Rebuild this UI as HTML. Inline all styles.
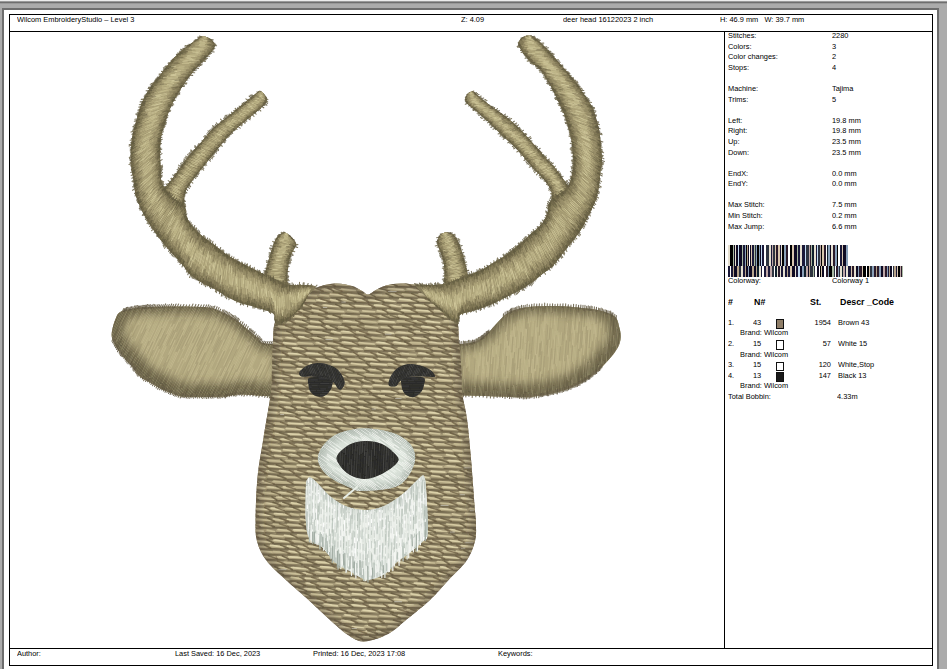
<!DOCTYPE html>
<html><head><meta charset="utf-8">
<style>
html,body{margin:0;padding:0;}
body{width:947px;height:669px;overflow:hidden;position:relative;background:#ababab;font-family:"Liberation Sans",sans-serif;color:#111;}
.a{position:absolute;}
.t{position:absolute;font-size:7.8px;line-height:9px;white-space:nowrap;transform:scaleX(0.95);transform-origin:0 0;color:#000;}
.ln{position:absolute;background:#000;}
</style></head><body>
<div class="a" style="left:0;top:0;width:947px;height:1px;background:#ededed"></div>
<div class="a" style="left:0;top:1px;width:947px;height:1px;background:#9a9a9a"></div>
<div class="a" style="left:0;top:2px;width:947px;height:1px;background:#6e6e6e"></div>
<div class="a" style="left:0;top:3px;width:947px;height:1px;background:#999"></div>
<!-- page -->
<div class="a" style="left:2px;top:8px;width:937px;height:661px;background:#6d6d6d"></div>
<div class="a" style="left:4px;top:10px;width:933px;height:659px;background:#fff"></div>
<!-- frame -->
<div class="ln" style="left:9px;top:14px;width:924px;height:1px"></div>
<div class="ln" style="left:9px;top:31px;width:924px;height:1px"></div>
<div class="ln" style="left:9px;top:648px;width:924px;height:1px"></div>
<div class="ln" style="left:9px;top:665px;width:924px;height:1px"></div>
<div class="ln" style="left:9px;top:14px;width:1px;height:652px"></div>
<div class="ln" style="left:932px;top:14px;width:1px;height:652px"></div>
<div class="ln" style="left:724px;top:31px;width:1px;height:617px"></div>

<!-- header texts -->
<div class="t" style="left:17px;top:15px">Wilcom EmbroideryStudio – Level 3</div>
<div class="t" style="left:461px;top:15px">Z: 4.09</div>
<div class="t" style="left:563px;top:15px">deer head 16122023 2 inch</div>
<div class="t" style="left:720px;top:15px">H: 46.9 mm&nbsp;&nbsp; W: 39.7 mm</div>

<!-- footer texts -->
<div class="t" style="left:17px;top:649px">Author:</div>
<div class="t" style="left:175px;top:649px">Last Saved: 16 Dec, 2023</div>
<div class="t" style="left:313px;top:649px">Printed: 16 Dec, 2023 17:08</div>
<div class="t" style="left:498px;top:649px">Keywords:</div>

<!-- right panel -->
<div id="panel">
<div class="t" style="left:728px;top:31.3px">Stitches:</div>
<div class="t" style="left:832px;top:31.3px">2280</div>
<div class="t" style="left:728px;top:41.9px">Colors:</div>
<div class="t" style="left:832px;top:41.9px">3</div>
<div class="t" style="left:728px;top:52.4px">Color changes:</div>
<div class="t" style="left:832px;top:52.4px">2</div>
<div class="t" style="left:728px;top:63.0px">Stops:</div>
<div class="t" style="left:832px;top:63.0px">4</div>
<div class="t" style="left:728px;top:84.2px">Machine:</div>
<div class="t" style="left:832px;top:84.2px">Tajima</div>
<div class="t" style="left:728px;top:94.7px">Trims:</div>
<div class="t" style="left:832px;top:94.7px">5</div>
<div class="t" style="left:728px;top:115.9px">Left:</div>
<div class="t" style="left:832px;top:115.9px">19.8 mm</div>
<div class="t" style="left:728px;top:126.4px">Right:</div>
<div class="t" style="left:832px;top:126.4px">19.8 mm</div>
<div class="t" style="left:728px;top:137.0px">Up:</div>
<div class="t" style="left:832px;top:137.0px">23.5 mm</div>
<div class="t" style="left:728px;top:147.6px">Down:</div>
<div class="t" style="left:832px;top:147.6px">23.5 mm</div>
<div class="t" style="left:728px;top:168.7px">EndX:</div>
<div class="t" style="left:832px;top:168.7px">0.0 mm</div>
<div class="t" style="left:728px;top:179.3px">EndY:</div>
<div class="t" style="left:832px;top:179.3px">0.0 mm</div>
<div class="t" style="left:728px;top:200.4px">Max Stitch:</div>
<div class="t" style="left:832px;top:200.4px">7.5 mm</div>
<div class="t" style="left:728px;top:211.0px">Min Stitch:</div>
<div class="t" style="left:832px;top:211.0px">0.2 mm</div>
<div class="t" style="left:728px;top:221.6px">Max Jump:</div>
<div class="t" style="left:832px;top:221.6px">6.6 mm</div>
<svg class="a" style="left:0;top:0" width="947" height="669" viewBox="0 0 947 669" shape-rendering="crispEdges"><rect x="728" y="245" width="2" height="21" fill="#e6e0d0"/><rect x="730" y="245" width="3" height="21" fill="#000000"/><rect x="733" y="245" width="1" height="21" fill="#a9b9a2"/><rect x="734" y="245" width="1" height="21" fill="#0e0a22"/><rect x="735" y="245" width="1" height="21" fill="#e6e0d0"/><rect x="736" y="245" width="2" height="21" fill="#0e0a22"/><rect x="738" y="245" width="1" height="21" fill="#c4dcf2"/><rect x="739" y="245" width="3" height="21" fill="#0e0a22"/><rect x="742" y="245" width="1" height="21" fill="#a9b9a2"/><rect x="743" y="245" width="2" height="21" fill="#1a1838"/><rect x="745" y="245" width="1" height="21" fill="#8aa0b8"/><rect x="746" y="245" width="1" height="21" fill="#000000"/><rect x="747" y="245" width="1" height="21" fill="#b8a48c"/><rect x="748" y="245" width="1" height="21" fill="#0e0a22"/><rect x="749" y="245" width="1" height="21" fill="#ffffff"/><rect x="750" y="245" width="1" height="21" fill="#0e0a22"/><rect x="751" y="245" width="1" height="21" fill="#d8c6ae"/><rect x="752" y="245" width="2" height="21" fill="#1a1838"/><rect x="754" y="245" width="1" height="21" fill="#a9b9a2"/><rect x="755" y="245" width="1" height="21" fill="#2e3440"/><rect x="756" y="245" width="1" height="21" fill="#8aa0b8"/><rect x="757" y="245" width="2" height="21" fill="#000000"/><rect x="759" y="245" width="1" height="21" fill="#8aa0b8"/><rect x="760" y="245" width="1" height="21" fill="#0e0a22"/><rect x="761" y="245" width="1" height="21" fill="#c4dcf2"/><rect x="762" y="245" width="2" height="21" fill="#1a1838"/><rect x="764" y="245" width="2" height="21" fill="#ffffff"/><rect x="766" y="245" width="3" height="21" fill="#2e3440"/><rect x="769" y="245" width="2" height="21" fill="#e6e0d0"/><rect x="771" y="245" width="1" height="21" fill="#1a1838"/><rect x="772" y="245" width="1" height="21" fill="#bda6a6"/><rect x="773" y="245" width="2" height="21" fill="#2e3440"/><rect x="775" y="245" width="1" height="21" fill="#d8c6ae"/><rect x="776" y="245" width="2" height="21" fill="#2a1a2a"/><rect x="778" y="245" width="2" height="21" fill="#d8c6ae"/><rect x="780" y="245" width="1" height="21" fill="#1a1838"/><rect x="781" y="245" width="1" height="21" fill="#e6e0d0"/><rect x="782" y="245" width="2" height="21" fill="#000000"/><rect x="784" y="245" width="2" height="21" fill="#8aa0b8"/><rect x="786" y="245" width="2" height="21" fill="#2a1a2a"/><rect x="788" y="245" width="2" height="21" fill="#ffffff"/><rect x="790" y="245" width="2" height="21" fill="#000000"/><rect x="792" y="245" width="2" height="21" fill="#d8c6ae"/><rect x="794" y="245" width="3" height="21" fill="#0e0a22"/><rect x="797" y="245" width="1" height="21" fill="#a9b9a2"/><rect x="798" y="245" width="2" height="21" fill="#1a1838"/><rect x="800" y="245" width="2" height="21" fill="#e6e0d0"/><rect x="802" y="245" width="3" height="21" fill="#1a1838"/><rect x="805" y="245" width="1" height="21" fill="#c4dcf2"/><rect x="806" y="245" width="3" height="21" fill="#2e3440"/><rect x="809" y="245" width="1" height="21" fill="#bda6a6"/><rect x="810" y="245" width="1" height="21" fill="#2a1a2a"/><rect x="811" y="245" width="1" height="21" fill="#a9b9a2"/><rect x="812" y="245" width="2" height="21" fill="#10202c"/><rect x="814" y="245" width="2" height="21" fill="#e6e0d0"/><rect x="816" y="245" width="1" height="21" fill="#1a1838"/><rect x="817" y="245" width="1" height="21" fill="#c4dcf2"/><rect x="818" y="245" width="2" height="21" fill="#2e3440"/><rect x="820" y="245" width="1" height="21" fill="#bda6a6"/><rect x="821" y="245" width="1" height="21" fill="#000000"/><rect x="822" y="245" width="2" height="21" fill="#d8c6ae"/><rect x="824" y="245" width="2" height="21" fill="#2a1a2a"/><rect x="826" y="245" width="1" height="21" fill="#ffffff"/><rect x="827" y="245" width="1" height="21" fill="#10202c"/><rect x="828" y="245" width="2" height="21" fill="#8aa0b8"/><rect x="830" y="245" width="1" height="21" fill="#0e0a22"/><rect x="831" y="245" width="2" height="21" fill="#e6e0d0"/><rect x="833" y="245" width="2" height="21" fill="#2a1a2a"/><rect x="835" y="245" width="2" height="21" fill="#8aa0b8"/><rect x="837" y="245" width="1" height="21" fill="#000000"/><rect x="838" y="245" width="2" height="21" fill="#ffffff"/><rect x="840" y="245" width="2" height="21" fill="#1a1838"/><rect x="842" y="245" width="1" height="21" fill="#d8c6ae"/><rect x="843" y="245" width="3" height="21" fill="#0e0a22"/><rect x="846" y="245" width="2" height="21" fill="#8aa0b8"/><rect x="728" y="266" width="2" height="11" fill="#1a1838"/><rect x="730" y="266" width="1" height="11" fill="#ffffff"/><rect x="731" y="266" width="2" height="11" fill="#1a1838"/><rect x="733" y="266" width="1" height="11" fill="#b8a48c"/><rect x="734" y="266" width="3" height="11" fill="#0e0a22"/><rect x="737" y="266" width="2" height="11" fill="#b8a48c"/><rect x="739" y="266" width="2" height="11" fill="#2e3440"/><rect x="741" y="266" width="2" height="11" fill="#e6e0d0"/><rect x="743" y="266" width="2" height="11" fill="#1a1838"/><rect x="745" y="266" width="1" height="11" fill="#b8a48c"/><rect x="746" y="266" width="2" height="11" fill="#0e0a22"/><rect x="748" y="266" width="1" height="11" fill="#8aa0b8"/><rect x="749" y="266" width="3" height="11" fill="#0e0a22"/><rect x="752" y="266" width="2" height="11" fill="#b8a48c"/><rect x="754" y="266" width="2" height="11" fill="#0e0a22"/><rect x="756" y="266" width="1" height="11" fill="#b8a48c"/><rect x="757" y="266" width="2" height="11" fill="#10202c"/><rect x="759" y="266" width="2" height="11" fill="#e6e0d0"/><rect x="761" y="266" width="1" height="11" fill="#1a1838"/><rect x="762" y="266" width="2" height="11" fill="#ffffff"/><rect x="764" y="266" width="2" height="11" fill="#1a1838"/><rect x="766" y="266" width="2" height="11" fill="#bda6a6"/><rect x="768" y="266" width="2" height="11" fill="#1a1838"/><rect x="770" y="266" width="2" height="11" fill="#bda6a6"/><rect x="772" y="266" width="2" height="11" fill="#2e3440"/><rect x="774" y="266" width="1" height="11" fill="#ffffff"/><rect x="775" y="266" width="2" height="11" fill="#10202c"/><rect x="777" y="266" width="1" height="11" fill="#e6e0d0"/><rect x="778" y="266" width="2" height="11" fill="#2a1a2a"/><rect x="780" y="266" width="1" height="11" fill="#e6e0d0"/><rect x="781" y="266" width="2" height="11" fill="#1a1838"/><rect x="783" y="266" width="2" height="11" fill="#e6e0d0"/><rect x="785" y="266" width="2" height="11" fill="#1a1838"/><rect x="787" y="266" width="1" height="11" fill="#b8a48c"/><rect x="788" y="266" width="2" height="11" fill="#1a1838"/><rect x="790" y="266" width="2" height="11" fill="#d8c6ae"/><rect x="792" y="266" width="3" height="11" fill="#0e0a22"/><rect x="795" y="266" width="1" height="11" fill="#e6e0d0"/><rect x="796" y="266" width="2" height="11" fill="#1a1838"/><rect x="798" y="266" width="2" height="11" fill="#c4dcf2"/><rect x="800" y="266" width="2" height="11" fill="#0e0a22"/><rect x="802" y="266" width="2" height="11" fill="#8aa0b8"/><rect x="804" y="266" width="2" height="11" fill="#10202c"/><rect x="806" y="266" width="2" height="11" fill="#bda6a6"/><rect x="808" y="266" width="1" height="11" fill="#0e0a22"/><rect x="809" y="266" width="1" height="11" fill="#b8a48c"/><rect x="810" y="266" width="3" height="11" fill="#2e3440"/><rect x="813" y="266" width="1" height="11" fill="#a9b9a2"/><rect x="814" y="266" width="1" height="11" fill="#2e3440"/><rect x="815" y="266" width="2" height="11" fill="#ffffff"/><rect x="817" y="266" width="2" height="11" fill="#0e0a22"/><rect x="819" y="266" width="1" height="11" fill="#ffffff"/><rect x="820" y="266" width="1" height="11" fill="#000000"/><rect x="821" y="266" width="1" height="11" fill="#d8c6ae"/><rect x="822" y="266" width="2" height="11" fill="#0e0a22"/><rect x="824" y="266" width="2" height="11" fill="#ffffff"/><rect x="826" y="266" width="2" height="11" fill="#2a1a2a"/><rect x="828" y="266" width="1" height="11" fill="#8aa0b8"/><rect x="829" y="266" width="3" height="11" fill="#000000"/><rect x="832" y="266" width="2" height="11" fill="#a9b9a2"/><rect x="834" y="266" width="1" height="11" fill="#2e3440"/><rect x="835" y="266" width="1" height="11" fill="#ffffff"/><rect x="836" y="266" width="2" height="11" fill="#2a1a2a"/><rect x="838" y="266" width="1" height="11" fill="#8aa0b8"/><rect x="839" y="266" width="1" height="11" fill="#2e3440"/><rect x="840" y="266" width="2" height="11" fill="#e6e0d0"/><rect x="842" y="266" width="1" height="11" fill="#10202c"/><rect x="843" y="266" width="2" height="11" fill="#bda6a6"/><rect x="845" y="266" width="1" height="11" fill="#1a1838"/><rect x="846" y="266" width="2" height="11" fill="#e6e0d0"/><rect x="848" y="266" width="3" height="11" fill="#1a1838"/><rect x="851" y="266" width="1" height="11" fill="#d8c6ae"/><rect x="852" y="266" width="2" height="11" fill="#2a1a2a"/><rect x="854" y="266" width="2" height="11" fill="#e6e0d0"/><rect x="856" y="266" width="2" height="11" fill="#0e0a22"/><rect x="858" y="266" width="1" height="11" fill="#8aa0b8"/><rect x="859" y="266" width="3" height="11" fill="#2a1a2a"/><rect x="862" y="266" width="1" height="11" fill="#d8c6ae"/><rect x="863" y="266" width="3" height="11" fill="#000000"/><rect x="866" y="266" width="1" height="11" fill="#ffffff"/><rect x="867" y="266" width="2" height="11" fill="#000000"/><rect x="869" y="266" width="1" height="11" fill="#d8c6ae"/><rect x="870" y="266" width="2" height="11" fill="#2e3440"/><rect x="872" y="266" width="2" height="11" fill="#8aa0b8"/><rect x="874" y="266" width="2" height="11" fill="#2a1a2a"/><rect x="876" y="266" width="1" height="11" fill="#b8a48c"/><rect x="877" y="266" width="2" height="11" fill="#2a1a2a"/><rect x="879" y="266" width="2" height="11" fill="#8aa0b8"/><rect x="881" y="266" width="2" height="11" fill="#0e0a22"/><rect x="883" y="266" width="2" height="11" fill="#bda6a6"/><rect x="885" y="266" width="2" height="11" fill="#2a1a2a"/><rect x="887" y="266" width="1" height="11" fill="#8aa0b8"/><rect x="888" y="266" width="1" height="11" fill="#1a1838"/><rect x="889" y="266" width="1" height="11" fill="#b8a48c"/><rect x="890" y="266" width="2" height="11" fill="#0e0a22"/><rect x="892" y="266" width="1" height="11" fill="#ffffff"/><rect x="893" y="266" width="1" height="11" fill="#2e3440"/><rect x="894" y="266" width="2" height="11" fill="#b8a48c"/><rect x="896" y="266" width="1" height="11" fill="#1a1838"/><rect x="897" y="266" width="1" height="11" fill="#d8c6ae"/><rect x="898" y="266" width="2" height="11" fill="#000000"/><rect x="900" y="266" width="1" height="11" fill="#bda6a6"/><rect x="901" y="266" width="1" height="11" fill="#2a1a2a"/><rect x="902" y="266" width="1" height="11" fill="#a9b9a2"/></svg>
<div class="t" style="left:728px;top:275.5px">Colorway:</div>
<div class="t" style="left:832px;top:275.5px">Colorway 1</div>
<div class="t" style="left:728px;top:297px;font-size:9.3px;font-weight:bold;line-height:11px">#</div>
<div class="t" style="left:753.5px;top:297px;font-size:9.3px;font-weight:bold;line-height:11px">N#</div>
<div class="t" style="left:810px;top:297px;font-size:9.3px;font-weight:bold;line-height:11px">St.</div>
<div class="t" style="left:840px;top:297px;font-size:9.3px;font-weight:bold;line-height:11px">Descr _Code</div>
<div class="t" style="left:728px;top:317.7px">1.</div>
<div class="t" style="left:752.5px;top:317.7px">43</div>
<div class="a" style="left:776px;top:319.2px;width:6px;height:7.5px;border:1px solid #111;background:#8f7e68"></div>
<div class="t" style="left:780px;width:51px;text-align:right;transform-origin:100% 0;top:317.7px">1954</div>
<div class="t" style="left:837.5px;top:317.7px">Brown 43</div>
<div class="t" style="left:740px;top:328.3px">Brand: Wilcom</div>
<div class="t" style="left:728px;top:338.9px">2.</div>
<div class="t" style="left:752.5px;top:338.9px">15</div>
<div class="a" style="left:776px;top:340.4px;width:6px;height:7.5px;border:1px solid #111;background:#ffffff"></div>
<div class="t" style="left:780px;width:51px;text-align:right;transform-origin:100% 0;top:338.9px">57</div>
<div class="t" style="left:837.5px;top:338.9px">White 15</div>
<div class="t" style="left:740px;top:349.5px">Brand: Wilcom</div>
<div class="t" style="left:728px;top:360.1px">3.</div>
<div class="t" style="left:752.5px;top:360.1px">15</div>
<div class="a" style="left:776px;top:361.6px;width:6px;height:7.5px;border:1px solid #111;background:#ffffff"></div>
<div class="t" style="left:780px;width:51px;text-align:right;transform-origin:100% 0;top:360.1px">120</div>
<div class="t" style="left:837.5px;top:360.1px">White,Stop</div>
<div class="t" style="left:728px;top:370.7px">4.</div>
<div class="t" style="left:752.5px;top:370.7px">13</div>
<div class="a" style="left:776px;top:372.2px;width:6px;height:7.5px;border:1px solid #111;background:#1a1a1a"></div>
<div class="t" style="left:780px;width:51px;text-align:right;transform-origin:100% 0;top:370.7px">147</div>
<div class="t" style="left:837.5px;top:370.7px">Black 13</div>
<div class="t" style="left:740px;top:381.3px">Brand: Wilcom</div>
<div class="t" style="left:728px;top:391.9px">Total Bobbin:</div>
<div class="t" style="left:836.5px;top:391.9px">4.33m</div>
</div>

<!-- deer -->
<svg id="deer" class="a" style="left:0;top:0" width="947" height="669" viewBox="0 0 947 669">
<defs><filter id="soft" x="-5%" y="-5%" width="110%" height="110%"><feGaussianBlur stdDeviation="0.35"/></filter><filter id="soft2" x="-5%" y="-5%" width="110%" height="110%"><feGaussianBlur stdDeviation="0.55"/></filter><filter id="blur5" x="-20%" y="-20%" width="140%" height="140%"><feGaussianBlur stdDeviation="5"/></filter><filter id="blur3" x="-20%" y="-20%" width="140%" height="140%"><feGaussianBlur stdDeviation="3"/></filter></defs>
<g filter="url(#soft)">
<clipPath id="le"><path d="M112.0,331.0C112.5,327.7 114.0,322.2 115.5,319.0C117.0,315.8 117.2,313.5 120.7,311.7C124.2,309.9 131.2,308.8 136.4,308.0C141.6,307.2 145.6,307.2 152.0,307.0C158.4,306.8 165.7,306.4 175.0,306.5C184.3,306.6 199.8,306.5 207.6,307.4C215.4,308.3 217.2,309.9 222.0,312.0C226.8,314.1 232.1,317.2 236.3,320.0C240.5,322.8 243.4,326.0 247.0,329.0C250.6,332.0 255.3,335.5 257.8,337.8C260.3,340.1 259.5,341.7 262.0,342.7C264.5,343.7 269.4,343.8 272.7,344.0C276.0,344.2 280.4,335.2 282.0,344.0C283.6,352.8 283.7,387.8 282.0,396.5C280.3,405.2 279.0,396.8 272.0,396.5C265.0,396.2 247.9,394.5 240.0,394.5C232.1,394.5 230.6,396.1 224.5,396.5C218.4,396.9 210.5,397.0 203.4,397.0C196.3,397.0 187.5,397.1 182.2,396.5C176.9,395.9 175.2,394.6 171.7,393.3C168.2,392.1 164.6,390.8 161.1,389.0C157.6,387.2 154.1,384.8 150.6,382.7C147.1,380.6 143.3,379.3 140.0,376.4C136.7,373.4 133.3,367.7 131.0,365.0C128.7,362.3 128.2,362.6 126.0,360.0C123.8,357.4 119.9,352.9 117.6,349.4C115.3,345.9 113.2,342.1 112.3,339.0C111.4,335.9 111.5,334.3 112.0,331.0Z"/></clipPath>
<path d="M112.0,331.0C112.5,327.7 114.0,322.2 115.5,319.0C117.0,315.8 117.2,313.5 120.7,311.7C124.2,309.9 131.2,308.8 136.4,308.0C141.6,307.2 145.6,307.2 152.0,307.0C158.4,306.8 165.7,306.4 175.0,306.5C184.3,306.6 199.8,306.5 207.6,307.4C215.4,308.3 217.2,309.9 222.0,312.0C226.8,314.1 232.1,317.2 236.3,320.0C240.5,322.8 243.4,326.0 247.0,329.0C250.6,332.0 255.3,335.5 257.8,337.8C260.3,340.1 259.5,341.7 262.0,342.7C264.5,343.7 269.4,343.8 272.7,344.0C276.0,344.2 280.4,335.2 282.0,344.0C283.6,352.8 283.7,387.8 282.0,396.5C280.3,405.2 279.0,396.8 272.0,396.5C265.0,396.2 247.9,394.5 240.0,394.5C232.1,394.5 230.6,396.1 224.5,396.5C218.4,396.9 210.5,397.0 203.4,397.0C196.3,397.0 187.5,397.1 182.2,396.5C176.9,395.9 175.2,394.6 171.7,393.3C168.2,392.1 164.6,390.8 161.1,389.0C157.6,387.2 154.1,384.8 150.6,382.7C147.1,380.6 143.3,379.3 140.0,376.4C136.7,373.4 133.3,367.7 131.0,365.0C128.7,362.3 128.2,362.6 126.0,360.0C123.8,357.4 119.9,352.9 117.6,349.4C115.3,345.9 113.2,342.1 112.3,339.0C111.4,335.9 111.5,334.3 112.0,331.0Z" fill="#b5ab82"/>
<g clip-path="url(#le)"><path d="M112.0,331.0C112.5,327.7 114.0,322.2 115.5,319.0C117.0,315.8 117.2,313.5 120.7,311.7C124.2,309.9 131.2,308.8 136.4,308.0C141.6,307.2 145.6,307.2 152.0,307.0C158.4,306.8 165.7,306.4 175.0,306.5C184.3,306.6 199.8,306.5 207.6,307.4C215.4,308.3 217.2,309.9 222.0,312.0C226.8,314.1 232.1,317.2 236.3,320.0C240.5,322.8 243.4,326.0 247.0,329.0C250.6,332.0 255.3,335.5 257.8,337.8C260.3,340.1 259.5,341.7 262.0,342.7C264.5,343.7 269.4,343.8 272.7,344.0C276.0,344.2 280.4,335.2 282.0,344.0C283.6,352.8 283.7,387.8 282.0,396.5C280.3,405.2 279.0,396.8 272.0,396.5C265.0,396.2 247.9,394.5 240.0,394.5C232.1,394.5 230.6,396.1 224.5,396.5C218.4,396.9 210.5,397.0 203.4,397.0C196.3,397.0 187.5,397.1 182.2,396.5C176.9,395.9 175.2,394.6 171.7,393.3C168.2,392.1 164.6,390.8 161.1,389.0C157.6,387.2 154.1,384.8 150.6,382.7C147.1,380.6 143.3,379.3 140.0,376.4C136.7,373.4 133.3,367.7 131.0,365.0C128.7,362.3 128.2,362.6 126.0,360.0C123.8,357.4 119.9,352.9 117.6,349.4C115.3,345.9 113.2,342.1 112.3,339.0C111.4,335.9 111.5,334.3 112.0,331.0Z" fill="none" stroke="#554d38" stroke-width="20" filter="url(#blur5)" opacity="0.95" transform="translate(2,-3)"/></g><g clip-path="url(#le)"><path d="M282.5 396.5l-8.4 18M284.5 386.2l-8.4 17.9M288.7 367.6l-9.1 19.4M289.6 362.6l-9.3 19.9M289.3 353.5l-7.5 16.9M275 385.1l-9.1 19.4M276.6 377.8l-5.6 12M275.2 375.1l-5.2 10.9M269.7 386.9l-9 19.1M269.3 384.2l-7.3 16.1M284.8 348.5l-8.9 19.2M272.8 367.9l-9.3 19.6M259.3 393.8l-4.9 10.6M277.7 351l-5.9 12.9M256.3 397.4l-9.3 19.8M263.2 379.5l-9.1 19M253.1 397.6l-7.9 17M270.4 357.3l-6.7 14.9M281 332.1l-7.4 15.4M289.2 311.5l-6.6 13.6M282.4 325.4l-5.4 11.6M268.3 356.3l-5.8 11.8M262.4 368.8l-5.5 11.4M265.5 359.2l-8 16.7M250.9 390.4l-7.5 16.4M263.3 357.5l-7 15.3M255.5 374l-7.7 16.6M284.7 308.5l-7.4 15.9M256.1 369.8l-5 10.3M251 380.7l-6.9 14.4M286.4 301.4l-7.7 17.3M270.9 335l-5.3 11.2M280.1 312l-5.5 11.9M268.8 336.3l-5.5 12M253.7 369.1l-6.5 14.1M285.3 297.8l-5.1 10.9M252.5 367.9l-8.1 17.4M244.1 386.5l-9.4 19.8M282.6 297.9l-5.3 11M261.8 342.6l-5.5 11.2M256.2 354.6l-6.4 13.4M240.5 388.2l-8.3 17.2M281.9 296.5l-8.5 17.6M272.9 315.4l-8.8 18.9M254 355.9l-8.6 18.5M239.1 387.9l-5.3 11.3M275 301.4l-7.3 15.9M268.3 313.1l-7.1 14.9M261 328.4l-5.7 12.4M255.1 341.3l-7.8 16.8M237.6 379.2l-8.2 17.4M277 291.3l-6.7 14.6M240.3 369.9l-5.4 11.3M257.8 329.2l-7.3 15.6M250.1 345.9l-7.6 16.5M241.9 363.6l-9.4 19.7M255.5 331l-6.7 14.2M236.5 372.1l-5.7 11.8M248.9 342.5l-4.9 10.2M247.8 341.7l-7.3 15.1M232.1 375.4l-6.2 13.1M242.1 350.3l-8.2 17.6M263.8 297.9l-5.1 10.7M231.9 365.9l-6.6 14.6M256.3 308.3l-7.4 15.8M243.5 335.6l-6.1 13M216.1 394.5l-7.3 15.1M230.5 360.4l-4.9 10.5M224.7 372.3l-6.4 14M225.6 367.4l-8.2 18.1M243.2 323.9l-7.2 15M235.7 340l-6.4 13.4M229.1 353.9l-5.3 11.6M256.6 291.7l-9.2 19.8M221 368.4l-4.8 10.4M215.8 379.5l-5.1 10.4M242.4 319.2l-8.6 18.6M234.2 330.5l-9.2 19.8M223.7 350.1l-6.1 12.7M237 318.6l-9.2 19.6M244.9 295.1l-5.8 12.8M224.3 339.7l-5.9 12.5M201.3 388.7l-7.7 16.5M233.7 316.4l-7.4 15.4M213.9 352.9l-5 10.2M243.2 287.1l-8.9 19M227.5 320.2l-7.5 15.9M206.8 365l-9.2 19.6M217.6 335.1l-4.8 11M197.3 379.1l-8.2 17.6M219.5 328.2l-4.6 10.2M197.1 372.9l-5.3 11.4M211.1 340.2l-5.6 11.7M199.5 365.3l-5.6 11.8M230.8 294.7l-8.4 18M222.1 313.7l-8 16.7M207.7 344.6l-8.9 18.6M225.8 302.7l-9.3 19.3M203.4 350.7l-4.9 10.6M222.6 306.3l-6.3 13.9M195.7 364.4l-6 12.4M180 397.8l-9.2 19.3M208.7 333.1l-6.6 14.3M201.4 348.5l-8.1 17.1M181.6 388.2l-5.3 11M196.2 353.9l-7.8 16.7M180 388.1l-8.3 18.4M218.8 301.8l-9 19.4M180.7 383.6l-8.3 18.3M174.3 394.4l-8.5 18.4M207.6 320.4l-8.8 18.3M198.4 339.5l-7.1 15.7M173.7 390.1l-7.3 15.6M193.5 343.8l-8.5 18.2M170.7 393.3l-8.4 17.8M197.4 329.1l-6.7 14.4M190.4 344.5l-7.2 15.5M202.2 316.7l-5 10.5M182.7 358.1l-7.8 16.6M170.7 380.6l-7 14.9M163.3 396.2l-6.2 13.7M190.8 331.9l-7.9 16.8M201.1 306.6l-6.3 13.2M179.7 349.4l-9.1 19.4M176.5 352.6l-8.7 19.2M197.6 304.7l-6.6 14.5M160.4 384.4l-5.3 11M154.9 396.2l-7.9 16.8M196.1 305.2l-7.8 16.1M187.9 322l-7.9 16.9M199 295l-6.8 15.2M191.8 311.1l-8.7 18.2M155.2 389.5l-6.4 13.3M190.9 307.1l-5.6 11.7M175.1 340.2l-6.6 14.4M147.9 395.9l-6.2 13.2M176 332.6l-5.5 11.9M194.5 289.6l-9.2 19.8M163.2 357.2l-5.8 11.9M186.4 304.2l-5.5 11.2M180.8 316.2l-6.5 13.6M166.1 347l-5.9 12.8M145.4 391.6l-5.6 12.3M174.3 324l-5.4 11.7M168.4 336.7l-7.8 16.2M149.6 377.1l-5.7 11.8M189.3 288.5l-8.3 17.7M171.4 327.3l-8.4 18M147.5 377.8l-8.6 18.7M184.5 295.9l-6.7 14.6M171.3 323.8l-4.9 10.4M159.4 349.5l-8.2 18M178 306.2l-6.2 14.2M177.4 305.1l-6.1 12.5M158 346.5l-5.2 11.4M175.2 306.8l-6 12.8M168.7 320.1l-8.5 18.3M160 336.4l-6.3 13.3M132.8 394.3l-5.7 11.9M170.5 310.1l-8.1 17.6M135.7 384.8l-5.7 12.5M129.5 397.9l-6.6 14.9M161.5 326.8l-5.8 12.2M155.6 339.2l-8.3 18.3M139.7 373.7l-8.3 17.6M131.2 391.9l-9.1 19M166.4 312.7l-5.7 12.4M159.2 325.1l-6.3 13.6M152.6 339.3l-6.6 14.4M131.8 383.9l-5 11.4M171.5 296.2l-6.8 14.4M148.2 346.1l-8.5 17.7M154.6 329.6l-5.5 11.2M132.1 377.5l-5.4 11.5M164.8 304l-5.6 11.9M146.2 344.3l-4.7 10.1M166.1 298l-5.4 11.7M147.9 337.5l-9.5 19.9M162.1 301l-5.1 10.4M151 324.5l-8.9 18.8M135.9 356.8l-6.6 14M128.9 371.5l-7.8 17M121.2 388.7l-9 19M154.9 312.8l-6.9 14.8M137.6 347.5l-8.9 18.2M133.6 352.4l-6.1 13.3M150.3 313.8l-9.2 19.2M122.8 373l-7.7 16.4M154.3 301.8l-7.1 15.5M124.3 366.2l-6.3 13.4M112.1 392.7l-4.8 10.6M154.9 297.3l-4.8 10.6M149.8 308.5l-7.9 17M141.7 326.3l-6.8 14.6M155.9 292.5l-7 15.3M148.5 308.7l-4.9 10.1M132.5 339.6l-5.4 11.8M126.6 352.1l-8.7 18.9M117.5 372l-7.6 16.1M151.3 296l-8 17.3M143.2 313.8l-5.5 11.2M132.2 337.2l-8.6 18.7M115 373.7l-5.1 11M145.3 305.8l-5.3 11.8M131.5 332.9l-9 18.6M125.5 341.9l-8.8 18.9M120.1 350.9l-7.3 15.5M136.2 313.2l-5.3 11M130.4 319.5l-8 17.4M113 356.9l-8.8 19.1M123.4 331.2l-4.6 10M121 330.8l-7 15M113.3 347l-8.3 17.9M121.4 326.4l-5.7 12.1M128 309.1l-9.1 19.3M134.4 289.3l-9.1 19.6M111.4 338.9l-5.5 11.3M118.6 311.1l-8.5 17.7M117.7 309.4l-7.6 16.7M122.5 296.6l-6.7 13.8M115.6 310.8l-8.9 19.8" stroke="#d2c99d" stroke-width="0.8" stroke-opacity="0.5" fill="none" stroke-linecap="round"/>
<path d="M280 383.4l-9.3 19.2M282.7 370.9l-8.4 18.7M281.4 370.8l-5.9 13M278.1 372.2l-7.4 15.2M270.9 387.7l-8.9 19.2M289.3 345.1l-7.3 15M268.3 383.3l-6.6 14.1M279.5 356.2l-7.6 16.6M267.4 376l-7.6 17M285.6 334.7l-7.4 15.7M264.8 378.7l-8.1 17.4M282.5 337.5l-5.2 11.8M276.4 350.4l-4.6 10.5M290.2 318.3l-8.3 17.6M281.6 336.7l-4.7 10.4M276.7 347.6l-7 14.6M269 363.3l-7.7 17.2M279.4 338.4l-8.4 18.4M273.5 347.8l-7.8 16.4M276.4 338.3l-7.9 17.4M256.4 381.5l-6 13.3M277.8 329.6l-6.9 14.7M272.7 337.6l-9 19.5M263.6 353.2l-7.2 16.2M265.5 346.7l-6.5 13.8M258.8 361.4l-9.1 19.4M243.1 394.7l-6.2 12.9M263.2 348.8l-9.3 19.8M246.4 384.2l-7.9 17M280.1 309.1l-7.2 15.1M259.5 353.2l-6.1 13.5M237.6 396.9l-6 12.9M270.4 324.1l-8.1 17.1M249.3 369.3l-8.8 18.4M263.9 334.9l-9.4 19.9M273.6 310.9l-5.5 11.9M260.7 338.6l-4.8 10.4M250.3 361l-6.4 13.6M275.5 303.5l-5.9 13M255.1 347.3l-8.8 18.9M238.3 383.2l-5 11.1M254.1 346.6l-7.5 16.3M276.4 295.5l-8 17.1M246.9 358.7l-9.3 19.9M248.2 352.6l-7.5 16.2M227.5 397.6l-5.8 12.3M232.3 384.3l-5.6 11.5M261.9 317.6l-6.2 12.9M272.1 292.7l-6.8 14.2M255.1 326.1l-7 14.4M258.2 316.2l-5.9 12.1M247.9 335.6l-6.9 14.8M226.6 380.9l-6.1 12.6M261.3 299.9l-6.4 14.2M241.8 342.2l-6.4 13.5M265.4 288l-8.8 19.2M221 383.5l-4.9 10.6M237.4 345.4l-6.8 14.1M257.4 298.9l-5.9 13.5M239.7 337.7l-6.3 13.5M232.7 352l-6.5 14M258.8 293.1l-7 15.4M223.5 366.2l-9.2 19.7M229.8 349.5l-8.3 17.8M210.6 390.2l-4.5 10.1M233 339l-8.5 18.3M224.5 357.8l-8.8 18.4M215.4 377.6l-6.6 13.7M222.4 359.2l-6.4 13.6M215.4 374l-5.6 12.1M215.4 370.9l-5 10.7M238.2 319.1l-5.5 11.7M221.9 350.5l-8.6 18.7M236 317.9l-6.2 13M223.3 345.1l-5.9 12.5M217 358.5l-4.9 10.1M230 327.3l-5.3 11.2M226 332.5l-7.1 16M218.4 349.1l-5.4 11.7M212.6 358.4l-5.1 11.2M201.2 383l-7.3 15.7M208.8 363.6l-5.7 12M194.9 393.1l-8 17.7M212.1 353.6l-5.1 10.5M197.2 385.2l-4.8 10.8M191.9 396.3l-8.3 18.2M218.9 335.9l-5.8 12.1M233.7 301.2l-6 13M231.1 303.8l-5 10.5M210.4 344.6l-6.8 14.4M203.5 359.3l-5.6 12.5M219.2 322.7l-8 17.1M191.2 379.9l-8.6 18M189.4 380.6l-7.3 15.3M180 394.7l-6.6 14.1M224.2 296.9l-7.5 15.6M195.5 358l-4.7 10.3M208.8 327.1l-6.2 12.5M201.6 338.7l-4.8 10.9M189 365.6l-7.9 17.1M220.3 293.2l-6.2 12.7M213.8 306.4l-6.1 13.6M173.2 394.1l-5.4 11.1M190.3 354l-7.8 16.8M182.2 371.1l-8.4 18.7M184.5 363.2l-5.9 13.3M210.7 304.3l-4.8 10.1M177.2 376l-6.8 14.3M206.3 310.2l-8.2 17.7M183.2 360.3l-6.3 13.4M176.6 374.4l-7.6 16.5M207.3 305.8l-5.2 10.6M196.5 328.1l-6.1 13.2M189.9 342.4l-6.9 15.4M174.6 375.1l-5.7 12.8M168.3 388.6l-4.5 10.1M187.9 343.9l-5.4 11.3M182 356.4l-5.5 11.9M207.5 298.4l-6.3 14.3M177.6 363l-7.9 17M169.3 380.4l-9.2 19.7M197.5 317.3l-6.7 14.2M182.1 349.8l-8.8 19.2M180.4 350.8l-8.5 17.8M161.9 390l-7.4 16.6M185 338.2l-4.9 10M161.7 384.3l-8.3 18M175.3 345.9l-5.5 12M162.5 373.6l-7.2 15.6M200 290.1l-8.4 18.1M191.3 308.6l-6.2 13.8M184.5 323.3l-5 10.5M179.2 334.9l-5.8 12M153.7 386.1l-6.1 13.6M189.1 307.7l-7 15.1M181.3 324.1l-6.7 14.1M169.3 349.8l-8.3 18M169.8 345.8l-7.5 15.7M162.3 361.9l-8 17.5M171.4 339.3l-8.1 16.9M180.2 314.6l-6.4 13.7M173.1 328.9l-6.7 14.4M143 394.2l-8.5 18.3M160 354.2l-5.2 11.7M154.4 366.2l-4.6 10.4M162.8 345.7l-8.7 18.5M177.1 311.4l-5.3 11.5M171.5 320.6l-9.2 19.8M161.9 341.4l-6.1 13.3M155.2 355.6l-6.6 14.5M148.1 370.9l-7.6 16.1M171.3 318.1l-6.3 12.9M159.6 339.8l-7.1 15.6M173.1 307.8l-5.2 11.3M148 361.8l-8 16.8M139.8 379.1l-6.9 14.7M155.9 342l-5.8 12.5M141.4 372.6l-5.2 11.1M169 310.7l-7 15.1M147.6 353.5l-7.1 15M145.8 354.2l-6.1 12.7M139.6 367.4l-7.2 15.7M126.4 395.7l-8.4 18.1M163.9 311.8l-8.6 18.8M154.7 331.7l-5.9 13.3M139.4 364.4l-6 13M132.9 378.5l-6.8 14.5M157.3 313.7l-8 17.5M133.9 364.6l-4.9 10.5M122.8 381.6l-7.9 17.6M161.7 295.2l-8 17.4M160.9 293.9l-8.4 18.5M118 386.3l-6.2 12.6M156.4 301l-5.6 11.4M140.7 334.2l-8.5 18.4M131.9 353.3l-9.2 19.3M146.6 318.3l-8.5 18.3M137.9 337.5l-6.4 13.4M131.1 351.8l-6.7 14.1M117.9 380.3l-5.6 12M134.4 341.5l-4.7 10.4M143.3 319.2l-8.6 18.9M139.1 325l-6.1 13.4M122.9 356.7l-7 15.8M131.1 336.1l-4.6 10.2M126 347.2l-7.2 15.4M140.3 310.6l-6.8 14.2M116.5 361.4l-8.1 18M132.6 324.3l-5.4 11.3M112.5 367.1l-5.7 12M142.8 296l-5.3 11.1M112.2 361.6l-4.6 10.3M118.2 342.1l-5.3 11.4M128.1 318.4l-8 17.4M111.1 354.2l-5.8 13.1M133.6 303.7l-5.3 10.7M128.3 314.9l-7.1 14.8M135.8 292.5l-7.2 15.5M118.8 329.2l-6.4 13.5M112.1 343.6l-8 16.8M127.7 307.1l-7.7 16.5M128 297.2l-6.6 13.8M113.5 328.3l-6.1 12.8M121.4 308.2l-6.3 12.8M114.7 322.1l-8.2 18.2M124.2 295.6l-5.7 12.9M118.5 301.6l-5.3 11.3M111.4 314.4l-6.5 14" stroke="#aca27b" stroke-width="0.8" stroke-opacity="0.5" fill="none" stroke-linecap="round"/>
<path d="M282.7 392.3l-8.6 19.1M280 392.2l-6.4 14.1M276.1 397.6l-5.4 11.2M279.4 387.7l-6.2 13M285.4 368.5l-7.2 15.8M273.8 390.5l-7.3 15.4M290.3 348.9l-7.8 16.8M281.9 366.6l-4.8 10.2M281.5 361.4l-6.1 13.1M285.8 348.8l-9.1 19.7M276.1 369.8l-5.9 13M275.6 368.1l-6.6 14.3M289.2 332.5l-7.9 17.5M281.1 350.5l-7.7 16.2M263.5 388.3l-7.3 15.2M292 323.3l-9.2 19.8M271.3 362.1l-7.6 16.3M287.8 320.3l-7.8 16.8M255.8 389.2l-6.7 14.4M287.9 317.4l-6.7 13.6M265.3 365.4l-5.5 11.6M252.7 392.8l-7.4 15.8M249.5 396l-8.7 19M279.5 328.7l-7.6 16.4M271.7 345.6l-5.8 12.4M257.2 376.4l-5.9 13.1M261.4 364.2l-5.3 11.4M256 376l-5.2 11.4M285.9 309.2l-5.8 12.4M276.9 325l-5.6 12.7M249.2 381.8l-5.7 11.9M266 339.3l-5.9 12.8M272.5 322.6l-5.2 11.1M266.6 334.7l-8.4 18.4M281.8 292.9l-8 17.4M267.6 324.1l-6.4 13.4M243.4 375.6l-9 19.3M269.4 317l-5.4 11M232.8 395.4l-6.8 14.4M261 331.5l-6.6 14.3M246.2 363.4l-9.3 19.8M236.6 383.9l-9 19.8M262.2 323.2l-6.5 13.6M255.2 337.9l-6.8 14.2M264.9 314.1l-6.8 14.4M226.3 397l-9.1 19M270.3 299.3l-7.9 17.4M248.7 345.7l-6.5 13.8M242.1 360l-5.5 11.6M255.8 327.5l-6.6 14.3M236 370.2l-9.2 19.3M272 290.1l-7.6 16.2M224.2 389.1l-9.2 19.7M234.1 365l-7.1 15.3M253.1 321l-7.5 15.9M249.3 326.1l-7.1 15M227.9 371.9l-8.3 18M236.7 349.8l-6 13M230.3 363.4l-8.9 19.5M247.3 324.6l-9.7 19.8M251 313.1l-5 10.6M245.6 324.4l-5.4 12.2M217.3 385.8l-5.7 12.1M242.2 328.7l-7.3 15.7M234.3 345.5l-8.9 19.4M225.3 365.4l-4.8 10.2M247 312.3l-7.6 16.1M239.4 322.3l-7.8 16.7M209.3 387.2l-4.6 10.2M241.4 315.2l-6.6 14.3M224.5 351.5l-8.5 18.1M210.8 377.4l-6.9 15M203.9 392.8l-6.9 14.7M245 298l-8.7 18.8M229.5 331.7l-6 12.8M204.3 385.4l-7.9 17.4M238.7 308.4l-8.4 18.1M203.9 380.5l-8.3 17.5M237.1 306.4l-7.1 14.9M221.2 340.3l-8.2 17.3M206.9 370.9l-5.2 10.9M239.5 297.6l-8.3 18.2M230.7 316.7l-8.6 18M222 335.2l-7.9 16.6M202.5 376.9l-6.9 15.1M219.4 337.5l-7.1 15.5M237.1 296.7l-4.9 10.9M232 308l-6.2 12.7M191.6 394.1l-5.4 11.5M227.3 314.5l-9 19.6M205.4 361.8l-7.4 16.1M200.2 370.1l-6.3 13.2M187.7 396.3l-6.3 13.4M226.3 311.2l-7.7 16.4M217.8 328.6l-6.6 14.6M227.6 305.2l-7.9 16.5M205.3 353l-5.5 11.6M188.4 389.3l-9.4 19.4M213.8 331.2l-5.8 12.6M197.7 362.6l-7.9 16.8M215.4 321.4l-7.5 16.6M207.2 339l-4.6 10.2M202.3 349.6l-6.5 13.9M224.3 299.9l-8 17.2M203.4 341.7l-7.4 15.2M190.3 369.6l-8.6 18M202.3 340.8l-6.1 12.7M188 371.2l-7.2 15.8M209.7 322l-7.4 15.8M211.8 314.2l-6.8 14.2M204.8 328.7l-8 17.6M190.8 355.8l-8.4 18.3M211.3 309l-5 10.5M199.5 334.7l-8.9 18.6M210.9 306.6l-7.5 16.3M198.9 329.6l-6.2 12.9M170.1 391.3l-7.4 16.2M211 294l-8.1 17.7M175.8 369.6l-4.7 10.4M192.1 332.2l-6.6 13.4M203.3 304.6l-5.6 11.7M166 385l-8.7 18.4M209.6 288.3l-8.2 17.7M194.6 320.2l-7.7 16.9M186.5 337.6l-5.7 11.9M171.3 369.8l-8.6 19.2M190.6 326l-5.5 11.2M170 369.6l-7 15.2M162.6 385.9l-7.3 15.9M206.6 288.3l-9.1 19.7M196.8 309l-4.6 10.6M191.5 320.5l-6.4 13.8M184.9 335.3l-7.8 16.2M182.9 335.9l-7 15.3M167.8 368.3l-6.7 14.8M162.7 376.2l-5.6 12.3M156.5 389.7l-5 10.7M182.9 330.1l-7 14.6M169.2 359.2l-6.3 13.9M166.1 362.6l-8.9 19.3M156.8 382.7l-8.3 17.6M184.8 320l-9.1 19.1M168.4 355.1l-5 11M174.4 338.6l-4.7 10.5M160.5 369l-6 12.4M154.1 382.1l-5.5 12.5M182.2 319l-5.5 12.3M179 322.8l-7.1 15.6M174.1 330.1l-7.3 15.6M151.8 378.2l-5.8 12.2M149.9 379.3l-6.4 14M188.2 294.4l-8.6 18.2M179.3 313l-5.1 10.7M143.8 389.7l-4.9 10.2M180.6 307.2l-8.9 18.8M153.6 365.1l-5.6 12.4M138.7 396.8l-8.5 18.8M166.5 334.6l-6.8 13.8M150.9 368.1l-5.6 12.1M164.8 331.6l-6.4 14M153.2 350.6l-4.9 10.7M162.1 328l-6 12.9M146.5 358.8l-6.7 14.3M175.6 293.4l-8.9 18.9M152.8 342.1l-5 10.6M140.1 369.3l-8 17.6M169.7 296.6l-8.9 18.8M148.9 341.4l-5 11.1M143.3 353.4l-4.9 10.1M138 364.4l-5.6 12.5M126.5 389.6l-5.7 12.2M135.1 368.2l-9.5 19.7M138.3 357.8l-6.8 14.4M131.1 373.2l-8.4 17.7M122.2 392l-7.4 16.3M141.7 344.1l-5.3 11.6M140.5 343.9l-8 17.4M132 362.4l-8.7 18.7M146.1 329.2l-8.3 17.8M128.3 367.1l-6.5 14.1M121.7 381.6l-9 18.8M146.5 324.8l-5.7 12.2M140.5 338.1l-6.4 13.4M129.3 353l-7.9 16.4M121 370.4l-9 19.2M112.6 385.2l-8.9 19.4M152.3 297.5l-7 15M137.6 325.9l-5.1 10.4M118.5 363.8l-8.8 18.9M145.3 303.2l-7.6 16M137.4 319.5l-5.6 12.1M116.5 364.5l-7.3 15.6M133.1 325.9l-7.1 15.6M137.2 308.2l-7.9 16.4M137.7 303.8l-7.1 15.4M121.6 337.9l-8.3 18M136.6 294l-9.3 19.8M126.9 314.8l-5.1 11.2M115.4 339.2l-7.9 17.1M119.5 324.1l-7.7 17.2M111.6 341.8l-9 18.6M120.5 294.3l-9.2 19.7M116.7 299.7l-7.9 16.7" stroke="#988e6b" stroke-width="0.8" stroke-opacity="0.5" fill="none" stroke-linecap="round"/>
<path d="M287.4 385.7l-4.6 10.1M288.1 375l-7.6 16.7M284.3 380.3l-7.8 16.2M277.9 384.7l-7 14.8M270.9 390.2l-8.2 17.6M284.4 358.4l-5.8 12.7M285.8 343.2l-5.8 12.5M271.4 373.7l-6.4 14.1M264.4 388.9l-7.5 16.2M282.6 343.5l-9 19.6M273.4 363.6l-5.4 11.8M271.2 364.9l-5.7 12.8M261.1 381l-7.8 16.1M263.1 373l-7 15.7M259.4 378.3l-6.5 13.7M287.5 311.9l-7.6 16.1M284.1 315.7l-6.1 13M270.6 345.2l-8.7 18.6M250.6 387.8l-6.2 13.3M279.7 322.3l-6.8 14.5M247.5 391.2l-6.5 13.7M270.6 338.3l-6.6 14.6M244 395.8l-8.7 18.3M278.3 319l-7 14.7M287.9 295.7l-7.3 15.1M274.3 324.9l-5 10.6M272.6 325.1l-6 12.9M280.6 304.6l-7.7 16.9M257.5 354.3l-7.9 16.8M249.2 371.8l-5.1 11.9M243.6 384l-5.2 11.6M277.2 309.4l-6.8 13.9M244.8 375.7l-5.1 11.1M255.6 349.5l-5.3 11M234.1 395.2l-7.2 16M263.6 328.9l-8.1 17.6M245.9 367.5l-7.1 14.9M267 318.6l-5.7 12.4M229 396.9l-7.2 15.4M269.9 306.4l-7.4 15.9M234.3 382.4l-6.8 14.9M272.7 297.6l-7.7 15.7M230.6 384.9l-8.6 18.3M264.9 307.9l-8.9 19.1M243.7 353.7l-7.2 15.2M226.3 390.5l-6.7 14.7M263.9 307.3l-8.5 17.7M240.1 358l-7.5 16.2M225.3 389.7l-7.8 17.1M266.1 298.9l-7.6 16.3M252.1 329.5l-9.3 19.8M233.5 369.2l-9.1 19.1M261.9 305.2l-7.7 16M253.9 322.1l-6.1 13M240.4 351.3l-6 12.6M220.2 394.8l-7.8 16.7M258.3 309.3l-5 11.2M245.3 338l-7.6 15.5M237.3 354.7l-5 10.7M225.1 381.1l-6.5 13.9M218.2 395.9l-6.4 13.1M254.5 314.9l-4.8 10M234.8 356.8l-6.7 14.3M219.1 390.9l-8 17.4M248.4 324.4l-4.9 10.6M256.4 305l-9.2 19.1M218.1 386.8l-6.7 14.5M251.7 308.9l-9 18.8M220.1 376.5l-9.3 19.5M210.6 397l-6.9 14.6M251.8 305l-8.3 17.9M213.7 387.3l-5.2 10.9M238.9 329.7l-8.6 18.5M251 301l-7.8 16.8M208.2 392.1l-7.5 16.4M247.4 305.6l-7.3 15.5M231.5 339.5l-8.7 18.6M248.8 299.3l-6.7 14.6M209.8 383l-8.3 17.9M246.1 302l-7.5 16.4M232.3 331.8l-8.2 17.7M217.5 363.8l-6 12.3M244.4 302.6l-7.3 15.5M227.1 339.5l-4.6 10.2M213 370.4l-7 14.9M205.8 385.7l-8.1 16.9M211.8 369.5l-7 15M218.2 353l-8.9 18.6M209 372.6l-7.2 15.3M240.8 300.9l-7 15M212.8 361.2l-8.5 18.4M244 291l-7 15M229.4 322.1l-7.9 17.5M233.9 306.5l-6.2 13.2M225.5 321.6l-6.2 13.3M212.8 349l-6.7 14.7M205.4 364.6l-5.2 11.7M199.7 377.1l-7.6 16.1M212.1 347l-6.5 14.4M188.5 397.7l-7.8 17.2M225.6 314.9l-5.8 12.5M214.7 338.9l-5.2 10.9M209.2 350.4l-8.7 19.1M193.6 383.8l-5.3 11.4M235.8 290.4l-9.3 19.8M191.6 384.9l-8.1 17.8M193.2 378.3l-4.6 10.2M198.7 364l-7.1 15.3M216.5 322.6l-8.1 17M208.4 340.2l-4.7 10.1M182 396.6l-6.4 13.6M228.4 293.8l-5.5 11.9M189.3 377.5l-9 19.9M215.8 317.8l-6.8 14.4M192.9 366.8l-5.2 11.6M187.2 379.5l-6.9 14.4M216.6 313.1l-4.8 10.5M211.4 324.5l-7.9 16.6M222.3 298.1l-8.5 17.6M213.8 316.3l-5.1 10.3M196.4 350.6l-6.7 13.8M220.4 295.6l-8.2 17.7M196.7 346.7l-7.5 15.7M188.8 363.1l-5 11.5M183.3 375.5l-8.4 18M181.7 375.3l-8.5 18.6M217.3 295.7l-5.7 12.8M205.8 320.5l-5.9 12.9M216.8 293.9l-5.5 12.2M203.2 323.6l-9.3 19.8M178.3 376.8l-7.3 15.4M205.6 314.9l-6.5 13.9M192.1 343.7l-6.3 14.1M185.1 358.9l-7.4 16.3M215.6 290.2l-8.5 18.9M168.2 391.9l-8.9 19.5M202.3 312.9l-6.1 13.1M195.5 327.3l-7.5 16.1M200.7 313l-8.4 18.1M185.2 346.9l-7.3 15.3M172.9 369.8l-6.5 14.1M206 293.1l-9.1 19M196.6 312.9l-5.7 12M167.2 372.9l-4.9 10.2M190.2 320.2l-6.8 14.8M175.5 352.2l-7.6 15.7M179.6 339.9l-7.5 16M172 356.3l-8.6 18.6M173.4 347.5l-6.7 14.1M199.3 288.7l-8.6 18.1M162.7 366.9l-8.4 18.5M198.8 286.6l-9.1 19.9M191.2 300.2l-8.7 18.4M153.7 379.9l-8.1 17.7M184.7 310.7l-5 10.9M157.3 369.7l-9.1 19.6M147.6 390l-5.6 12.7M160 360.3l-7.9 17.2M189.6 294.3l-9.5 19.8M166.5 343.9l-6.8 13.9M159.7 358.7l-9.1 19.3M144.8 380.8l-6.8 14.4M137.9 396.1l-8.2 16.8M140.3 387.7l-9.3 19.5M152.7 358.2l-6.8 14.5M145.4 373.2l-6.3 13.7M138.8 387.2l-6.9 15.2M151.8 356.5l-7.8 17M143.5 374.3l-5.2 11.2M138.1 386.4l-7.4 15.3M179.1 294.9l-5.4 11.7M167.3 320.5l-7.1 15.2M179.3 291.8l-8.4 17.4M149.7 355.4l-7.7 16.5M176.2 294.8l-6.9 15M160.5 325.8l-7.2 15.4M131.6 387.2l-9.2 19.9M173.6 294.5l-5.8 12.1M167.6 307.5l-7.9 16.7M125.9 393.4l-8.8 19.2M160.8 316l-6.4 13.3M158.9 316.6l-6.7 14.7M152 331.8l-5.8 11.8M141 355.3l-6 12.4M125.3 388.8l-8.3 17.8M160.3 310.9l-5.8 11.9M154.2 323.7l-5.7 12.6M163.4 301.4l-5.5 11.4M148.7 332.2l-5.5 12.3M143.2 344.8l-9 18.6M128.6 375.6l-6 12.8M122.3 389l-6.4 13.5M156.4 312.5l-4.9 11.1M161.8 298.7l-6.4 13.2M147.7 328.8l-6.6 14.1M153.2 313.5l-7 15.1M152.1 312.7l-5.1 11.6M126.9 367.1l-9 18.7M114.8 389.8l-6.4 13.8M111.8 390.1l-6.9 15M134.3 338.4l-5.7 12.5M128.4 351.4l-6.4 13.3M121.9 365.1l-8.5 18.9M145 313.1l-5.7 11.6M139.5 318.7l-7.9 16.9M122.4 352.2l-5.6 11.9M148.3 293.1l-7.7 16.6M145.9 295.7l-6.9 14.3M138.7 310.7l-5.9 12.6M127.2 335.9l-6.4 13.7M145.2 294.2l-8.7 17.9M130.5 325.5l-9.2 19.4M120.9 346.2l-7.1 15.2M113.3 362.1l-7.5 16.4M129.1 325.1l-7.4 16.1M121.1 342.5l-8.8 18.4M137.6 300.9l-5 10.3M132.4 311.9l-8.3 18.2M112.8 354.5l-6 12.5M133.6 306.5l-5.2 11.2M119.5 336.3l-8.1 17.4M133.9 293.7l-5.8 12.1M125.2 309.5l-5.8 11.6M119.2 322.1l-7.4 15.9M126.5 303.2l-9.3 19.8M116.9 323.8l-5.9 13M120.9 311.8l-6.9 15.5M128.6 292.9l-6.6 14.1M127.4 292.5l-8.6 17.6M113.3 313.3l-7.2 15.3" stroke="#c6bd92" stroke-width="0.8" stroke-opacity="0.5" fill="none" stroke-linecap="round"/></g><path d="M133.1 306.9l-1.4 3M141 305.7l-1.6 3.4M144.6 305.4l-1.5 3.3M154.8 304.5l-1.5 3.2M158.1 304.5l-1.5 3.2M161.4 304.8l-1.5 3.3M169.3 304.5l-1.5 3.3M171.7 303.9l-1.8 4M173.6 304.5l-1.5 3.4M180.9 304.7l-1.3 2.9M183.9 304.5l-1.6 3.3M195.9 304.4l-1.5 3.3M198.8 304.6l-1.8 3.6M201.4 305.1l-1.6 3.3M204.1 304.8l-1.4 3.1M206.6 304.9l-1.7 3.6M210.3 305.7l-1.3 2.9M211.9 306.2l-1.4 2.9M214.9 306l-1.5 3.3M220.6 309.3l-1.3 2.8M227.9 312.2l-1.7 3.6M230.3 313.7l-1.2 2.7M234 315.6l-1.7 3.7M240.9 321.2l-1.3 2.9M243 322l-1.9 4M246.5 324.8l-1.9 4.2M249.8 328.5l-1.6 3.5M251 328.9l-1.6 3.3M253 330.4l-1.9 4M255 331.7l-2 4.3M259.3 336.4l-1.4 2.9M261.8 339.3l-1.4 3.1M262.8 341l-1.2 2.6M273.5 342.3l-1.2 2.5M276.2 394.7l-1.4 3.1M271.2 393.9l-1.9 4.1M268.9 393.8l-1.7 3.7M266.2 393.9l-1.6 3.3M260.6 392.9l-1.9 4.3M251.4 392.5l-1.5 3.3M248.2 393l-1.3 2.7M243 392.8l-1.4 2.9M239 392.6l-1.1 2.5M235.1 392.2l-1.8 3.8M220.8 394.2l-1.9 4M211.8 394.5l-1.6 3.5M208.1 394.6l-1.7 3.8M206 395.3l-1.2 2.6M202.7 394.8l-1.4 2.9M193.2 394.7l-1.4 3.1M187.7 394.9l-1.5 3.1M182.2 393.6l-2 4.3M177.8 393.8l-1.1 2.4M175.2 391.9l-1.7 3.5M161.5 385.9l-1.9 3.9M154.1 382.4l-1.6 3.4M152.5 381l-1.6 3.5M147 378.4l-1.4 3.1M139.5 372.3l-1.8 3.8M137.8 370.5l-1.5 3.3M136.3 368.2l-1.5 3.1M134.5 366.7l-1.6 3.3M133.9 365.4l-1.2 2.7M129.5 360.2l-1.6 3.5M127.7 358l-1.7 3.6M126.4 357.2l-1.3 2.8M123.4 354.2l-1.1 2.5M114.2 339.2l-1.6 3.5" stroke="#6a624b" stroke-width="1.1" stroke-opacity="0.9" fill="none" stroke-linecap="round"/>
<path d="M124.7 308.8l-1.3 2.7M126.4 307.5l-1.9 4M127.7 307.3l-1.4 3M130.3 307.1l-1.3 2.9M131.9 306.5l-1.6 3.4M136.2 305.8l-1.6 3.5M138.5 306.1l-1.2 2.5M139.7 306l-1.1 2.3M143.4 305.4l-1.6 3.5M146 305l-1.6 3.4M147.5 304.6l-1.9 4.1M150.2 304.5l-1.8 3.7M151.3 305.2l-1.3 2.8M153.2 304.4l-1.9 4.1M159.6 304.9l-1.4 3M163.3 304.8l-1.4 3.1M165.6 303.9l-1.6 3.4M176.1 304.1l-1.7 3.7M217.1 306.7l-1.7 3.7M225.4 311.1l-1.6 3.5M232.7 315.2l-1.4 3M236.3 317.1l-1.5 3.1M238.5 318.2l-1.7 3.6M244.5 324l-1.6 3.4M251.8 330.1l-1.4 2.9M256.4 334.1l-1.6 3.4M261 338.5l-1.8 3.6M264.3 341.3l-1.3 2.8M266 341.6l-1.5 3.1M268 341.6l-1.7 3.6M270.1 341.4l-1.6 3.5M272.1 341.4l-1.5 3.1M274.6 394.6l-1.6 3.5M263.2 394.1l-1.2 2.5M257.4 393.2l-1.4 3M254.2 393.2l-1.4 2.9M240.8 392.8l-1.1 2.3M236.3 392.2l-1.7 3.6M232.6 393.2l-1.3 2.7M230.5 393.5l-1.4 3.2M228.3 393.9l-1.4 2.9M227 394l-1.8 3.9M225.7 393.9l-1.5 3.2M219 394.4l-1.6 3.5M213.5 394.8l-1.6 3.4M210 394.4l-1.8 3.9M196.7 395.4l-1.1 2.4M191.1 395.1l-1.4 3.1M185.9 395.1l-1.2 2.5M183.4 393.9l-1.5 3.2M176.4 392.9l-1.5 3.3M171.9 390.6l-1.8 3.8M170.1 390.2l-1.6 3.2M166.7 388.5l-1.7 3.7M164.7 388.3l-1.3 2.7M163.1 387.1l-1.4 2.9M159.4 385.5l-1.7 3.7M149.2 378.5l-1.6 3.3M143.5 376.3l-1.2 2.6M135.6 367l-1.9 3.9M132.5 363.8l-1.6 3.5M131.4 362.3l-1.2 2.7M125.2 355.4l-1.4 2.9M122.2 351.7l-1.8 3.7M119.1 348.3l-1.6 3.5M118.1 346.2l-1.5 3.2M116.8 344.8l-1.3 3M116 342.6l-1.6 3.5" stroke="#605843" stroke-width="1.1" stroke-opacity="0.9" fill="none" stroke-linecap="round"/>
<path d="M123.8 308.5l-1.7 3.7M129 307.2l-1.6 3.4M134.9 305.8l-1.8 3.9M137.5 305.6l-1.5 3.3M142.3 305.4l-1.5 3.2M148.6 304.9l-1.5 3.2M156.1 305.1l-1.5 3.2M167.2 304.8l-1.4 2.9M178.6 304l-1.9 4M186.6 304.9l-1.4 3.1M189.7 304.7l-1.3 2.8M193 304.1l-1.9 4.2M208.8 304.8l-1.8 3.9M213.3 306.5l-1.4 2.9M219.1 307.6l-1.6 3.2M223 309.8l-1.5 3.2M224.3 310.1l-1.5 3.2M226.8 311.3l-1.4 3M229.4 312.4l-1.8 3.8M231.7 314.2l-1.6 3.2M235.4 315.9l-1.7 3.6M237.3 317.9l-1.5 3.2M239.3 319.2l-1.7 3.7M248.2 326.4l-1.5 3.2M253.6 331.9l-1.3 2.9M258.1 335.2l-1.4 2.9M260.2 337.2l-1.7 3.5M272.9 394.6l-1.4 2.9M245.8 392.1l-1.9 4.1M237.5 392.5l-1.7 3.7M223.8 394.7l-1.3 2.9M222.3 394.6l-1.6 3.5M217.2 394.5l-1.4 3M215.4 394.7l-1.6 3.3M204.3 395l-1.6 3.5M200.9 394.6l-1.6 3.4M199.1 394.3l-1.7 3.8M195.3 394.4l-1.8 3.8M189.7 394.4l-1.8 3.8M184.6 394.4l-1.5 3.2M180 393.4l-1.8 3.8M173.6 391.4l-1.5 3.2M168.4 389.4l-1.5 3.1M157.6 384.7l-1.5 3.3M155.8 383.7l-1.3 2.8M150.9 379.6l-1.5 3.3M145.4 376.9l-1.8 3.9M142 374.6l-1.5 3.2M140.1 373.7l-1.2 2.4M138.8 371.1l-1.8 3.9M137.2 369l-1.7 3.6M130.3 361.7l-1.1 2.4M128.6 358.8l-1.8 3.9M123 352.5l-1.7 3.7M121.5 350.6l-1.7 3.7M120.5 350.1l-1.4 3M115.2 340.7l-1.6 3.4M113.7 337.3l-1.8 4" stroke="#746b53" stroke-width="1.1" stroke-opacity="0.9" fill="none" stroke-linecap="round"/>
<clipPath id="re"><path d="M452.0,344.0C453.5,335.4 457.0,344.4 461.0,344.0C465.0,343.6 471.5,343.3 476.0,341.5C480.5,339.7 484.1,336.2 487.8,333.0C491.5,329.8 494.6,325.3 498.0,322.0C501.4,318.7 503.5,315.4 508.0,313.0C512.5,310.6 517.2,308.7 525.0,307.5C532.8,306.3 545.0,305.9 555.0,306.0C565.0,306.1 577.3,307.4 584.8,308.2C592.2,308.9 594.7,309.1 599.7,310.5C604.7,311.9 611.5,313.6 614.7,316.4C618.0,319.1 618.2,323.5 619.2,327.0C620.2,330.5 621.0,333.9 620.7,337.4C620.5,340.9 619.7,344.1 617.7,347.8C615.7,351.5 612.2,355.8 608.7,359.8C605.2,363.8 600.7,368.2 596.7,371.7C592.7,375.2 589.3,377.9 584.8,380.7C580.3,383.4 574.8,386.2 569.8,388.2C564.8,390.2 559.9,391.4 554.9,392.7C549.9,393.9 545.0,394.9 540.0,395.7C535.0,396.4 531.7,397.1 525.0,397.2C518.3,397.3 510.7,396.8 500.0,396.5C489.3,396.2 469.0,395.7 461.0,395.5C453.0,395.3 453.5,404.1 452.0,395.5C450.5,386.9 450.5,352.6 452.0,344.0Z"/></clipPath>
<path d="M452.0,344.0C453.5,335.4 457.0,344.4 461.0,344.0C465.0,343.6 471.5,343.3 476.0,341.5C480.5,339.7 484.1,336.2 487.8,333.0C491.5,329.8 494.6,325.3 498.0,322.0C501.4,318.7 503.5,315.4 508.0,313.0C512.5,310.6 517.2,308.7 525.0,307.5C532.8,306.3 545.0,305.9 555.0,306.0C565.0,306.1 577.3,307.4 584.8,308.2C592.2,308.9 594.7,309.1 599.7,310.5C604.7,311.9 611.5,313.6 614.7,316.4C618.0,319.1 618.2,323.5 619.2,327.0C620.2,330.5 621.0,333.9 620.7,337.4C620.5,340.9 619.7,344.1 617.7,347.8C615.7,351.5 612.2,355.8 608.7,359.8C605.2,363.8 600.7,368.2 596.7,371.7C592.7,375.2 589.3,377.9 584.8,380.7C580.3,383.4 574.8,386.2 569.8,388.2C564.8,390.2 559.9,391.4 554.9,392.7C549.9,393.9 545.0,394.9 540.0,395.7C535.0,396.4 531.7,397.1 525.0,397.2C518.3,397.3 510.7,396.8 500.0,396.5C489.3,396.2 469.0,395.7 461.0,395.5C453.0,395.3 453.5,404.1 452.0,395.5C450.5,386.9 450.5,352.6 452.0,344.0Z" fill="#b5ab82"/>
<g clip-path="url(#re)"><path d="M452.0,344.0C453.5,335.4 457.0,344.4 461.0,344.0C465.0,343.6 471.5,343.3 476.0,341.5C480.5,339.7 484.1,336.2 487.8,333.0C491.5,329.8 494.6,325.3 498.0,322.0C501.4,318.7 503.5,315.4 508.0,313.0C512.5,310.6 517.2,308.7 525.0,307.5C532.8,306.3 545.0,305.9 555.0,306.0C565.0,306.1 577.3,307.4 584.8,308.2C592.2,308.9 594.7,309.1 599.7,310.5C604.7,311.9 611.5,313.6 614.7,316.4C618.0,319.1 618.2,323.5 619.2,327.0C620.2,330.5 621.0,333.9 620.7,337.4C620.5,340.9 619.7,344.1 617.7,347.8C615.7,351.5 612.2,355.8 608.7,359.8C605.2,363.8 600.7,368.2 596.7,371.7C592.7,375.2 589.3,377.9 584.8,380.7C580.3,383.4 574.8,386.2 569.8,388.2C564.8,390.2 559.9,391.4 554.9,392.7C549.9,393.9 545.0,394.9 540.0,395.7C535.0,396.4 531.7,397.1 525.0,397.2C518.3,397.3 510.7,396.8 500.0,396.5C489.3,396.2 469.0,395.7 461.0,395.5C453.0,395.3 453.5,404.1 452.0,395.5C450.5,386.9 450.5,352.6 452.0,344.0Z" fill="none" stroke="#554d38" stroke-width="20" filter="url(#blur5)" opacity="0.95" transform="translate(-2,-3)"/></g><g clip-path="url(#re)"><path d="M621.8 386.5l-1.2 16.7M622.7 316.9l-1.1 12.6M618.5 374l-0.6 11.9M620.9 321.6l-0.9 11.3M621.9 292.9l-1.7 20.9M618.2 344.6l-0.8 12.6M618.9 316.3l-1.2 12.6M618 329.9l-1.8 20.8M616.5 327.6l-1 17.6M613.2 375.7l-1.2 16.8M612.8 366.1l-1.5 16.7M613.7 335.1l-0.9 11.9M608.9 362.3l-1.1 16M605.7 392.4l-1.7 21.4M607.5 344.2l-1 14.7M606.6 359.5l-1.5 20.7M609.5 299.6l-1.5 19.2M607 333l-1.3 21M604.5 372.9l-1.2 14.7M603.4 388.2l-1.1 13.7M608 301l-1 14.2M604.3 334.8l-0.9 13M602.1 369.9l-1.5 20.9M605.8 295.2l-1.1 16.7M601.9 355.3l-1.5 19.9M599 391.3l-0.9 17.2M597.8 391.5l-1.4 20.5M602.4 308.5l-1.3 19.3M598.5 365.5l-1.1 12.9M595.1 394l-0.9 11M599 297.7l-0.8 11.5M598.2 310.2l-0.7 11.2M592.2 395.2l-0.9 16.6M595.9 324.4l-0.8 14.9M594.7 339.7l-0.8 13M591.8 381.8l-0.7 13.3M595.4 313.4l-1.4 20.1M592.8 351.7l-1 15.8M594.9 303.8l-1.3 19.8M593.2 310.6l-1.2 13.4M589.7 360.5l-1.1 13.9M587.9 386.8l-1.7 19.2M591.7 310.8l-1.1 18.2M588.3 363.1l-1.4 19.2M590.7 308.7l-1.5 18.2M589.1 327.3l-0.7 12.8M588.4 340.9l-1.3 17.9M586.8 359.9l-0.8 12.1M586 372.5l-1.3 18.5M584.6 392.2l-0.6 13.9M588.6 316.7l-0.9 13.1M583 395.8l-1.2 17.5M587.8 310.5l-0.9 15M584.5 359.1l-1.3 15.2M585 334.4l-1.5 20.8M586.8 290.1l-1.6 19.1M584.2 327.2l-1.2 17.3M580.7 378.4l-1.4 15M581.3 348.9l-1.1 16.6M579.9 333.6l-1.1 14.9M580.6 302.1l-1.2 19.1M578.6 312.8l-1.6 19.9M575 361.8l-1.2 21.3M572.9 377.5l-1.1 11.8M574.8 330.6l-1.1 15.3M571.5 379.8l-1.3 16.8M570.3 397.3l-1.4 16.9M573.7 325.6l-1.3 19.4M573.9 308l-1 11.9M572.8 321l-1 11.9M570 362.8l-1.3 17.9M568.9 358.8l-1.6 20.9M566.7 392l-1 12.6M567.6 355.1l-1.3 21.8M567.4 323.4l-1.1 16.5M562.2 396.2l-1.1 15.8M563.9 354.8l-1.5 20.1M562.3 375.5l-0.7 14.9M561.5 390.8l-1.4 17.2M566.6 300.3l-1.3 17M558.6 373.7l-0.7 12.6M562.5 299.9l-1 17.8M556.5 388.7l-1.4 16.9M559 332.8l-1 12.9M558 347l-1.4 19.1M554 364.8l-0.7 12.8M555.2 330.9l-1.3 18.3M553.9 350.3l-1.5 18.7M555 311.8l-0.8 13.4M554.8 296.8l-1.1 16.1M552.5 294.5l-1.2 17.5M549.3 340.2l-1.2 16.2M546.5 378.7l-0.7 11.8M550.4 307.5l-0.7 11.3M547.9 303.4l-1.2 19.7M545.8 313.1l-1 17.7M540.3 394.9l-1.1 12.3M544.9 313.3l-1.7 21.3M543.3 335.5l-1.4 15.1M540.8 371.6l-1.8 21.8M539.2 394.1l-1.5 21.8M537.3 397.4l-1.1 20.2M541.6 301.3l-0.8 13.1M539.3 336.2l-1 12.9M538.1 349.8l-1 14.7M535.1 393l-0.9 15.4M541.4 285.1l-1.4 20M536.4 354.4l-0.8 16.1M537.1 327.2l-0.9 15.4M536.1 343.5l-0.7 11.7M534.3 369.5l-1.5 21.2M532.7 391l-1.1 13.2M536.3 319.9l-1.3 20.2M533.7 357l-1.3 21.4M531.2 393.8l-0.8 11.5M532.3 359.5l-1.1 13.2M534.8 305.1l-1.1 17.7M529.9 354l-0.6 12.5M531.8 311l-1 11.1M528.5 359.6l-1.2 13.1M529.4 309.9l-1.2 13M526.6 329.4l-0.8 13.5M525.4 344.3l-0.9 13.1M524.6 358.5l-1.5 21M525.3 329.1l-0.8 13.2M522.7 349.8l-0.9 13.4M524.4 305l-1.3 18.8M523.2 324.4l-1.1 14.7M518.2 393.5l-1.3 16.1M520.1 349.2l-1.4 17.4M518.8 367.9l-1 15.4M520.2 328.6l-1.3 18.8M517 354.2l-1.5 20.3M514.7 387l-1.2 18.8M513.5 385.5l-1.2 20.3M515.8 337.1l-1.2 14.8M515.2 326.6l-1.3 17.1M513.9 344.8l-1 13M513.9 323.7l-0.9 12.9M512 352.6l-1.7 21.1M512 330.8l-1.3 20.5M510.7 352.4l-1.2 19M510.5 335l-1.5 20.6M506.2 394.9l-0.9 16.6M508.3 346.2l-0.7 12.3M507.6 359.2l-0.9 14.5M506.6 374.7l-1.5 20.1M511.4 289l-1.3 17.2M507.7 340.6l-1 15M505 377.1l-1 14M507.8 317.8l-1.2 17M506.7 336.1l-0.8 11.6M505.5 332.3l-0.9 13.3M504.7 346.3l-1.6 20M506.7 300.2l-1.2 15.9M500.6 386l-1.2 14.5M506 290.7l-1.3 17.3M504.5 309.1l-0.9 16.5M499.6 381.4l-1.1 17.3M498.5 357l-0.8 11.3M496.1 389.8l-0.9 15.5M501.3 301.4l-1.4 17.6M499.9 320.1l-0.7 11.9M497.3 339l-1 15.2M492 393.8l-1.1 19.2M491.7 379.2l-0.8 12.5M491 392.7l-0.9 14M493.1 343.2l-1.6 20.5M489.5 357.7l-1.7 20.8M487.9 378.9l-0.9 16.1M487.7 361.8l-1 15.3M485.9 391.3l-1.4 19.7M490.5 306.1l-1.1 15M487.5 348l-1.3 16.6M488.3 318l-1.3 17.5M484.2 356.9l-1.1 15.2M483.4 372.5l-1.6 18.1M481.7 391.4l-1.2 20.7M485.6 317.3l-1.4 20.6M484.1 339.1l-0.9 12.1M483.3 352.3l-1.1 16.8M482.2 370.5l-1.2 15.7M484.8 312.3l-1 16.2M483.7 308.7l-0.8 11.7M481.1 346.8l-1.3 19.1M479.5 352.8l-1.6 21.8M475.7 386.4l-1.3 17.3M474.3 388.3l-1.2 17M479.1 298.6l-1 15.9M475.3 337.3l-1.4 19.6M469.9 394.2l-1.4 20.3M474.4 312.7l-1.2 16.5M474.1 295.7l-0.5 11.8M472.7 298.3l-1.4 17.3M470.5 332l-1.2 14.1M469.5 347l-1.7 19.2M470.4 313.5l-1.4 21.8M469 335.6l-1.4 19M466.7 346.8l-1 15.2M464.6 379.3l-1.2 15.5M462.4 387.9l-1.5 21.9M468 289.1l-1.2 20.6M460.2 366.3l-0.8 11.7M462.5 313.4l-1 15.5M458.7 366.7l-1.3 19.8M457.6 327.4l-0.7 11.5M455 367.2l-1.5 16.6M453.6 384.8l-1.3 16.3M456.4 324.3l-1.3 20.3M455.8 318.9l-1 11.7M454.5 319l-1 11M455.1 289.6l-1.2 17.2M452.1 296.5l-1.2 17.9" stroke="#d2c99d" stroke-width="0.8" stroke-opacity="0.5" fill="none" stroke-linecap="round"/>
<path d="M620.9 344.2l-1.1 14M622.3 305.5l-1.4 15.5M617.5 374l-1.3 14.5M616.3 389.7l-1.3 18.1M620.1 315l-1.2 15.1M616.2 351.4l-0.9 13.1M615.1 365.5l-1.2 19.6M612.2 393.2l-1 11.3M617.1 302.6l-1.1 13.8M616 316.9l-1.1 14.9M615 332.4l-0.9 12.8M614.2 345.5l-1.4 19.6M616.2 299.2l-1.5 17.4M611.6 361l-1.3 17M610.5 379l-1.3 19.4M611.1 352.8l-0.8 11.5M610.3 365l-1.6 20.3M614.3 288.5l-1.5 20.2M612.8 309.2l-1.1 16.8M610.7 340.8l-1.7 20.9M612.4 295.7l-1.2 19.2M605.3 380.6l-1.5 18.8M604.8 347.8l-0.7 12.2M603.8 361.2l-1.3 18.2M606.6 304.3l-1 15.1M605.4 320l-1.1 14.2M603.5 348.9l-1.3 19.7M600.4 376.1l-1.3 14.3M599 374.3l-1.1 16.1M600.9 329.1l-1.6 22M597.7 354.7l-0.9 11.5M599.6 310.2l-0.8 11.3M596.4 337.8l-1.1 15.4M594.1 334.9l-1.1 16.2M590.4 388.7l-1.1 11.6M589.3 381.7l-1.4 19.8M590.4 348.1l-0.6 11.2M586.7 383.5l-1.3 19.1M585.7 362l-1 14.6M585.7 344.5l-1.1 14.2M581.7 395.9l-1.1 18.6M582.9 345.3l-1.1 13.9M581.6 360.1l-0.9 17.7M584.1 292.1l-1.7 21.5M581.8 304.6l-1.1 15.7M580.4 321.2l-0.6 12.1M577.6 343.2l-0.9 16.6M577.2 333l-0.8 11.2M573.6 384.6l-1.3 19.9M578.2 300l-1 12.2M575.9 331.5l-1 14.8M573.6 364.4l-0.9 12.5M571.3 362.4l-1.1 11.5M570.2 374.6l-1.3 21.4M569 397l-1.5 21.4M572 333.3l-1 14M567.3 397l-1.3 21.3M572.9 300.4l-1.1 18.5M572.1 292.5l-1.2 20.5M566 378l-0.5 11.4M570 303.3l-1.2 16.2M567.7 335.5l-1.3 21M568.3 309.9l-0.7 12.3M564 374.5l-1.8 20.9M566.1 322.6l-0.7 11.4M563.7 340.7l-1.5 17.8M562.4 359l-1.2 17.5M565 303.5l-1.2 13.6M563.8 317.9l-0.8 14.3M562 346l-0.9 14M559.8 374.4l-1.5 21.2M563.1 312.1l-1.3 19M557.9 387.2l-1.1 15.2M561.1 318.3l-0.8 15.7M557.3 373.3l-1 15.1M559.9 318.1l-0.9 13.7M556.8 366.7l-1.5 17.5M560.9 285l-1.4 20.6M559.4 306.2l-0.6 12M555.4 364.3l-1.3 20.6M553.8 386.3l-1.5 21.4M559 296.9l-1.6 18.6M556.1 335.9l-0.7 12.3M552.5 370.1l-1.1 12.2M553.4 340.5l-1.6 18.2M553.7 313.3l-0.9 15.3M548.8 386.1l-0.9 13.3M551.4 328.8l-1.2 18.4M551.4 313l-1.1 14.5M548.1 357.7l-1.5 19.6M547 354.6l-1.3 20M545.4 376l-1.1 14.9M546.5 344.9l-1.8 21.6M546.4 324.3l-1.4 19.4M545.3 344.6l-0.9 11.3M540.5 355.7l-1.1 12.1M542.2 311.7l-0.9 12.1M537.5 379.2l-1 15.6M536.9 365.8l-0.6 12.8M538 332.2l-1.5 21.4M534.5 386.3l-1.2 12.6M534.9 321.5l-1.1 15.1M533.9 337.6l-1.5 20.9M530.3 388.9l-1.5 20.1M529.8 374l-0.9 16.8M531.1 337l-0.8 16.4M527.7 387.4l-1.2 18.6M530.8 322.6l-1.2 19.7M529.1 328.1l-0.7 12.8M522.6 370.6l-1.5 18.5M523.5 336.4l-0.8 12.5M523.2 303.5l-1.1 14.1M517.6 383.7l-1 11.9M522.7 291.4l-1.5 19M515.5 375l-0.7 11.5M517.3 331.3l-0.9 16M516.9 322l-1.4 14.5M513.3 373.7l-1.1 12.3M509.4 372.4l-1.1 15.5M513.3 293.7l-1.3 21.3M512.4 293.5l-1.7 18.4M510.9 312.4l-1 13.4M505.9 348.1l-1.2 16.7M503.4 381.3l-1.1 15.5M505.2 316.5l-1 14.4M504.2 332.4l-1.2 16.6M501.5 371.4l-0.8 14M503.5 326.9l-1.4 18.4M502.1 345.8l-1.4 21M498.5 377.2l-0.7 12.6M502.6 300.3l-0.9 15.3M501.3 316l-0.9 17.4M497.9 369.5l-1.5 19M495.1 388.4l-1.2 18.1M499.3 313l-1 11.7M498.1 325.1l-0.7 12.9M496.1 354.7l-1.3 21.1M499.4 288l-1.3 21.3M497.7 296.4l-1.2 13.8M496 298.3l-0.5 13.1M491.7 364.2l-1.1 14.2M490.7 378.7l-1.6 21.7M494.6 301.2l-1.2 17.9M492.4 333.8l-0.8 12.4M491.9 321.3l-1.2 16.3M486.9 395.7l-1.6 21.2M486.1 365.9l-1.2 16.6M489.3 304.3l-1.1 12.9M487.2 336.2l-1 13.2M486.1 350.6l-1 15.3M488.9 293.4l-1.5 17.7M485.7 334.5l-1.3 21.4M482 350.4l-1.3 20.6M480.6 371.7l-0.8 13.4M485.1 290.7l-1.3 16.9M479.6 366.4l-1.2 20.7M478.1 387.8l-1.2 17.7M483.5 294l-1.3 17.7M480.9 331l-1.5 20.5M482 296.1l-1.6 21.4M480.4 300.6l-1.5 18.1M479.2 319.2l-1.5 21.3M477.1 328.3l-0.8 12.1M473.7 379.6l-1.2 16.1M472.3 396l-1 17.6M476.4 319.6l-1.3 17.2M473.9 358.2l-1.7 20.8M472.8 352l-1.5 21M472 348.2l-1.8 21.2M470.4 369.9l-1.3 21M472.5 322.6l-1.2 13.2M471.3 336.3l-1.1 18.8M471.4 316.9l-0.7 13.7M465.1 388.2l-0.9 11.7M468 327.4l-1.4 19.1M465.5 363l-1.1 15.3M463.4 395.5l-1.2 15.5M466.9 310.2l-1 12.8M465.7 324.1l-0.9 14.6M462 375.3l-1.5 21.5M465.4 311.3l-1 15.4M457.3 387.6l-0.9 16.2M459.8 334.8l-1.1 14.9M457.3 369.6l-0.8 14.1M460.8 299.4l-0.8 13.7M458 341.6l-0.7 11M456.7 339.9l-0.8 13.3M454.1 359.9l-0.9 11.6M452.2 388.2l-1.2 16.2M453.6 330.5l-1.5 19.9M451.1 349.8l-1 13.5" stroke="#aca27b" stroke-width="0.8" stroke-opacity="0.5" fill="none" stroke-linecap="round"/>
<path d="M622 363.4l-1.4 21.7M622.3 341.2l-0.8 12.4M621.2 354.1l-1.1 19.6M619 388.6l-1.6 18.7M618.9 351.9l-1.7 21.7M618.8 331.6l-0.8 11.9M616.9 358.3l-0.9 14.1M615.9 373.7l-1.5 21.7M614.5 396.2l-1.3 18.4M614 385.7l-1.5 19.8M615.4 345.7l-1 14.8M611.6 383.3l-1.3 14.7M614.9 318l-1.2 16M612.6 348l-0.9 11.9M613.6 315.1l-1.3 16.2M612.6 331.9l-1.7 20.2M608.8 386.6l-1 13.7M606.7 396l-0.8 12.8M610.8 315.8l-1.1 20.3M609.4 337.1l-0.9 16M608.3 353.9l-1.1 17.3M607 372.2l-1.4 19.7M605.6 355l-1.2 16.7M606.9 316l-0.8 15M603.5 310.1l-1 12.6M602.5 324l-1.1 18.7M601.3 343.3l-1.4 18.1M603.5 293.8l-1.3 14.3M599.3 351.9l-1 12.2M601.4 301.9l-1.3 20M598.7 340.7l-0.6 12.7M597 366.8l-1.1 12.8M596 380.6l-1 12M598.8 322.3l-1.1 14.7M597.7 338l-1.6 20.5M596 359.8l-1.2 19.8M594.5 380.8l-0.6 11.7M593.8 393.6l-1.2 19.1M594 372.8l-1.4 21.8M597.2 305.4l-1 18.3M590.9 396.2l-1 17.4M592.4 341.7l-1.7 19.7M593.1 292.6l-1.1 17.6M590.6 330.4l-1.6 17.5M592 287.9l-1.4 19.5M587.8 330.4l-1.3 17.9M586.3 349.1l-0.6 11.9M584.6 377.5l-1.2 16.9M589 295.9l-1.1 13.4M586.6 326.3l-0.9 16.8M583.2 355.6l-1.1 21.4M581.8 378l-1.3 21.3M585.5 309.9l-1.5 16.6M585.1 294l-1.1 16.3M582.4 331.6l-1.1 15.9M579.9 366l-0.8 15M582.4 314.1l-1.4 18.9M581 333.8l-1.3 16.9M578.4 369.6l-1.1 15.5M578.5 349.2l-1.3 17.8M579.4 322.1l-1.8 20.1M576.4 360.4l-0.7 13M579.2 301.2l-0.4 11M571.7 390.2l-0.7 15.1M577 298.3l-1.2 15.8M575.7 315.1l-1 14.1M572.5 362.6l-1.2 16.3M572.5 345.9l-1.3 15.6M574.7 291.6l-0.8 16.1M568.7 381.3l-1.2 14.7M571.4 320.3l-1.5 20.8M567.3 380.4l-0.6 11.1M570.6 314.4l-1.3 18.9M569.2 334.6l-1.2 20M565.4 390.2l-1.1 12.8M568.7 320.5l-1 14.4M566.3 357.8l-1.3 17.7M565.2 376.3l-1.4 17.6M563.8 395.1l-1 15.2M569.3 295.8l-1.1 13.4M566.4 340.7l-1.7 20.2M567.6 301.3l-1.3 20.3M565.2 318.3l-1.4 21.9M562.9 333.1l-1 11.5M558.5 396.6l-1.5 20.9M564.4 291.2l-1.4 19.5M560.5 346.6l-1.1 13.7M560.9 301.8l-0.8 15.8M558.6 318.6l-0.9 11.7M555.4 348.8l-1.3 15.1M551.7 383l-1.7 20.9M556.7 289.4l-1.5 21M550 388.3l-1 14.8M551.5 348.9l-1.6 19.6M549.8 369l-1 16.8M553.9 293.6l-1.5 19.4M548.5 371.1l-1.7 21.5M547 393.4l-1.2 13.2M550.1 328l-0.9 11.2M551.6 287.7l-1.2 19.1M548 339.9l-0.9 13.9M547.9 325.4l-1.3 19.1M544.4 356.5l-1.5 19.3M541.8 374.4l-1.3 19.3M546.1 294.3l-1.4 18.3M541.9 351.9l-1.4 19.3M543.8 308.4l-0.9 12.7M541.2 341.8l-0.8 12.8M539.7 368.5l-1.4 15.1M543.4 294.6l-1.3 16.7M540.1 343.7l-1 12.7M536.4 396l-1 12M540.5 314.8l-1.1 20.1M536.3 379.2l-1 12.7M535.2 371.8l-0.6 13.1M539.5 292.5l-1.4 20.2M537.9 313.9l-0.8 13M535.3 355.5l-0.8 12.8M531.5 373.9l-1.3 13.8M532.7 337.2l-1.2 14M531.4 351.5l-1.3 22M529.2 367.5l-1.5 18.7M533.1 290.9l-1 19M529.7 343.7l-1.4 15.2M526.2 392.6l-1 13.4M524.8 392.8l-1.1 18.3M528.1 324.3l-1.1 16.1M527.2 341.2l-1.3 17.8M527.5 317.1l-1 11.2M522.8 380.8l-1.2 20.2M526.6 310.8l-1.3 17.3M521 390.2l-0.8 13.9M520 384.6l-0.7 13.8M520.5 359.1l-0.9 15.4M519.6 375.3l-1.5 17.7M521.1 332.6l-0.9 16.2M516.6 396.2l-0.5 11M518.8 348.8l-1.5 20.6M515.5 397.6l-1.4 18M520.7 299.7l-1 19.1M520.1 294.5l-0.9 13.4M514.9 363.7l-1.3 20.7M519 291.6l-1.4 15.3M517.6 308.1l-1 13.3M514.6 352.3l-1.6 20.4M516.1 310.1l-0.9 16M512.8 359l-1.2 20M511.2 379.9l-1.1 19.3M515.8 296.2l-0.8 12M514.8 309.7l-0.7 13.1M512.9 337.1l-1.1 15M509.2 394.4l-1.2 16.3M514.7 296.4l-1.2 15.7M513.3 312.5l-1.2 17.2M507.6 378.8l-1 15.5M510 326.5l-1.6 18.4M504.8 395.6l-0.9 17.4M509.7 307.2l-1.3 19.5M508.4 327.4l-0.9 12.9M506.6 356.3l-1.6 19.6M508.3 292.2l-1.3 17.4M506.9 310.1l-1.5 21.4M500.5 367.6l-0.9 12.7M504.2 295.3l-0.9 12.5M503.2 309.1l-0.8 11.6M500.8 344.2l-1.1 14.9M499.8 360.4l-1.4 16.5M498.8 332.8l-0.5 12.2M494.6 377.1l-0.9 12.2M497.9 309.8l-0.8 11.2M496.8 310.9l-1.3 13.2M495.7 325.5l-1.3 18.9M493.2 357.3l-1.4 21.5M494.1 329.7l-0.9 13.1M493.3 320.6l-1 11.9M491.6 346.6l-1.5 18M490.4 365.1l-1.6 18.5M489 384.9l-0.9 12.9M491.2 313.3l-1.2 17.3M488.8 350.3l-1 11.1M486.7 377.9l-0.9 12.3M485.2 383.3l-1.7 20.8M487.1 300.2l-1.5 16.4M483.1 320.7l-1.2 12.6M482 334.2l-0.8 11.4M482.3 313.1l-1.5 16.9M477.7 375.8l-1.4 20.4M480.4 317.9l-0.6 11.5M478.2 315l-1.1 12M475.1 358.8l-1.4 20.1M477.7 301.6l-1.2 17M476.8 297.2l-1.6 19.1M475.2 317.5l-0.8 15.1M474.4 332.9l-1.4 18M471.4 374l-1.3 19.6M468.7 392.4l-0.7 13.7M468.9 372.2l-0.8 11.9M468.1 384.8l-1.1 14.8M468.1 366.9l-1.6 21.7M466.3 388.9l-1.1 18.7M471.8 290.6l-1.4 21.5M466.6 368.3l-1.3 19.1M470.5 294.4l-1.2 17.3M469 295l-1.5 20.3M465.1 352.1l-0.9 13.1M464.7 340.1l-1.5 19.5M463.2 360l-1 14.5M460.7 397.3l-1 12.6M466.7 290.3l-1.4 20M461.4 369.1l-1.5 19.4M459.9 389.7l-1.2 16.6M464.9 295.8l-0.9 18.5M459.2 378.8l-1.2 18.9M463.9 292.6l-1.2 19.4M461.5 329.7l-1.4 15.9M460.3 346.4l-1.6 19.7M461.3 312.1l-1.3 21.3M458.6 350.4l-1.3 18.8M460.1 313.9l-0.8 11.8M458.9 326.4l-0.8 13.9M455.6 373.6l-1.1 17M454.4 391l-0.9 14.3M458.3 302.4l-1.5 21.2M455.3 345.4l-1.3 13.8M453.1 372.7l-1 14.2M457.2 297.8l-1.5 19.8M454.9 331.2l-1 11.4M454 343.5l-1.3 17.8M452 351.6l-1.2 18.5M451.8 316.2l-1.1 20.8" stroke="#988e6b" stroke-width="0.8" stroke-opacity="0.5" fill="none" stroke-linecap="round"/>
<path d="M622.8 368.8l-1.2 16.7M620.4 385.8l-1 15.3M619.8 374.5l-0.7 13.5M621.6 330.2l-0.9 13M619.7 359.3l-1.1 13.4M617.8 387l-1.1 13M620.2 334.1l-1.4 16.8M619.7 299.7l-0.9 15.3M618.7 299l-1 11.4M617.8 310.7l-1.1 16.5M614.3 361l-1 14.2M615 296.7l-1.4 17.7M611.6 326.7l-0.9 13.7M607.9 379l-1.1 16.7M610.5 304.4l-1.5 21.2M609.1 326.2l-1.3 17.1M608.1 319.2l-0.9 12.8M605.8 332.4l-0.9 14.4M602.4 380.5l-1.3 18.6M600.5 391.5l-1.1 15.5M604.6 313.4l-1.3 20.4M603 335l-1 19.1M604.7 291.2l-1.1 17.9M600 361.9l-1.1 11.9M597.6 379.7l-1.5 19.6M600.1 322.7l-1.3 17.6M600.7 296l-1 13M597.3 322.6l-0.8 14.1M595.2 354.5l-1 16.8M593.9 353.4l-0.8 12.9M593.1 366.7l-0.9 14.1M596.5 301.1l-0.9 11.7M591.4 368.6l-1 18.7M593.6 324.1l-1.2 16.1M590.5 362.9l-1.2 18.1M594.3 292.6l-1.3 16.7M592.1 325.4l-1.7 21.5M588.7 375l-0.7 11.3M589 348.3l-0.9 13.4M589.9 298.1l-0.9 17.3M583.4 375.1l-1.3 20.1M587.9 291.3l-1.2 20.3M586.3 312.4l-1.5 20.6M579.2 394.5l-0.9 13.5M583.8 311.2l-1.4 19M579.1 382.4l-1.3 16.3M579.6 351.6l-0.9 16.8M577.3 385.6l-0.8 13.7M577.3 368.3l-1.2 16.6M576.1 385.9l-1.5 21M575.7 374l-1.3 18.7M574.1 393.5l-0.9 15.4M576.3 345.7l-1.1 15.6M577.3 312.8l-1.2 18.4M574.8 347.2l-1.2 16.5M573.7 347l-1.3 14.1M575.8 293.7l-1 16.1M575 310.5l-1.3 14.6M570.8 347.8l-0.8 14.2M569.9 342.6l-0.9 14.8M564.8 361.3l-1 12.7M565.5 334.5l-1.5 19.5M561 377.3l-1.5 21.7M560.9 361.2l-1.1 12.9M561.5 332.6l-0.8 13.6M559.6 361l-0.7 12M560.1 335.2l-1.3 17.7M558.6 353.7l-1.1 18.5M555.1 384.9l-0.8 14.8M557.8 330.7l-1.3 15.1M556.5 346.7l-0.9 16.7M557.6 316.1l-1.2 18.6M553.2 378l-1.3 19.9M558.3 288.5l-1.5 20M556.5 309.2l-1.2 20.4M554.2 326.3l-0.8 12.7M552 359.8l-1.1 11.1M551 371.4l-1 16.5M552.7 329.2l-1.5 18.5M552.4 313.3l-1.1 14.3M550 348.1l-1.5 21.8M545.5 391.2l-0.6 14.9M549.3 319.3l-1.4 20.1M544.3 391.2l-1.2 19.6M550.3 290.8l-1.6 21.5M548.6 312.9l-0.9 11.1M544.7 367.8l-1.2 19.4M543.2 388.3l-1.3 19.2M542.7 377.1l-0.9 14M541.6 391.9l-1.2 19.7M547.7 290.6l-1.7 21.8M544.8 331.9l-1.5 20.3M543.2 353.3l-1.4 20.3M544.9 290.1l-1.3 17.1M543 321.7l-1.6 18.6M538.5 384.4l-1 11.9M541.2 324.4l-1.3 18.2M539 357.2l-1.4 21.2M539.8 306l-0.8 12.9M538.9 319.7l-0.6 12.1M537.4 304.3l-1.1 14.4M535.1 340.6l-1.3 15.8M532.2 379.6l-0.9 13.1M536.5 301.2l-1.6 19.1M533.4 323.6l-0.7 12.5M528.8 392l-1.2 14.3M534.2 294.3l-1.1 14.8M533.3 310.3l-1.1 13.6M532.3 324.2l-0.9 11.9M527.4 374.1l-1.1 17.5M531.7 292.8l-1.1 19.2M530.5 312.6l-1.1 14.2M528.5 341.4l-1 13.9M527.3 356.7l-1.1 14.1M526.1 371.8l-1.1 19.5M530.5 293l-1.1 16.2M525.8 360.1l-1 15.8M524.7 376.9l-1.7 20.7M528.7 297.7l-1 18.6M527.5 295.2l-0.8 15.1M524.2 343.6l-0.7 12.2M523.4 356.6l-1 13.1M526.1 299.3l-1.1 18.8M524.6 319l-1 16.6M521.7 364.5l-1.7 19.3M522.1 340l-1.2 18M522 318.9l-0.7 13M521.3 311.1l-1.1 16.2M517.5 369.7l-1.1 14.9M516.3 386.1l-1.1 11.1M519.6 320l-1.6 19.4M518 339.8l-0.9 13.9M519 309.3l-1.8 20.7M516 348.4l-1 14.6M512.2 387.3l-1.1 16.1M517.3 294.3l-1.1 15.3M510.2 374.9l-1.1 18.4M508.1 389.4l-1.5 21.3M511.9 315.3l-1.3 18.5M509.1 356.3l-1.6 21.7M504 391.5l-1.3 19.1M508.9 304.9l-0.9 12.4M504.6 365.3l-1 15.5M502.2 397.7l-0.8 12.8M503 366.9l-0.9 13.9M502.1 381.9l-1 16.9M502.9 349.8l-1.2 20.6M502.5 321.1l-1.6 21.8M497.7 390.8l-1.1 10.9M500.1 334.2l-1.4 21.9M498.2 345.7l-1.3 18.6M496.6 365.6l-1.6 21.9M499.7 301.3l-0.6 11M493.7 390.4l-1.1 14.3M497.3 321.8l-1.6 21M495.8 343.9l-1.1 12.7M494.8 357.8l-1.5 19.1M493.2 378.1l-1.2 14.6M494.1 345.5l-0.6 11.2M495.1 312.7l-1.2 16.6M493.2 304.6l-1.1 15.9M490.8 338.2l-1.2 18.7M492.5 292.6l-1.3 19.9M490.1 331.7l-1.3 18.2M491.4 292l-1.1 13.7M489.5 321.8l-1.1 11M488.5 333.7l-1 13.8M484.9 366.7l-1.4 19.4M483.4 387l-1.1 19.5M487.6 312.1l-1.7 21.5M480.7 387.5l-1.4 21.7M486.1 292.7l-1.4 19.2M483.6 329l-1.6 21M479.6 385.9l-1.2 16.6M476.2 397.5l-1.3 20.7M479.7 330.7l-1.6 19.7M478.3 351l-1.3 18.8M476.8 370.1l-1.2 16M477.7 341.4l-1.5 18.5M476.3 361l-1 11.5M475.4 373.4l-1.1 13.7M476.2 341.6l-1.1 16.6M472.2 379.9l-0.7 11.6M471.5 392l-1.4 20M475.5 298.4l-1 13.6M473.3 329.9l-1.3 17.1M473.3 308.2l-0.8 13.1M470.1 355.5l-1.2 15.2M467.4 356l-0.8 11.6M469 312.2l-1.1 14.7M467.6 316.8l-1.6 20.2M466 338.4l-0.9 12.6M463.9 366.6l-1.5 20.8M464.4 327.3l-1.8 20.5M462.8 348.8l-1.3 18.8M463.6 315.3l-1.1 15.7M462.6 331.8l-1.2 15.4M461.5 347.8l-1.3 17.2M462.7 290.2l-1.3 21.5M456.4 385l-1.4 18.5M457.3 353l-1.6 19.6M460 293.7l-1 12.9M459 307.2l-1.2 19.7M455.8 354.1l-0.9 11.9M452.5 361.9l-1 17.3M451.5 380.5l-1.2 17.2M455.3 303.5l-0.9 14M454 307.4l-1.5 20.5M452.3 328.3l-1.5 20M453.1 296.3l-1 19.6" stroke="#c6bd92" stroke-width="0.8" stroke-opacity="0.5" fill="none" stroke-linecap="round"/></g><path d="M469.9 340.3l-0.3 4.2M480.4 336.9l-0.2 3.1M485.2 333.6l-0.3 3.1M503.5 313.8l-0.2 3.6M505.2 312l-0.2 3.8M507.1 311l-0.2 3.5M508.1 311.2l-0.1 2.4M514.1 308l-0.2 3.3M515.4 307.6l-0.2 3.5M521.5 305.3l-0.2 3.9M523.3 305.5l-0.3 3.9M536.8 304.1l-0.3 3.9M539.4 303.8l-0.3 3.6M552.6 303.8l-0.2 3.6M573.6 304.3l-0.2 3.7M576.2 304.5l-0.3 3.8M583 305.4l-0.2 3.7M585 305.2l-0.3 4.6M586.7 306.3l-0.2 3.3M588.3 305.9l-0.3 4.4M589.7 306.6l-0.2 3.8M603.8 309.7l-0.2 3.3M610.7 311l-0.3 3.7M600.9 366.1l-0.2 2.9M593 373l-0.2 3.2M591.1 374.6l-0.2 2.7M583.8 379l-0.2 3.1M581.4 380.2l-0.2 3.2M580.2 380.6l-0.3 4.6M577.7 382.1l-0.3 4.3M576.3 383.5l-0.2 3.3M575.1 383.6l-0.3 3.6M572.5 385.3l-0.2 2.4M566.2 387.7l-0.2 2.9M562.5 388.1l-0.3 4.1M556.3 390l-0.2 3.6M553.8 391.2l-0.2 3.2M548.9 391.9l-0.3 3.7M546.4 392.7l-0.2 2.7M542.6 393l-0.2 3.5M536.6 394.4l-0.2 3.4M534.4 394l-0.3 4.3M530.9 394.5l-0.2 3.2M528.3 394.3l-0.3 3.8M525.2 394.4l-0.3 4.4M507.7 393.8l-0.3 3.7M502.8 394l-0.3 3.5M497.3 393.6l-0.2 3.8M479.7 393.6l-0.3 3.2" stroke="#6a624b" stroke-width="1.1" stroke-opacity="0.9" fill="none" stroke-linecap="round"/>
<path d="M459.3 340.6l-0.3 4M461.2 341.5l-0.3 4.1M463.4 341l-0.3 4.1M467.1 341.3l-0.2 3.4M471.1 341l-0.2 2.9M472.5 340.1l-0.3 4.2M473.8 340.2l-0.2 2.7M475 339.9l-0.3 3.4M481.4 335.8l-0.2 3.6M482.4 335.2l-0.3 4M483.3 334.7l-0.2 3.7M484.3 333.3l-0.3 4M486.2 331.9l-0.3 3.4M487.1 331.2l-0.3 4.1M487.9 331.1l-0.2 2.8M488.9 330l-0.3 3M510.5 309.1l-0.3 4M511.7 308.4l-0.3 4M519.8 306.6l-0.2 2.7M525.2 305.2l-0.3 3.3M531.8 304.4l-0.3 3.8M563 303.7l-0.3 3.9M568.3 304.7l-0.2 2.7M578.6 305.2l-0.3 4M580.9 305.1l-0.3 3.7M591.1 306l-0.3 4.5M596.5 307.2l-0.3 4.1M606.6 310.2l-0.2 3.8M608 310.7l-0.2 3.6M611.8 312.7l-0.2 3.5M613 312.9l-0.3 3.5M616.3 315.6l-0.3 3.6M602 364.3l-0.2 3.5M599.9 366.4l-0.2 4.1M598.9 367.8l-0.3 3.3M596.9 369.1l-0.3 4.3M595.9 369.9l-0.3 4.1M590.1 375.3l-0.2 3.3M589.2 375.5l-0.3 3.9M588.2 376l-0.2 3.2M586.1 377.8l-0.3 4M585 377.9l-0.3 4M582.6 380l-0.2 3M578.9 381.7l-0.2 3.8M571.2 385.8l-0.3 3.5M568.7 386.3l-0.2 3.5M565 387.3l-0.2 3.6M560 388.8l-0.2 3.8M557.6 389.4l-0.3 4.5M547.6 392l-0.2 3.6M543.9 393.2l-0.2 2.7M541.4 393.3l-0.2 3.3M540.1 393.7l-0.2 3M523.5 394.2l-0.3 4.7M519.9 395l-0.2 3.5M518.1 394.4l-0.2 3.4M512.1 394.7l-0.3 3.6M509.9 394.7l-0.3 3.8M500.1 394.6l-0.1 2.5M483.4 393.7l-0.2 3.3M463.4 393.1l-0.2 3.6" stroke="#605843" stroke-width="1.1" stroke-opacity="0.9" fill="none" stroke-linecap="round"/>
<path d="M464.6 341.5l-0.3 3.9M465.8 341.3l-0.2 3.7M468.5 340.4l-0.3 4.5M476.2 338.7l-0.3 3.8M477.2 338.9l-0.2 3.4M478.4 337.5l-0.3 4.1M479.4 337.4l-0.3 3.8M509.3 310.4l-0.2 2.8M512.9 308l-0.3 3.8M516.8 306.7l-0.3 4.2M518.3 306l-0.3 4.5M527.2 304.3l-0.3 4.5M529.4 305.1l-0.2 2.7M534.2 303.8l-0.3 4.6M542 304.1l-0.2 3.5M544.7 303.1l-0.2 4.1M547.4 303.8l-0.2 3M550 304.1l-0.2 2.6M555.1 304.2l-0.2 3.2M557.7 304l-0.2 3M560.3 304l-0.3 3.8M565.7 303.9l-0.3 3.3M571 305l-0.3 3.5M592.2 306.6l-0.2 3.1M594.4 306.9l-0.2 3.4M598.6 308.1l-0.1 2.8M599.8 308.6l-0.2 2.7M601.2 308l-0.3 3.4M602.5 308.7l-0.3 3.8M605.2 309.9l-0.2 3.2M609.3 311.2l-0.2 3.5M614.8 314.4l-0.2 3.5M597.9 368.3l-0.2 3.3M594.9 371.1l-0.2 3.2M593.9 372l-0.1 2.7M592.1 373.3l-0.3 3.7M587.2 376.4l-0.3 3.8M573.8 384.6l-0.2 2.7M570 385.8l-0.3 3.2M567.5 386.3l-0.3 4.4M563.7 388.1l-0.2 3.4M561.3 388.5l-0.3 3.4M558.8 389.3l-0.2 3M555 390.7l-0.1 2.6M552.6 390.8l-0.2 3.3M551.4 390.7l-0.3 3.7M550.1 391.8l-0.2 3.1M545.1 392.5l-0.2 3M539 393.5l-0.3 4.1M532.1 394.9l-0.2 2.7M529.6 394.2l-0.2 3.9M526.7 395.3l-0.2 3.4M521.8 394.3l-0.3 3.6M516.1 395.2l-0.1 2.5M514.2 394.8l-0.3 3M505.3 394l-0.3 4.4M494.1 393.9l-0.3 4.2M490.7 394.1l-0.3 3.9M487.1 393.3l-0.3 4.5M476 393.2l-0.2 3.5M472.5 393.3l-0.3 4.2M469.1 393.2l-0.2 3.2M466.1 393l-0.3 3.9M461.2 392.9l-0.3 3.4M459.3 393.3l-0.2 3.4" stroke="#746b53" stroke-width="1.1" stroke-opacity="0.9" fill="none" stroke-linecap="round"/>
<clipPath id="hclip"><path d="M300.0,296.0C306.4,290.9 309.2,290.1 315.0,288.0C320.8,285.9 328.8,283.8 335.0,283.5C341.2,283.2 347.5,284.8 352.0,286.0C356.5,287.2 359.3,289.6 362.0,291.0C364.7,292.4 365.7,294.7 368.0,294.5C370.3,294.3 373.0,291.5 376.0,290.0C379.0,288.5 381.8,286.6 386.0,285.5C390.2,284.4 396.0,283.6 401.0,283.5C406.0,283.4 411.2,283.9 416.0,285.0C420.8,286.1 425.7,287.8 430.0,290.0C434.3,292.2 437.6,293.2 442.0,298.0C446.4,302.8 453.7,311.1 456.5,318.6C459.3,326.1 458.2,334.9 459.0,343.0C459.8,351.1 460.8,358.9 461.3,367.0C461.8,375.1 461.1,383.0 462.0,391.7C462.9,400.4 465.5,407.9 467.0,419.0C468.5,430.1 469.6,443.1 470.9,458.0C472.2,472.9 473.9,497.4 474.8,508.6C475.7,519.8 476.0,519.6 476.0,525.0C476.0,530.4 476.5,535.2 475.0,541.0C473.5,546.8 471.4,553.5 467.0,560.0C462.6,566.5 454.7,573.3 448.5,580.0C442.3,586.7 437.1,593.3 430.0,600.0C422.9,606.7 413.0,614.3 406.0,620.0C399.0,625.7 395.0,630.4 388.0,634.0C381.0,637.6 370.7,641.3 364.0,641.5C357.3,641.7 353.7,638.6 348.0,635.0C342.3,631.4 336.6,625.8 330.0,620.0C323.4,614.2 315.9,606.7 308.6,600.0C301.3,593.3 293.1,586.7 286.0,580.0C278.9,573.3 270.8,566.5 266.0,560.0C261.2,553.5 258.7,547.7 257.0,541.0C255.3,534.3 255.5,530.6 255.6,520.0C255.7,509.4 256.2,491.0 257.5,477.4C258.8,463.8 261.1,452.7 263.4,438.4C265.6,424.1 269.6,403.6 271.0,391.7C272.4,379.8 271.7,375.1 272.0,367.0C272.3,358.9 272.2,351.1 273.0,343.0C273.8,334.9 272.2,326.4 276.7,318.6C281.2,310.8 293.6,301.1 300.0,296.0Z"/></clipPath>
<path d="M300.0,296.0C306.4,290.9 309.2,290.1 315.0,288.0C320.8,285.9 328.8,283.8 335.0,283.5C341.2,283.2 347.5,284.8 352.0,286.0C356.5,287.2 359.3,289.6 362.0,291.0C364.7,292.4 365.7,294.7 368.0,294.5C370.3,294.3 373.0,291.5 376.0,290.0C379.0,288.5 381.8,286.6 386.0,285.5C390.2,284.4 396.0,283.6 401.0,283.5C406.0,283.4 411.2,283.9 416.0,285.0C420.8,286.1 425.7,287.8 430.0,290.0C434.3,292.2 437.6,293.2 442.0,298.0C446.4,302.8 453.7,311.1 456.5,318.6C459.3,326.1 458.2,334.9 459.0,343.0C459.8,351.1 460.8,358.9 461.3,367.0C461.8,375.1 461.1,383.0 462.0,391.7C462.9,400.4 465.5,407.9 467.0,419.0C468.5,430.1 469.6,443.1 470.9,458.0C472.2,472.9 473.9,497.4 474.8,508.6C475.7,519.8 476.0,519.6 476.0,525.0C476.0,530.4 476.5,535.2 475.0,541.0C473.5,546.8 471.4,553.5 467.0,560.0C462.6,566.5 454.7,573.3 448.5,580.0C442.3,586.7 437.1,593.3 430.0,600.0C422.9,606.7 413.0,614.3 406.0,620.0C399.0,625.7 395.0,630.4 388.0,634.0C381.0,637.6 370.7,641.3 364.0,641.5C357.3,641.7 353.7,638.6 348.0,635.0C342.3,631.4 336.6,625.8 330.0,620.0C323.4,614.2 315.9,606.7 308.6,600.0C301.3,593.3 293.1,586.7 286.0,580.0C278.9,573.3 270.8,566.5 266.0,560.0C261.2,553.5 258.7,547.7 257.0,541.0C255.3,534.3 255.5,530.6 255.6,520.0C255.7,509.4 256.2,491.0 257.5,477.4C258.8,463.8 261.1,452.7 263.4,438.4C265.6,424.1 269.6,403.6 271.0,391.7C272.4,379.8 271.7,375.1 272.0,367.0C272.3,358.9 272.2,351.1 273.0,343.0C273.8,334.9 272.2,326.4 276.7,318.6C281.2,310.8 293.6,301.1 300.0,296.0Z" fill="#7c7156"/>
<g clip-path="url(#hclip)"><g filter="url(#soft2)">
<path d="M245 284.2l25.7 0.2M270.7 284.6l29.9-0.3M379.3 284.7l39.1-0.2M418.4 284.4l36.2-0.2M454.6 284.6l39.6-0.1M245 289.9l25.2-0.1M270.2 290l19.8-0.5M290 289.8l25-0.2M375.2 289.6l38.4 0.1M458.8 290l30.2-0.3M296.3 295.2l29.1 0.1M325.4 295.3l29.2-0.1M376.4 294.9l34.3 0.1M410.7 295.1l30.1 0M467.9 295.1l19.2 0M245 300.4l34 0.1M301 300.6l30.1-0.1M370.9 300.7l22.2-0.2M336.1 305.9l27.4 0.1M436.6 305.9l31.5 0M245 311.3l34.7-0.4M313.7 310.9l33.1 0.1M396.7 311.4l24.7-0.2M421.4 311.3l21.4 0.1M442.8 311.4l18.8-0.1M461.6 311.1l24.6 0.2M277 316.3l17.3 0M315.5 316.7l20.9-0.2M336.4 316.4l37.7 0M374.1 316.5l21.9-0.2M396 316.5l21.2 0.1M417.2 316.3l37.1 0.4M478 316.4l25.8-0.1M331.2 321.6l29.1 0.1M360.3 321.7l39 0.3M399.3 321.7l29.5 0.2M428.8 322l28-0.2M456.8 322l15 0.1M471.8 322.1l28.3-0.1M245 327.4l31.6 0M276.6 327.1l24.4 0.1M301 327.5l23.4-0.4M356.2 327.1l32.8-0.1M481 327.3l24.4-0.4M415 332.4l25.5-0.1M440.5 332.5l25.8 0.3M279.7 337.7l33.3 0.4M349.9 337.8l31.8 0.4M381.7 337.7l33.2 0.4M452.8 337.8l23.7 0.1M476.5 338.2l26-0.3M411 343.1l25.1 0M436.1 343.4l19 0.1M245 348.5l39.8 0.1M284.8 348.7l25.9-0.2M310.7 348.5l31.5-0.2M342.2 348.8l19.6-0.4M412.3 348.5l16.5-0.1M462.3 348.7l26.5 0.1M245 354l18.4-0.1M291.2 354.1l21.4 0M312.6 354l31.5-0.1M360.8 354l33.6-0.3M394.4 354.2l27.4-0.5M421.8 354.2l22.5 0M325.2 359.3l29.9 0.1M355.1 359l31.9 0.5M387 359.4l19.5-0.1M406.5 359.1l28.6 0.3M435.1 359.3l22.1-0.1M457.2 359.3l30.4-0.2M245 364.6l38.2 0.3M361.6 364.4l37.6 0.1M399.2 364.7l35.6 0.2M434.8 364.5l33.2 0.3M468 364.7l19.9 0M274.2 369.9l30.7 0M304.9 370.1l39.1-0.1M344 369.7l31.9 0.5M434.1 369.9l37.5 0.3M471.6 370.2l21.2-0.4M305 375.1l21.1 0.1M326.1 375.6l18.1-0.5M344.2 375.2l31.7-0.1M375.9 375.3l31.4-0.2M407.3 375.4l26.6 0.1M433.9 375.1l16.6 0.1M366.5 380.7l34.9-0.2M430.7 380.4l17.1 0.3M479.8 380.8l29.1-0.1M322.6 386.2l16.3-0.2M408.2 386.2l37.7 0M445.9 386.2l22.3-0.2M245 391.6l27.4-0.3M272.4 391.3l24-0.1M373.7 391.7l39.8-0.3M245 396.7l32.3 0.3M277.3 396.5l33.2 0.4M472.9 396.9l18.8-0.1M245 401.9l29.4 0.3M290.6 402.1l18.7-0.3M328.4 402.2l18.8-0.2M347.2 402.1l17.5-0.3M385.1 402l21.9 0.1M442.1 402.2l20.5-0.2M462.6 402.1l17.1 0.1M245 407.6l16.8-0.2M334.6 407.2l21.6 0.5M356.2 407.5l17.2 0.2M373.4 407.4l38 0.2M459.2 407.5l39.8 0.1M295.3 412.8l37.2-0.2M332.5 412.6l30.5 0.4M363 413l35.1 0M443.8 412.7l28.6-0.2M472.4 412.6l39 0.3M267 418.2l26.4 0.2M293.4 417.9l27.6 0.4M321 418.1l33.8 0M416.2 418.1l16.3 0.3M245 423.4l37.4 0.1M344.8 423.5l34.4 0.2M416.8 423.3l21.9 0.2M438.7 423.4l33.7 0.1M306.1 428.7l25.2 0M401.7 428.6l38.5 0.5M440.2 428.7l38.4 0.1M245 434.2l38.4 0.2M341.4 434.3l24 0M411.2 434.4l30.2-0.2M476.9 434.4l17.3-0.3M260.7 439.8l36.8 0M314.7 439.4l15.2 0.3M361.4 439.7l25.4-0.4M386.8 439.7l15.2-0.2M402 439.5l29.7-0.1M467.1 439.6l34.4 0.1M245 444.8l32.8-0.1M296 444.9l38-0.1M366.4 445.1l16.5-0.1M410.3 444.7l21.7 0.2M432 445.2l20.5-0.5M452.5 444.7l32.2 0.2M355.7 450.4l25.1-0.4M420.3 450.5l31.2-0.2M245 455.5l30.5 0.3M344.4 455.4l22.7 0.1M421.4 455.7l24.5-0.2M445.9 455.7l17.2 0.1M245 460.8l18.9-0.1M263.9 460.7l35 0M334.4 460.8l23.6 0.4M358 461.2l15.3 0M373.3 461.2l30.2-0.3M439.4 461l21.5-0.2M245 466.5l28.9-0.1M273.9 466.2l24.3-0.1M315.1 466.1l30.3 0.4M378.8 466.1l30.5 0.1M409.3 466.3l23.9-0.3M433.2 466.3l17.1-0.2M450.3 466.6l16.3 0M281.8 471.6l19.3 0.2M301.1 471.9l15.7-0.1M338 471.4l29 0.2M245 476.8l36.2 0.3M309.2 477l37.1-0.2M363.7 477.1l34.6-0.1M292.7 482.2l29.2 0.2M321.9 482.4l28.4-0.2M376.1 482.5l37.5 0M449.2 482.6l16.4 0M245 487.4l23.7 0.4M268.7 488l23.4-0.2M347.4 487.9l19.4-0.2M406.2 487.9l22.8-0.2M262.7 492.8l24.9 0.2M287.6 493l32.9 0.2M320.5 493.3l31.8-0.4M374.3 493.3l19.7-0.4M430.2 493.2l22.8 0M453 492.9l28.1 0.1M481.1 493l37.1 0.2M245 498.2l33.5 0.3M278.5 498.5l22-0.3M300.5 498.1l35.8 0.3M420.4 498.3l20.3-0.1M440.7 498.6l25.2-0.3M465.9 498.5l29.4 0.2M245 503.9l15.3-0.1M324.1 504l36.3-0.4M441.5 503.9l17.3 0M458.8 503.7l28.8-0.1M245 509.3l16.3-0.4M261.3 508.9l23.2 0.1M316.7 509.2l16.1-0.1M332.8 509.1l20.6 0.2M353.4 509.3l23.5 0M376.9 509.2l33.9 0M474.9 509.2l18.2-0.3M245 514.7l31.6-0.1M294.6 514.6l38.8 0M370.4 514.5l31.5-0.1M471.4 514.2l30.6 0.3M338.2 520l38.7-0.3M415.8 519.6l16.2 0.3M452.2 519.9l21.3 0.2M245 525.4l34.6-0.2M334 525.1l39.6 0.3M413 525.4l37.7-0.1M476.7 524.9l26.5 0M245 530.6l22.6-0.3M300.7 530.2l19.8 0.6M320.5 530.4l15.4 0.3M351 530.7l20.9-0.3M371.9 530.6l21.8 0.1M393.7 530.2l23.4 0.2M417.1 530.6l37.8-0.3M483.4 530.3l29.1 0M273.4 536.1l27.3-0.2M300.7 536l19.9 0.1M415 536l35.8-0.2M450.8 535.6l17.4 0.5M468.2 535.9l36-0.2M308.5 540.9l15.5 0.3M324 541.4l24.7-0.3M348.7 541l34.7 0M410.7 541.4l32.4-0.2M443.1 541.2l21.2-0.2M245 546.7l30.6-0.1M275.6 546.3l36.2 0.1M357.1 546.6l26.6-0.1M423.6 546.5l21.4-0.2M245 552.1l21.4 0M266.4 552.1l39.9-0.4M306.3 551.7l15.3-0.1M347.8 552l37.6 0M440.7 552.1l29.9-0.3M470.6 551.7l26.3 0.2M270.5 557.3l35.3-0.3M305.8 557.4l18.8-0.2M371.8 557.5l29.1-0.1M400.9 557l20.3 0.4M421.2 557.3l29.9 0.1M478.1 557l29.6 0.1M245 562.5l23.3 0.4M268.3 562.7l19.3-0.2M314.2 562.3l18.7 0.2M369.1 562.6l38-0.2M407.1 562.7l37.4-0.1M468.2 562.4l26 0.1M268.6 568l26.7 0.1M316.9 568.1l34.7 0M470.6 567.9l35.1 0.1M245 573.3l18.7-0.2M263.7 573.5l33.9-0.4M245 578.9l39.6-0.2M284.6 578.7l15.4 0.2M400.7 578.4l39.6 0.2M270.4 584.1l15.1-0.1M307.9 584.1l38.1 0M346 584.1l36.5-0.1M382.5 584.2l36.8-0.1M419.3 583.9l22.9-0.1M442.2 584.3l35-0.2M477.2 583.8l36.6 0.3M264.5 589.1l35 0.2M299.5 589.2l22.7 0.2M355 589.1l26.5 0.5M381.5 589.2l15.7 0.1M397.2 589.1l31.6 0.2M428.8 589.3l33.8-0.2M462.6 589.5l20.9-0.2M264.7 594.8l22.5 0.1M352.8 594.4l36.1 0.3M388.9 594.8l38.1-0.3M465.5 594.9l31.2-0.1M277.1 600.2l24.9-0.1M336.8 600.3l38.8-0.2M375.6 600l22.9 0.2M414.7 599.8l29.5 0.5M444.2 600.2l31.1-0.1M475.3 599.8l24.5 0M274.4 605.5l37.9 0.1M378.7 605.1l33.8 0.2M412.5 605.5l20.6 0.2M433.1 605.5l23.3-0.3M456.4 605.2l27.3 0.3M483.7 605.3l16.7 0.2M312.2 610.7l31.4-0.1M417.3 610.5l25.5 0.2M484.7 610.8l39.2-0.1M408.8 615.8l27.4 0.3M458.8 615.9l16.7 0.3M475.5 616.3l26.4 0M245 621.3l19.8-0.1M282 621.5l36 0M409.8 621.3l22.7 0.1M260.8 626.6l19.8 0.4M280.6 627.1l19.8-0.5M318.5 626.7l24.8 0.3M343.3 627.1l25.3-0.5M395.6 626.6l26 0.4M245 632.4l32.5-0.3M303.8 632.2l20.9 0.2M324.7 632l36 0.2M441.5 632.1l36.5 0.2M273.1 637.8l17.8-0.5M349.8 637.4l24.7 0.3M433.7 637.4l29.3 0M463 637.6l19.8-0.2M338.6 642.7l33.2 0M404.4 643l31.9-0.3M436.3 642.6l25.4 0.3M461.7 642.8l34.2 0.3" stroke="#a29675" stroke-width="2.8" fill="none" stroke-linecap="butt"/>
<path d="M300.6 284.6l15.2-0.1M315.8 284.2l24.1 0.3M339.9 284.3l39.4-0.2M315 289.6l30.7 0.4M345.7 289.6l29.5 0.4M413.6 289.6l30.1-0.1M443.7 289.8l15.1 0M245 295.1l26.7-0.3M271.7 295.4l24.6-0.1M354.6 295.2l21.8-0.2M440.8 295.3l27.1-0.3M279 300.6l22-0.1M331.1 300.7l39.8-0.4M393.1 300.7l37.2-0.3M430.3 300.2l30.5 0M460.8 300.6l37.1-0.3M245 306.1l22.8-0.6M267.8 305.7l36.8 0M304.6 306l31.5 0.1M363.5 305.7l35.8-0.2M399.3 305.6l37.3-0.1M468.1 306l31.8-0.1M279.7 311.2l34 0.1M346.8 311.3l24.9-0.4M371.7 310.9l25 0.5M245 316.8l32 0M294.3 316.7l21.2-0.4M454.3 316.8l23.7-0.1M245 322l39.8 0.1M284.8 321.9l15.4 0M300.2 322.1l31-0.5M324.4 327.4l31.8-0.1M389 327.2l36.3 0.1M425.3 327.3l17.6 0.1M442.9 327l16.7 0.3M459.6 327.5l21.4-0.2M245 332.6l22.9 0M267.9 332.4l18.4 0.3M286.3 332.8l18.1-0.1M304.4 332.7l22 0M326.4 332.8l18.4-0.1M344.8 332.6l38.7 0M383.5 332.7l31.5-0.4M466.3 332.5l21-0.2M245 337.7l34.7 0.2M313 338.1l36.9-0.4M414.9 337.7l37.9 0.4M245 343.2l16.4-0.2M261.4 343.1l33.2 0.3M294.6 343l26.1 0.2M320.7 343.5l20.2-0.2M340.9 343.4l33.3-0.4M374.2 343.2l36.8 0.3M455.1 343.2l35.4 0.1M361.8 348.5l31.9 0.4M393.7 348.8l18.6-0.1M428.8 348.9l33.5-0.5M263.4 354.2l27.8-0.4M344.1 354.1l16.7-0.3M444.3 354l36.6 0.1M480.9 354.2l28.8 0M245 359l15.2 0.2M260.2 359.4l37.9-0.2M298.1 359.5l27.1 0M283.2 364.9l15.9 0M299.1 364.7l33.9-0.2M333 364.6l28.6-0.1M245 369.9l29.2 0M375.9 369.9l35.7 0.3M411.6 369.9l22.5 0M245 375.2l23.5 0.2M268.5 375.2l36.5 0M450.5 375.4l38.2-0.3M245 380.4l21.2 0.6M266.2 380.5l39.7 0.5M305.9 380.9l37.4-0.1M343.3 380.8l23.2-0.3M401.4 380.8l29.3-0.4M447.8 380.6l32 0.3M245 385.9l23.7 0M268.7 385.9l27.8 0M296.5 385.9l26.1 0.2M338.9 385.9l17.5 0.1M356.4 385.9l31.6 0.1M388 385.8l20.2 0.2M468.2 386l24.6-0.1M296.4 391.4l38.2-0.3M334.6 391.1l39.1 0.1M413.5 391.2l28.9 0.3M442.4 391.5l15.7-0.1M458.1 391.6l31.7-0.2M310.5 396.9l39-0.1M349.5 396.7l15.7 0.3M365.2 396.6l19.1-0.1M384.3 397l39.1-0.5M423.4 397l27.7-0.5M451.1 396.8l21.8 0.1M274.4 402.1l16.2 0.1M309.3 402.4l19.1-0.2M364.7 401.8l20.4 0.5M407 402.1l35.1-0.2M479.7 401.8l39.1 0.4M261.8 407.4l35.3 0.2M297.1 407.7l37.5-0.3M411.4 407.7l24-0.4M435.4 407.3l23.8 0.1M245 412.7l21.8-0.2M266.8 412.7l28.5 0.1M398.1 412.5l28.6 0.5M426.7 412.6l17.1 0.5M245 418.2l22 0.1M354.8 418.3l36.8-0.4M391.6 417.9l24.6 0.5M432.5 418.4l19.9-0.2M452.4 418.4l32.8-0.1M282.4 423.6l37 0.1M319.4 423.5l25.4-0.2M379.2 423.6l37.6-0.2M472.4 423.5l15.4-0.2M245 428.8l27.8-0.2M272.8 429l33.3 0M331.3 429.1l17.6-0.2M348.9 428.9l27.4-0.3M376.3 428.9l25.4 0.2M478.6 428.8l27.8-0.2M283.4 434.4l35.6-0.2M319 434.5l22.4-0.4M365.4 434.2l29.9 0M395.3 434.3l15.9-0.2M441.4 434.5l18.7-0.5M460.1 434l16.8 0.5M245 439.7l15.7 0M297.5 439.8l17.2-0.4M329.9 439.6l31.5-0.3M431.7 439.6l35.4 0.1M277.8 445.2l18.2 0M334 444.6l32.4 0.3M382.9 444.7l27.4 0.1M484.7 445.2l21.9-0.5M245 450.1l18.7 0M263.7 450.2l23.6 0.1M287.3 450.2l38.6 0M325.9 450.2l29.8 0.1M380.8 450.2l39.5-0.2M451.5 450.4l34.9 0M275.5 455.5l29.6 0.2M305.1 455.9l19.7-0.1M324.8 455.5l19.6 0M367.1 455.5l38.5-0.1M405.6 455.7l15.8-0.2M463.1 455.8l22.5-0.5M298.9 461l35.5-0.2M403.5 460.8l35.9 0.1M460.9 460.8l19.7 0M480.6 461.2l34-0.5M298.2 466l16.9 0.2M345.4 466.4l33.4-0.2M466.6 466l15.9 0.4M482.5 466.6l37-0.1M245 471.5l36.8 0.1M316.8 471.8l21.2-0.1M367 471.7l19.1 0M386.1 471.4l30.7 0.3M416.8 471.7l22.4 0M439.2 471.4l38.1 0.3M477.3 471.4l21.9 0.5M281.2 477.2l28 0M346.3 476.8l17.4 0.2M398.3 476.7l27.2 0.5M425.5 477.1l24.1 0M449.6 477l39.9-0.2M245 482.2l18.6 0M263.6 482.2l29.1 0.4M350.3 482.6l25.8-0.1M413.6 482.3l35.6-0.2M465.6 482.3l38.8-0.1M292.1 487.6l33.2 0.1M325.3 487.6l22.1-0.1M366.8 487.7l39.4 0.2M429 487.5l32 0.1M461 487.5l30.7 0.1M245 493.1l17.7 0M352.3 493l22 0.2M394 492.8l36.2 0.4M336.3 498.7l37.4-0.3M373.7 498.4l17.1 0.1M390.8 498.6l29.6-0.4M260.3 503.8l28.8 0M289.1 503.7l35 0.3M360.4 503.7l30.2-0.2M390.6 504l35.4-0.1M426 503.7l15.5 0.2M284.5 509.3l32.2-0.2M410.8 508.8l38.5 0.4M449.3 509l25.6 0.2M276.6 514.7l18-0.4M333.4 514.6l37 0M401.9 514.7l32.7-0.1M434.6 514.6l20.9-0.4M455.5 514.4l15.9 0M245 519.8l17.8 0.1M262.8 519.9l22.6-0.3M285.4 519.8l37.4-0.3M322.8 519.8l15.4-0.1M376.9 519.6l38.9 0.5M432 519.7l20.2 0.1M473.5 519.9l36.2-0.3M279.6 525l20.9 0.1M300.5 525.2l33.5-0.3M373.6 525.3l39.4 0.1M450.7 525l26 0.1M267.6 530.5l33.1 0.1M335.9 530.2l15.1 0.3M454.9 530.3l28.5 0.1M245 535.6l28.4 0.5M320.6 536.1l35.6-0.3M356.2 535.6l20.1 0M376.3 535.8l38.7 0.1M245 541.1l34.8 0.3M279.8 541.3l28.7-0.1M383.4 541.3l27.3 0.2M464.3 541.1l16.5 0.2M480.8 540.9l20.9 0.4M311.8 546.6l27.6 0M339.4 546.6l17.7 0M383.7 546.8l39.9-0.3M445 546.3l35.3 0.2M480.3 546.3l22 0.5M321.6 551.6l26.2 0.5M385.4 552.2l31.1-0.3M416.5 552.2l24.2-0.5M245 557.4l25.5-0.4M324.6 557.1l17.7 0.4M342.3 557.5l29.5 0M451.1 557.4l27-0.1M287.6 562.6l26.6 0.1M332.9 562.9l36.2-0.2M444.5 562.5l23.7 0.1M245 568l23.6 0.1M295.3 567.8l21.6 0.3M351.6 568.1l27.9 0.1M379.5 568l32 0M411.5 568.2l39.4-0.1M450.9 568l19.7-0.3M297.6 573.6l34.9 0M332.5 573.4l16.7 0.1M349.2 573.2l33.3-0.1M382.5 573.3l22.5-0.1M405 573.3l38.2 0.3M443.2 573l25.5 0.6M468.7 573.2l21.8-0.1M300 578.6l16.4 0.2M316.4 578.5l27.6 0.3M344 578.4l29.1 0.3M373.1 578.7l27.6-0.2M440.3 578.7l18.5-0.1M458.8 578.5l15.6 0.2M474.4 578.7l21.8 0.1M245 584.1l25.4 0.1M285.5 584.1l22.4-0.3M245 589.5l19.5 0.1M322.2 589.6l17.1-0.4M339.3 589.6l15.7-0.2M483.5 589.3l20.9-0.1M245 594.5l19.7 0.2M287.2 594.7l33.5 0.1M320.7 594.6l16.5 0M337.2 594.6l15.6-0.2M427 594.8l18.9-0.1M445.9 594.6l19.6 0M245 599.9l32.1 0.1M302 600.3l34.8 0M398.5 600.1l16.2-0.3M245 605.4l29.4-0.1M312.3 605.5l26.4-0.2M338.7 605.6l40-0.2M245 610.7l39.3-0.1M284.3 610.7l27.9 0.3M343.6 611l25.8-0.1M369.4 610.8l27.4-0.1M396.8 610.6l20.5 0.3M442.8 610.5l19.7 0M462.5 610.6l22.2 0.4M245 616l17.1 0.4M262.1 615.9l34.2 0.4M296.3 616.4l27.7-0.5M324 616l17.1-0.2M341.1 615.9l35.9-0.1M377 616l31.8-0.1M436.2 616.1l22.6-0.1M264.8 621.3l17.2 0.2M318 621.7l32-0.3M350 621.4l29.1-0.2M379.1 621.5l30.7 0M432.5 621.3l27.2 0.4M459.7 621.2l18.5 0.2M478.2 621.4l28.6 0M245 627l15.8-0.3M300.4 626.5l18.1 0.5M368.6 627l27-0.2M421.6 626.7l26.9 0.3M448.5 626.6l38.1 0.3M277.5 631.9l26.3 0M360.7 632.3l24.6 0M385.3 632.2l27.3 0.2M412.6 631.9l28.9 0M478 632.1l18.3-0.2M245 637.2l28.1 0.6M290.9 637.3l19.6 0.4M310.5 637.5l21.5-0.1M332 637.4l17.8 0.3M374.5 637.4l26 0.3M400.5 637.2l33.2 0.1M482.8 637.7l21.4-0.5M245 642.7l32.5 0.4M277.5 643.1l36.1-0.5M313.6 643l25-0.3M371.8 642.6l32.6 0.4" stroke="#998d6e" stroke-width="2.8" fill="none" stroke-linecap="butt"/>
<path d="M235.2 284.7l16.5 0.9M287.4 284.7l10 1.7M298.4 284.1l12.1 1.7M410.5 284.7l13.2 1.5M440.9 284.8l11.3 1.3M453.6 284.8l10.4 1.6M466.3 284.3l10.3 1.4M259.2 290l10.3 1.7M358.1 290.2l11.3 1.8M421.3 290.2l12.4 1M452.7 289.7l12.6 1.2M236.9 295.1l16.3 1.5M254.8 295.4l12.5 1.8M270.2 295.4l17.3 1.3M289.7 295l9.5 1.4M346.5 295.2l16.8 1.8M401.5 295.1l16.3 1.4M436.5 295.7l17.3 1M471.2 294.9l15.2 1.3M286 300.4l11.5 1M383.6 300.7l12.2 1.7M398.7 300.1l17.5 1.5M462.5 300.5l9.2 1.4M256.9 305.7l10.8 1.9M268.2 305.6l14.5 1.7M373.6 306.1l14.3 1M389.2 305.9l12.2 1.8M414 305.8l13.6 1.3M272.6 311l10.4 1.7M285.5 311l12.4 1M311.2 310.9l12.7 1.9M326.9 311l17.5 1.5M386.8 311l14.1 1.9M415.5 310.9l15.2 1.2M433.4 311.2l15.6 1.6M474 311.3l9.8 1M231.4 316.6l13.1 1.7M397.9 316.6l12.2 1.6M428 316.8l13.7 1.2M249.6 322.3l15.2 1.2M264.7 322l11.2 1.8M277.3 322.3l14.2 1M360.6 321.5l16.4 1.8M396.7 321.7l16.6 1.2M409.8 327.3l10.8 1.3M420.9 327.3l15.1 1.7M477.3 327.1l15 1.1M413.9 332.2l15.1 1M469.5 333l16.8 1.7M312 338.4l12.1 1M324.7 338l13.9 1.6M401.1 338.2l10.4 1.3M440.9 338.2l10.1 1.9M464.5 337.8l14.6 1.3M268.6 343.2l12.4 1.1M297.1 343.6l15.8 1M375.9 343.2l14.9 1.3M393 343l13.9 1.7M279.1 348.8l11.6 1.8M306.4 348.8l17.6 1.2M324.4 348.4l12.3 1.6M382.4 348.4l14.4 1.8M445.1 349.1l10.1 1.2M305.3 353.9l17 1.2M324.6 354.1l12.7 1.7M339.4 353.6l16.5 1.7M399.6 354.2l16.5 1.5M449.1 354.4l15.9 1.3M239.3 359l14.3 1.3M271.1 359l9.1 1.3M298.9 359.3l15.1 1.1M347 359.8l17.8 1.3M377.4 359.5l17.9 1.6M422.8 359.3l16.7 1.3M295.9 364.3l11.7 1.5M308.6 364.5l9.9 1.3M331.8 364.7l16.5 0.9M399.5 365l14.5 1.5M436.2 365l9.3 1.9M459 364.8l17.5 1.8M282.6 370.3l13.7 1.6M341.7 370.2l10.2 1.5M367.6 370.3l13.6 1.3M382.8 370.4l17.2 1.2M401.3 369.8l16.6 1.3M418.5 369.9l13.5 0.9M447.2 370.2l11.9 1.8M461 369.9l14.3 1.1M477 370.4l9.2 1.8M305.2 375.5l17.5 1.1M345.8 375.3l17.8 1.6M425.7 375.5l9.3 1.6M470.4 375.9l12.5 1M307.5 381.2l10.8 1.1M318.4 380.7l14 1.4M333.5 381.2l14.8 1.9M455.3 381l17.6 1.7M474.2 380.8l15 1.5M239.9 385.8l18 1.8M259.5 385.8l17.1 1.5M294.6 385.9l12.6 1.2M330.3 386.6l15 1.1M372.1 385.9l17.5 1M235.9 391.2l15.8 1.1M323.3 391.7l17.7 1.9M358.6 392l9.3 1.5M370.2 391.5l9.9 0.9M434.1 391.7l13.9 0.9M459 391.8l17 0.9M323.4 397.1l17.2 1.5M340.8 396.9l17.4 1.6M394.5 396.4l10.6 1.4M447.2 397.1l12.1 1.9M478.2 396.4l11.2 1.2M241 402.3l9.9 1.2M278 402.6l13.1 1.4M400.3 402.3l17.6 1.3M436.1 402.5l15.5 1M253.6 407.4l12.1 1.5M327.9 407.7l16.4 1.3M357.4 407.9l13.4 1.2M371.2 407.8l12.5 1.9M386.1 407.9l14.5 1.7M411.8 407.2l13.8 1M448.4 407.8l12.1 1.8M462.1 407.3l10.6 1.2M472.9 407.9l11.3 1.3M332.5 413l14.8 1.5M359.3 412.7l11.6 1.1M395.4 413.4l15.4 1.3M240.8 418.5l10.8 1.6M284.1 418.1l16.5 1.9M300.3 418.1l12.2 1.1M326.6 418.1l15.7 1.4M357.4 418.2l15.1 1M398.7 418l11.9 1.3M431.6 418.1l17.2 1.8M463.3 417.9l16 1M287.2 423.9l16.7 1.1M304.4 423.7l12 1M334 423.6l14.4 1.2M403.4 423.5l10.7 1.8M457 423.8l14.1 1.6M474.1 423.8l14.2 1M285.3 429.3l17.3 1.1M303.1 428.6l13.3 0.9M315.6 429.3l11 1.1M326.5 428.7l11.4 1.9M340.2 428.6l16.6 1.8M372.8 429.1l18 1.3M410.6 429.3l17.9 1.5M428.9 428.8l10.5 1.9M441.9 429.2l15.5 1.2M239.2 434.3l17.4 1.3M287.1 434.7l17.4 0.9M306.3 434.1l16.8 0.9M370.3 434.6l13.7 1.3M386.3 434.5l11.9 1.4M399.9 434l9.7 1.3M412.4 434.2l16.1 1.4M457.5 434.6l17.9 1.9M257.5 439.2l10.4 1.5M293 439.4l9.2 1.3M403.5 439.3l9.1 1.7M430.9 440l15.7 1M465.2 439.2l16.1 1.5M351.8 444.9l12.7 1.1M382.3 445.1l12 1.5M407.9 445.3l12.4 1.4M469.8 445.2l16.7 1.5M239.5 450.4l17.3 1.4M270.6 450.6l10.8 1.5M334.9 450.3l17.2 1.2M352.6 450.7l11.6 1.5M381.3 450.6l10.6 1.4M443.6 450.8l9.3 1.1M452.2 450.8l10.9 1.2M288.8 455.3l10.4 1.3M329.8 455.4l15.1 1.1M387.9 456l11.5 1.6M416.8 455.5l13.1 1.3M431.2 456.2l11.4 1.6M445.7 455.5l10.7 1.9M325 461.4l10.1 1.6M395.4 461.3l17.6 1.2M428.9 461.1l17.7 1.8M447.2 461.5l16.8 0.9M238.9 466.8l10.4 1.6M282.7 466.6l13.9 1M312 466.8l12 1M349.2 466.2l16.8 1.2M478.6 466.8l12.2 1.5M265.7 471.8l12.6 1.2M278.6 471.6l13.4 1.5M324.7 471.3l12.3 1M336.9 471.3l12.5 1.8M384.3 472l13.4 1.5M448.7 472.2l16.4 1.6M465 471.7l9.8 1.1M267.8 476.7l14.7 1.7M284.2 477.6l16.5 0.9M366.4 476.7l16.9 0.9M472.9 477.5l17.3 1.6M261.3 482.1l11 1.8M309.7 482.5l12.7 1.3M337 482.5l15.1 1.1M353.1 482.1l9.6 1.4M391.9 482.7l12.2 1.5M420.1 482.1l15 1.4M266.1 487.8l14.1 1.1M337.4 488.2l11.9 1.7M361.6 487.5l11.5 1M427.1 487.3l12.2 1.2M262.5 493.4l15.5 1.7M322.1 493l17.4 0.9M356.3 493.4l11.3 1.5M369.6 492.7l11.2 1.4M382.4 493.1l11.5 1.9M428.7 492.8l14.1 1.8M458.9 492.7l17.6 1.4M257.5 498.6l17.1 1.8M275.8 498.1l13 1.1M288.4 498.9l10.1 1.1M327.7 498.9l14.2 1.9M358.3 498.1l12 1.7M382.5 498l11.3 1.6M474.6 498.1l15.2 1.7M320.6 504.3l10.8 1.3M392.8 503.8l17 1.2M411.9 503.8l11.4 1.3M426 504.1l11.7 1.6M456.3 503.8l11.3 1.7M253.3 509.5l14.7 1.1M353.5 509.6l13.2 1.9M422.1 509.3l14.6 1.1M455.2 509.2l12.4 1.6M469.2 509.2l11.9 1.7M300.2 514.9l16.9 1.1M319.6 514.5l13 1.9M333.5 515l15.1 1.1M392.8 514.6l12.2 1.3M422.3 514.4l10.7 1.3M451.4 514.8l10.1 1.8M323.3 520l17.8 1.3M370.1 519.7l14.9 1M386.9 519.8l16.9 1M417.8 519.5l15 1.1M449.9 519.9l16.6 1.2M352.7 525l12.7 1.7M381.9 525.3l10 1.8M464.6 524.9l14.4 1.2M277 530.6l13.6 1M323.1 530.5l12.3 1.2M362.7 530.5l13.5 1.6M407.1 531l12.3 1.8M449.3 530.6l11.8 1.7M478.9 530.2l13 1M231.4 536.4l10.6 1.9M283.5 536.2l12.3 1.5M296.7 535.8l15.4 1.2M312 535.7l15.3 1.5M328 536l13.1 1M395.6 536.1l9.9 1.5M436.7 536.3l16.6 1.6M238.6 541.5l14.4 1.9M273 541l16.3 1.8M291.9 541.6l14.2 1.8M322.7 541.2l14.8 1.2M356.2 541.8l16.1 1.3M404.4 541.7l10.2 0.9M415.7 541.8l12.9 1.1M463.9 540.9l17.5 1.6M269.6 546.3l14.2 1.5M286.4 547.1l9.9 1M297.4 547.1l10.4 1.9M307.8 547.1l13 1M402.5 546.6l12.1 1.5M427.2 547.1l17.6 1.5M460.3 546.6l14.1 1.2M256.3 551.6l16.6 1.3M332.2 552.1l14.3 0.9M348.1 551.8l16.6 1.7M385.9 552.2l15 1.1M401.5 552.2l11.2 1.5M429.2 552.2l11.9 1.8M455.4 552.1l12.1 1.7M287.8 557.7l17.9 1.1M344.8 557.7l10.3 1.5M460.5 557.6l17.1 1.6M283.3 563.2l17 1.1M332 562.8l12.6 1M356.7 562.8l16.3 1.4M448.1 562.4l17 0.9M260.2 568l17.6 1.9M352.3 567.6l10.6 1.2M379.4 568.4l13.4 1.8M439.8 567.8l12.3 1.9M239.3 573.3l13.6 1M283 573.5l17.6 1.8M358.2 573.8l17.8 1.6M391.5 573.3l17.9 1.1M448.1 573l17.6 0.9M467.2 573.3l14.8 1.4M290.3 578.3l12.2 1.3M349.6 579l10.8 1.6M361.3 579l10.9 1.4M275 584.2l16.8 1.2M291.5 583.7l10.4 1.8M316.8 584l16.3 1.5M346.7 583.8l12.6 1M373.6 584.2l11.9 1.1M402.1 584l12.2 1M267.8 589.1l9.9 1M279.1 589.6l9.7 1.6M289.3 589.2l15.3 1.7M347.9 589.8l15.8 1.3M327.1 594.4l13.1 1.1M340.6 594.8l9.8 1M351.5 594.6l15.9 1.3M400.7 595.2l9.2 1.2M410 594.8l13.9 1.9M305.9 600.4l17.6 1.5M326.1 600.3l14.4 1.3M351.8 600.3l11.2 1.6M243.8 605.1l12.5 1.7M257.3 605.8l10.5 1.4M323.2 605l15.1 1.8M351 605.7l15.4 1.7M423.2 605.5l12.2 1.2M452.2 605.2l14.8 1.6M468.7 605.3l17.6 1.5M250.9 610.6l11.4 1.3M291.3 611.1l14 1.2M300.1 616.3l10.7 1.1M343.9 615.7l13.2 1.4M359.6 616.4l17.8 1M429.2 616.3l17.6 1.5M447.3 616.6l12.8 1.4M259.2 621.4l15.5 1.8M297.7 621.5l15.6 1.6M457 621.1l10 1M469.4 621.8l11.1 1.5M256.7 626.5l17.9 1.8M306.7 627.2l13 1.7M387.4 626.9l15.9 1.3M418.7 627.2l16.9 1.5M448.3 627.3l15.5 1.3M268.1 632.2l10.7 1.8M350.5 632l14 1.1M434.6 632.5l9.5 1.2M241.7 638l14.1 1.3M301.4 638l16.1 1.7M329.3 637.4l11.9 1.8M408.5 637.2l10.6 1.2M420.9 637.2l10.9 1.1M433.7 637.6l15 1.8M364 643.1l11.1 1.3M388.9 643.2l13.7 1.1M415.9 642.5l15.4 1.2M477.4 643.3l14.6 1.7" stroke="#aea27f" stroke-width="2.3" fill="none" stroke-linecap="round"/>
<path d="M323.7 284.5l9.1 1.2M334.4 284.8l17.9 1.7M366.6 284.4l9.7 1.1M425.7 284.4l12.5 1.6M477.2 284.4l14.3 1.1M231.1 289.4l16.5 1.6M270.2 290.1l10.1 1.9M282 289.8l11.4 1.1M309.3 289.6l11.2 0.9M332 289.9l9.1 1M340.7 289.9l15.6 1.6M372.5 290.3l14.2 1.5M406.1 289.8l13.1 1.4M301.4 295.6l15.9 1.2M319.2 295.5l10.2 1.5M329.4 295l15.6 1.2M374.1 295.7l13.8 1.1M241.2 300.8l16.9 0.9M270.3 300.7l14.2 1.1M315.8 300.9l10.9 1.3M329.6 300.6l9.1 1.1M340.8 300.2l12.4 1.4M353.8 300.1l12.8 1.5M367.8 300.9l14.3 1.7M433.1 300.9l9.6 1M473.2 300.8l16 1M244.3 305.6l13.3 1M298.3 305.5l12.3 1.3M322.2 305.9l17.5 1.9M442.6 305.6l11 1.6M454.1 305.7l14.2 1.3M468.7 305.7l13.9 1.7M243.9 310.9l14.8 1.7M259.5 311l12.9 1.7M298.5 311.2l13 1.3M346.8 311.1l12.3 1.7M361.8 311.7l13.7 1M462.8 311.5l11.4 1.6M340.7 316.2l17.1 1.3M359.5 316.3l16.2 1.2M388.2 316.4l9.1 1M411.2 316.8l15.1 1.2M440.8 317l10.5 1.1M234.9 322.4l12.6 1.1M294.4 321.7l14.7 1.9M309.8 322l11.7 1.2M342.8 321.7l15.7 1.8M413 321.8l9.2 1.1M425.1 322l15.5 1.7M260.8 327.1l16.4 1.2M292.9 327.3l12.3 1.4M337.8 327.6l10.5 1.2M350.5 327.5l12.6 1.1M364.2 327l14.4 1.8M380.2 327.7l10 1.1M448 327.3l13.4 1.7M275.6 333l15.8 1.2M292.7 332.5l17.6 1.9M330.8 332.2l10.2 1.7M355.7 332.8l10 1.1M367.8 332.9l14.9 1.6M428.8 332.7l13.5 1.5M441.7 332.6l13.4 1.4M457.2 332.6l12.5 1.7M240.4 337.6l12.6 0.9M285 338.4l11.5 1.3M297.9 337.6l13 1.5M341.2 338.1l16 1.4M358.2 338l11.7 1.7M371 338.3l15 1.6M412.1 338.5l15.6 1.6M428.9 338.3l11.5 1.1M450.9 338l11.7 1.7M315.3 343.5l10.6 1.8M327.2 343.7l12.5 1.8M358.1 343.5l17.1 1.6M428.4 343.1l14.8 1.4M443.1 343.7l17.4 1M262.9 348.6l15.4 1.6M291.8 348.7l13 1.3M337.3 348.4l12.3 1.8M416.3 349l14 1.7M470 348.4l17.6 1.6M249.9 353.9l17.3 1.2M269.4 354.5l15.9 1.2M287.5 354.3l16.5 1.1M357.6 354l17.3 1.6M376.2 354.5l9.6 1.5M388 353.7l11.3 1.5M417.9 354l12.2 1M432.9 353.7l14.1 1.1M476.7 354.4l10.8 1.7M281.5 359.4l16.9 1.6M331.6 359.6l13.2 1.6M440.1 359.6l11.7 1M261 365.1l15.9 1.7M319.4 365.1l10.5 1.7M350.5 364.3l17 1.8M369.9 364.3l17.3 1.5M446.9 364.3l12.7 1.2M253.2 370.1l13.9 1.8M268.6 370.2l13.1 1.3M322.5 370.4l17.9 1.5M273.2 375.9l15.9 1.6M324.6 375.6l10.1 1.7M381.3 375l12.7 1.6M396 375.2l10.6 1M407 375.6l17.5 1.6M437.2 375.2l11.8 1.3M449.4 375.7l10.7 1.7M233.5 381.2l10.6 1.5M245.1 380.3l13.7 1.4M259.7 380.9l12.1 1.9M292.2 380.4l13.8 1.4M362 380.5l9.5 1.8M372.5 381l10.1 1.4M403.7 380.6l9.3 1.7M307.1 385.8l13.2 1.6M346 385.9l15 1.9M406.3 386.4l9.4 1.3M415.8 385.8l17.2 1.2M471 385.8l11.5 1.8M267.6 391.7l12.4 1.7M416.1 391.6l16.8 0.9M447.7 391.9l10.5 1.3M232.2 396.6l14.6 1.1M260.4 396.6l9.4 1.8M272.2 397.1l16.8 1.6M291.8 397.1l16 1.7M359.3 396.9l16.3 1M434.1 397.3l10.7 1.2M252.1 402.4l11.9 1.8M265.2 401.9l13.5 1.7M292.8 402.6l11.5 1.1M327.3 402.5l12.3 1.5M357.6 401.9l9.9 1.1M383.8 402.6l14.8 1.3M242.3 407.6l11.6 1.6M283.9 407.9l10.6 1.3M296 408l14 1M310.8 407.2l14.2 1.5M401.2 407.1l10.8 1.4M438.2 407.4l9.8 1.9M246.3 412.7l16.9 1.3M279.6 413.2l15.8 1.6M307.5 412.7l10.8 1.2M348 412.7l10.1 1.6M370.6 413.3l11.3 1.6M253.4 418.5l11.6 1.9M315.2 417.8l11.6 1.2M386.3 418.7l11.8 1.5M411.6 418.2l17 1.5M232.4 423.5l14.9 1.7M261.8 423.7l10 1.3M416.3 424l16.7 1.3M356.7 428.9l15.1 1.9M477.8 429.4l11.8 1M341.6 433.9l13.6 1.7M428.8 433.8l11.9 1.1M442.7 434.7l14 1.7M476.7 434l12.6 1.6M241.4 439.3l13.6 1.6M280 440l12.3 1M302.8 439.4l9.7 1.3M315.2 440l14.8 1.5M415 439.9l15.7 1M448.5 439.5l14.2 1.7M268.2 445l12 1.4M282 444.6l11.5 1.1M310.3 444.6l13.1 1.4M340.6 445.1l10.1 1.1M393.8 445.4l12.2 1.6M258.4 450.4l11.4 1.7M282.6 450.5l13.3 1.3M298.9 450.2l16.6 1.3M394.2 450.7l15.3 1.4M426.9 450.1l15.9 0.9M464.1 450.6l15.1 0.9M235.5 455.3l18 1.6M255.8 455.3l17.5 1.8M311.9 456.1l16.5 1.8M344.4 455.7l14.8 1.7M361.4 455.9l14.9 1.1M399.5 455.5l15.8 1.4M475.1 455.4l12.7 0.9M239.4 460.8l10.7 1.5M285 461.3l13.5 1.7M298 461.5l13.6 1.3M312.3 461.4l12.8 1.2M336.3 461.5l17.2 1.3M383.7 461l10.5 1.1M415.1 461.2l13 1.8M251.6 466.7l15.8 1.5M267.2 466.7l16.1 1.5M296.3 466l15 1.2M383.4 466.3l11.8 1.4M410.4 466.4l15.8 1.1M293.8 471.9l10.5 1.2M306.3 472.1l17.7 1.4M366.6 472.1l16.1 1.8M398.1 471.3l11.2 1.4M410.4 472.1l17.4 1.8M240.3 476.7l9.1 1.1M251.6 476.7l14.2 1.8M319.5 477.3l17.1 0.9M338.9 477.6l9.1 1.4M349.1 476.6l17.4 1.8M384.4 477.3l13.9 1.5M398.1 476.7l9 0.9M406.5 477.5l13.2 1.9M430.9 476.6l12.5 1.3M445.2 476.8l10.7 1.1M456.7 476.7l15.7 1.3M236.5 482.6l12.7 1.6M365 482.8l13.3 1.6M406.4 482.7l11.1 1.3M438.2 482.4l16.2 1M457.6 482.9l13.7 1.3M312.2 488.3l9.8 1.3M352.3 487.6l10 1.6M386.6 487.4l11 1.5M458 488.1l10.6 1.3M239 493.6l10.3 1.1M251 493.4l9.9 1.9M293.9 493.3l13.1 1.7M443.5 492.7l14.9 1.4M232.6 498.4l12.5 1.5M298.8 498.5l16.5 1M344.1 498.1l13.7 1.2M442.4 498.1l17.3 1.3M247.8 504.1l16.4 1.5M304.5 503.8l14 1.9M378.9 503.9l11.6 1.1M439.9 503.9l15.8 1.3M468.4 504.2l9.5 1.1M310.7 508.9l10.1 1.7M382.8 509.4l11.1 1M409.9 509.4l12.7 1.4M244.9 514.5l10.2 1.6M273.5 514.5l16.5 1.3M289.8 514.5l9.5 1.5M364.3 514.3l10.2 1.2M374.6 514.1l17 1.4M406.5 514.6l14.7 1.8M237.9 520.1l15.9 1.5M255.7 520l15.9 1.5M286.4 520.2l13.3 1.7M299.6 519.9l10.8 1.9M312 519.7l9.1 1.2M343.3 519.6l9.4 1.8M435.7 520.1l13.2 1.3M465.9 519.9l16.5 1.6M272.3 525l15 1.3M286.8 525.3l15.8 1.2M304 525l16.6 1M320.6 525.2l14.3 1.4M335.1 525.6l16.9 1.1M406.1 525.5l11.4 1.8M418.2 525.7l13.8 1.5M445.8 524.9l17.6 1.9M232.8 530.7l12.4 1.4M246.2 530.4l17.9 1.7M266.2 531l9.1 1.6M336.1 530.3l10 1M378 530.1l13.1 1.7M422.6 531.1l10.9 1.7M463.1 530.3l14.7 1.5M242.1 536.1l13 1.8M355.7 535.6l12.9 1M407.4 535.7l16.7 1.6M426.4 536.1l9.3 1.1M455.4 535.9l17.6 1.6M253.2 541.6l17.7 1.7M389 541.1l13.4 1.4M438.5 541.7l11 1M449.2 541.5l14.5 1.2M250.3 547l16.4 0.9M322.6 546.6l17 1.7M341.7 547l14.7 1.2M358.9 546.3l10.8 1.2M446.1 547.1l12.2 1.6M475.5 547.1l17.1 1.4M366 551.6l17.5 1.1M263.5 557.4l12.5 0.9M276.8 557.7l10.1 1.9M306.8 556.9l17.8 1.2M387.2 557.5l15.2 1.7M418.3 557.2l11.9 1.5M430.2 557.8l11.1 1.5M442.8 557.5l17.3 1.8M246.7 562.5l17.1 1.3M264.9 562.7l16.4 1.2M301.1 562.9l11.2 1M344.8 562.6l10.2 1.4M373.5 562.6l9.4 1.4M384 562.7l11.5 1.9M410.4 562.7l11.5 1M423.3 563l12.3 0.9M278 568.3l12.5 1.4M308.8 568.5l10.6 0.9M394.8 567.8l11.6 1.8M405.5 567.6l17.5 1M423.9 567.7l15.1 1.3M463.8 567.8l13.1 1.5M477.9 568.3l12.5 1.7M254.8 573.2l14.7 1.2M314.5 572.9l10.3 1.1M326.3 572.9l14.4 1.1M376.8 573l13.2 1.5M412.4 573.5l9.9 1.2M424.4 573.2l11.8 1.9M437.7 573.7l9.3 1.8M236 578.6l13.3 1.4M249.5 578.3l10.2 1.1M260.9 579l16.3 1.8M304.3 579l14.1 0.9M336 578.3l13 1.6M372.9 578.9l15.7 1.9M438.7 579l9.5 1.5M449.2 578.9l13 1.1M463.1 578.5l17.1 1.3M244.5 584.4l15.4 1.5M305.1 583.9l10.2 1.5M335 583.9l10.9 1.1M386 584.5l13.6 1.6M430.5 584l13.5 1.6M242 589.7l15.5 1.8M320.5 589.4l13.6 1.1M413.2 589.3l17.6 1.5M445.4 589.5l12.8 1.2M458.1 589.7l15.6 1.3M242.7 595.2l13.5 1M256.5 594.4l14.4 1.1M272.4 594.6l16.7 1M298.7 595.2l10.6 1.3M310.3 594.8l16.3 1.3M424.2 595.1l15.7 1.4M441.4 594.6l14.7 1.7M458.6 595.3l10.8 1.3M471.7 594.6l15.7 1.6M246.5 600.2l16.7 1.7M278.7 600.1l11.9 1.5M341.1 600l10.3 1M366.2 600.2l9.7 1.2M408.3 599.9l16.2 1.7M458.3 600.5l13.3 1.8M472.1 600.4l11.5 1.7M283.4 606l11.2 1.6M295.5 605.7l14.4 1.7M309.8 605.1l11.2 1.9M339.1 605l9 1.4M368.5 605.7l17.8 1.5M239.8 610.7l9.5 1.5M280.4 610.6l10.8 0.9M346.4 611.2l13.3 1.4M433.3 611.2l17.1 1.3M243.1 616.5l13.2 1.8M258.7 616.7l12.2 0.9M272.9 616.1l9.9 1M311.3 616.1l12.6 1.8M323.7 616.5l17.7 1.3M379 616.4l17.3 1.2M397.5 616.3l15.4 1.5M244.9 621.9l12.1 1.4M276.4 621.7l9.5 1.9M315.8 622l9.3 1.6M356.3 621.2l10.9 1.9M368.5 621.6l12 1M401 621.3l14.1 1M321.7 626.9l14.3 1.7M375.4 627l10.8 1M251.5 632.5l16.7 1.6M280.9 631.9l17.5 1.3M300.2 632.6l17.6 1.8M375.8 632.2l10.5 1.2M408.9 632.3l9.4 1.8M419.1 632.4l12.9 0.9M446.3 632.2l14.7 1.2M462.9 632.4l17.2 1.8M266.8 638.1l16.8 1.5M362.1 637.6l11.9 0.9M376.2 637.9l15.3 1.3M392.2 637.9l16.7 1.7M448.6 637.7l13.4 1.1M239.8 642.9l11.2 0.9M267.6 643.3l13.8 1M282.1 642.7l14 1.7M329.6 643l17.3 1.5M462.4 642.7l12.4 1.4" stroke="#a49876" stroke-width="2.3" fill="none" stroke-linecap="round"/>
<path d="M252.2 284.5l15.5 1.8M270.7 284.9l15.6 1.8M313.1 284.4l10.9 1.2M353.8 284.1l11.9 1.2M377.8 284.6l16.5 1.8M396.4 284.3l12.6 1.2M247.3 289.7l11.4 1.1M294.1 290.1l13.6 1.4M322 290l9.8 1.6M387.5 289.4l16.5 1M433.9 289.7l16.2 1.3M465.1 289.7l16.6 1M363.9 294.8l10.5 1.5M390.2 294.9l9.9 1.2M418.1 294.8l16 1.1M454.8 294.9l14.7 1.7M258.9 300.2l10.9 1.5M299.9 300.4l15.5 1.2M417.3 300.3l14.9 1M444.6 300.7l15.7 1.4M231.2 306l10.2 1.6M283.3 305.4l13.1 1.5M309.9 306.2l10.5 1.4M341.4 305.9l12.4 1M354.2 306.4l17 1.1M401.3 305.7l11.3 1M429.3 305.5l13.4 1M376.5 311.6l9.6 1.3M400.8 311l13.8 0.9M451.5 311.7l10.2 1.3M246.2 316.8l9.7 1.4M257.6 316.1l17.9 1.7M277 316.5l17.2 1M294.6 316.8l11.3 1.9M309.1 316.6l15.4 1.5M327.3 316.8l10.6 1.2M377.4 316.9l10.6 1M453.2 316.9l16.8 1.9M471.7 316.2l10.2 1.1M323.4 321.6l17.3 1.9M378.1 321.9l17 1.2M443.5 321.7l14.4 1.3M460.6 321.8l10.7 1.1M474 321.6l9.8 1.5M246.4 327.2l14.3 1.4M277.5 327.1l12.9 1.2M307.2 327.1l17.5 1.3M325.5 326.8l9.8 1.9M392.5 327.4l15.9 1M435.4 327.4l10.9 1.3M461 327.5l15.6 0.9M240 332.9l16.9 1.7M259.2 332.8l15.1 0.9M311.2 332.2l17.5 1.7M340.9 332.3l13.9 1.1M384.2 332.7l10.1 1.5M396 333l16.7 1.3M254.6 337.6l17 1.6M273.2 337.7l9.3 1.6M385.9 338.1l13.5 1.2M242.6 343.8l13.9 1.6M258.4 343.6l10.3 1.3M282.7 343.6l14.1 1.4M341.6 342.9l15.3 1.7M409.7 343.3l17.5 1M461.8 343.7l14.7 1.1M477.5 343.3l13.3 1.2M244.9 348.8l17.6 1.2M352 349.1l11.1 1.2M365.1 348.6l17.3 1.4M397.5 348.8l16.9 1.9M432.2 348.7l11.9 1.5M457.8 349.1l12.4 1.3M232.4 353.6l15 1.8M467.2 353.8l9.7 1.8M256 358.9l14.5 1.3M315.8 359.7l13.8 1.3M364.2 359.2l13.5 1.6M395.5 359.2l11.1 1.4M407.5 359.3l13.2 1.3M452.2 359.1l10.6 1M466.1 359.4l15.9 1.7M245.9 365.1l12.9 1.5M278.7 364.9l15.8 1.1M387.7 364.5l9.7 1.9M416.8 364.5l17.1 1M477.5 364.7l9.5 1.4M241.5 370.1l10.2 1.1M296.4 369.6l13.5 1M310.7 370.1l11.2 1.4M353.1 370.4l12.2 1.2M433.4 370.4l11.9 1.8M233.5 375.6l17.3 1M253.4 375.4l17.8 1.6M290.2 375.8l13 1.4M335.8 375.5l10.3 1.4M364.1 375l18 1.7M460.7 375.8l9.8 0.9M274.1 380.6l16.6 1.5M350.5 381.2l9.5 1.4M384.7 380.4l18 1.6M414.2 381.3l10.2 0.9M424.3 380.3l12.4 1.1M436.7 380.3l16 1.3M278.4 385.9l15.9 1.3M320.5 386.1l9.4 1.8M362.9 386.5l9.1 1M390.3 386.2l16.1 1.8M434.7 386.1l16.5 1.1M452.7 386.1l17.1 1.9M252.7 391l14.7 1.8M280.5 391.6l11.3 0.9M293.3 391.2l12.3 1.1M307.1 391.7l15 1.1M341 391.6l17.2 1.3M380.8 391.9l16.1 1.1M398.3 391.5l17.3 1.2M477.4 391.9l16.5 1.5M249.3 396.8l9.7 1.3M308.3 396.4l12.7 1.1M377.7 396.5l16 1.3M404.7 396.7l11.4 1.3M417.8 396.9l16.3 1.4M461.9 396.9l14.3 1.5M306.6 402.6l10 1.7M318.7 402.1l9.3 1.8M340.2 402.2l15.8 1.2M369.7 402.4l14.6 1.1M420.6 402.3l15.7 1.1M452 402.5l11.8 1.4M464.9 401.9l14.7 1.3M267.7 407.6l14.2 1.8M344.4 407.5l11.6 1.6M425 407.6l11.8 1.7M265.7 412.5l12.1 1.1M295.7 412.6l11.2 1.2M319.4 413l12.4 1.5M382.3 412.9l13 1.5M412.1 413.2l13.5 1.6M427.5 413.2l12.3 1M441.2 412.8l15.3 1.6M456.9 412.8l14.1 1.3M472.3 413.4l16.9 1.6M267.4 418.5l16.6 1.8M343.8 418.5l11.9 1.4M372.3 417.9l11.9 1.3M449.9 418.3l11.7 1.8M247.2 423.9l14.6 1.6M273.9 423.9l12.1 1.2M317.3 423.7l16.3 1.5M349.8 423.5l17.2 1.2M368.1 423.4l17.8 1.6M386 423.9l17.8 1.2M433.7 424l10.3 1.2M444.8 423.2l10.2 1M244.1 429.2l15.5 1.4M259.7 428.6l13 1.4M273.5 428.7l11.1 1.6M392 428.8l16.1 1M459.2 429.2l16.7 1.6M259.6 434.2l10.6 1.2M272.9 434.3l13.7 1.6M325.4 434.6l15.5 1.4M355 434.3l15 1.6M268.7 439.8l10.3 1.6M332.1 439.4l14.6 1.4M347 440l16.4 1.5M365.1 439.7l12.5 0.9M378.3 439.4l12.8 1M391.5 439.3l12.5 1M238.6 444.9l14.2 1.2M255.6 445.2l12 1.5M294.7 445.3l15 1.4M324.2 444.8l15.5 1.4M364.6 444.9l17.8 1.4M421.2 445.3l12.1 0.9M433.6 444.6l17.9 0.9M453.6 444.7l14.2 1.1M317.5 449.9l15.8 1.2M365.8 450.2l13.6 1.3M412.6 450.6l14.1 1.5M273.8 456.2l13 1.8M300.9 456l10.1 1M377.4 456.1l9.9 1.1M458.1 455.6l16.2 1.8M250.5 461.3l15.2 1.3M266.6 460.9l17.9 1.5M353.9 461.3l14.4 1.5M370.5 461.1l11.8 1.3M463.6 461.5l12.4 1.9M476.8 460.9l13.7 1.3M324.4 466.3l14.4 1.2M338.6 466.3l9.8 1.8M368 466.4l13.8 1.3M396.6 466.5l13.2 1.5M426.7 466.7l16.1 1.1M445.1 466.8l17.5 1.5M463.2 466l14.6 1.9M238.8 471.7l12.1 1.2M251.6 471.5l11.5 1.6M352.3 471.5l13.2 1.8M430.3 472l15.5 1M476.6 471.3l13.5 1M301 476.9l17.7 1.8M420.4 477.6l9.5 1.2M250.1 482.4l10.4 1.3M272.9 482l18 1.4M293.2 482.7l14.8 1.4M324.7 482.1l9.3 1.5M378.4 482.4l12.3 1.7M472.4 482l12.2 1.3M232.8 488.1l9.5 1.1M243.2 487.4l9.5 1.8M254.4 487.6l11.3 1.8M282.5 487.7l12.4 1.4M294.1 487.8l17.9 1M322.9 487.9l12.8 1.2M374.7 487.7l12.6 1.1M397.7 488l14.6 1.4M414 487.4l12.6 1.9M441.8 487.8l15.2 1.3M469.5 488.1l9.3 1M478.7 487.7l13.1 1.6M277.6 493.2l14.3 1.3M308.3 493l12.7 1.6M342 493l12.4 1M396.2 492.7l12.3 1.5M408 493.4l17.6 1.6M478.5 493.5l11 1.4M245.5 498.1l10 1M315.7 498.3l11.6 1.4M371 498.9l9.9 1.4M394.9 498.8l12.8 1.1M408.9 498.5l16.8 1M427.8 498.6l11.9 1.2M460.7 498.9l12.2 1.7M233.9 504.2l12.7 1.4M264.2 503.9l13.3 1.6M278.8 504l9.4 1.3M290.6 503.7l14.2 1.7M332.7 504.2l14.9 1.9M350.1 504l16.9 1.8M369.2 503.7l9.7 1.4M477.3 503.5l16 1.4M236.1 509.2l16.2 1M270.1 509.1l13.7 1.6M284.3 509.2l14.9 1.1M298.9 509.5l10.8 1.4M322.5 509.6l14.2 1.1M337.8 508.8l14 1.3M368.6 509.1l13.7 1.1M393.3 509.1l15.3 1.4M439.3 509.5l15.4 1.6M257.1 515l15.8 1.4M351.2 514.1l12.1 1.9M433.1 514.4l17.7 1.5M464.7 514.2l17.7 1.2M272.6 519.7l11.1 1.8M355 519.7l13.6 1.7M405.2 520.4l11.4 1.8M243.3 525.2l14.6 1.3M259.2 525.7l12 1.2M367.2 524.9l15.1 1M392.3 524.9l12.1 1.8M432.7 525.5l11 1.1M292.8 530.7l17 0.9M312.2 531.1l10.9 0.9M347.4 530.4l14.4 1M393.9 530.7l10.4 1.3M433.6 530.9l13.8 1.8M257.9 536.1l10.1 1.5M269.8 536.1l14.1 1.5M341.9 535.5l13.8 1.1M369.8 535.5l12.6 1.5M384.9 535.9l9.8 1.9M474.3 536.4l11.1 1.8M305.8 541l14.6 1.1M339.5 541.7l14.8 1.3M374 541.6l14.3 1.8M429.9 541.4l9.3 1.1M237.1 547.1l11.6 1.4M370.8 546.5l11.6 1.4M384.6 546.4l17.8 1.8M414.4 546.5l12.2 1.7M240.1 551.9l15.7 1.1M272.4 552.5l14.1 0.9M288.2 551.9l9.9 1.5M299.4 552.5l11.4 1.1M312 552.4l17.6 1.7M415.9 551.7l12.9 1M442.5 551.6l12 0.9M468.8 552l12.8 1.5M231.7 557.8l17.5 1.4M249.7 557.1l13.1 1.3M324.8 557.6l17.1 1.4M356 557.2l11 1.2M369.4 557.5l17.4 1.9M403.7 557.5l14.6 1.2M235.8 562.8l9.8 1.8M315.3 562.5l14.6 1.3M396.9 562.9l13.5 1.4M436.7 562.4l10.1 1M467.5 563l12.8 1.3M232.9 567.7l12.4 1.6M247.8 567.7l10.4 1.1M290.8 568.4l17.6 1.9M319.7 567.6l17.9 1.3M339.7 567.9l11.4 1.3M363.3 568.2l15.7 1.9M451.6 568.4l11.8 1.4M271.3 573.5l9.7 1.7M302.3 573.7l9.8 1.4M342.2 572.9l15.1 1.3M278 579l11.2 1.2M318.4 578.8l15.6 1.5M388.3 579.1l9.5 1.8M399.6 578.8l17.4 1.7M420.3 578.7l17.6 1.5M261.4 583.8l12.6 1.3M359.2 583.7l14 1.9M413.5 584l15.8 1M443.8 583.9l16.6 1.3M462 584.2l16.9 1.1M258.6 589.6l9 1M303.9 589.5l15.3 1.8M335.8 589.3l11.9 1.8M364.5 589.1l13 1.3M380.3 589.1l15.8 1.5M397.3 589.9l14.2 1.8M433.6 589.5l10.3 1.2M476.7 589.6l12.6 1.6M289 595.3l9.2 1.5M366.6 594.7l16.4 1.1M384.2 595l13.7 1.6M232.6 600.3l12.1 1.4M264.4 599.8l13.3 1.2M290.1 599.9l13.1 1.1M378.4 600.1l13.2 1M393.5 600l13.4 1.2M424.5 600.4l9.5 1.5M433.9 600.5l14.4 1.3M448.9 600.6l9.1 1.8M270.4 605.9l11.6 1.3M388 605.7l14.4 1.9M404.6 605.6l16.1 0.9M437.6 605.7l12.3 1.7M262.5 610.5l15.8 1.1M306.9 610.8l11.8 1.5M319.9 611.1l12.5 1.9M333.3 611.2l12 1.2M362 611.1l15.9 1.6M378.6 610.9l10.5 1.7M391.3 610.4l15 1.3M406.4 610.6l10.6 1.3M417.1 610.7l15.3 1.7M450.9 611.2l17.6 1.8M471 610.4l10.8 1.2M283 616.6l17 1.1M414.8 616.7l13.1 1.8M463.5 616.2l10.7 1.6M474.6 616l10 1.2M286.1 621.3l11.7 1.7M325.2 622l13.4 1.8M340.6 621.3l13.5 1.8M383.3 621.8l17.2 1.6M415.8 621.7l10.4 1.7M428.7 621.6l13.2 1.3M442.4 621.7l14.3 1.4M238.3 626.7l16.1 1.5M276.2 627.2l15.2 1.6M292.4 627.2l12.3 1.3M338.9 627.3l11.3 1.4M351.3 627.4l13.4 1.6M364.9 626.5l9.6 1.7M402.8 627.2l14.4 1.3M436.3 627.3l12.1 1.5M463.6 627.2l16.3 1.7M234.7 632.1l17 1.9M319 631.8l13.7 1.2M334 632.3l15.6 1.2M365.1 632l9.6 1.8M389.5 632.5l17.5 1.8M256.3 637.3l9.1 1.5M284.4 637.1l16.3 1.3M317.7 637.3l11.3 1.8M343.4 638l17.8 1.8M463.8 637.7l15.5 1.2M253.2 643.1l14.7 1.5M297.4 643l10.4 1.1M310.6 643.3l16.3 1.4M349 642.6l14.9 1.6M376.5 643.2l11.2 1.3M403.8 642.9l10.8 1.6M433.1 642.6l14.3 1.3M448.3 642.5l11.7 1.8" stroke="#b5a985" stroke-width="2.3" fill="none" stroke-linecap="round"/>
<path d="M236.2 283.8l14.5 0.9M253.2 283.6l13.5 1.8M271.7 284l13.6 1.8M288.4 283.8l8 1.7M299.4 283.2l10.1 1.7M324.7 283.6l7.1 1.2M397.4 283.4l10.6 1.2M426.7 283.5l10.5 1.6M467.3 283.4l8.3 1.4M271.2 289.2l8.1 1.9M341.7 289l13.6 1.6M407.1 288.9l11.1 1.4M422.3 289.3l10.4 1M330.4 294.1l13.6 1.2M419.1 293.9l14 1.1M437.5 294.8l15.3 1M271.3 299.8l12.2 1.1M445.6 299.8l13.7 1.4M463.5 299.6l7.2 1.4M474.2 299.9l14 1M269.2 304.7l12.5 1.7M299.3 304.6l10.3 1.3M430.3 304.6l11.4 1M260.5 310.1l10.9 1.7M327.9 310.1l15.5 1.5M362.8 310.8l11.7 1M452.5 310.8l8.2 1.3M232.4 315.7l11.1 1.7M278 315.6l15.2 1M328.3 315.9l8.6 1.2M360.5 315.4l14.2 1.2M441.8 316.1l8.5 1.1M343.8 320.8l13.7 1.8M444.5 320.8l12.4 1.3M278.5 326.2l10.9 1.2M365.2 326.1l12.4 1.8M381.2 326.8l8 1.1M393.5 326.5l13.9 1M436.4 326.5l8.9 1.3M312.2 331.3l15.5 1.7M368.8 332l12.9 1.6M397 332.1l14.7 1.3M470.5 332.1l14.8 1.7M255.6 336.7l15 1.6M274.2 336.8l7.3 1.6M325.7 337.1l11.9 1.6M441.9 337.3l8.1 1.9M316.3 342.6l8.6 1.8M359.1 342.6l15.1 1.6M429.4 342.2l12.8 1.4M444.1 342.8l15.4 1M478.5 342.4l11.3 1.2M417.3 348.1l12 1.7M233.4 352.7l13 1.8M340.4 352.7l14.5 1.7M358.6 353.1l15.3 1.6M433.9 352.8l12.1 1.1M477.7 353.5l8.8 1.7M240.3 358.1l12.3 1.3M299.9 358.4l13.1 1.1M332.6 358.7l11.2 1.6M447.9 363.4l10.7 1.2M460 363.9l15.5 1.8M478.5 363.8l7.5 1.4M242.5 369.2l8.2 1.1M254.2 369.2l11.9 1.8M354.1 369.5l10.2 1.2M383.8 369.5l15.2 1.2M402.3 368.9l14.6 1.3M448.2 369.3l9.9 1.8M274.2 375l13.9 1.6M461.7 374.9l7.8 0.9M471.4 375l10.5 1M334.5 380.3l12.8 1.9M373.5 380.1l8.1 1.4M456.3 380.1l15.6 1.7M240.9 384.9l16 1.8M260.5 384.9l15.1 1.5M295.6 385l10.6 1.2M268.6 390.8l10.4 1.7M308.1 390.8l13 1.1M417.1 390.7l14.8 0.9M448.7 391l8.5 1.3M460 390.9l15 0.9M341.8 396l15.4 1.6M360.3 396l14.3 1M395.5 395.5l8.6 1.4M462.9 396l12.3 1.5M242 401.4l7.9 1.2M253.1 401.5l9.9 1.8M279 401.7l11.1 1.4M293.8 401.7l9.5 1.1M319.7 401.2l7.3 1.8M358.6 401l7.9 1.1M437.1 401.6l13.5 1M268.7 406.7l12.2 1.8M284.9 407l8.6 1.3M345.4 406.6l9.6 1.6M412.8 406.3l11.8 1M426 406.7l9.8 1.7M439.2 406.5l7.8 1.9M308.5 411.8l8.8 1.2M371.6 412.4l9.3 1.6M383.3 412l11 1.5M268.4 417.6l14.6 1.8M344.8 417.6l9.9 1.4M450.9 417.4l9.7 1.8M233.4 422.6l12.9 1.7M434.7 423.1l8.3 1.2M357.7 428l13.1 1.9M393 427.9l14.1 1M411.6 428.4l15.9 1.5M460.2 428.3l14.7 1.6M260.6 433.3l8.6 1.2M387.3 433.6l9.9 1.4M429.8 432.9l9.9 1.1M269.7 438.9l8.3 1.6M303.8 438.5l7.7 1.3M392.5 438.4l10.5 1M466.2 438.3l14.1 1.5M311.3 443.7l11.1 1.4M325.2 443.9l13.5 1.4M365.6 444l15.8 1.4M383.3 444.2l10 1.5M434.6 443.7l15.9 0.9M470.8 444.3l14.7 1.5M259.4 449.5l9.4 1.7M299.9 449.3l14.6 1.3M318.5 449l13.8 1.2M395.2 449.8l13.3 1.4M453.2 449.9l8.9 1.2M289.8 454.4l8.4 1.3M301.9 455.1l8.1 1M330.8 454.5l13.1 1.1M378.4 455.2l7.9 1.1M432.2 455.3l9.4 1.6M459.1 454.7l14.2 1.8M240.4 459.9l8.7 1.5M326 460.5l8.1 1.6M371.5 460.2l9.8 1.3M384.7 460.1l8.5 1.1M429.9 460.2l15.7 1.8M464.6 460.6l10.4 1.9M252.6 465.8l13.8 1.5M325.4 465.4l12.4 1.2M350.2 465.3l14.8 1.2M479.6 465.9l10.2 1.5M239.8 470.8l10.1 1.2M252.6 470.6l9.5 1.6M279.6 470.7l11.4 1.5M294.8 471l8.5 1.2M367.6 471.2l14.1 1.8M477.6 470.4l11.5 1M252.6 475.8l12.2 1.8M268.8 475.8l12.7 1.7M339.9 476.7l7.1 1.4M350.1 475.7l15.4 1.8M446.2 475.9l8.7 1.1M473.9 476.6l15.3 1.6M366 481.9l11.3 1.6M421.1 481.2l13 1.4M439.2 481.5l14.2 1M255.4 486.7l9.3 1.8M267.1 486.9l12.1 1.1M362.6 486.6l9.5 1M387.6 486.5l9 1.5M383.4 492.2l9.5 1.9M409 492.5l15.6 1.6M258.5 497.7l15.1 1.8M276.8 497.2l11 1.1M289.4 498l8.1 1.1M328.7 498l12.2 1.9M372 498l7.9 1.4M383.5 497.1l9.3 1.6M428.8 497.7l9.9 1.2M248.8 503.2l14.4 1.5M379.9 503l9.6 1.1M393.8 502.9l15 1.2M457.3 502.9l9.3 1.7M478.3 502.6l14 1.4M338.8 507.9l12 1.3M394.3 508.2l13.3 1.4M410.9 508.5l10.7 1.4M423.1 508.4l12.6 1.1M245.9 513.6l8.2 1.6M334.5 514.1l13.1 1.1M434.1 513.5l15.7 1.5M452.4 513.9l8.1 1.8M273.6 518.8l9.1 1.8M324.3 519.1l15.8 1.3M344.3 518.7l7.4 1.8M371.1 518.8l12.9 1M450.9 519l14.6 1.2M466.9 519l14.5 1.6M287.8 524.4l13.8 1.2M368.2 524l13.1 1M407.1 524.6l9.4 1.8M465.6 524l12.4 1.2M247.2 529.5l15.9 1.7M278 529.7l11.6 1M379 529.2l11.1 1.7M434.6 530l11.8 1.8M450.3 529.7l9.8 1.7M232.4 535.5l8.6 1.9M258.9 535.2l8.1 1.5M270.8 535.2l12.1 1.5M297.7 534.9l13.4 1.2M329 535.1l11.1 1M370.8 534.6l10.6 1.5M437.7 535.4l14.6 1.6M239.6 540.6l12.4 1.9M254.2 540.7l15.7 1.7M340.5 540.8l12.8 1.3M357.2 540.9l14.1 1.3M416.7 540.9l10.9 1.1M430.9 540.5l7.3 1.1M439.5 540.8l9 1M464.9 540l15.5 1.6M323.6 545.7l15 1.7M385.6 545.5l15.8 1.8M257.3 550.7l14.6 1.3M313 551.5l15.6 1.7M349.1 550.9l14.6 1.7M386.9 551.3l13 1.1M430.2 551.3l9.9 1.8M443.5 550.7l10 0.9M456.4 551.2l10.1 1.7M250.7 556.2l11.1 1.3M277.8 556.8l8.1 1.9M325.8 556.7l15.1 1.4M357 556.3l9 1.2M370.4 556.6l15.4 1.9M388.2 556.6l13.2 1.7M236.8 561.9l7.8 1.8M374.5 561.7l7.4 1.4M397.9 562l11.5 1.4M411.4 561.8l9.5 1M437.7 561.5l8.1 1M364.3 567.3l13.7 1.9M380.4 567.5l11.4 1.8M424.9 566.8l13.1 1.3M464.8 566.9l11.1 1.5M284 572.6l15.6 1.8M303.3 572.8l7.8 1.4M377.8 572.1l11.2 1.5M413.4 572.6l7.9 1.2M468.2 572.4l12.8 1.4M237 577.7l11.3 1.4M279 578.1l9.2 1.2M362.3 578.1l8.9 1.4M245.5 583.5l13.4 1.5M276 583.3l14.8 1.2M292.5 582.8l8.4 1.8M336 583l8.9 1.1M347.7 582.9l10.6 1M321.5 588.5l11.6 1.1M273.4 593.7l14.7 1M299.7 594.3l8.6 1.3M311.3 593.9l14.3 1.3M328.1 593.5l11.1 1.1M341.6 593.9l7.8 1M367.6 593.8l14.4 1.1M425.2 594.2l13.7 1.4M472.7 593.7l13.7 1.6M367.2 599.3l7.7 1.2M409.3 599l14.2 1.7M434.9 599.6l12.4 1.3M271.4 605l9.6 1.3M438.6 604.8l10.3 1.7M307.9 609.9l9.8 1.5M451.9 610.3l15.6 1.8M273.9 615.2l7.9 1M380 615.5l15.3 1.2M245.9 621l10.1 1.4M277.4 620.8l7.5 1.9M287.1 620.4l9.7 1.7M384.3 620.9l15.2 1.6M402 620.4l12.1 1M443.4 620.8l12.3 1.4M239.3 625.8l14.1 1.5M257.7 625.6l15.9 1.8M388.4 626l13.9 1.3M235.7 631.2l15 1.9M252.5 631.6l14.7 1.6M301.2 631.7l15.6 1.8M320 630.9l11.7 1.2M267.8 637.2l14.8 1.5M285.4 636.2l14.3 1.3M318.7 636.4l9.3 1.8M330.3 636.5l9.9 1.8M409.5 636.3l8.6 1.2M421.9 636.3l8.9 1.1M434.7 636.7l13 1.8M464.8 636.8l13.5 1.2M311.6 642.4l14.3 1.4M404.8 642l8.8 1.6M434.1 641.7l12.3 1.3M463.4 641.8l10.4 1.4" stroke="#cdc29b" stroke-width="1.7" fill="none" stroke-linecap="round"/>
<path d="M314.1 283.5l8.9 1.2M454.6 283.9l8.4 1.6M232.1 288.5l14.5 1.6M283 288.9l9.4 1.1M453.7 288.8l10.6 1.2M347.5 294.3l14.8 1.8M364.9 293.9l8.5 1.5M259.9 299.3l8.9 1.5M330.6 299.7l7.1 1.1M418.3 299.4l12.9 1M232.2 305.1l8.2 1.6M284.3 304.5l11.1 1.5M310.9 305.3l8.5 1.4M323.2 305l15.5 1.9M342.4 305l10.4 1M390.2 305l10.2 1.8M402.3 304.8l9.3 1M415 304.9l11.6 1.3M443.6 304.7l9 1.6M469.7 304.8l11.9 1.7M244.9 310l12.8 1.7M286.5 310.1l10.4 1M299.5 310.3l11 1.3M312.2 310l10.7 1.9M377.5 310.7l7.6 1.3M434.4 310.3l13.6 1.6M295.6 315.9l9.3 1.9M389.2 315.5l7.1 1M412.2 315.9l13.1 1.2M429 315.9l11.7 1.2M472.7 315.3l8.2 1.1M250.6 321.4l13.2 1.2M295.4 320.8l12.7 1.9M310.8 321.1l9.7 1.2M308.2 326.2l15.5 1.3M449 326.4l11.4 1.7M462 326.6l13.6 0.9M478.3 326.2l13 1.1M331.8 331.3l8.2 1.7M341.9 331.4l11.9 1.1M356.7 331.9l8 1.1M414.9 331.3l13.1 1M429.8 331.8l11.5 1.5M442.7 331.7l11.4 1.4M286 337.5l9.5 1.3M313 337.5l10.1 1M386.9 337.2l11.5 1.2M413.1 337.6l13.6 1.6M342.6 342l13.3 1.7M245.9 347.9l15.6 1.2M338.3 347.5l10.3 1.8M353 348.2l9.1 1.2M383.4 347.5l12.4 1.8M471 347.5l15.6 1.6M270.4 353.6l13.9 1.2M325.6 353.2l10.7 1.7M389 352.8l9.3 1.5M468.2 352.9l7.7 1.8M316.8 358.8l11.8 1.3M378.4 358.6l15.9 1.6M332.8 363.8l14.5 0.9M351.5 363.4l15 1.8M417.8 363.6l15.1 1M437.2 364.1l7.3 1.9M269.6 369.3l11.1 1.3M419.5 369l11.5 0.9M254.4 374.5l15.8 1.6M291.2 374.9l11 1.4M325.6 374.7l8.1 1.7M336.8 374.6l8.3 1.4M382.3 374.1l10.7 1.6M397 374.3l8.6 1M438.2 374.3l9.8 1.3M450.4 374.8l8.7 1.7M308.5 380.3l8.8 1.1M319.4 379.8l12 1.4M351.5 380.3l7.5 1.4M385.7 379.5l16 1.6M404.7 379.7l7.3 1.7M415.2 380.4l8.2 0.9M437.7 379.4l14 1.3M308.1 384.9l11.2 1.6M347 385l13 1.9M373.1 385l15.5 1M281.5 390.7l9.3 0.9M294.3 390.3l10.3 1.1M342 390.7l15.2 1.3M371.2 390.6l7.9 0.9M435.1 390.8l11.9 0.9M478.4 391l14.5 1.5M250.3 395.9l7.7 1.3M261.4 395.7l7.4 1.8M292.8 396.2l14 1.7M309.3 395.5l10.7 1.1M378.7 395.6l14 1.3M405.7 395.8l9.4 1.3M448.2 396.2l10.1 1.9M307.6 401.7l8 1.7M384.8 401.7l12.8 1.3M421.6 401.4l13.7 1.1M243.3 406.7l9.6 1.6M297 407.1l12 1M358.4 407l11.4 1.2M333.5 412.1l12.8 1.5M349 411.8l8.1 1.6M473.3 412.5l14.9 1.6M241.8 417.6l8.8 1.6M301.3 417.2l10.2 1.1M316.2 416.9l9.6 1.2M373.3 417l9.9 1.3M248.2 423l12.6 1.6M335 422.7l12.4 1.2M387 423l15.8 1.2M404.4 422.6l8.7 1.8M417.3 423.1l14.7 1.3M475.1 422.9l12.2 1M245.1 428.3l13.5 1.4M274.5 427.8l9.1 1.6M286.3 428.4l15.3 1.1M327.5 427.8l9.4 1.9M307.3 433.2l14.8 0.9M356 433.4l13 1.6M400.9 433.1l7.7 1.3M413.4 433.3l14.1 1.4M477.7 433.1l10.6 1.6M242.4 438.4l11.6 1.6M281 439.1l10.3 1M294 438.5l7.2 1.3M316.2 439.1l12.8 1.5M348 439.1l14.4 1.5M431.9 439.1l13.7 1M239.6 444l12.2 1.2M341.6 444.2l8.1 1.1M352.8 444l10.7 1.1M394.8 444.5l10.2 1.6M283.6 449.6l11.3 1.3M335.9 449.4l15.2 1.2M353.6 449.8l9.6 1.5M366.8 449.3l11.6 1.3M382.3 449.7l8.6 1.4M413.6 449.7l12.1 1.5M444.6 449.9l7.3 1.1M256.8 454.4l15.5 1.8M274.8 455.3l11 1.8M312.9 455.2l14.5 1.8M345.4 454.8l12.8 1.7M388.9 455.1l9.5 1.6M417.8 454.6l11.1 1.3M476.1 454.5l10.7 0.9M313.3 460.5l10.8 1.2M416.1 460.3l11 1.8M427.7 465.8l14.1 1.1M464.2 465.1l12.6 1.9M307.3 471.2l15.7 1.4M325.7 470.4l10.3 1M337.9 470.4l10.5 1.8M399.1 470.4l9.2 1.4M449.7 471.3l14.4 1.6M367.4 475.8l14.9 0.9M399.1 475.8l7 0.9M431.9 475.7l10.5 1.3M251.1 481.5l8.4 1.3M262.3 481.2l9 1.8M294.2 481.8l12.8 1.4M310.7 481.6l10.7 1.3M338 481.6l13.1 1.1M354.1 481.2l7.6 1.4M407.4 481.8l9.1 1.3M458.6 482l11.7 1.3M473.4 481.1l10.2 1.3M283.5 486.8l10.4 1.4M353.3 486.7l8 1.6M415 486.5l10.6 1.9M442.8 486.9l13.2 1.3M459 487.2l8.6 1.3M240 492.7l8.3 1.1M294.9 492.4l11.1 1.7M309.3 492.1l10.7 1.6M370.6 491.8l9.2 1.4M397.2 491.8l10.3 1.5M316.7 497.4l9.6 1.4M345.1 497.2l11.7 1.2M359.3 497.2l10 1.7M409.9 497.6l14.8 1M443.4 497.2l15.3 1.3M333.7 503.3l12.9 1.9M427 503.2l9.7 1.6M469.4 503.3l7.5 1.1M299.9 508.6l8.8 1.4M323.5 508.7l12.2 1.1M354.5 508.7l11.2 1.9M369.6 508.2l11.7 1.1M440.3 508.6l13.4 1.6M470.2 508.3l9.9 1.7M274.5 513.6l14.5 1.3M301.2 514l14.9 1.1M375.6 513.2l15 1.4M423.3 513.5l8.7 1.3M465.7 513.3l15.7 1.2M300.6 519l8.8 1.9M313 518.8l7.1 1.2M260.2 524.8l10 1.2M305 524.1l14.6 1M321.6 524.3l12.3 1.4M336.1 524.7l14.9 1.1M353.7 524.1l10.7 1.7M433.7 524.6l9 1.1M446.8 524l15.6 1.9M313.2 530.2l8.9 0.9M324.1 529.6l10.3 1.2M337.1 529.4l8 1M363.7 529.6l11.5 1.6M394.9 529.8l8.4 1.3M408.1 530.1l10.3 1.8M423.6 530.2l8.9 1.7M313 534.8l13.3 1.5M356.7 534.7l10.9 1M385.9 535l7.8 1.9M427.4 535.2l7.3 1.1M375 540.7l12.3 1.8M298.4 546.2l8.4 1.9M308.8 546.2l11 1M371.8 545.6l9.6 1.4M415.4 545.6l10.2 1.7M461.3 545.7l12.1 1.2M476.5 546.2l15.1 1.4M333.2 551.2l12.3 0.9M232.7 556.9l15.5 1.4M264.5 556.5l10.5 0.9M419.3 556.3l9.9 1.5M461.5 556.7l15.1 1.6M385 561.8l9.5 1.9M449.1 561.5l15 0.9M248.8 566.8l8.4 1.1M279 567.4l10.5 1.4M309.8 567.6l8.6 0.9M353.3 566.7l8.6 1.2M240.3 572.4l11.6 1M250.5 577.4l8.2 1.1M261.9 578.1l14.3 1.8M291.3 577.4l10.2 1.3M350.6 578.1l8.8 1.6M262.4 582.9l10.6 1.3M374.6 583.3l9.9 1.1M431.5 583.1l11.5 1.6M463 583.3l14.9 1.1M268.8 588.2l7.9 1M348.9 588.9l13.8 1.3M365.5 588.2l11 1.3M381.3 588.2l13.8 1.5M434.6 588.6l8.3 1.2M446.4 588.6l10.8 1.2M243.7 594.3l11.5 1M385.2 594.1l11.7 1.6M247.5 599.3l14.7 1.7M342.1 599.1l8.3 1M394.5 599.1l11.4 1.2M459.3 599.6l11.3 1.8M258.3 604.9l8.5 1.4M284.4 605.1l9.2 1.6M296.5 604.8l12.4 1.7M369.5 604.8l15.8 1.5M389 604.8l12.4 1.9M424.2 604.6l10.2 1.2M469.7 604.4l15.6 1.5M263.5 609.6l13.8 1.1M281.4 609.7l8.8 0.9M320.9 610.2l10.5 1.9M334.3 610.3l10 1.2M434.3 610.3l15.1 1.3M284 615.7l15 1.1M430.2 615.4l15.6 1.5M464.5 615.3l8.7 1.6M260.2 620.5l13.5 1.8M298.7 620.6l13.6 1.6M326.2 621.1l11.4 1.8M341.6 620.4l11.5 1.8M339.9 626.4l9.3 1.4M449.3 626.4l13.5 1.3M464.6 626.3l14.3 1.7M281.9 631l15.5 1.3M376.8 631.3l8.5 1.2M420.1 631.5l10.9 0.9M242.7 637.1l12.1 1.3M240.8 642l9.2 0.9M283.1 641.8l12 1.7M298.4 642.1l8.4 1.1M350 641.7l12.9 1.6M377.5 642.3l9.2 1.3M449.3 641.6l9.7 1.8" stroke="#d4c9a1" stroke-width="1.7" fill="none" stroke-linecap="round"/>
<path d="M354.8 283.2l9.9 1.2M367.6 283.5l7.7 1.1M478.2 283.5l12.3 1.1M295.1 289.2l11.6 1.4M310.3 288.7l9.2 0.9M323 289.1l7.8 1.6M434.9 288.8l14.2 1.3M466.1 288.8l14.6 1M237.9 294.2l14.3 1.5M271.2 294.5l15.3 1.3M290.7 294.1l7.5 1.4M302.4 294.7l13.9 1.2M320.2 294.6l8.2 1.5M375.1 294.8l11.8 1.1M391.2 294l7.9 1.2M402.5 294.2l14.3 1.4M455.8 294l12.7 1.7M472.2 294l13.2 1.3M287 299.5l9.5 1M300.9 299.5l13.5 1.2M341.8 299.3l10.4 1.4M434.1 300l7.6 1M257.9 304.8l8.8 1.9M455.1 304.8l12.2 1.3M273.6 310.1l8.4 1.7M347.8 310.2l10.3 1.7M475 310.4l7.8 1M247.2 315.9l7.7 1.4M310.1 315.7l13.4 1.5M341.7 315.3l15.1 1.3M378.4 316l8.6 1M454.2 316l14.8 1.9M265.7 321.1l9.2 1.8M278.3 321.4l12.2 1M324.4 320.7l15.3 1.9M361.6 320.6l14.4 1.8M397.7 320.8l14.6 1.2M414 320.9l7.2 1.1M475 320.7l7.8 1.5M247.4 326.3l12.3 1.4M293.9 326.4l10.3 1.4M338.8 326.7l8.5 1.2M351.5 326.6l10.6 1.1M410.8 326.4l8.8 1.3M276.6 332.1l13.8 1.2M293.7 331.6l15.6 1.9M458.2 331.7l10.5 1.7M359.2 337.1l9.7 1.7M372 337.4l13 1.6M465.5 336.9l12.6 1.3M298.1 342.7l13.8 1M328.2 342.8l10.5 1.8M410.7 342.4l15.5 1M263.9 347.7l13.4 1.6M280.1 347.9l9.6 1.8M307.4 347.9l15.6 1.2M398.5 347.9l14.9 1.9M433.2 347.8l9.9 1.5M446.1 348.2l8.1 1.2M458.8 348.2l10.4 1.3M250.9 353l15.3 1.2M400.6 353.3l14.5 1.5M257 358l12.5 1.3M348 358.9l15.8 1.3M408.5 358.4l11.2 1.3M423.8 358.4l14.7 1.3M467.1 358.5l13.9 1.7M279.7 364l13.8 1.1M296.9 363.4l9.7 1.5M320.4 364.2l8.5 1.7M388.7 363.6l7.7 1.9M400.5 364.1l12.5 1.5M283.6 369.4l11.7 1.6M323.5 369.5l15.9 1.5M342.7 369.3l8.2 1.5M368.6 369.4l11.6 1.3M462 369l12.3 1.1M234.5 374.7l15.3 1M346.8 374.4l15.8 1.6M365.1 374.1l16 1.7M426.7 374.6l7.3 1.6M275.1 379.7l14.6 1.5M293.2 379.5l11.8 1.4M425.3 379.4l10.4 1.1M321.5 385.2l7.4 1.8M391.3 385.3l14.1 1.8M407.3 385.5l7.4 1.3M435.7 385.2l14.5 1.1M453.7 385.2l15.1 1.9M472 384.9l9.5 1.8M359.6 391.1l7.3 1.5M479.2 395.5l9.2 1.2M266.2 401l11.5 1.7M370.7 401.5l12.6 1.1M401.3 401.4l15.6 1.3M453 401.6l9.8 1.4M372.2 406.9l10.5 1.9M449.4 406.9l10.1 1.8M463.1 406.4l8.6 1.2M247.3 411.8l14.9 1.3M296.7 411.7l9.2 1.2M320.4 412.1l10.4 1.5M360.3 411.8l9.6 1.1M396.4 412.5l13.4 1.3M413.1 412.3l11.5 1.6M442.2 411.9l13.3 1.6M327.6 417.2l13.7 1.4M358.4 417.3l13.1 1M399.7 417.1l9.9 1.3M262.8 422.8l8 1.3M274.9 423l10.1 1.2M305.4 422.8l10 1M445.8 422.3l8.2 1M458 422.9l12.1 1.6M260.7 427.7l11 1.4M304.1 427.7l11.3 0.9M341.2 427.7l14.6 1.8M373.8 428.2l16 1.3M273.9 433.4l11.7 1.6M326.4 433.7l13.5 1.4M342.6 433l11.6 1.7M371.3 433.7l11.7 1.3M443.7 433.8l12 1.7M258.5 438.3l8.4 1.5M404.5 438.4l7.1 1.7M416 439l13.7 1M269.2 444.1l10 1.4M283 443.7l9.5 1.1M295.7 444.4l13 1.4M454.6 443.8l12.2 1.1M465.1 449.7l13.1 0.9M362.4 455l12.9 1.1M400.5 454.6l13.8 1.4M251.5 460.4l13.2 1.3M267.6 460l15.9 1.5M286 460.4l11.5 1.7M337.3 460.6l15.2 1.3M354.9 460.4l12.4 1.5M239.9 465.9l8.4 1.6M283.7 465.7l11.9 1M339.6 465.4l7.8 1.8M369 465.5l11.8 1.3M384.4 465.4l9.8 1.4M397.6 465.6l11.2 1.5M446.1 465.9l15.5 1.5M266.7 470.9l10.6 1.2M385.3 471.1l11.4 1.5M411.4 471.2l15.4 1.8M466 470.8l7.8 1.1M285.2 476.7l14.5 0.9M385.4 476.4l11.9 1.5M457.7 475.8l13.7 1.3M273.9 481.1l16 1.4M325.7 481.2l7.3 1.5M379.4 481.5l10.3 1.7M233.8 487.2l7.5 1.1M295.1 486.9l15.9 1M479.7 486.8l11.1 1.6M252 492.5l7.9 1.9M263.5 492.5l13.5 1.7M278.6 492.3l12.3 1.3M343 492.1l10.4 1M444.5 491.8l12.9 1.4M246.5 497.2l8 1M299.8 497.6l14.5 1M265.2 503l11.3 1.6M279.8 503.1l7.4 1.3M305.5 502.9l12 1.9M321.6 503.4l8.8 1.3M412.9 502.9l9.4 1.3M440.9 503l13.8 1.3M285.3 508.3l12.9 1.1M311.7 508l8.1 1.7M383.8 508.5l9.1 1M456.2 508.3l10.4 1.6M290.8 513.6l7.5 1.5M393.8 513.7l10.2 1.3M407.5 513.7l12.7 1.8M256.7 519.1l13.9 1.5M356 518.8l11.6 1.7M387.9 518.9l14.9 1M436.7 519.2l11.2 1.3M273.3 524.1l13 1.3M267.2 530.1l7.1 1.6M464.1 529.4l12.7 1.5M479.9 529.3l11 1M408.4 534.8l14.7 1.6M456.4 535l15.6 1.6M475.3 535.5l9.1 1.8M292.9 540.7l12.2 1.8M390 540.2l11.4 1.4M251.3 546.1l14.4 0.9M403.5 545.7l10.1 1.5M428.2 546.2l15.6 1.5M241.1 551l13.7 1.1M273.4 551.6l12.1 0.9M307.8 556l15.8 1.2M345.8 556.8l8.3 1.5M404.7 556.6l12.6 1.2M265.9 561.8l14.4 1.2M284.3 562.3l15 1.1M302.1 562l9.2 1M357.7 561.9l14.3 1.4M424.3 562.1l10.3 0.9M406.5 566.7l15.5 1M452.6 567.5l9.8 1.4M272.3 572.6l7.7 1.7M315.5 572l8.3 1.1M343.2 572l13.1 1.3M359.2 572.9l15.8 1.6M392.5 572.4l15.9 1.1M425.4 572.3l9.8 1.9M449.1 572.1l15.6 0.9M373.9 578l13.7 1.9M400.6 577.9l15.4 1.7M421.3 577.8l15.6 1.5M439.7 578.1l7.5 1.5M317.8 583.1l14.3 1.5M360.2 582.8l12 1.9M403.1 583.1l10.2 1M243 588.8l13.5 1.8M414.2 588.4l15.6 1.5M257.5 593.5l12.4 1.1M290 594.4l7.2 1.5M401.7 594.3l7.2 1.2M459.6 594.4l8.8 1.3M233.6 599.4l10.1 1.4M265.4 598.9l11.3 1.2M291.1 599l11.1 1.1M327.1 599.4l12.4 1.3M379.4 599.2l11.2 1M425.5 599.5l7.5 1.5M449.9 599.7l7.1 1.8M473.1 599.5l9.5 1.7M310.8 604.2l9.2 1.9M340.1 604.1l7 1.4M405.6 604.7l14.1 0.9M240.8 609.8l7.5 1.5M251.9 609.7l9.4 1.3M347.4 610.3l11.3 1.4M379.6 610l8.5 1.7M407.4 609.7l8.6 1.3M312.3 615.2l10.6 1.8M324.7 615.6l15.7 1.3M360.6 615.5l15.8 1M448.3 615.7l10.8 1.4M357.3 620.3l8.9 1.9M416.8 620.8l8.4 1.7M470.4 620.9l9.1 1.5M365.9 625.6l7.6 1.7M376.4 626.1l8.8 1M403.8 626.3l12.4 1.3M419.7 626.3l14.9 1.5M351.5 631.1l12 1.1M463.9 631.5l15.2 1.8M302.4 637.1l14.1 1.7M344.4 637.1l15.8 1.8M363.1 636.7l9.9 0.9M377.2 637l13.3 1.3M268.6 642.4l11.8 1M330.6 642.1l15.3 1.5M389.9 642.3l11.7 1.1M416.9 641.6l13.4 1.2M478.4 642.4l12.6 1.7" stroke="#c4b992" stroke-width="1.7" fill="none" stroke-linecap="round"/>
<path d="M335.4 283.9l15.9 1.7M378.8 283.7l14.5 1.8M411.5 283.8l11.2 1.5M441.9 283.9l9.3 1.3M248.3 288.8l9.4 1.1M260.2 289.1l8.3 1.7M333 289l7.1 1M359.1 289.3l9.3 1.8M373.5 289.4l12.2 1.5M388.5 288.5l14.5 1M255.8 294.5l10.5 1.8M242.2 299.9l14.9 0.9M316.8 300l8.9 1.3M354.8 299.2l10.8 1.5M368.8 300l12.3 1.7M384.6 299.8l10.2 1.7M399.7 299.2l15.5 1.5M245.3 304.7l11.3 1M355.2 305.5l15 1.1M374.6 305.2l12.3 1M387.8 310.1l12.1 1.9M401.8 310.1l11.8 0.9M416.5 310l13.2 1.2M463.8 310.6l9.4 1.6M258.6 315.2l15.9 1.7M398.9 315.7l10.2 1.6M235.9 321.5l10.6 1.1M379.1 321l15 1.2M426.1 321.1l13.5 1.7M461.6 320.9l8.7 1.1M261.8 326.2l14.4 1.2M326.5 325.9l7.8 1.9M421.9 326.4l13.1 1.7M241 332l14.9 1.7M260.2 331.9l13.1 0.9M385.2 331.8l8.1 1.5M241.4 336.7l10.6 0.9M298.9 336.7l11 1.5M342.2 337.2l14 1.4M402.1 337.3l8.4 1.3M429.9 337.4l9.5 1.1M451.9 337.1l9.7 1.7M243.6 342.9l11.9 1.6M259.4 342.7l8.3 1.3M269.6 342.3l10.4 1.1M283.7 342.7l12.1 1.4M376.9 342.3l12.9 1.3M394 342.1l11.9 1.7M462.8 342.8l12.7 1.1M292.8 347.8l11 1.3M325.4 347.5l10.3 1.6M366.1 347.7l15.3 1.4M288.5 353.4l14.5 1.1M306.3 353l15 1.2M377.2 353.6l7.6 1.5M418.9 353.1l10.2 1M450.1 353.5l13.9 1.3M272.1 358.1l7.1 1.3M282.5 358.5l14.9 1.6M365.2 358.3l11.5 1.6M396.5 358.3l9.1 1.4M441.1 358.7l9.7 1M453.2 358.2l8.6 1M246.9 364.2l10.9 1.5M262 364.2l13.9 1.7M309.6 363.6l7.9 1.3M370.9 363.4l15.3 1.5M297.4 368.7l11.5 1M311.7 369.2l9.2 1.4M434.4 369.5l9.9 1.8M478 369.5l7.2 1.8M306.2 374.6l15.5 1.1M408 374.7l15.5 1.6M234.5 380.3l8.6 1.5M246.1 379.4l11.7 1.4M260.7 380l10.1 1.9M363 379.6l7.5 1.8M475.2 379.9l13 1.5M279.4 385l13.9 1.3M331.3 385.7l13 1.1M363.9 385.6l7.1 1M416.8 384.9l15.2 1.2M236.9 390.3l13.8 1.1M253.7 390.1l12.7 1.8M324.3 390.8l15.7 1.9M381.8 391l14.1 1.1M399.3 390.6l15.3 1.2M233.2 395.7l12.6 1.1M273.2 396.2l14.8 1.6M324.4 396.2l15.2 1.5M418.8 396l14.3 1.4M435.1 396.4l8.7 1.2M328.3 401.6l10.3 1.5M341.2 401.3l13.8 1.2M465.9 401l12.7 1.3M254.6 406.5l10.1 1.5M311.8 406.3l12.2 1.5M328.9 406.8l14.4 1.3M387.1 407l12.5 1.7M402.2 406.2l8.8 1.4M473.9 407l9.3 1.3M266.7 411.6l10.1 1.1M280.6 412.3l13.8 1.6M428.5 412.3l10.3 1M457.9 411.9l12.1 1.3M254.4 417.6l9.6 1.9M285.1 417.2l14.5 1.9M387.3 417.8l9.8 1.5M412.6 417.3l15 1.5M432.6 417.2l15.2 1.8M464.3 417l14 1M288.2 423l14.7 1.1M318.3 422.8l14.3 1.5M350.8 422.6l15.2 1.2M369.1 422.5l15.8 1.6M316.6 428.4l9 1.1M429.9 427.9l8.5 1.9M442.9 428.3l13.5 1.2M478.8 428.5l9.8 1M240.2 433.4l15.4 1.3M288.1 433.8l15.4 0.9M458.5 433.7l15.9 1.9M333.1 438.5l12.6 1.4M366.1 438.8l10.5 0.9M379.3 438.5l10.8 1M449.5 438.6l12.2 1.7M256.6 444.3l10 1.5M408.9 444.4l10.4 1.4M422.2 444.4l10.1 0.9M240.5 449.5l15.3 1.4M271.6 449.7l8.8 1.5M427.9 449.2l13.9 0.9M236.5 454.4l16 1.6M446.7 454.6l8.7 1.9M299 460.6l11.6 1.3M396.4 460.4l15.6 1.2M448.2 460.6l14.8 0.9M477.8 460l11.7 1.3M268.2 465.8l14.1 1.5M297.3 465.1l13 1.2M313 465.9l10 1M411.4 465.5l13.8 1.1M353.3 470.6l11.2 1.8M431.3 471.1l13.5 1M241.3 475.8l7.1 1.1M302 476l15.7 1.8M320.5 476.4l15.1 0.9M407.5 476.6l11.2 1.9M421.4 476.7l7.5 1.2M237.5 481.7l10.7 1.6M392.9 481.8l10.2 1.5M244.2 486.5l7.5 1.8M313.2 487.4l7.8 1.3M323.9 487l10.8 1.2M338.4 487.3l9.9 1.7M375.7 486.8l10.6 1.1M398.7 487.1l12.6 1.4M428.1 486.4l10.2 1.2M470.5 487.2l7.3 1M323.1 492.1l15.4 0.9M357.3 492.5l9.3 1.5M429.7 491.9l12.1 1.8M459.9 491.8l15.6 1.4M479.5 492.6l9 1.4M233.6 497.5l10.5 1.5M395.9 497.9l10.8 1.1M461.7 498l10.2 1.7M475.6 497.2l13.2 1.7M234.9 503.3l10.7 1.4M291.6 502.8l12.2 1.7M351.1 503.1l14.9 1.8M370.2 502.8l7.7 1.4M237.1 508.3l14.2 1M254.3 508.6l12.7 1.1M271.1 508.2l11.7 1.6M258.1 514.1l13.8 1.4M320.6 513.6l11 1.9M352.2 513.2l10.1 1.9M365.3 513.4l8.2 1.2M238.9 519.2l13.9 1.5M287.4 519.3l11.3 1.7M406.2 519.5l9.4 1.8M418.8 518.6l13 1.1M244.3 524.3l12.6 1.3M382.9 524.4l8 1.8M393.3 524l10.1 1.8M419.2 524.8l11.8 1.5M233.8 529.8l10.4 1.4M293.8 529.8l15 0.9M348.4 529.5l12.4 1M243.1 535.2l11 1.8M284.5 535.3l10.3 1.5M342.9 534.6l11.8 1.1M396.6 535.2l7.9 1.5M274 540.1l14.3 1.8M306.8 540.1l12.6 1.1M323.7 540.3l12.8 1.2M405.4 540.8l8.2 0.9M450.2 540.6l12.5 1.2M238.1 546.2l9.6 1.4M270.6 545.4l12.2 1.5M287.4 546.2l7.9 1M342.7 546.1l12.7 1.2M359.9 545.4l8.8 1.2M447.1 546.2l10.2 1.6M289.2 551l7.9 1.5M300.4 551.6l9.4 1.1M367 550.7l15.5 1.1M402.5 551.3l9.2 1.5M416.9 550.8l10.9 1M469.8 551.1l10.8 1.5M288.8 556.8l15.9 1.1M431.2 556.9l9.1 1.5M443.8 556.6l15.3 1.8M247.7 561.6l15.1 1.3M316.3 561.6l12.6 1.3M333 561.9l10.6 1M345.8 561.7l8.2 1.4M468.5 562.1l10.8 1.3M233.9 566.8l10.4 1.6M261.2 567.1l15.6 1.9M291.8 567.5l15.6 1.9M320.7 566.7l15.9 1.3M340.7 567l9.4 1.3M395.8 566.9l9.6 1.8M440.8 566.9l10.3 1.9M478.9 567.4l10.5 1.7M255.8 572.3l12.7 1.2M327.3 572l12.4 1.1M438.7 572.8l7.3 1.8M305.3 578.1l12.1 0.9M319.4 577.9l13.6 1.5M337 577.4l11 1.6M389.3 578.2l7.5 1.8M450.2 578l11 1.1M464.1 577.6l15.1 1.3M306.1 583l8.2 1.5M387 583.6l11.6 1.6M414.5 583.1l13.8 1M444.8 583l14.6 1.3M259.6 588.7l7 1M280.1 588.7l7.7 1.6M290.3 588.3l13.3 1.7M304.9 588.6l13.3 1.8M336.8 588.4l9.9 1.8M398.3 589l12.2 1.8M459.1 588.8l13.6 1.3M477.7 588.7l10.6 1.6M352.5 593.7l13.9 1.3M411 593.9l11.9 1.9M442.4 593.7l12.7 1.7M279.7 599.2l9.9 1.5M306.9 599.5l15.6 1.5M352.8 599.4l9.2 1.6M244.8 604.2l10.5 1.7M324.2 604.1l13.1 1.8M352 604.8l13.4 1.7M453.2 604.3l12.8 1.6M292.3 610.2l12 1.2M363 610.2l13.9 1.6M392.3 609.5l13 1.3M418.1 609.8l13.3 1.7M472 609.5l8.8 1.2M244.1 615.6l11.2 1.8M259.7 615.8l10.2 0.9M301.1 615.4l8.7 1.1M344.9 614.8l11.2 1.4M398.5 615.4l13.4 1.5M415.8 615.8l11.1 1.8M475.6 615.1l8 1.2M316.8 621.1l7.3 1.6M369.5 620.7l10 1M429.7 620.7l11.2 1.3M458 620.2l8 1M277.2 626.3l13.2 1.6M293.4 626.3l10.3 1.3M307.7 626.3l11 1.7M322.7 626l12.3 1.7M352.3 626.5l11.4 1.6M437.3 626.4l10.1 1.5M269.1 631.3l8.7 1.8M335 631.4l13.6 1.2M366.1 631.1l7.6 1.8M390.5 631.6l15.5 1.8M409.9 631.4l7.4 1.8M435.6 631.6l7.5 1.2M447.3 631.3l12.7 1.2M257.3 636.4l7.1 1.5M393.2 637l14.7 1.7M449.6 636.8l11.4 1.1M254.2 642.2l12.7 1.5M365 642.2l9.1 1.3" stroke="#dad0a8" stroke-width="1.7" fill="none" stroke-linecap="round"/>
<path d="M237.7 283.5l6.5 0.4M254.7 283.3l5.9 0.9M273.2 283.7l6 0.9M289.9 283.5l2.9 0.8M315.6 283.2l3.4 0.6M336.9 283.6l7.3 0.8M380.3 283.4l6.5 0.9M398.9 283.1l4.3 0.6M233.6 288.2l6.5 0.8M296.6 288.9l4.9 0.7M311.8 288.4l3.6 0.4M324.5 288.8l2.8 0.8M334.5 288.7l2.4 0.5M375 289.1l5.2 0.7M408.6 288.6l4.6 0.7M239.4 293.9l6.4 0.8M257.3 294.2l4.3 0.9M292.2 293.8l2.6 0.7M303.9 294.4l6.1 0.6M366.4 293.6l3.2 0.7M376.6 294.5l5 0.5M243.7 299.6l6.7 0.5M272.8 299.5l5.2 0.5M288.5 299.2l3.7 0.5M318.3 299.7l3.4 0.7M343.3 299l4.2 0.7M370.3 299.7l5.3 0.9M386.1 299.5l4.1 0.8M419.8 299.1l5.6 0.5M435.6 299.7l2.6 0.5M465 299.3l2.5 0.7M475.7 299.6l6.2 0.5M233.7 304.8l3 0.8M246.8 304.4l4.7 0.5M270.7 304.4l5.4 0.9M285.8 304.2l4.6 0.7M324.7 304.7l7.1 0.9M376.1 304.9l5.3 0.5M391.7 304.7l4.1 0.9M416.5 304.6l4.9 0.6M456.6 304.5l5.2 0.7M246.4 309.7l5.6 0.8M262 309.8l4.5 0.9M403.3 309.8l5 0.5M476.5 310.1l2.8 0.5M279.5 315.3l6.9 0.5M297.1 315.6l3.6 1M343.2 315l6.8 0.6M379.9 315.7l3.2 0.5M390.7 315.2l2.4 0.5M443.3 315.8l3.2 0.5M474.2 315l3 0.6M279.8 321.1l5.2 0.5M325.9 320.4l6.9 0.9M345.3 320.5l6 0.9M380.6 320.7l6.7 0.6M415.5 320.6l2.5 0.5M427.6 320.8l5.9 0.8M446 320.5l5.3 0.6M309.7 325.9l7 0.7M340.3 326.4l3.2 0.6M423.4 326.1l5.7 0.9M437.9 326.2l3.4 0.6M479.8 325.9l5.7 0.5M261.7 331.6l5.7 0.4M333.3 331l3 0.8M343.4 331.1l5.1 0.6M398.5 331.8l6.6 0.6M416.4 331l5.7 0.5M444.2 331.4l4.7 0.7M472 331.8l6.7 0.8M275.7 336.5l2.5 0.8M287.5 337.2l3.8 0.7M300.4 336.4l4.6 0.8M327.2 336.8l5 0.8M388.4 336.9l4.8 0.6M403.6 337l3.1 0.6M414.6 337.3l6 0.8M431.4 337.1l3.7 0.6M467 336.6l5.4 0.6M271.1 342l4.2 0.6M317.8 342.3l3.2 0.9M344.1 341.7l5.8 0.8M378.4 342l5.6 0.6M395.5 341.8l5 0.9M430.9 341.9l5.5 0.7M294.3 347.5l4.5 0.6M354.5 347.9l3.5 0.6M384.9 347.2l5.3 0.9M400 347.6l6.7 1M447.6 347.9l3 0.6M460.3 347.9l4.2 0.7M234.9 352.4l5.6 0.9M290 353.1l6.5 0.5M307.8 352.7l6.8 0.6M341.9 352.4l6.5 0.8M360.1 352.8l6.9 0.8M378.7 353.3l2.7 0.8M390.5 352.5l3.6 0.7M402.1 353l6.5 0.8M420.4 352.8l4.1 0.5M479.2 353.2l3.4 0.9M241.8 357.8l5.3 0.7M318.3 358.5l5 0.7M334.1 358.4l4.7 0.8M410 358.1l4.7 0.7M425.3 358.1l6.6 0.6M442.6 358.4l3.8 0.5M468.6 358.2l6.2 0.9M248.4 363.9l4.5 0.8M263.5 363.9l6.1 0.8M298.4 363.1l3.8 0.7M311.1 363.3l2.8 0.7M321.9 363.9l3.2 0.8M390.2 363.3l2.8 0.9M402 363.8l5.4 0.8M419.3 363.3l6.8 0.5M438.7 363.8l2.5 1M461.5 363.6l7 0.9M244 368.9l3 0.5M255.7 368.9l5.1 0.9M271.1 369l4.6 0.7M313.2 368.9l3.5 0.7M370.1 369.1l4.9 0.6M403.8 368.6l6.6 0.7M421 368.7l4.8 0.5M449.7 369l3.9 0.9M275.7 374.7l6.1 0.8M366.6 373.8l7.3 0.9M398.5 374l3.2 0.5M428.2 374.3l2.5 0.8M439.7 374l3.9 0.7M472.9 374.7l4.3 0.5M236 380l3.3 0.7M262.2 379.7l4 1M276.6 379.4l6.6 0.7M310 380l3.4 0.5M336 380l5.5 0.9M416.7 380.1l3 0.4M426.8 379.1l4.2 0.6M262 384.6l6.8 0.8M280.9 384.7l6.1 0.6M297.1 384.7l4.3 0.6M332.8 385.4l5.6 0.6M374.6 384.7l7.1 0.5M418.3 384.6l6.9 0.6M455.2 384.9l6.8 0.9M238.4 390l6.1 0.5M283 390.4l3.6 0.5M295.8 390l4.2 0.5M309.6 390.5l5.6 0.6M361.1 390.8l2.5 0.7M372.7 390.3l2.8 0.4M383.3 390.7l6.3 0.5M400.8 390.3l6.9 0.6M418.6 390.4l6.6 0.4M436.6 390.5l5.1 0.5M450.2 390.7l3.2 0.7M479.9 390.7l6.5 0.7M234.7 395.4l5.4 0.5M262.9 395.4l2.6 0.9M294.3 395.9l6.2 0.8M325.9 395.9l6.8 0.8M343.3 395.7l7 0.8M436.6 396.1l3.3 0.6M464.4 395.7l5.3 0.7M480.7 395.2l3.5 0.6M243.5 401.1l2.8 0.6M267.7 400.7l4.8 0.9M280.5 401.4l4.6 0.7M342.7 401l6.1 0.6M372.2 401.2l5.4 0.6M386.3 401.4l5.5 0.7M402.8 401.1l7.1 0.7M423.1 401.1l6 0.6M467.4 400.7l5.5 0.7M244.8 406.4l3.8 0.8M256.1 406.2l4.1 0.7M286.4 406.7l3.2 0.6M359.9 406.7l4.8 0.6M373.7 406.6l4.2 1M388.6 406.7l5.4 0.8M248.8 411.5l6.7 0.7M298.2 411.4l3.6 0.6M310 411.5l3.3 0.6M321.9 411.8l4.2 0.8M373.1 412.1l3.6 0.8M384.8 411.7l4.6 0.8M397.9 412.2l5.9 0.7M430 412l4.1 0.5M443.7 411.6l5.8 0.8M243.3 417.3l3.3 0.8M269.9 417.3l6.5 0.9M302.8 416.9l4.1 0.5M374.8 416.7l4 0.6M388.8 417.5l3.9 0.8M401.2 416.8l3.9 0.6M414.1 417l6.7 0.8M434.1 416.9l6.9 0.9M465.8 416.7l6.2 0.5M234.9 422.3l5.6 0.8M249.7 422.7l5.4 0.8M336.5 422.4l5.3 0.6M352.3 422.3l6.9 0.6M405.9 422.3l3.3 0.9M459.5 422.6l5.1 0.8M246.6 428l5.9 0.7M262.2 427.4l4.5 0.7M305.6 427.4l4.7 0.4M318.1 428.1l3.5 0.5M359.2 427.7l5.7 0.9M394.5 427.6l6.2 0.5M275.4 433.1l4.9 0.8M308.8 432.9l6.7 0.5M344.1 432.7l4.9 0.8M357.5 433.1l5.6 0.8M372.8 433.4l5 0.6M414.9 433l6.3 0.7M445.2 433.5l5.1 0.8M479.2 432.8l4.3 0.8M243.9 438.1l4.9 0.8M282.5 438.8l4.2 0.5M305.3 438.2l2.7 0.6M417.5 438.7l6 0.5M467.7 438l6.3 0.8M284.5 443.4l3.7 0.5M297.2 444.1l5.6 0.7M367.1 443.7l7.2 0.7M396.3 444.2l4.1 0.8M337.4 449.1l6.8 0.6M396.7 449.5l5.8 0.7M415.1 449.4l5.1 0.8M238 454.1l7.3 0.8M258.3 454.1l7 0.9M291.3 454.1l3.1 0.7M314.4 454.9l6.5 0.9M332.3 454.2l5.7 0.6M379.9 454.9l2.9 0.5M402 454.3l6.1 0.7M241.9 459.6l3.3 0.8M356.4 460.1l5.3 0.7M373 459.9l3.9 0.7M386.2 459.8l3.2 0.5M449.7 460.3l6.6 0.5M466.1 460.3l4.2 0.9M479.3 459.7l4.9 0.7M241.4 465.6l3.1 0.8M254.1 465.5l6.1 0.7M298.8 464.8l5.6 0.6M314.5 465.6l4 0.5M351.7 465l6.6 0.6M399.1 465.3l4.6 0.7M412.9 465.2l6.1 0.5M429.2 465.5l6.2 0.5M447.6 465.6l7 0.7M268.2 470.6l4.4 0.6M281.1 470.4l4.8 0.7M308.8 470.9l7.1 0.7M386.8 470.8l4.8 0.7M451.2 471l6.5 0.8M322 476.1l6.8 0.5M386.9 476.1l5.1 0.7M422.9 476.4l2.6 0.6M447.7 475.6l3.3 0.5M475.4 476.3l6.9 0.8M252.6 481.2l3.1 0.6M312.2 481.3l4.4 0.6M394.4 481.5l4.1 0.7M408.9 481.5l3.5 0.7M422.6 480.9l5.7 0.7M235.3 486.9l2.6 0.6M245.7 486.2l2.6 0.9M268.6 486.6l5.1 0.6M325.4 486.7l4.5 0.6M339.9 487l3.9 0.9M354.8 486.4l2.9 0.8M364.1 486.3l3.7 0.5M377.2 486.5l4.4 0.6M444.3 486.6l5.8 0.7M280.1 492l5.3 0.7M296.4 492.1l4.6 0.9M310.8 491.8l4.4 0.8M324.6 491.8l7 0.5M358.8 492.2l3.6 0.8M384.9 491.9l3.7 0.9M398.7 491.5l4.2 0.7M446 491.5l5.6 0.7M481 492.3l3.4 0.7M235.1 497.2l4.3 0.7M278.3 496.9l4.6 0.5M290.9 497.7l2.9 0.5M301.3 497.3l6.5 0.5M318.2 497.1l3.8 0.7M330.2 497.7l5.2 1M346.6 496.9l4.9 0.6M373.5 497.7l2.9 0.7M385 496.8l3.6 0.8M444.9 496.9l6.9 0.7M463.2 497.7l4.1 0.8M477.1 496.9l5.7 0.8M266.7 502.7l4.7 0.8M281.3 502.8l2.6 0.7M307 502.6l5.1 1M335.2 503l5.6 1M395.3 502.6l6.8 0.6M414.4 502.6l3.6 0.6M458.8 502.6l3.6 0.9M470.9 503l2.7 0.6M479.8 502.3l6.2 0.7M272.6 507.9l4.9 0.8M286.8 508l5.6 0.5M313.2 507.7l2.9 0.8M424.6 508.1l5.4 0.5M441.8 508.3l5.9 0.8M457.7 508l4.3 0.8M259.6 513.8l6.1 0.7M276 513.3l6.5 0.6M322.1 513.3l4.5 0.9M336 513.8l5.7 0.6M353.7 512.9l4 0.9M366.8 513.1l3 0.6M395.3 513.4l4.2 0.6M409 513.4l5.5 0.9M424.8 513.2l3.2 0.6M240.4 518.9l6.1 0.7M314.5 518.5l2.4 0.6M372.6 518.5l5.6 0.5M420.3 518.3l5.6 0.6M438.2 518.9l4.7 0.7M468.4 518.7l6.5 0.8M245.8 524l5.4 0.6M306.5 523.8l6.5 0.5M337.6 524.4l6.7 0.6M355.2 523.8l4.4 0.8M369.7 523.7l5.7 0.5M408.6 524.3l3.7 0.9M420.7 524.5l5 0.8M235.3 529.5l4.2 0.7M295.3 529.5l6.7 0.4M314.7 529.9l3.4 0.4M325.6 529.3l4.1 0.6M338.6 529.1l2.9 0.5M380.5 528.9l4.6 0.9M396.4 529.5l3.1 0.6M409.6 529.8l4.1 0.9M425.1 529.9l3.4 0.9M436.1 529.7l5 0.9M451.8 529.4l3.9 0.8M314.5 534.5l5.8 0.7M330.5 534.8l4.6 0.5M358.2 534.4l4.5 0.5M372.3 534.3l4.3 0.7M398.1 534.9l2.9 0.7M428.9 534.9l2.5 0.6M476.8 535.2l3.5 0.9M275.5 539.8l6.4 0.9M325.2 540l5.5 0.6M342 540.5l5.5 0.7M376.5 540.4l5.3 0.9M441 540.5l3.4 0.5M466.4 539.7l7 0.8M272.1 545.1l5.2 0.8M344.2 545.8l5.5 0.6M373.3 545.3l3.8 0.7M429.7 545.9l7.1 0.8M448.6 545.9l4.1 0.8M462.8 545.4l5.1 0.6M301.9 551.3l3.7 0.5M368.5 550.4l7 0.5M431.7 551l3.9 0.9M471.3 550.8l4.4 0.7M252.2 555.9l4.6 0.6M279.3 556.5l3 0.9M290.3 556.5l7.2 0.5M347.3 556.5l3.1 0.8M371.9 556.3l7 1M420.8 556l3.9 0.8M249.2 561.3l6.8 0.7M303.6 561.7l3.5 0.5M347.3 561.4l3 0.7M359.2 561.6l6.4 0.7M386.5 561.5l3.7 1M399.4 561.7l4.8 0.7M412.9 561.5l3.8 0.5M425.8 561.8l4.2 0.5M250.3 566.5l3.1 0.6M262.7 566.8l7.1 1M280.5 567.1l4.2 0.7M293.3 567.2l7.1 0.9M311.3 567.3l3.2 0.4M322.2 566.4l7.2 0.6M365.8 567l6 1M381.9 567.2l4.8 0.9M442.3 566.6l4.2 1M454.1 567.2l3.9 0.7M466.3 566.6l4.6 0.8M257.3 572l5.5 0.6M304.8 572.5l2.8 0.7M317 571.7l3.1 0.6M328.8 571.7l5.3 0.6M360.7 572.6l7.2 0.8M379.3 571.8l4.7 0.8M394 572.1l7.3 0.6M426.9 572l3.9 0.9M450.6 571.8l7.1 0.5M469.7 572.1l5.5 0.7M238.5 577.4l4.7 0.7M252 577.1l3 0.6M263.4 577.8l6.4 0.9M320.9 577.6l6 0.7M352.1 577.8l3.3 0.8M363.8 577.8l3.4 0.7M375.4 577.7l6.1 1M390.8 577.9l2.6 0.9M441.2 577.8l2.6 0.8M451.7 577.7l4.5 0.5M465.6 577.3l6.8 0.6M294 582.5l3.1 0.9M307.6 582.7l3 0.7M361.7 582.5l5.1 0.9M416 582.8l6.1 0.5M261.1 588.4l2.3 0.5M270.3 587.9l2.8 0.5M291.8 588l5.8 0.9M306.4 588.3l5.8 0.9M323 588.2l4.8 0.6M350.4 588.6l6.1 0.7M415.7 588.1l7.1 0.7M301.2 594l3.3 0.7M329.6 593.2l4.6 0.6M343.1 593.6l2.8 0.5M403.2 594l2.4 0.6M235.1 599.1l4.1 0.7M249 599l6.5 0.9M266.9 598.6l4.7 0.6M281.2 598.9l3.9 0.7M328.6 599.1l5.3 0.7M354.3 599.1l3.6 0.8M380.9 598.9l4.7 0.5M396 598.8l4.8 0.6M410.8 598.7l6.3 0.8M427 599.2l2.6 0.7M436.4 599.3l5.3 0.7M460.8 599.3l4.7 0.9M474.6 599.2l3.7 0.9M259.8 604.6l3.2 0.7M285.9 604.8l3.6 0.8M325.7 603.8l5.7 0.9M341.6 603.8l2.4 0.7M353.5 604.5l5.9 0.9M390.5 604.5l5.3 1M407.1 604.4l6.3 0.4M425.7 604.3l4.1 0.6M440.1 604.5l4.2 0.8M454.7 604l5.5 0.8M265 609.3l6.1 0.6M293.8 609.9l5.1 0.6M348.9 610l4.7 0.7M364.5 609.9l6.2 0.8M393.8 609.2l5.7 0.6M245.6 615.3l4.7 0.9M261.2 615.5l4.1 0.4M313.8 614.9l4.4 0.9M431.7 615.1l7.1 0.7M449.8 615.4l4.4 0.7M477.1 614.8l2.9 0.6M247.4 620.7l4.1 0.7M261.7 620.2l5.9 0.9M288.6 620.1l3.8 0.8M300.2 620.3l6 0.8M343.1 620.1l4.9 0.9M358.8 620l3.4 0.9M371 620.4l4 0.5M418.3 620.5l3.1 0.8M471.9 620.6l3.5 0.8M309.2 626l4.5 0.8M341.4 626.1l3.6 0.7M367.4 625.3l2.7 0.8M377.9 625.8l3.4 0.5M389.9 625.7l6.2 0.6M421.2 626l6.7 0.8M438.8 626.1l4.1 0.8M450.8 626.1l5.9 0.7M466.1 626l6.4 0.9M270.6 631l3.3 0.9M302.7 631.4l7.1 0.9M378.3 631l3.2 0.6M392 631.3l7 0.9M411.4 631.1l2.6 0.9M421.6 631.2l4.5 0.5M437.1 631.3l2.6 0.6M448.8 631l5.4 0.6M465.4 631.2l6.8 0.9M244.2 636.8l5.1 0.7M258.8 636.1l2.4 0.8M303.9 636.8l6.3 0.8M331.8 636.2l4 0.9M364.6 636.4l4 0.4M394.7 636.7l6.6 0.8M423.4 636l3.4 0.6M451.1 636.5l4.8 0.5M255.7 641.9l5.5 0.7M270.1 642.1l5 0.5M313.1 642.1l6.3 0.7M351.5 641.4l5.6 0.8M379 642l3.5 0.6M406.3 641.7l3.4 0.8M418.4 641.3l5.8 0.6M435.6 641.4l5.3 0.6M450.8 641.3l3.9 0.9" stroke="#e2d9b3" stroke-width="0.9" stroke-opacity="0.7" fill="none" stroke-linecap="round"/>
<path d="M306.4 282.9l8.5 3M325.9 282.9l9.3 3M347.4 282.9l7.9 3M359.9 282.9l8.2 3M372.5 282.9l6 3M405.5 282.9l5.7 3M461.5 282.9l5.4 3M472.6 282.9l4.8 3M273.6 288.2l10.2 3M287.3 288.2l7.5 3M315.8 288.2l7.4 3M334.2 288.2l7.7 3M249.7 293.6l6.6 3M281 293.6l9.1 3M296.3 293.6l6.5 3M339.2 293.6l8.9 3M395.9 293.6l7.1 3M465.3 293.6l7.5 3M252.4 299l8.4 3M291.5 299l9.7 3M320.8 299l9.8 3M362.9 299l5.6 3M438.8 299l7.8 3M467.8 299l6.2 3M239.9 304.3l4.1 3M252 304.3l6.4 3M261.7 304.3l7.8 3M305.2 304.3l6.2 3M313.7 304.3l8.6 3M349.4 304.3l5.5 3M368.5 304.3l6.2 3M382.4 304.3l8.1 3M408.9 304.3l6.6 3M424.8 304.3l5.5 3M434.5 304.3l10.3 3M294.8 309.7l6.4 3M319.4 309.7l7.9 3M382.5 309.7l5.3 3M411 309.7l6.5 3M428.8 309.7l4.3 3M238.9 315l8.3 3M250.8 315l7.9 3M303.5 315l5.6 3M318.4 315l9.6 3M370 315l8.9 3M405.1 315l7 3M444.7 315l9.9 3M288.8 320.4l6.6 3M355.7 320.4l7.2 3M405.6 320.4l10.3 3M417.6 320.4l8.7 3M452.2 320.4l9.1 3M479.4 320.4l5.7 3M285.5 325.7l8.8 3M345 325.7l6.8 3M357.1 325.7l7.1 3M413.2 325.7l8.4 3M431.9 325.7l5.9 3M440.6 325.7l8.7 3M305.4 331.1l6.9 3M350.9 331.1l4.8 3M359.7 331.1l9.2 3M376.5 331.1l7.9 3M452.7 331.1l4.2 3M293.8 336.4l5.6 3M305.1 336.4l8.4 3M354.1 336.4l5.3 3M395.4 336.4l7.1 3M407.8 336.4l5.6 3M443.9 336.4l8.1 3M475.7 336.4l4.7 3M276 341.8l7.7 3M320.1 341.8l7.1 3M333.9 341.8l8.8 3M352.4 341.8l6.1 3M386.1 341.8l7.1 3M421.7 341.8l7.1 3M300.8 347.1l6.3 3M319.3 347.1l5.3 3M331.9 347.1l6.8 3M344.2 347.1l8.9 3M392 347.1l5.2 3M424.7 347.1l7.6 3M450.1 347.1l9 3M462.5 347.1l10.2 3M263.8 352.5l6.8 3M282.6 352.5l5.5 3M298.8 352.5l7.4 3M318.6 352.5l6.7 3M353.8 352.5l4.4 3M370.9 352.5l5.9 3M391.6 352.5l9.1 3M426.4 352.5l7.5 3M462.6 352.5l6.2 3M484.3 352.5l6.4 3M290.5 357.8l8 3M309.6 357.8l7.5 3M373.5 357.8l6.1 3M457 357.8l9.3 3M394.1 363.2l7.4 3M469.5 363.2l10 3M246.1 368.5l8.2 3M264.5 368.5l5.4 3M273.7 368.5l10.2 3M394.6 368.5l7.8 3M469.6 368.5l9.2 3M478.2 368.5l8.6 3M248.4 373.9l6.1 3M283.1 373.9l9 3M401.6 373.9l7.4 3M419.5 373.9l7.9 3M432 373.9l6.8 3M456.5 373.9l5 3M269.6 379.2l6.4 3M283.3 379.2l9.4 3M344.9 379.2l7 3M379.9 379.2l6.2 3M416.5 379.2l9.3 3M431.8 379.2l6.2 3M252.5 384.6l9.3 3M303.2 384.6l4.5 3M339.1 384.6l7.4 3M446 384.6l6.9 3M274.1 389.9l7.7 3M286.9 389.9l8.7 3M299.1 389.9l9.1 3M317.4 389.9l7.5 3M332.8 389.9l8.9 3M354.4 389.9l5.4 3M366.6 389.9l5 3M391.5 389.9l7.3 3M411.1 389.9l6.1 3M442 389.9l7.5 3M453.2 389.9l6.7 3M245.2 395.3l5 3M252.2 395.3l10.1 3M335.2 395.3l6.2 3M454.3 395.3l8.2 3M242.9 400.6l8.9 3M259.7 400.6l5.5 3M314.6 400.6l4.4 3M353 400.6l5.5 3M379.1 400.6l6.3 3M443.8 400.6l8.7 3M319.1 406l10.4 3M340 406l6.1 3M379 406l7.2 3M396.2 406l5 3M405.6 406l8.5 3M420.5 406l6.9 3M441.7 406l8.6 3M465.4 406l9.4 3M315.5 411.3l5.5 3M351.3 411.3l9 3M387.2 411.3l9.3 3M483.1 411.3l8.7 3M261.5 416.7l5.9 3M295.6 416.7l5.6 3M320.6 416.7l8.8 3M338.1 416.7l7.1 3M406.5 416.7l5.5 3M425.9 416.7l7.5 3M457.2 416.7l6.5 3M474.5 416.7l6.5 3M266 422l8.2 3M280.4 422l7.2 3M326.3 422l8.9 3M343.3 422l6.2 3M408.8 422l8 3M428.9 422l5.9 3M452.2 422l4.8 3M264.2 427.4l9.3 3M296.7 427.4l8 3M387.5 427.4l5.8 3M434.5 427.4l7.8 3M452.4 427.4l8.3 3M471.5 427.4l8 3M252.9 432.7l7.6 3M264.8 432.7l9.3 3M300 432.7l6.9 3M336.9 432.7l5.9 3M349.4 432.7l8.1 3M361.8 432.7l10 3M379 432.7l8.9 3M423.3 432.7l7.6 3M472.8 432.7l5.1 3M483.3 432.7l7.7 3M285.1 438.1l7.7 3M310.7 438.1l5.7 3M342.6 438.1l4.9 3M395.9 438.1l10.5 3M408.2 438.1l6.9 3M440.7 438.1l8.3 3M250.8 443.4l6 3M289.8 443.4l7 3M304.1 443.4l7.6 3M318.5 443.4l6 3M336.5 443.4l5.8 3M401.5 443.4l8 3M428.7 443.4l6.4 3M445.2 443.4l9.8 3M263.5 448.8l7.5 3M308.5 448.8l9.1 3M374.8 448.8l6.8 3M407 448.8l5.8 3M421.8 448.8l5.6 3M435.9 448.8l7.9 3M281.5 454.1l8.8 3M297 454.1l5 3M381.2 454.1l7.9 3M423.4 454.1l9 3M470.7 454.1l6.7 3M484.1 454.1l5.3 3M243 459.5l8.9 3M293.1 459.5l6.5 3M375.8 459.5l8.7 3M390.5 459.5l6.9 3M407.1 459.5l10.4 3M459 459.5l5.2 3M471.2 459.5l7.9 3M243.3 464.8l10.6 3M263.5 464.8l4.4 3M305.7 464.8l7.1 3M422.4 464.8l4.4 3M259.8 470.2l6.6 3M289.1 470.2l5.3 3M297.9 470.2l9.5 3M421 470.2l10.4 3M483.7 470.2l9.1 3M295.9 475.5l5.2 3M314 475.5l5.9 3M334.9 475.5l5.1 3M415.3 475.5l7.2 3M482.5 475.5l8.7 3M254.8 480.9l6.1 3M264.7 480.9l9.5 3M287.5 480.9l5.5 3M329.9 480.9l7.3 3M385.6 480.9l7.5 3M399 480.9l7.1 3M414.1 480.9l8 3M234.3 486.2l9.6 3M286.5 486.2l9.1 3M355.8 486.2l6.9 3M369.8 486.2l4.6 3M409.1 486.2l5.7 3M418 486.2l9.6 3M454.9 486.2l4.9 3M473 486.2l7.2 3M489 486.2l5.7 3M256 491.6l7.5 3M287.3 491.6l8.7 3M301.7 491.6l7.6 3M361.4 491.6l8.9 3M388.3 491.6l8.3 3M424 491.6l4.4 3M438.4 491.6l7.7 3M450.8 491.6l9.3 3M282.8 496.9l7.2 3M323.7 496.9l5.4 3M453.9 496.9l7.9 3M244.4 502.3l5.1 3M315.1 502.3l6.7 3M345.6 502.3l6.5 3M364.9 502.3l5.6 3M384.5 502.3l9 3M420.2 502.3l5.9 3M450 502.3l7.2 3M248.2 507.6l7.8 3M275.9 507.6l8.4 3M364.7 507.6l4.9 3M375.6 507.6l7.8 3M401.5 507.6l9.5 3M430.3 507.6l9.9 3M449.5 507.6l8.2 3M476 507.6l7.9 3M250.4 513l8.1 3M285.7 513l5.1 3M324.9 513l9.7 3M368.8 513l7.5 3M426.6 513l7.1 3M475.6 513l10.2 3M279.9 518.3l8.6 3M304.7 518.3l8.6 3M314.6 518.3l10.1 3M350.5 518.3l5.6 3M379.7 518.3l9.4 3M441.1 518.3l10.2 3M251.8 523.7l8.3 3M279.4 523.7l9 3M314.5 523.7l7.1 3M359.8 523.7l9.6 3M383.9 523.7l8.5 3M409.6 523.7l10 3M440.2 523.7l6.9 3M476 523.7l6.6 3M241.5 529l5.6 3M287.8 529l5.3 3M329.5 529l6.8 3M340.5 529l7.3 3M388.7 529l6.3 3M445 529l6.9 3M456 529l9.2 3M249.8 534.4l8.7 3M335.9 534.4l8.4 3M387.7 534.4l10.5 3M430.3 534.4l7.3 3M245.8 539.7l7.5 3M285.1 539.7l7.9 3M348.7 539.7l9.8 3M382.7 539.7l8.1 3M396.9 539.7l8.2 3M410.9 539.7l6.6 3M422 539.7l9.8 3M432.6 539.7l7.9 3M458.4 539.7l7 3M303.4 545.1l5 3M334.6 545.1l8.4 3M352.7 545.1l8.4 3M364 545.1l9 3M396.5 545.1l6.7 3M456.6 545.1l6.1 3M280.6 550.4l9.1 3M295.4 550.4l4.7 3M324.7 550.4l8.6 3M381.6 550.4l6 3M411.2 550.4l5.7 3M420.7 550.4l9.8 3M437.9 550.4l5.5 3M447.2 550.4l10.4 3M381.2 555.8l6.6 3M412.3 555.8l8.2 3M434.8 555.8l9.8 3M455.8 555.8l5.9 3M277.5 561.1l7.5 3M350.6 561.1l8 3M368.4 561.1l6 3M376.7 561.1l8.8 3M391.9 561.1l7.9 3M476.3 561.1l7 3M243.2 566.5l6.6 3M304.4 566.5l6.4 3M333 566.5l6.8 3M373.1 566.5l7.4 3M390.1 566.5l6.1 3M446.8 566.5l5.7 3M455.6 566.5l9.7 3M473.2 566.5l6.1 3M266.4 571.8l7.4 3M296.6 571.8l8.7 3M306.5 571.8l8.8 3M333.9 571.8l8.9 3M373.1 571.8l4.3 3M474.2 571.8l9.7 3M272.8 577.2l6.3 3M299.8 577.2l5.5 3M311.6 577.2l8.6 3M433.4 577.2l6.9 3M310.8 582.5l7.7 3M353.8 582.5l7.4 3M369.1 582.5l4.8 3M378.8 582.5l9.3 3M424.5 582.5l8.9 3M254.2 587.9l6.6 3M261.1 587.9l6.8 3M340.8 587.9l9 3M375 587.9l6.6 3M266.8 593.2l6.6 3M362.5 593.2l6.9 3M377.9 593.2l9.1 3M433.2 593.2l10.3 3M283.5 598.6l7.9 3M317.3 598.6l8.9 3M331.9 598.6l10.1 3M359.5 598.6l6.6 3M442.6 598.6l6.2 3M464.1 598.6l9 3M265 603.9l5.6 3M306.1 603.9l5.7 3M316.7 603.9l6.6 3M363 603.9l6.8 3M383.4 603.9l5 3M481.3 603.9l6.8 3M246.1 609.3l6.5 3M327 609.3l7.8 3M372.6 609.3l6.6 3M397.8 609.3l10.8 3M410.8 609.3l8.4 3M425.1 609.3l9.3 3M478.2 609.3l5.9 3M250.9 614.6l8.8 3M295 614.6l6.1 3M318.7 614.6l6.2 3M351.5 614.6l10 3M455.3 614.6l9.3 3M469.8 614.6l6.6 3M251.7 620l8 3M282.3 620l4.2 3M318.6 620l8.2 3M334.4 620l6.7 3M351.1 620l6.6 3M377.8 620l6.4 3M410.7 620l5.3 3M422.7 620l6.9 3M438.1 620l6.4 3M461.9 620l8.4 3M298.6 625.3l9.9 3M315.6 625.3l7.3 3M344.5 625.3l9.3 3M368.9 625.3l7.8 3M330.7 630.7l4.8 3M345.6 630.7l7.2 3M358.5 630.7l8.2 3M381.5 630.7l8.4 3M473.1 630.7l9.4 3M258.5 636l10.4 3M325.8 636l5.5 3M248.2 641.4l5.2 3M261.7 641.4l6.4 3M324 641.4l7.2 3M344.6 641.4l5.5 3M369.1 641.4l9.2 3M410.4 641.4l5.9 3M424.3 641.4l9.6 3M458 641.4l5 3M472.2 641.4l7 3M486 641.4l9.1 3" stroke="#66593f" stroke-width="1.5" stroke-opacity="0.7" fill="none" stroke-linecap="round"/>
<path d="M245.8 282.9l7.8 3M316.2 282.9l7.8 3M389 282.9l8.1 3M420.6 282.9l7 3M435.8 282.9l5.9 3M486.8 282.9l8.7 3M243.1 288.2l6.5 3M263.2 288.2l7.9 3M328 288.2l5.6 3M379.1 288.2l10.6 3M416.9 288.2l4.9 3M426.7 288.2l9.7 3M358.4 293.6l7 3M369.3 293.6l5.8 3M386.1 293.6l6.6 3M411.8 293.6l6.9 3M447.1 293.6l8.6 3M479.6 293.6l7.2 3M263 299l8.7 3M336.5 299l6.5 3M347.3 299l8.6 3M375.5 299l8.6 3M411 299l7.6 3M425.3 299l9.2 3M458.8 299l5.1 3M481.9 299l10 3M274.2 304.3l9.1 3M335.8 304.3l6.1 3M449.5 304.3l6.1 3M460.1 304.3l9.7 3M478.5 304.3l6.2 3M253.1 309.7l8.8 3M303.3 309.7l9.6 3M394.1 309.7l9.5 3M444.6 309.7l8.3 3M457 309.7l7.9 3M478.3 309.7l8.6 3M268.5 315l10.1 3M333 315l8.9 3M382 315l7 3M390 315l8.8 3M420.6 315l9.3 3M433.3 315l9.9 3M475.3 315l7.6 3M242.7 320.4l8.7 3M256.3 320.4l9 3M273.2 320.4l5.7 3M302.7 320.4l7 3M319.2 320.4l4.6 3M270.4 325.7l8.5 3M299.2 325.7l8.4 3M321.2 325.7l5.3 3M330.1 325.7l7.4 3M388.1 325.7l4.8 3M402.4 325.7l9.3 3M455 325.7l7.9 3M255.3 331.1l5.8 3M268 331.1l8.4 3M286.8 331.1l6.8 3M323.1 331.1l10.3 3M408.7 331.1l6.9 3M420.7 331.1l9.4 3M464.8 331.1l7.6 3M478 331.1l9.1 3M267.6 336.4l6.7 3M317.6 336.4l8.1 3M364.7 336.4l7.2 3M424 336.4l5.8 3M436.4 336.4l5.7 3M253.6 341.8l6.1 3M262.8 341.8l7.1 3M404.6 341.8l6.4 3M454 341.8l10.4 3M487 341.8l8.7 3M272.1 347.1l7.3 3M286.4 347.1l7.9 3M379 347.1l5.8 3M438.6 347.1l8.3 3M481.6 347.1l9.7 3M334.2 352.5l6.5 3M378.9 352.5l10.8 3M442.1 352.5l9.1 3M470.1 352.5l7.9 3M249.1 357.8l7.8 3M274.2 357.8l8.1 3M325.7 357.8l6.4 3M341.2 357.8l6.7 3M359.1 357.8l5.8 3M390.6 357.8l6.2 3M473.9 357.8l9 3M257.2 363.2l4.4 3M273.1 363.2l5.7 3M291 363.2l6.9 3M303.1 363.2l6.4 3M312.5 363.2l8.6 3M366.1 363.2l4.2 3M438 363.2l10.1 3M454.8 363.2l6.2 3M303.4 368.5l9.1 3M345.6 368.5l8.3 3M363.2 368.5l5.8 3M376.7 368.5l7.3 3M410.9 368.5l8.8 3M442.8 368.5l6.9 3M454.7 368.5l6 3M267.9 373.9l6.3 3M331.8 373.9l6.1 3M341.3 373.9l6.5 3M357.5 373.9l8 3M463.8 373.9l8 3M478.2 373.9l8 3M236.9 379.2l8.1 3M311.6 379.2l8.6 3M356 379.2l7 3M364.9 379.2l9.1 3M466.2 379.2l9.2 3M314.5 384.6l8 3M323.9 384.6l8 3M408.6 384.6l8.9 3M429.4 384.6l5.5 3M476.3 384.6l9.6 3M248 389.9l4.2 3M263 389.9l5.4 3M430.2 389.9l5.9 3M470.8 389.9l8.4 3M486.7 389.9l8.8 3M264.3 395.3l9.2 3M284.9 395.3l7.4 3M315.2 395.3l9.2 3M373 395.3l7.4 3M385.7 395.3l10 3M410.8 395.3l8.1 3M427.7 395.3l7.3 3M473 395.3l7 3M481.8 395.3l8.7 3M319.4 400.6l8.8 3M364.3 400.6l6.3 3M391.3 400.6l9.4 3M413.7 400.6l7.1 3M432 400.6l5.3 3M460.3 400.6l6.5 3M475.9 400.6l5.9 3M262.7 406l6.1 3M279 406l6.1 3M291.1 406l5.4 3M301.7 406l10.3 3M351.3 406l8 3M363.9 406l9.2 3M458 406l5 3M477.3 406l8.7 3M259.8 411.3l7.3 3M287.8 411.3l9.5 3M304.4 411.3l5.6 3M340.3 411.3l7.8 3M365.2 411.3l6.4 3M435.9 411.3l7.8 3M449.7 411.3l8.2 3M464.8 411.3l7.8 3M248.8 416.7l5.8 3M367.8 416.7l6.8 3M379 416.7l9.3 3M394.6 416.7l4.8 3M443.6 416.7l6.9 3M255.1 422l8.4 3M311.6 422l5.4 3M397.4 422l6.7 3M439.1 422l6.4 3M482.3 422l6.9 3M255.5 427.4l5.4 3M310.3 427.4l7.3 3M335.9 427.4l6.1 3M353 427.4l4.5 3M368 427.4l5.8 3M402 427.4l10.4 3M279.2 432.7l10 3M450.1 432.7l7.9 3M250.2 438.1l9.4 3M273.3 438.1l7.8 3M325 438.1l9.5 3M358.3 438.1l7.7 3M372 438.1l7.8 3M383.5 438.1l9.6 3M423.6 438.1l8.2 3M473.9 438.1l8.2 3M345.1 443.4l7.8 3M378.6 443.4l6 3M389.8 443.4l5.3 3M414.4 443.4l8.5 3M483.7 443.4l5.6 3M251.1 448.8l8.6 3M330.7 448.8l5.7 3M360.7 448.8l4.9 3M477.1 448.8l4.5 3M266.9 454.1l7.1 3M306.3 454.1l6.4 3M324.3 454.1l7.1 3M408.9 454.1l9.1 3M454.5 454.1l4.6 3M260.7 459.5l7.8 3M280.7 459.5l4.7 3M319.6 459.5l6.2 3M328.9 459.5l8.8 3M347.4 459.5l7.2 3M364.6 459.5l7.6 3M421.1 459.5l9.5 3M438.9 459.5l9.5 3M486.8 459.5l7.7 3M276.3 464.8l7.6 3M315.3 464.8l10.4 3M333.1 464.8l6.8 3M343.2 464.8l7.7 3M376.1 464.8l7.4 3M389.6 464.8l8.7 3M402.2 464.8l8.9 3M456.5 464.8l7.8 3M471.2 464.8l9.1 3M485 464.8l6.1 3M270 470.2l10.7 3M318.6 470.2l6.2 3M332.9 470.2l5.8 3M360 470.2l7.6 3M378.8 470.2l7.2 3M393 470.2l5.3 3M401.9 470.2l10 3M460 470.2l7 3M467.4 470.2l10 3M277.4 475.5l8.5 3M378.4 475.5l7.9 3M398.2 475.5l9.7 3M440.3 475.5l7.8 3M449.5 475.5l7.4 3M465 475.5l8.7 3M243.5 480.9l8.4 3M344.7 480.9l8 3M358.5 480.9l7.2 3M372.5 480.9l7.3 3M429.2 480.9l10 3M451.5 480.9l7.2 3M276.2 486.2l6.5 3M305.2 486.2l8.6 3M316 486.2l7.9 3M329.5 486.2l9.9 3M345.3 486.2l7.1 3M378.7 486.2l10.4 3M391.3 486.2l7.6 3M434 486.2l8.3 3M460.8 486.2l8.8 3M271.6 491.6l8.7 3M315.9 491.6l8.2 3M334.9 491.6l8.2 3M351.7 491.6l7.1 3M374.4 491.6l8.4 3M404.2 491.6l6.2 3M471.8 491.6l8.7 3M484.5 491.6l7.1 3M250.4 496.9l8.3 3M271.9 496.9l4.9 3M290.8 496.9l9.2 3M310.2 496.9l6.2 3M367.2 496.9l5.5 3M377.9 496.9l6.3 3M386.3 496.9l9.1 3M405.4 496.9l4.4 3M422.6 496.9l6.5 3M435.1 496.9l7.9 3M469.6 496.9l6.5 3M273 502.3l7.7 3M282.9 502.3l8.6 3M297.8 502.3l8.3 3M434.9 502.3l6 3M462.9 502.3l7.7 3M264.8 507.6l6.2 3M293.3 507.6l7.1 3M317.2 507.6l6.4 3M332.8 507.6l5.6 3M347.3 507.6l6.3 3M385.8 507.6l9.9 3M265 513l9.6 3M414.2 513l8.7 3M267.8 518.3l6.8 3M338.1 518.3l5.9 3M411.9 518.3l7.3 3M428.6 518.3l7.5 3M460.9 518.3l6.8 3M475.2 518.3l9.8 3M265.1 523.7l9.3 3M299.2 523.7l6.8 3M331.7 523.7l5.9 3M348.5 523.7l6.9 3M375.2 523.7l9.4 3M460.1 523.7l5.5 3M305.1 529l7.3 3M371.6 529l7.1 3M425.2 529l10.1 3M473.1 529l6.7 3M487.3 529l7.1 3M235.4 534.4l8.9 3M263.2 534.4l8 3M290.6 534.4l6.3 3M323.2 534.4l6.2 3M363 534.4l7.2 3M377.4 534.4l8.7 3M452 534.4l5.5 3M469.7 534.4l7.1 3M481.4 534.4l6 3M266.9 539.7l6.4 3M300.6 539.7l6 3M316 539.7l8.2 3M331.3 539.7l8.8 3M445.3 539.7l6.1 3M241.5 545.1l9.4 3M264.5 545.1l6.3 3M280.5 545.1l7.6 3M291.8 545.1l7 3M314 545.1l9.2 3M420.5 545.1l7.9 3M440.6 545.1l6.2 3M488.6 545.1l5.3 3M247.4 550.4l10.5 3M304.1 550.4l10 3M343.6 550.4l6.3 3M394.5 550.4l8.8 3M464 550.4l6.2 3M257.6 555.8l7.1 3M268.3 555.8l8.8 3M282.3 555.8l5.9 3M300 555.8l7.7 3M319.4 555.8l5.9 3M340.1 555.8l5.8 3M349.7 555.8l8 3M360.8 555.8l8.8 3M395.3 555.8l8.9 3M424.2 555.8l7.6 3M239.2 561.1l9.6 3M256.8 561.1l10 3M292.9 561.1l9.3 3M307.8 561.1l9.1 3M326.1 561.1l6.8 3M404 561.1l8.4 3M415.4 561.1l8.6 3M444.4 561.1l4.8 3M274.7 566.5l5.5 3M284.9 566.5l7.4 3M311.9 566.5l9.1 3M348.3 566.5l6.2 3M399.1 566.5l8.7 3M275.5 571.8l8 3M352.4 571.8l7.3 3M385.3 571.8l7.5 3M404.7 571.8l8.9 3M418.6 571.8l7.6 3M432.4 571.8l6.1 3M439.9 571.8l9.6 3M461.1 571.8l7.6 3M243.7 577.2l6.6 3M328.7 577.2l9 3M365.2 577.2l8.3 3M380.6 577.2l8.6 3M392 577.2l7.9 3M415.2 577.2l6.1 3M254.9 582.5l7.8 3M270.5 582.5l5.3 3M287.5 582.5l4.7 3M297.4 582.5l8.2 3M341.9 582.5l7.6 3M394.7 582.5l8.4 3M407 582.5l9.2 3M455.9 582.5l7.4 3M474.6 582.5l6.4 3M283.3 587.9l9 3M298.8 587.9l7.8 3M316.7 587.9l5.3 3M328.1 587.9l9 3M360.9 587.9l5.6 3M391.2 587.9l7.3 3M425.8 587.9l8.2 3M451.8 587.9l7.4 3M471.6 587.9l6.2 3M483.4 587.9l8 3M252.1 593.2l5.3 3M281.8 593.2l8.4 3M304.7 593.2l5.9 3M322.3 593.2l5.1 3M335.2 593.2l7.5 3M391.3 593.2l10.4 3M419.6 593.2l5.1 3M466.2 593.2l7.1 3M238.7 598.6l8.2 3M257 598.6l7.1 3M299.2 598.6l7.9 3M343.5 598.6l9.7 3M388.4 598.6l5.8 3M453.8 598.6l5.7 3M279.3 603.9l5.3 3M347 603.9l5.8 3M395.5 603.9l10.6 3M419.2 603.9l6.1 3M447.3 603.9l5.6 3M459.7 603.9l9.9 3M257.8 609.3l6.4 3M274.1 609.3l6.8 3M299.5 609.3l8.8 3M340.4 609.3l7.3 3M382.5 609.3l10.7 3M464.5 609.3l7.8 3M277.8 614.6l5.8 3M392.3 614.6l7.7 3M406.5 614.6l9.7 3M440.9 614.6l6.5 3M478.7 614.6l7.5 3M310.9 620l6.8 3M393.4 620l9.9 3M451.9 620l5.5 3M476.2 620l7.6 3M250.4 625.3l7.8 3M331.5 625.3l7.6 3M398.1 625.3l7.1 3M412 625.3l7 3M431.7 625.3l6 3M444.3 625.3l5.2 3M458 625.3l6.5 3M247.6 630.7l5.9 3M262.3 630.7l7.7 3M273.5 630.7l8.2 3M312 630.7l8.1 3M367.8 630.7l9.6 3M404.2 630.7l6.1 3M428 630.7l7.1 3M437.1 630.7l9.2 3M250.9 636l6.8 3M279.2 636l7.4 3M293.9 636l8.9 3M313.7 636l5.8 3M337.6 636l6.5 3M355.9 636l6.5 3M369.5 636l8.4 3M386.1 636l7.4 3M416.3 636l7.4 3M425.9 636l10.1 3M458.6 636l7.4 3M473.2 636l7.4 3M276 641.4l7.2 3M293.4 641.4l4.3 3M304.8 641.4l7.3 3M358.9 641.4l6.9 3M384 641.4l5.5 3M398.6 641.4l6.7 3M441.7 641.4l6.7 3" stroke="#5d5139" stroke-width="1.5" stroke-opacity="0.7" fill="none" stroke-linecap="round"/>
<path d="M388.5 291.5l7.7 0M341.8 302.2l3.6 0M323.2 307.5l3.6 0M235.9 323.6l5.9 0M385.2 334.3l6 0M470.5 334.3l5.9 0M325.7 339.6l6.6 0M477.7 355.7l5.9 0M234.5 377.1l3.5 0M395.5 398.5l5.7 0M372.2 409.2l3.3 0M280.6 414.5l3 0M241.8 419.9l4.7 0M254.4 419.9l3.8 0M330.8 457.3l4.1 0M326 462.7l6.9 0M397.6 468l6.8 0M464.2 468l7.8 0M239.8 473.4l5.2 0M399.1 478.7l6.8 0M409 494.8l4.5 0M459.9 494.8l4.7 0M233.6 500.1l3.9 0M440.9 505.5l7.3 0M470.2 510.8l3.6 0M418.8 521.5l6.6 0M408.1 532.2l5.8 0M450.3 532.2l4.2 0M370.8 537.6l3.2 0M464.9 542.9l7.8 0M461.3 548.3l3.6 0M279 569.7l7 0M394.5 601.8l7 0M418.1 612.5l3.3 0M352.3 628.5l4.2 0M320 633.9l5 0M390.5 633.9l6.7 0M409.9 633.9l4.7 0M240.8 644.6l3.1 0" stroke="#eeeee6" stroke-width="0.9" stroke-opacity="0.8" fill="none" stroke-linecap="round"/>
<path d="M245 286.5l240 0M245 291.9l240 0M245 297.2l240 0M245 302.6l240 0M245 307.9l240 0M245 313.3l240 0M245 318.6l240 0M245 324l240 0M245 329.3l240 0M245 334.7l240 0M245 340l240 0M245 345.4l240 0M245 350.7l240 0M245 356.1l240 0M245 361.4l240 0M245 366.8l240 0M245 372.1l240 0M245 377.5l240 0M245 382.8l240 0M245 388.2l240 0M245 393.5l240 0M245 398.9l240 0M245 404.2l240 0M245 409.6l240 0M245 414.9l240 0M245 420.3l240 0M245 425.6l240 0M245 431l240 0M245 436.3l240 0M245 441.7l240 0M245 447l240 0M245 452.4l240 0M245 457.7l240 0M245 463.1l240 0M245 468.4l240 0M245 473.8l240 0M245 479.1l240 0M245 484.5l240 0M245 489.8l240 0M245 495.2l240 0M245 500.5l240 0M245 505.9l240 0M245 511.2l240 0M245 516.6l240 0M245 521.9l240 0M245 527.3l240 0M245 532.6l240 0M245 538l240 0M245 543.3l240 0M245 548.7l240 0M245 554l240 0M245 559.4l240 0M245 564.7l240 0M245 570.1l240 0M245 575.4l240 0M245 580.8l240 0M245 586.1l240 0M245 591.5l240 0M245 596.8l240 0M245 602.2l240 0M245 607.5l240 0M245 612.9l240 0M245 618.2l240 0M245 623.6l240 0M245 628.9l240 0M245 634.3l240 0M245 639.6l240 0M245 645l240 0" stroke="#62563f" stroke-width="0.9" stroke-opacity="0.55" fill="none" stroke-linecap="butt"/>
</g>
<path d="M300.0,296.0C306.4,290.9 309.2,290.1 315.0,288.0C320.8,285.9 328.8,283.8 335.0,283.5C341.2,283.2 347.5,284.8 352.0,286.0C356.5,287.2 359.3,289.6 362.0,291.0C364.7,292.4 365.7,294.7 368.0,294.5C370.3,294.3 373.0,291.5 376.0,290.0C379.0,288.5 381.8,286.6 386.0,285.5C390.2,284.4 396.0,283.6 401.0,283.5C406.0,283.4 411.2,283.9 416.0,285.0C420.8,286.1 425.7,287.8 430.0,290.0C434.3,292.2 437.6,293.2 442.0,298.0C446.4,302.8 453.7,311.1 456.5,318.6C459.3,326.1 458.2,334.9 459.0,343.0C459.8,351.1 460.8,358.9 461.3,367.0C461.8,375.1 461.1,383.0 462.0,391.7C462.9,400.4 465.5,407.9 467.0,419.0C468.5,430.1 469.6,443.1 470.9,458.0C472.2,472.9 473.9,497.4 474.8,508.6C475.7,519.8 476.0,519.6 476.0,525.0C476.0,530.4 476.5,535.2 475.0,541.0C473.5,546.8 471.4,553.5 467.0,560.0C462.6,566.5 454.7,573.3 448.5,580.0C442.3,586.7 437.1,593.3 430.0,600.0C422.9,606.7 413.0,614.3 406.0,620.0C399.0,625.7 395.0,630.4 388.0,634.0C381.0,637.6 370.7,641.3 364.0,641.5C357.3,641.7 353.7,638.6 348.0,635.0C342.3,631.4 336.6,625.8 330.0,620.0C323.4,614.2 315.9,606.7 308.6,600.0C301.3,593.3 293.1,586.7 286.0,580.0C278.9,573.3 270.8,566.5 266.0,560.0C261.2,553.5 258.7,547.7 257.0,541.0C255.3,534.3 255.5,530.6 255.6,520.0C255.7,509.4 256.2,491.0 257.5,477.4C258.8,463.8 261.1,452.7 263.4,438.4C265.6,424.1 269.6,403.6 271.0,391.7C272.4,379.8 271.7,375.1 272.0,367.0C272.3,358.9 272.2,351.1 273.0,343.0C273.8,334.9 272.2,326.4 276.7,318.6C281.2,310.8 293.6,301.1 300.0,296.0Z" fill="none" stroke="#4f4434" stroke-width="10" stroke-opacity="0.4" filter="url(#blur3)"/>
</g>
<path d="M260.0,91.0C258.0,90.7 258.7,91.3 254.0,95.0C249.3,98.7 238.4,107.8 231.7,113.3C225.0,118.8 218.9,122.9 213.8,127.7C208.7,132.5 205.8,136.9 201.3,142.0C196.8,147.1 191.4,152.5 186.9,158.2C182.4,163.9 177.6,171.6 174.3,176.1C171.0,180.6 169.9,181.7 167.2,185.0C164.5,188.3 155.0,191.3 158.0,196.0C161.0,200.7 180.7,211.8 185.0,213.0C189.3,214.2 183.9,206.5 184.0,203.0C184.1,199.5 184.4,195.3 185.5,192.0C186.6,188.7 187.6,187.5 190.5,183.3C193.4,179.1 198.5,172.7 203.0,167.0C207.5,161.3 212.6,154.9 217.4,149.2C222.2,143.5 226.9,137.8 231.7,133.0C236.5,128.2 240.4,125.3 246.0,120.5C251.6,115.7 261.7,107.9 265.0,104.0C268.3,100.1 266.8,99.2 266.0,97.0C265.2,94.8 262.0,91.3 260.0,91.0Z" fill="#857b5c"/>
<clipPath id="c379327"><path d="M260.0,91.0C258.0,90.7 258.7,91.3 254.0,95.0C249.3,98.7 238.4,107.8 231.7,113.3C225.0,118.8 218.9,122.9 213.8,127.7C208.7,132.5 205.8,136.9 201.3,142.0C196.8,147.1 191.4,152.5 186.9,158.2C182.4,163.9 177.6,171.6 174.3,176.1C171.0,180.6 169.9,181.7 167.2,185.0C164.5,188.3 155.0,191.3 158.0,196.0C161.0,200.7 180.7,211.8 185.0,213.0C189.3,214.2 183.9,206.5 184.0,203.0C184.1,199.5 184.4,195.3 185.5,192.0C186.6,188.7 187.6,187.5 190.5,183.3C193.4,179.1 198.5,172.7 203.0,167.0C207.5,161.3 212.6,154.9 217.4,149.2C222.2,143.5 226.9,137.8 231.7,133.0C236.5,128.2 240.4,125.3 246.0,120.5C251.6,115.7 261.7,107.9 265.0,104.0C268.3,100.1 266.8,99.2 266.0,97.0C265.2,94.8 262.0,91.3 260.0,91.0Z"/></clipPath>
<g clip-path="url(#c379327)"><path d="M259.9 91.1l5.7 0.1M257.2 91.9l8 2.1M255.3 92.6l10.9 3M252.8 95.5l14 4.4M251.4 97l15.1 4.6M250.1 96.9l16 5.9M249.5 98.3l15.8 5.7M247.8 99.2l17.1 6M246 101l16.5 5.5M245.6 102.1l16 6.2M242.6 104l17.6 5.4M241.4 104.4l17.6 6.6M238.3 107.6l16.6 5.6M237.1 108l16.4 6.5M235.3 110l15.9 6.4M231.2 114.2l16.5 5.7M229.5 114.7l17 5.7M228.9 115.5l16.4 6.1M228 116.8l16.3 5.8M226.7 116.9l16.4 6.3M223.8 118.5l17.7 7.1M222.3 120.9l17.1 6.7M220.6 121.1l16.6 6.4M219.4 122.3l17.7 6.3M218.5 123l17.1 7M215.3 126.4l17.3 6.2M214.1 126.9l17.4 7.3M209.8 131.3l18.2 6.4M206.5 135l17.3 7.1M205.6 136.6l17.7 6.6M205.3 137.8l17.2 6.6M203.2 139.2l17.2 7.6M201.4 142.2l16.8 6.3M198 144.9l17.8 7.4M193.3 149.8l17.3 7.6M188.8 155.2l17.2 7.6M185.6 160l17.6 8M182.3 164.8l17.9 7.9M181 165.1l17.4 7.7M180.3 166.4l17.1 8M179.9 168.1l17.7 7.1M179 168.7l16.7 8M175.2 173.8l17.1 6.8M175.1 174.9l16.3 7.2M173.7 176.2l17.2 7.1M172.3 177.2l17.5 7.2M172 178.8l16.9 7.4M169.9 180.7l17.7 6.9M167.4 183.6l18 8.2M167.3 185.4l18.9 7.8M165.7 186.4l20 8.8M163.1 189.5l21.8 9.7M161.4 190l22.7 10.8M161.5 191.4l22.8 10.6M158.5 194.9l26 10.9" stroke="#6e6649" stroke-width="1.5" fill="none" stroke-linecap="round"/>
<path d="M258.3 92l7.2 0.7M254.5 93.8l11.7 3.3M253.9 94.9l12.8 4.1M247 100.1l16.7 5.3M243.6 102.4l16.8 6.5M241.1 105.6l15.5 5.7M239.3 106.3l16.4 5.7M236.8 108.9l16.2 6.2M234.2 110.6l16.6 6M232.7 112.2l16.8 5.9M232.6 113l15.6 5.6M224.9 117.8l17 6.6M223.6 120.3l16.4 5.5M217.1 124.3l18.1 6.4M216.4 125.2l17.4 6.9M213.2 128l17.1 7.2M212.8 128.9l16.5 6.9M210.6 129.5l18.1 7.8M209 132.6l17.6 6.8M207.9 133l17.6 7.5M207.2 133.8l17.9 7.7M203.7 138.2l17.3 6.9M202.2 141l17.3 6.8M199.9 143.1l18.1 6.9M199.1 143.8l17.6 7M197.4 146l16.9 6.7M196.4 147.2l17.8 7.6M195.1 148.4l17 7.1M194.5 149.5l17.1 6.4M192.1 151.3l18.3 7.2M190.9 152.2l18.1 7.4M190.6 153.7l17.9 7.1M189 154.5l17.9 7M187.9 156.3l17.9 8.4M187.4 157.5l17.5 8.3M186.4 159.2l17.5 7.1M184.1 161l17.4 7.1M183.5 161.9l18.3 7.8M182.7 163.2l17.6 7.9M177.5 169.9l17 7.4M177.1 172l17.6 7.2M175.8 172.9l17.6 7.2M171.8 179.1l16.7 7.5M169.8 181.8l17.1 7.7M168.5 182.9l17.9 7.8M165.2 187.2l19.2 9.4M164 188.4l20.5 9.4M160.4 193.1l23.4 9.6M159.6 193.7l24.6 10.7M157.1 195.4l28 12.4" stroke="#666043" stroke-width="1.5" fill="none" stroke-linecap="round"/>
<path d="M260.2 90.9l3.8 0.6M257.7 92.2l6.8 1.7M255.9 94.8l9.7 2.2M253.7 96.1l11 3M252.3 97.3l12.9 3.7M252.5 98.2l11.6 3.8M251.2 98.8l13.5 4.5M247.4 103l13.3 4.2M243.9 105l14 5M243.3 105.9l12.4 5.5M239.7 107.8l14 5M239.1 108.6l14 5.6M237.4 110.6l13.5 4.9M235 112.3l12.2 4.5M233.6 113.3l12.4 5M233 114.7l13.2 5.1M229.9 115.9l13.5 4.7M229.7 116.9l12 4.8M227.1 117.9l15 5.1M226.7 118.1l13.2 5.2M223.6 121.9l13.2 4.2M221.7 121.9l14.9 5.8M221.9 123l13.9 5.7M219.9 123.4l13.7 5.7M217.6 125.4l14.6 6M216.5 126.4l14.3 5.8M216.4 128.1l13.9 5.3M213.9 129.7l13.6 5.1M210 132.4l15.1 6M206.3 137.8l14.4 6M202.6 143.8l12.5 5.5M200.4 145.9l13.1 5.3M196.7 150.4l12.7 5.1M195.9 151.1l12.5 5.7M193.6 151.9l15 5.8M191.8 154.1l14.8 6.7M189.8 157.2l13.5 6.5M186.5 160.4l14.8 6.5M185.9 163.4l13.5 5M183.7 164.1l15.3 5.6M182 167.2l13.2 6.5M180.9 168.2l15 6.9M178.7 172.1l14.5 6.4M177 174.4l13.5 5.8M176.5 175.9l13.4 5.8M172.1 181.4l14.8 6.1M170.6 183.9l14.2 5.7M169.5 184.7l14.6 7.1M168.4 185.6l15.3 7.4M165.6 187.6l17.2 8.1M165.2 190.5l18.1 8.5M162.6 195.1l18.8 8.4M159.9 196.5l21.3 9.8" stroke="#827957" stroke-width="1.3" fill="none" stroke-linecap="round"/>
<path d="M259.7 91.6l4.8 1.6M257.3 93.5l7.9 2.2M255.4 95.8l10.5 1.8M250.1 100.1l13.2 4.3M249.5 100.8l11.9 4.1M247.7 101.3l14.1 4.8M245.7 103.5l14.1 4.6M243.8 104.2l14.4 5M240.7 107.2l13.3 4.4M237.8 109.8l14.4 5.3M236.1 111.5l13.3 4.5M232.1 115.3l12.8 4.9M226.2 119.9l12.7 4M224.7 120.3l13.5 5.4M219 125.2l14.1 5.3M214.8 128.6l14.1 5.7M212.1 130.6l14.4 5.4M211.3 131.1l13.4 5.8M209.9 134l13.7 4.9M208.8 134.6l14.1 6.2M207.2 135.4l16 6M206 136.5l14.6 5.8M205.9 138.9l13.7 6.5M204.9 140l13.4 6.5M204.3 141.5l12.9 5.2M202.8 142.4l13.1 5.3M200.4 145l15.1 5.1M199.3 146.5l12.6 5.7M197.8 147.8l13.8 5.3M197.1 149.2l14.3 5.5M193.7 152.9l13.3 6.4M190.8 155.1l15.5 6.2M190 155.7l13.9 6.2M188.8 158.7l14.4 5.6M186.5 159.3l16.1 6.6M185.8 162.1l13.8 5.6M183.7 165.3l14.3 5.8M182.7 166.4l13.8 5.5M180.9 170.5l14.1 5.7M179.3 170.8l12.8 5.7M178.9 173.7l13.5 6M175 176.9l13.3 5.8M174.7 178l12.6 6M174.5 179.6l13.3 5.8M172.3 180l14.5 6.1M171.5 182.4l13.5 6.6M167.4 186.5l15.6 7M166.7 189.4l16.6 7.9M164 191.3l18.2 8.5M162.6 192.4l20.2 8.3M162.4 193.8l19.6 8M162.1 196.3l20.8 8.7" stroke="#897f5d" stroke-width="1.3" fill="none" stroke-linecap="round"/>
<path d="M259.3 92.3l4.8 1.2M256.4 94.2l7 2.6M252.5 99.7l9.7 2.5M250 102.5l8.8 3.1M247.4 103.8l10.6 3.8M241.9 108.6l9.3 3.3M241 109.3l9.8 3.6M238.9 109.9l10.2 3.7M238.8 111l10.2 3.9M238.4 112l9.1 3.2M235.5 112.9l10.8 3.7M235.6 114l9.5 3.4M232.5 116.6l10.1 3.8M228 119.3l9.5 3.2M227.2 119.7l9.4 4.2M224.1 123.2l9.5 3.7M221.9 125.1l10.3 3.8M220.7 125.7l9.8 3.8M220.1 126.2l10.6 4.6M218.5 127.1l10.6 3.9M215.9 129.4l11.5 4.3M215 131.6l9.8 3.7M212.1 133.6l11.6 4.6M207.8 139.1l10.8 4.2M206.7 141.7l10.1 4M202.9 144.3l10.7 3.7M200 148.7l10.2 3.9M196.7 151.1l11.1 5.2M195.4 154.1l9.9 4M194.8 155.2l10.5 4.2M192.9 155.9l11.7 4.7M189.2 160l11.7 5M188.4 162.6l9.2 4.8M186.5 163.2l10.4 4.7M185.4 165.5l10.7 5.3M184.9 166.6l10.1 4.9M184.7 168.6l9.4 4.5M181.2 173l9.7 4.9M178 176.7l11.2 4.4M176.5 177.4l9.9 4M175.5 178.4l11.5 5M172.9 184.9l10 4.4M170.5 184.8l12.8 5.4M169.9 186.1l12.1 5.6M169 189.1l12.9 5.9M167.1 191l12.4 6M164.3 195.3l16.3 8" stroke="#978d68" stroke-width="1.2" fill="none" stroke-linecap="round"/>
<path d="M261 91.5l3 0.3M260.1 91.4l3.8 1.2M258.1 94.1l5.9 1.1M256.4 95.7l7.9 1.7M255.9 96.3l8.4 3.1M255 97.6l8.1 2.9M253.3 98.3l10.1 3.2M250.8 100.6l11.5 3.2M249.9 101.6l10.7 2.9M249.1 103.4l8.4 3.2M245.2 104.8l11.9 4.2M244.4 105.5l11.4 4.5M243.5 106.5l10.5 4.2M242.6 107.4l9.8 3.6M234.1 115.2l10.1 3.3M233 115.5l10.2 3.6M230.1 116.9l11.3 4.4M229.1 118.2l10.6 3.7M227.3 120.9l8 3.6M225.3 122.1l9.3 3.5M223.1 123.5l9.9 3.7M217 128.2l11.2 4.1M216.3 130l9.2 4M213.9 132.3l10.7 5M211.8 134l9.7 4.8M211 135.8l10.4 3.8M210.7 137l10 4.2M209.4 137.9l10.2 3.9M208 140.4l9.1 3.6M205 141.8l11.2 4.4M203.4 142.5l10.4 4.9M202.4 144.8l11 5.4M200.9 145.8l10.8 4.6M201.6 147.8l8.7 4.1M199.1 149.7l10.5 4.7M198.3 150.9l9.5 3.5M195.4 152.9l10.6 4.1M192.1 156.4l11.2 5.3M191.9 158.5l10.3 4.4M190 158.5l11.5 5.6M188.1 160.8l11.1 4.8M185.9 165l11.3 5M182.9 169.9l10.9 4M181.4 170.6l11.1 4.6M182.1 172l10.8 4.5M178.9 174.2l12 4.2M178.7 175.2l10.7 4.8M174.9 179.3l10.8 5.3M174.9 181.6l11.4 4.5M174 182.5l11.4 4.9M172.1 182.7l11.7 5.4M169.7 187.3l11.4 5.2M168 189.9l13.3 6.3M167.3 192.9l13.9 6.1M166.4 193.8l13.8 5.8M166 195.2l13.2 5.9M162.7 196.8l16.6 6.6M164 198.4l15.1 7" stroke="#9d936d" stroke-width="1.2" fill="none" stroke-linecap="round"/>
<path d="M261.9 91.7l1-0.3M258.4 93.5l4.3 0.9M257.2 95.4l6.1 2.2M256.9 97.3l6.4 1.5M256.7 98.4l5.7 1.1M253.5 100.3l7.1 1.4M254 100.8l5.7 2M252.1 101.7l6.5 2.1M250.9 102.8l6.2 2.5M248.2 106l7.3 1.8M245.2 107.3l7.3 2.8M243.8 109.6l5.4 1.9M241.8 109.7l7.2 2.8M241.6 111.2l6.6 2.3M239.8 111.7l7.3 2.3M234.2 116.5l7 2M232.9 118l6.3 2.5M232.2 119.5l6 2.5M227.4 121.3l7.3 3.4M227.7 122.4l6.3 2.8M223.8 124.3l7.9 2.3M223 125l8.5 3.6M222.2 126.1l8 3.4M221 126.5l8.6 3.3M218.6 128.9l7.5 3M217.2 130.6l8.2 3.5M215.6 131.7l7.6 2.7M213.6 133.5l7.7 3.8M214.2 135.2l6.1 2.8M211.7 136l8.5 3.3M210.8 136.7l8.1 3.1M210.6 138.1l7.8 3.3M208.4 140.8l8.3 2.7M205.3 145.3l7.7 2.8M203.9 145.6l6.3 3.2M203.3 147.9l6.3 3.5M197.8 153l7.9 3.5M197.1 154.5l7.6 3.7M194.4 156.5l7.1 2.6M194.3 157.7l7.4 3.5M192.7 158.8l8.3 2.9M191 162.2l6.6 3.5M188.9 163.4l7.8 3M188.6 165.9l6.7 3.3M185.4 169.1l6.9 3.1M184.7 170l7 3.4M183.1 172.5l7.7 3.1M180.3 177.1l5.9 2.8M178.1 178.3l7.5 2.8M177.3 179.2l7.8 3.4M176.7 180.5l7.4 2.9M174.5 182.9l8 2.9M175 183.8l6.5 3M173.1 185.4l8.9 3.1M172.2 185.7l8.1 3.8M172.3 188.6l7.7 4.2M170.3 191.5l9.1 3.9M170.5 192.3l7 3.8M167.8 194.3l9.6 4.5M166.2 197.8l12 5.9" stroke="#ada379" stroke-width="1.0" fill="none" stroke-linecap="round"/>
<path d="M260 92.5l2.9 0M260.1 92.9l2.9 0.8M258.8 94.6l5.2 1.7M255.2 98.7l6.7 2.8M249.1 103.5l7.2 2.3M248.5 103.9l7.7 3M247 106.4l7.2 3M243.7 108.3l7.9 2.4M239.4 112.9l6.3 2.1M237.3 113.5l7.8 3M236.4 114.5l7.8 2.3M234.7 115.2l9 2.9M233.9 117.8l7.1 2.1M229.4 119.8l8.3 3.4M229 120.6l7.5 2.6M225.9 123.4l7.8 3.2M220.8 128.2l6.4 2.8M217.5 129.7l7.5 2.9M214.7 132.8l8.5 3.7M209.4 139.3l7 2.7M207.5 141.7l7.3 3M206.7 143.1l7.3 2.3M206.7 144.3l6.6 2.1M203.7 147.6l6.3 2.3M201.2 148.7l7.5 3.4M200.1 150.4l6.9 2.1M198.1 151.2l8.8 2.8M198.9 152.8l7 3.1M196.2 155.8l7.8 3.1M191.1 159.3l8.9 3.9M190.9 161.1l7.4 3M188.3 164.3l8.5 3.4M186.6 166.9l8.7 3.5M186 167.9l7.3 3M183.9 170.9l7.3 4M182.2 173.3l6.6 3M181.1 174.9l6.7 3.1M180.4 176l6.4 2.4M177 181.4l5.9 3.2M171.1 186.7l9.1 4.8M171.7 189.7l8 3.8M169.5 193.8l9.3 4M168 196l9 4M166.3 196.5l10.6 5.4M165.2 199l12 5.5" stroke="#b3a97e" stroke-width="1.0" fill="none" stroke-linecap="round"/>
<path d="M261.5 91.1l1.7 0.3M259.2 96.2l2.6 1M258 98.1l2.7 1.8M254.8 100l4.3 1.7M254.7 101.9l3.8 0.5M252.9 102.5l4.6 1.1M249.7 105.1l4.7 1.6M244.2 109.8l4.9 0.8M236.7 115.4l4 1.9M232.3 119.5l4.2 1.1M228.8 121.7l5.5 2.5M226.3 123.4l5.7 2.5M219.3 131.9l3.3 1.6M218.4 132.8l2.8 0.9M216.8 134.5l2.9 1.5M213.6 137.9l2.7 1.1M211.8 138.2l5.1 3.2M209.2 142.2l5.3 1.7M206.2 147.1l3.8 1M204.7 147.4l4.5 2.3M200.1 153l4.7 1.7M197.6 154.9l5.5 2.8M197.2 157.5l3.3 1.4M193.8 159.5l5.3 2.3M191.7 163l4.6 1.8M187 169.5l4 2.1M185.2 171.5l3.6 2.1M184.7 172.8l4.5 1.9M180.2 179l4.2 1.3M178.1 183.8l2.3 1.6M177.2 184.8l3.6 1.8M175.6 185.7l3.5 1.7M173.8 190.6l2.8 1.7M169.7 195l5.9 3.1M169 196.6l7 2.8M169.5 198.6l6.1 2.1M169.5 200.6l6.3 2.8" stroke="#c6bd90" stroke-width="0.9" stroke-opacity="0.8" fill="none" stroke-linecap="round"/>
<path d="M260.2 93.9l1.1 0.9M259.5 95.1l2.7 0.8M252.3 103.1l3.7 2.1M249.7 105.9l3 1.4M247.4 107l4.6 1.4M243 111.8l3.8 1.4M239.4 112.7l5.4 2.1M239.1 114.1l4.3 1.4M230.5 119.8l4.9 2.1M231.1 121.5l2.7 1.6M228.5 123.3l4.9 1.4M225.8 124.6l4.3 1.8M220.6 130.9l3.7 1.9M217.1 133.5l4.6 2.2M215.2 136.7l2.1 1.3M201.6 150.9l3.7 1M198.1 154.3l4.4 0.8M195 158l4.7 2M192.6 161.8l4.7 1.6M190.8 165.8l3.3 0.6M188.4 168.4l2.3 1.2M183.6 174.3l3.4 1.4M181.3 176.7l4.1 1.1M180.8 177l5 2.9M179.4 180l4.3 2.2M175.2 186.8l4.4 1.8M174.5 188.1l3.4 1.9M173 189.1l4.7 2.3M172.3 191.7l4 2.2M170.5 194.4l5.3 2.7M169.3 199.6l4.5 1.8" stroke="#ccc396" stroke-width="0.9" stroke-opacity="0.8" fill="none" stroke-linecap="round"/><path d="M261.9 92.3l0.7 0.1M260.2 96.6l1.3 0.4M261.9 98.4l2.9 0.8M256 97.9l2.3 0.7M255.6 100.4l1.6 0.6M246.7 103.9l2.7 0.9M248.4 105.8l3.5 1.2M230.2 126.5l3.9 1.5M217.4 133.9l3.6 1.4M214 135.4l2.1 0.8M201.7 149.3l3 1.2M196.1 154.2l3.2 1.3M199.9 160.3l1.8 0.7M182.2 175.2l1.8 0.8M178.7 175.2l2.6 1.1M173.8 186.6l3.4 1.6M174.7 193l2.7 1.3M168.2 196.1l4.8 2.1" stroke="#ddd5a8" stroke-width="0.8" stroke-opacity="0.7" fill="none" stroke-linecap="round"/>
<path d="M260.9 95.6l1.4 0.4M251.2 102.8l2 0.8M251.2 108l2.9 1.1M247.5 110.6l2.3 0.8M241.4 109.7l3.9 1.4M237.2 113.4l3.1 1.1M238.1 120.2l3.8 1.4M232.6 119.5l2.6 1M226.7 122.5l3.4 1.3M223.4 127.9l3.2 1.2M222.5 128.8l3.1 1.3M219.4 130.4l2.3 0.9M217.2 139.6l3.5 1.4M200.8 153.3l3.8 1.6M197.4 156.2l1.8 0.8M196.3 160.2l2.7 1.2M194.8 161l2.4 1.1M195.2 164.2l1.9 0.8M190.2 165l3.3 1.5M185.1 165.9l3.2 1.4M180.9 183.7l3.6 1.5M176.9 191l3.3 1.5M169.7 201.1l6.4 2.7" stroke="#d3ca9e" stroke-width="0.8" stroke-opacity="0.7" fill="none" stroke-linecap="round"/><path d="M256.3 95.5l1.7 0.5M256.9 96.9l1.4 0.4M236.8 113.3l2.7 0.9M229.5 119.6l1.4 0.5M212.3 134.7l2.6 1M183.9 163.8l1.4 0.6M182.2 167.6l1.5 0.7M175.8 177l1.5 0.6M173.8 183.6l2.7 1.2M169.9 184.9l1.5 0.7M181.6 191.6l2.7 1.2M180.8 195.8l1.7 0.8M165.7 190.5l3.6 1.6M167.9 193l3.7 1.6" stroke="#696145" stroke-width="0.8" stroke-opacity="0.55" fill="none" stroke-linecap="round"/>
<path d="M260.1 91.9l1 0.2M233.1 123.6l1.5 0.5M231.7 125.7l2.6 1M223.1 123.7l1.9 0.8M227.2 130.7l2.4 1M215.6 131.7l1.6 0.7M222.5 136l1.8 0.7M210.5 136.9l1.3 0.5M213.1 149.6l2.8 1.1M208.7 150.7l2.8 1.2M198.1 147.7l2.7 1.2M198.6 152.3l1.9 0.9M181.6 173.4l1.4 0.6M183.4 184.7l2.5 1.1M184.2 186.6l2.3 1M163 196.7l2.2 1" stroke="#5e573e" stroke-width="0.8" stroke-opacity="0.55" fill="none" stroke-linecap="round"/></g>
<path d="M259.9 91l0.4 0.5M257 91.9l1 0.7M248 99.3l1.8 1.3M245.9 98.9l2.7 2.2M242.1 103.2l2.4 1.5M241.9 104.8l1.5 0.8M235.1 108.3l2.6 2.1M233.7 110.6l1.4 0.5M228 114.8l2 1.9M226.1 115.1l1.8 1.6M223.6 118.3l1.3 1M220.5 119.2l2.9 2.9M212.8 127.1l1.5 1.1M209.4 130.3l2.7 2M208 130.9l1.7 1.3M206.8 133.8l2.3 1.8M203.8 136.5l2 1.7M202 140.4l0.6 0.7M198.1 144.4l1.3 1.1M190.9 149.8l2.7 2.3M190.6 151l2.6 2.7M187.6 154.3l2.9 2.6M187.8 156.3l1 1.3M185.8 156.1l2.5 2.7M185 157.5l2.5 2M184.1 158.8l2.7 2.8M183.7 160.1l2.1 2.3M181.9 162.4l2.8 2.3M178.3 167.2l2.4 2.1M178.3 168.6l1.4 1.4M177.1 171.4l2 1.6M171.6 178.2l1.6 1.2M170.8 178.7l2.3 2.2M168.2 180.6l3.3 2.5M167.7 183.6l1.7 1.6M163.5 187.6l1.3 1M156.7 195.1l3.5 2" stroke="#6e6649" stroke-width="1.1" stroke-opacity="0.85" fill="none" stroke-linecap="round"/>
<path d="M251.7 94.8l1.3 1M250.3 95.2l2.9 2.4M249.1 96l2.9 2.6M245 101.9l1.1 0.8M243.6 102.5l1.9 1.8M239.1 106.1l1.3 1.2M237.6 107.8l0.5 0.8M235.3 109.9l1.1 1.1M231.4 112.2l1.5 1.6M229.3 114.2l1.9 1.7M225.2 115.7l1.9 1.6M224.5 117l1.7 1.7M220.9 121.6l0.9 0.7M216.3 122.9l1.9 1.9M215.5 124.4l2 1.7M214.9 125.8l1.3 0.5M212.7 125.7l2.6 2M211.9 128.1l1.2 1.5M210.8 129.4l1.7 1.4M207.8 132.6l1.4 0.9M204.9 135.5l2.6 2.5M198.8 143.6l1.5 0.9M197.5 145.8l0.8 1.1M194.9 145.7l3.1 2.6M194.6 146.9l1.8 2M193.7 150.2l0.8 0.5M189.8 152.5l2.8 2.3M188.9 153.4l2.3 2.4M183.5 161.7l1.5 1.6M180.7 163.3l2.5 2.4M180.6 165l2.4 2M178.6 165.1l3.4 2.8M177.1 169.3l1.6 1.6M175.2 173.5l1.4 1.2M174.3 174.4l1.1 1.5M172.7 174.9l2.9 2.3M166 183.8l2.2 2.3M163.9 186.5l3 1.9M162.2 188.6l1.8 1.4M159.8 192.5l1.4 0.7M159.6 193.6l3 2.3" stroke="#625b41" stroke-width="1.1" stroke-opacity="0.85" fill="none" stroke-linecap="round"/>
<path d="M265.8 98.1l2.1 1.6M265.5 100.5l2.3 1.5M259 107.5l1.5 1M258.4 108.7l2.4 2.3M251.8 114.4l2.2 2M249 116l1.5 1.1M247.6 116.3l2.8 2.2M247.5 118.3l2.6 1.5M244.7 119.9l2.1 1.4M244.5 120.9l0.9 1.3M243.5 122l1.5 1.4M240.6 123l1.7 1.8M240.2 124.7l1.5 1.2M235.8 128.8l1.3 0.6M227.3 136.1l1.3 1M226 136.5l1 1.4M223.7 140.5l1.6 1.6M222.9 141.8l1.5 1M219.8 144.5l2.5 1.8M213.5 152.1l1.1 1.2M210.7 154.1l3.3 2.4M211 155.8l1.8 1.7M209.3 156.4l3.1 2.5M208.6 157.5l1.9 1.9M205.5 162.2l1.1 1M203.4 164.5l1.9 1.2M201.3 168l2.4 2.2M200.3 169.3l0.9 0.5M198.2 170.6l1 1.4M192.3 179l0.9 0.9M190.8 181.4l2 1.7M183.7 195.3l1.1 0.8M182.5 201.6l2.9 2.8M182.9 205l2.3 1.7" stroke="#6e6649" stroke-width="1.1" stroke-opacity="0.85" fill="none" stroke-linecap="round"/>
<path d="M265.8 96.9l0.7 0.9M265.3 102l2.3 1.4M263.9 102.8l3 2.4M263.1 103.9l1.8 1.6M261.7 106.5l2.1 1.3M257.1 109.8l1.3 0.9M254.8 111.3l0.9 0.8M253.5 112l2.6 2.1M237.6 126.4l2.6 1.7M233.7 128.5l1.5 1.5M233.4 130l0.7 0.6M231.3 131.6l1.4 1.8M230.8 133.3l0.6 0.8M229.3 134.5l1 0.3M227.5 134.6l2.1 1.5M225 139.4l0.9 1.5M218.4 145.2l1.5 1.4M216.7 147.5l1.8 2M216.3 149.4l2.2 1.2M215.2 150.1l1.6 1.4M214.5 151l1.9 2.1M212.6 153.5l1.4 1M207.8 158.7l2.6 2.4M204.3 163.6l2.4 1.5M202.3 167.1l1.5 1.3M197.6 172.7l1.4 0.7M196.1 173.1l2.3 1.6M195.9 174.7l1.7 1.6M194.1 175l2.4 1.9M194.2 177.2l1.5 1.1M188.4 183.6l1.5 1.5M188.1 184.8l2.5 1.9M186.9 185.4l2.5 2.9M185.6 188.3l2 2.1M184.7 191.1l2.2 1.8M184.4 192.3l1.4 1.2M184.1 193.9l1 0.9M183.2 199.2l2.2 2.2M182.8 200.5l1.6 1.5M182.2 206.9l3 2.4" stroke="#625b41" stroke-width="1.1" stroke-opacity="0.85" fill="none" stroke-linecap="round"/>
<path d="M284.5,232.5C282.6,232.4 280.1,233.8 278.3,235.6C276.6,237.3 275.4,239.7 274.0,243.0C272.6,246.3 271.2,251.7 270.0,255.5C268.8,259.3 267.7,262.7 266.8,266.0C265.9,269.3 265.5,270.6 264.7,275.4C263.9,280.2 258.1,291.7 262.0,295.0C265.9,298.3 283.8,297.1 288.0,295.0C292.2,292.9 287.2,287.5 287.2,282.7C287.2,277.9 287.6,270.5 288.2,266.0C288.8,261.5 289.5,259.2 290.8,255.5C292.1,251.8 296.1,247.2 296.0,244.0C295.9,240.8 291.9,237.9 290.0,236.0C288.1,234.1 286.4,232.6 284.5,232.5Z" fill="#857b5c"/>
<clipPath id="c793211"><path d="M284.5,232.5C282.6,232.4 280.1,233.8 278.3,235.6C276.6,237.3 275.4,239.7 274.0,243.0C272.6,246.3 271.2,251.7 270.0,255.5C268.8,259.3 267.7,262.7 266.8,266.0C265.9,269.3 265.5,270.6 264.7,275.4C263.9,280.2 258.1,291.7 262.0,295.0C265.9,298.3 283.8,297.1 288.0,295.0C292.2,292.9 287.2,287.5 287.2,282.7C287.2,277.9 287.6,270.5 288.2,266.0C288.8,261.5 289.5,259.2 290.8,255.5C292.1,251.8 296.1,247.2 296.0,244.0C295.9,240.8 291.9,237.9 290.0,236.0C288.1,234.1 286.4,232.6 284.5,232.5Z"/></clipPath>
<g clip-path="url(#c793211)"><path d="M282.6 232.9l8.1 3.4M274.8 238.7l21.5 3.8M275.1 240.6l20.9 3.4M274 243.6l21.6 2.9M272.9 245.5l20.9 3.3M271.4 246.8l22.2 3.9M271.9 250.4l21.1 2.4M270.2 253.9l20.8 2.7M269.9 255.4l20.5 2.4M268.4 258.3l21.4 1.7M266.9 264l21.6 1.5M266.5 266.5l22.6 1.6M265.6 268.4l22.2 0.7M264.9 271.3l23.1-0.1M265.1 274l22.6-0.1M264.3 276l23.3 1.2M263.5 282.4l24.2-0.4M262.7 284l24.8-0.9M263.3 285.2l24.3-0.7M263.4 286.3l23.7-0.9M261.8 293.8l26.1-1.6M261.4 294.9l26.9-1.4" stroke="#6e6649" stroke-width="1.5" fill="none" stroke-linecap="round"/>
<path d="M283.8 231.9l5.6 3.6M281.9 233.9l9.4 3.2M279.6 234l12.5 3.7M279.2 234.8l14.1 4M277.6 236.1l16.8 3.7M277.1 236.6l17.4 4.4M275.9 238.1l20.1 3.4M273.6 242.3l22.7 3.4M273 244.6l21.8 3.1M271.9 248.9l21.5 2.3M270.9 251.3l20.8 2.7M270.1 253l21.8 2.1M269.6 257l20.1 1.6M268.3 259.5l21.1 1.2M267.9 260.6l21.6 2M267.7 262l20.9 1.9M266.9 265.3l22.2 1.3M265.9 269.1l22.7 0.7M264.4 271.7l24.1 1.2M264.1 274.9l23.8 0.6M263.3 277.5l23.9 0.9M263.2 279.8l24.3-0.9M263.3 280.6l24.8-0.4M262.4 288.2l24.8-0.8M262.2 289.3l26.2-0.4M261.7 290.8l26.3-0.6M262.6 292l24.9-1.2" stroke="#666043" stroke-width="1.5" fill="none" stroke-linecap="round"/>
<path d="M283.4 232.9l6.3 3.3M281.2 234.6l10.5 2.8M279 237.1l14.1 2.9M277.7 239.5l16 2.9M276.5 240.6l18.3 3.5M273.3 246l17.9 2.8M273.2 252.1l17.3 1M272.3 255.9l16.8 1.3M271 257.5l17.3 0.7M269.8 258.2l17.2 1.4M268.6 268l18.1 0.5M268 269.7l17.8 0.6M267.7 271.1l18.1 0.6M267.8 272.1l18 0.8M266.2 274.7l18.8 0.5M266.2 276.1l19.4 0.9M267.2 277.8l18 0.3M264.7 279.5l20.4-0.4M265.6 281l19.2-0.6M265.3 283.7l21-0.1M263.7 284.7l20.3 0M264.8 286l19.2-0.3M266.2 287.8l19.5-0.3M263.7 288.9l21.9 0M264.9 290.9l20.6-1.2M263.8 293.2l21.4-1" stroke="#827957" stroke-width="1.3" fill="none" stroke-linecap="round"/>
<path d="M285 233l3.6 2.3M282.6 233.7l7.8 3.1M279.3 235.2l11.7 3.3M280 236.4l12.7 3.1M278.8 238.4l15.4 2.8M277.1 242l17.5 3M276.6 244.1l15.9 2.3M274.8 244.9l18.3 2.9M274.5 247.3l18.2 2.5M274.5 249.3l15.8 2.2M274.2 249.9l17.1 2.3M272.7 252.5l17.1 2.3M272.2 254.4l16.4 1.2M269.8 260.1l17.8 1.3M270.4 260.9l17.3 1M270.5 262.7l16.8 1M270.2 263.9l17.1 1.1M269.4 265.4l18 0.7M268.2 266.7l19 0.9M267.6 273.5l17.9 0.8M264.7 281.7l20.4-0.2M264.1 292.5l22.6-1.3M264.9 295.1l19.6-1.7" stroke="#897f5d" stroke-width="1.3" fill="none" stroke-linecap="round"/>
<path d="M285.4 233.3l2.9 1.5M279.6 240.1l13.4 2M278.8 241.2l13.2 1.9M278.4 242.4l13.1 2.2M277.7 243.7l13.6 2.3M276.8 245l13.3 2.6M276 248l13.6 1.2M274.7 251.8l13.9 1.6M273.3 255.8l13.6 1.6M273.4 260.2l10.5 0.4M271.7 266.9l12.4 1M269.1 269.9l15.2-0.2M269.8 270.8l14.8 0.2M269.1 276.7l13.8 0.4M268.2 280.9l15.5-0.3M266.9 287.9l15.5-0.8M267.5 289.2l16.8-0.3M267.8 290.4l16.8-0.7M265.3 293.1l18.3-0.5" stroke="#978d68" stroke-width="1.2" fill="none" stroke-linecap="round"/>
<path d="M284.5 233.1l3.9 2.3M282.7 233.5l6.5 2.9M282.5 234.4l7.8 3.1M281.2 235.5l8.1 2.8M281 236.4l10.2 2.6M280.5 237.7l11.1 1.9M278.6 238.7l14 2.7M275.9 246.9l14.5 1.6M274.6 249l15.4 2M274.6 250.7l13.6 1.2M274.2 253.1l14.3 1.5M273.9 254.4l12.6 1.8M274.3 257.1l10.9 1M272.2 258.1l13.3 1.7M272 261.5l11.7 0.4M272 262.3l13.9 0.9M271.2 264.1l14.4 0.4M271.5 265.8l12.5 0.1M269.6 268.4l13.9 0.5M268.9 271.9l15.3 1.2M268.9 273.2l14.3 0.4M268.4 274.7l16 0.7M268.5 277.9l15.4 0M268.1 279.6l14 0M267.3 282.4l15.2-0.7M267.6 283.1l16.2-0.1M268.3 285l15.6-0.6M267.9 286.8l14.8-0.8M265.7 291.9l18.1-1M265.6 295l18-0.9" stroke="#9d936d" stroke-width="1.2" fill="none" stroke-linecap="round"/>
<path d="M283.9 234.8l5.3 2.4M282.3 235.8l6.9 2.3M282.5 237.2l6.5 1.1M282.6 238.1l6.4 1.1M281.2 238.9l9.8 1.6M280 243.3l8.9 1.5M279.6 244.6l9.1 0.7M278.7 244.9l9.5 2.1M277.4 249.3l9.8 1.3M277.3 250.4l8.7 1M277.8 253.4l7 1M274.1 257l11 1.1M274.3 261.1l9.4 1.4M273.2 262.5l10.1 0.5M273.2 264.5l8.8 0.6M272.4 265.2l10 0.6M270.2 274l10.8-0.5M270.6 275l9.7 0.2M271.8 276.6l7.9-0.4M271 277.6l9.5 0.8M269.7 279.7l10.6-0.1M270.5 280.3l11.3 0.6M270.4 282.1l11.1-0.6M270.9 283.1l10.7 0M269.5 287.9l10.9-0.8M270.5 288.6l10.2 0.3M268.6 290.1l12.2 0.4M270.1 292l10.5-0.8M268.6 292.9l10.5 0.3" stroke="#ada379" stroke-width="1.0" fill="none" stroke-linecap="round"/>
<path d="M286.3 233.2l1.4 0.7M285.1 233.9l3 1.5M284.5 234.4l3.9 1.5M280.6 240.6l9.4 1.5M280 241.4l9.8 2.1M278.7 246.9l10.3 1.5M278.9 248.3l8.7 1.5M277.4 252.3l8.3 1.1M276.3 254.5l9.9 1.2M276.3 256l6.8 0.5M275.2 258.9l8.9 0.4M275.1 259.8l8.7 1.3M273.9 267l8.9 0.7M272.1 268l8.7 0.7M271.6 269.4l11.4 0.7M271.3 270.7l10 0.5M271.1 272.3l11.5 0.5M269.4 284.9l11-0.4M270.2 286.3l9.6 0M270.1 294.1l11.6 0.3" stroke="#b3a97e" stroke-width="1.0" fill="none" stroke-linecap="round"/>
<path d="M283.9 236.3l3.4 1.2M283.6 236.8l3.8 1.8M283.1 239.6l5.5 0.6M281.8 244.6l5.3 1.2M281.8 246.9l3.6 0.9M278 251.9l6.1 0.5M278.1 256.5l3.7 0.1M277.8 257.4l3.8 0.2M277 259.2l4.2 0M276.1 262.8l4.2 0.7M274.8 264.1l4.4 0.8M273.9 269.7l4.2 0.1M275 272.9l5.4-0.7M274.4 274l3.8-0.3M273.3 276.6l5.5 0.3M272.4 283.5l5.7 0M271.8 284.5l5.4-0.2M273.4 286.3l4.9-0.6M273.4 287.9l5.3-0.9M270.9 290.5l8-0.6" stroke="#c6bd90" stroke-width="0.9" stroke-opacity="0.8" fill="none" stroke-linecap="round"/>
<path d="M286.6 233.6l1 0.5M285.3 234.3l2.4 1.8M284.1 235.7l3.9 0.7M284.1 238.5l3.1 0.5M282.5 241.8l5.2 1.5M282.1 246.2l4.6 0.5M281 248.6l5 0.5M279.4 249.6l6.1 0.7M278.3 251.1l6.4 0.3M277.7 253.9l5.4-0.2M276.2 260.3l4.6 0.1M274.9 266l4.5 0.1M276 267.1l5.3 0.2M272.7 278.9l6.6-0.1M273.4 280.2l4 0M271.9 281.9l6.6-0.1M273 288.9l5.7-0.1" stroke="#ccc396" stroke-width="0.9" stroke-opacity="0.8" fill="none" stroke-linecap="round"/><path d="M286 233.3l0.5 0.3M285.5 234l0.9 0.4M279.4 240l4.5 0.8M277.1 248l2.4 0.3M282.9 252.7l4.8 0.6M275.7 253.3l2.7 0.3M276.8 256.2l5 0.4M276.1 260.2l2.7 0.2M279 265.8l3.1 0.2M272.3 269.6l4.7 0.2M278.6 279.3l5.3 0M269.3 293.2l3.6-0.1M277 294.2l6.3-0.3" stroke="#ddd5a8" stroke-width="0.8" stroke-opacity="0.7" fill="none" stroke-linecap="round"/>
<path d="M281.3 236.6l3.8 0.9M280.5 238.9l3 0.6M285.6 245.2l4.5 0.7M279.2 255l2.8 0.3M274.7 264.2l2.6 0.2M270.7 282.1l3.1 0M275.3 284.8l4.4-0.1M274.3 286.2l3.6-0.1M272 289l3.7-0.1" stroke="#d3ca9e" stroke-width="0.8" stroke-opacity="0.7" fill="none" stroke-linecap="round"/><path d="M286.2 250.5l2.4 0.4M287.4 252l3.5 0.4M285.4 254.3l1.8 0.2M270.2 264l2.3 0.1M266.8 280.7l3.1 0M279 283.4l4-0.1" stroke="#696145" stroke-width="0.8" stroke-opacity="0.55" fill="none" stroke-linecap="round"/>
<path d="M288.3 236l0.8 0.3M281.7 236.7l2.1 0.5M289.5 244.5l3.4 0.6M276.1 243.6l2.5 0.4M286.4 246.6l2.4 0.4M276.9 246.5l3.6 0.6M268.2 269.5l3.9 0.1M266.6 277.9l2 0M279.3 282l3.1 0M265.3 287.8l4.3-0.1M282.3 291.3l4-0.2M278.5 294.2l3.3-0.2" stroke="#5e573e" stroke-width="0.8" stroke-opacity="0.55" fill="none" stroke-linecap="round"/></g>
<path d="M283.7 232l0.8 0.4M281.1 232.3l2.4 0.7M281.4 233.5l1.6 0.3M272.7 241.4l2.2 0.8M270.3 249.7l2.7 0.9M269.3 255.6l1.4 0M266.6 262.4l2.1-0.1M266.5 265l1.6 0.2M264.4 273.3l1.8 0.5M263.2 278l2.7-0.1M261.3 280.4l4.2 0.7M261.7 281.9l4.4 0.6M260.6 286.5l4.5 0.3M260.7 287.9l4.6-0.1M262.1 289.4l3-0.1M261.9 290.6l3.5 0.1M262.1 293.7l1.1-0.2" stroke="#6e6649" stroke-width="1.1" stroke-opacity="0.85" fill="none" stroke-linecap="round"/>
<path d="M278.7 234.5l1.3 0.4M277.5 235.7l2.6 0.5M274.9 239l2.2 0.3M273.8 242.9l1.2 0.5M270.6 245.7l4.7 0.8M269.5 248.1l3.3 0.5M269.1 252.7l3.4 0.2M269.1 254.1l1.5 0.1M268.7 256.8l2.9 0.7M266.3 260.9l3 0.3M265.1 268.2l3.8 0.1M263.7 270.7l2.5 0.1M264.6 271.9l2.8 0.4M263.7 275.2l2.7 0.2M261 285.1l4.5 0.1M261.9 295.1l0.5-0.2" stroke="#625b41" stroke-width="1.1" stroke-opacity="0.85" fill="none" stroke-linecap="round"/>
<path d="M289.9 236.6l1.4 0.6M291.6 237.9l0.9 0.4M295.5 244.3l2.4 0.3M295.2 245.2l1.2 0.7M291.7 250.9l3.1 0.8M289.9 253.1l2.9 1.1M287.2 259.7l4.4 0.5M286.5 260.6l3.9 0.8M287.4 267.4l0.7 0.3M285.8 275.4l2.4-0.2M285.1 279.2l3.4 0.3M285.2 280.3l4.1 0.4M286.6 281.8l1.5 0.4M285.3 283.2l4.1 0.3M285.5 288.7l3-0.4M285.7 289.9l2.6-0.2M286.1 292.6l3.8-0.4" stroke="#6e6649" stroke-width="1.1" stroke-opacity="0.85" fill="none" stroke-linecap="round"/>
<path d="M289.2 235.4l1.3 0.8M291.5 238.3l1.3 0.8M292.5 239.2l1.6 0.6M293.1 246.3l4.5 1.2M289.5 254.4l3.6 1M288.6 255.7l2.5 0.7M288.3 257l2.5 0.3M287.9 258.3l3.3 0.8M287.8 262.1l3.1 0.6M287 263.6l3.1 0.1M286.6 266.3l2.5 0.1M286.9 271.3l2.2 0.4M286.8 276.7l1.9-0.1M286.6 278.1l1.7-0.2M285.9 284.5l3.4 0.1M284.5 287.2l3.6 0.2M285.5 290.9l4.6 0.2M285.5 293.9l3.3-0.2" stroke="#625b41" stroke-width="1.1" stroke-opacity="0.85" fill="none" stroke-linecap="round"/>
<path d="M201.0,36.5C198.7,36.8 198.7,38.1 196.0,40.0C193.3,41.9 189.0,44.7 185.0,48.0C181.0,51.3 176.0,55.7 172.0,60.0C168.0,64.3 164.4,69.7 161.0,74.0C157.6,78.3 154.1,82.0 151.3,86.0C148.5,90.0 146.1,93.8 144.1,97.8C142.1,101.8 140.8,105.4 139.4,109.8C138.0,114.2 136.7,119.5 135.5,124.0C134.3,128.4 133.1,132.0 132.3,136.5C131.5,141.0 131.0,146.1 130.8,151.2C130.6,156.3 130.9,162.3 131.3,167.0C131.7,171.7 132.7,174.9 133.4,179.4C134.1,183.9 134.5,189.7 135.5,194.0C136.5,198.3 137.9,201.6 139.6,205.5C141.3,209.4 143.1,213.3 145.5,217.5C147.9,221.7 150.7,226.1 153.9,230.7C157.1,235.3 161.1,240.6 164.7,245.0C168.3,249.4 172.2,253.4 175.4,257.0C178.6,260.6 181.4,263.6 183.8,266.5C186.2,269.4 187.0,271.8 190.0,274.5C193.0,277.2 198.0,280.4 202.0,282.8C206.0,285.2 209.9,286.6 213.9,288.8C217.9,291.0 221.9,293.8 225.9,296.0C229.9,298.2 233.8,300.4 237.8,302.0C241.8,303.6 245.8,304.3 249.8,305.5C253.8,306.7 257.7,307.7 261.7,309.1C265.7,310.5 271.6,312.2 273.8,314.0C276.0,315.8 274.3,318.3 275.0,320.0C275.7,321.7 276.1,324.4 278.0,324.4C279.9,324.4 283.6,321.9 286.4,320.2C289.2,318.5 292.1,316.4 294.7,314.0C297.3,311.6 299.9,308.6 302.0,305.6C304.1,302.6 305.0,299.1 307.3,296.0C309.6,292.9 316.6,288.5 315.7,286.7C314.8,284.9 306.7,285.3 302.0,285.0C297.3,284.7 292.2,285.8 287.7,284.8C283.2,283.8 279.3,280.9 275.0,279.0C270.7,277.1 265.9,275.2 261.7,273.3C257.5,271.4 253.8,269.3 249.8,267.3C245.8,265.3 241.8,263.5 237.8,261.3C233.8,259.1 229.9,256.9 225.9,254.1C221.9,251.3 217.9,247.7 213.9,244.6C209.9,241.5 205.3,238.5 201.7,235.4C198.1,232.3 194.8,229.1 192.2,225.9C189.6,222.7 187.6,219.7 186.2,216.3C184.8,212.9 186.2,208.7 183.8,205.5C181.4,202.3 175.3,200.1 172.0,197.0C168.7,193.9 165.8,189.9 164.0,187.0C162.2,184.1 161.7,182.7 161.1,179.4C160.5,176.1 160.8,171.7 160.6,167.0C160.4,162.3 159.9,156.3 160.0,151.2C160.1,146.1 160.4,140.9 161.1,136.5C161.8,132.1 163.0,129.4 164.4,125.0C165.8,120.6 167.6,114.8 169.5,110.0C171.4,105.2 173.6,100.8 176.0,96.5C178.4,92.2 181.2,88.1 184.0,84.0C186.8,79.9 189.7,76.0 193.0,72.0C196.3,68.0 200.4,64.2 204.0,60.0C207.6,55.8 213.5,50.6 214.5,47.0C215.5,43.4 212.2,40.2 210.0,38.5C207.8,36.8 203.3,36.2 201.0,36.5Z" fill="#857b5c"/>
<clipPath id="c585330"><path d="M201.0,36.5C198.7,36.8 198.7,38.1 196.0,40.0C193.3,41.9 189.0,44.7 185.0,48.0C181.0,51.3 176.0,55.7 172.0,60.0C168.0,64.3 164.4,69.7 161.0,74.0C157.6,78.3 154.1,82.0 151.3,86.0C148.5,90.0 146.1,93.8 144.1,97.8C142.1,101.8 140.8,105.4 139.4,109.8C138.0,114.2 136.7,119.5 135.5,124.0C134.3,128.4 133.1,132.0 132.3,136.5C131.5,141.0 131.0,146.1 130.8,151.2C130.6,156.3 130.9,162.3 131.3,167.0C131.7,171.7 132.7,174.9 133.4,179.4C134.1,183.9 134.5,189.7 135.5,194.0C136.5,198.3 137.9,201.6 139.6,205.5C141.3,209.4 143.1,213.3 145.5,217.5C147.9,221.7 150.7,226.1 153.9,230.7C157.1,235.3 161.1,240.6 164.7,245.0C168.3,249.4 172.2,253.4 175.4,257.0C178.6,260.6 181.4,263.6 183.8,266.5C186.2,269.4 187.0,271.8 190.0,274.5C193.0,277.2 198.0,280.4 202.0,282.8C206.0,285.2 209.9,286.6 213.9,288.8C217.9,291.0 221.9,293.8 225.9,296.0C229.9,298.2 233.8,300.4 237.8,302.0C241.8,303.6 245.8,304.3 249.8,305.5C253.8,306.7 257.7,307.7 261.7,309.1C265.7,310.5 271.6,312.2 273.8,314.0C276.0,315.8 274.3,318.3 275.0,320.0C275.7,321.7 276.1,324.4 278.0,324.4C279.9,324.4 283.6,321.9 286.4,320.2C289.2,318.5 292.1,316.4 294.7,314.0C297.3,311.6 299.9,308.6 302.0,305.6C304.1,302.6 305.0,299.1 307.3,296.0C309.6,292.9 316.6,288.5 315.7,286.7C314.8,284.9 306.7,285.3 302.0,285.0C297.3,284.7 292.2,285.8 287.7,284.8C283.2,283.8 279.3,280.9 275.0,279.0C270.7,277.1 265.9,275.2 261.7,273.3C257.5,271.4 253.8,269.3 249.8,267.3C245.8,265.3 241.8,263.5 237.8,261.3C233.8,259.1 229.9,256.9 225.9,254.1C221.9,251.3 217.9,247.7 213.9,244.6C209.9,241.5 205.3,238.5 201.7,235.4C198.1,232.3 194.8,229.1 192.2,225.9C189.6,222.7 187.6,219.7 186.2,216.3C184.8,212.9 186.2,208.7 183.8,205.5C181.4,202.3 175.3,200.1 172.0,197.0C168.7,193.9 165.8,189.9 164.0,187.0C162.2,184.1 161.7,182.7 161.1,179.4C160.5,176.1 160.8,171.7 160.6,167.0C160.4,162.3 159.9,156.3 160.0,151.2C160.1,146.1 160.4,140.9 161.1,136.5C161.8,132.1 163.0,129.4 164.4,125.0C165.8,120.6 167.6,114.8 169.5,110.0C171.4,105.2 173.6,100.8 176.0,96.5C178.4,92.2 181.2,88.1 184.0,84.0C186.8,79.9 189.7,76.0 193.0,72.0C196.3,68.0 200.4,64.2 204.0,60.0C207.6,55.8 213.5,50.6 214.5,47.0C215.5,43.4 212.2,40.2 210.0,38.5C207.8,36.8 203.3,36.2 201.0,36.5Z"/></clipPath>
<g clip-path="url(#c585330)"><path d="M200.1 36.3l7.2-1.6M199.9 37l8.5-1.2M198.1 38.1l10.9-1.2M197.6 38.5l12.2-0.7M196.1 40.1l14.3-1.8M192.9 41.7l19.7-1.2M192.5 41.8l20-0.2M189 44.2l25.9 0.3M186.8 45.8l28.7 0.6M185.6 46.9l29.3 1M183.6 48.8l30.2 0.8M183 50l30.5 0.4M176.7 54.5l33.1 0.9M171.6 59l33.2 0.7M170.7 60.6l34.2-0.2M167.2 64.4l34.1-0.4M166.5 66.4l33.6-1.5M164.7 67.8l34.1-1.9M163.8 69.5l34.3-1.9M160.2 74.3l34.4-3.9M159.4 75.2l34.2-4.1M158.9 75.6l34.2-3.6M155.3 80.8l34.9-4.5M154.9 81.3l33.9-4.4M153.7 82.6l35.1-5M147.6 90.9l36.2-6.1M147 92.2l36.3-6.5M146.2 92.6l36.4-5.6M144.9 95.4l36.7-7.2M143 100.9l35.5-8.2M141.6 101.8l36.6-7.9M141.7 102.8l35.5-7.9M138.9 109.6l35.5-10M137.4 114.2l35.3-11.7M137.3 116.4l34.2-11M136.8 117.6l34.1-11.4M136.2 120.6l34.1-12.3M135.5 121.7l34.9-12.4M135.5 123.4l33.9-13.3M135.1 124.7l34.8-13.3M134.5 125.8l33.6-13.2M132.8 131.9l33.8-15.3M132.5 132.9l34.8-14.9M132.2 135.3l34.5-14.7M131.1 138.2l34-15.4M131.8 139.7l32.7-16.1M130.8 141l34.2-16.5M131.3 142.7l33.5-17.2M130 152.7l32.6-19.2M130.3 156.5l30.9-20M131.4 165.5l28.8-21.3M131.3 168.1l29-22M131.4 169.4l29.2-21.8M131.5 170.9l29-22.2M131.8 175.1l28.3-22.2M132.5 176.2l27.5-22.1M132.6 177.4l28.1-22.8M133.7 181.9l26.2-23.2M133.6 187.4l26.8-24.5M134.7 191.9l26.5-26M134.9 192.9l25.8-24.8M135.3 194.5l25.5-25.7M136.1 197.3l25-26.2M136.5 198.9l25.1-27.1M137 200.1l24.1-26.1M137.2 201.3l24.2-26M138.1 202.3l23.3-26.9M138.4 203.8l23.4-26.8M139.1 204.9l22.1-27M140.6 208.2l21-27.4M141.1 210.7l21.2-28.1M142.5 211.5l20.3-27.7M142.8 212.5l20.4-28.1M143.6 215.4l21.4-29M144.3 216.4l20.6-29.1M147.6 222.5l21.5-30.3M149.1 224.1l20.6-30.4M150.6 225.9l20-30.4M151.5 227.8l20.6-32M152.5 229.9l21.4-32.9M154.1 230.7l20.8-32.4M154 231.6l21.5-32.3M158.4 237.8l22.3-35.9M159.4 238.5l22.7-36.2M160 240.6l22.5-37M166.4 248.3l19.1-37.7M168 248l17.2-36.3M168.8 249.4l16.7-36.1M169.1 251.4l16.3-37.4M170.6 251.8l15.4-36.8M170.9 253.3l15.6-37.1M175 256.7l14.1-35.8M179.5 262.4l12.7-37.2M180.1 264l13.5-38.1M185.1 269.5l12-38.8M185.5 270.1l12.2-39.2M186.4 270.6l12.3-37.9M187.9 272.5l11.4-39.4M190.2 275.5l12-39.6M196.3 280.2l11.1-40.9M198.6 281.2l9.7-40.5M199.3 282.1l10.9-41.6M200.8 282.3l10-41M204.9 284.8l8.7-41.2M206.2 285.2l8.2-41.1M209.4 287.5l7.7-40.6M210.5 288.3l7.7-40.2M213.1 289.3l6.7-40.2M215 289.5l5.7-39.8M216.7 291.2l5.8-40.3M218.2 292.1l5.7-40.4M219.5 292.6l5.5-40.8M226.1 296.2l3-39.9M226.7 296.5l3.4-40.1M228 297l3.7-40.1M230.6 299.5l3-40.9M231.7 299.5l2.6-40.5M234.7 301.5l1.8-41.6M235.6 301.2l2.3-41.3M238.2 302.7l1.9-41.2M239.2 303.3l1.7-40.9M243.3 304.3l0.5-40.6M246.7 304.8l-0.6-40.1M248.7 306.5l-1.1-40.4M254.6 306.9l-2.2-38.8M259 309.1l-3.3-39.4M260.1 309.2l-3.6-39.6M265 311.2l-4.5-39.4M267 310.8l-4.9-37.3M272.1 313.4l-5.8-39.1M272.7 313.1l-5.8-38.3M274.7 315.4l-6.4-39.4M275.3 316.1l-6.3-40M274.7 317.3l-4.3-40.6M274.9 319.1l-3.7-41.8M275.6 322.7l-1-44.4M276.1 323.6l-0.2-44.8M277.5 324.7l-0.9-45.1M279 324.9l-1-45M280.4 324.5l-1.5-44.7M282.9 322.7l-1.6-40.6M285.4 321.3l-1.8-39M286.4 320.9l-2.3-37M287.9 319.8l-2.4-35.8M291.1 317.3l-2.1-32.6M293.2 315.3l-2.1-30.4M295.8 313l-2.6-27.5M297.8 312.2l-2.2-27.2M299.2 309.5l-1.2-25.2M300.4 308.5l-1.6-24.1M304.4 301.4l1.8-16.7M305.5 300.7l2.3-15M306.2 297.4l3.7-11.5" stroke="#6e6649" stroke-width="1.5" fill="none" stroke-linecap="round"/>
<path d="M195.5 41l16.2-1.3M191.8 43.4l21.2-1.3M190.4 44.1l23.6-0.7M187.7 45.4l27.7-0.2M184.3 48.4l29.3 0.3M181.6 51.1l30.2 0.1M180.4 51.7l30.4 0.3M179.7 52.9l30.4 0.8M178.8 53.8l31.5 0.4M176.3 55.7l31.9 0.4M175.3 56.3l32.4 0.4M174.5 57l32.6 1M173 58.1l32.7 0.1M170.2 61.2l33.5 0M169 63l33.9-0.9M168.4 63.3l33-0.9M165.2 67.3l33.9-2.3M163 70.8l34-3.2M162.9 71.3l33.6-2.7M161.9 72.3l34.1-2.9M157.9 77.3l33.7-3.7M157.8 78.1l33.7-4.3M155.9 79.2l34.8-3.6M152.5 83.3l35.6-4.4M151.6 84.9l36.1-5.3M150.9 86.1l36.5-5.9M150.2 86.6l35.5-4.5M149.5 88.4l35-5.3M148.9 89.3l36.2-5.4M145 93.8l37.1-6.6M144.4 96.6l35.7-7.2M144.1 97.5l36.5-6.7M142.7 99.5l36.7-8.4M141.3 104.6l35.6-9.3M140 105.8l36.4-9.1M139.4 106.8l36.4-9.4M139.2 108.1l35.9-9.2M138.5 111l35.1-10.4M138.4 112.1l35.4-10.8M137.4 115.7l35.8-12.4M136.5 119.2l34.7-11.9M134.4 127.4l33.6-13.4M133.5 128.6l33.8-13.5M133.5 129.6l33.7-14M132.6 134.1l33.8-14.4M132.3 136.9l33.7-15.6M130.7 143.8l33-17M130.4 145.7l33.2-17.4M131.2 147.3l31.4-17.7M130.7 148.8l32.2-18.4M130.9 149.6l31.2-17.8M130 151.4l32-18.9M130.4 153.5l30.9-18M130.4 154.7l30.7-19M130.3 158.2l31.5-20.3M130.3 159.9l30.9-20.4M131.3 160.6l30.1-20.4M130.5 162.3l30.2-20.1M130.7 163.3l29.5-20.8M130.5 166.9l29.9-21.1M131.7 171.8l28.6-22.3M132 173.5l28.2-22.4M133.1 178.9l27.6-22.9M132.8 180.2l28.3-23.2M133.6 183.1l27.3-24M134 184.8l26.3-24.4M134.5 186l26-24.1M134.5 189.7l26-25.9M134.2 190.4l27-25.2M135.5 195.7l25.4-26.2M139.7 206.5l21.6-26.5M141.2 208.8l21.1-26.5M143.4 214l20.2-28.1M145 217.4l20.5-28.1M146.5 219.3l19.7-29.8M146.7 220.3l19.9-28.9M147.8 221.3l19.9-29.4M149.8 224.7l20.4-29.8M151.8 229l20.6-32.3M155 233.3l21.6-33.4M156.1 234.1l21.6-34.2M156.4 236l22.2-35.4M157.5 237.1l21.7-36M160.9 240.7l21.8-36.6M161.6 242.6l22.6-37.8M163.3 243.5l22-38M163.9 244.1l20.9-37M164.3 245.7l21.5-37.3M165.6 246.7l20.2-37.6M171.9 254l14.9-37M172.8 255l15.1-36M173.7 256l14.2-36.2M176.1 257.9l13.6-36.3M177.4 258.8l12.4-36.2M178 260l13.2-36.6M178.4 261l13.5-37M181.2 264.5l12.6-37.3M182.6 265l11.5-36.7M183.2 266.6l12-37.9M183.9 267.6l11.8-37.7M188.6 273.6l12.2-40.5M189.4 274.9l12.2-40.4M191.1 276.1l12.4-39.4M192.5 277.4l11.4-41.2M193.5 277.9l11.2-40.8M195 278.3l10.9-40.6M196.8 280.2l11.6-41M202.3 283.2l9.8-40.4M203.3 284.5l8.9-41M207.1 286.3l7.9-41.3M208.7 286.3l7.5-39.6M212.3 288.1l7-39.6M216.4 290.8l4.9-40.9M220.7 293.9l4.4-40M221.7 294.1l5.3-40.3M223.5 294.2l4.1-39.8M224 295l4.4-39.7M228.9 298.1l4-40.2M233.5 300l2.1-40.2M236.9 302.5l2-40.9M240.7 303.1l1.5-39.6M242.6 303.6l-0.2-39.7M245.1 304.7l0-40.5M247.3 305.5l0.1-39.3M250 306.7l-0.6-39.8M251.9 306l-1.9-38.8M253.5 306.7l-2.4-39.5M255.8 307.5l-2.3-38.8M257 308.2l-2.9-39.2M261.6 309.2l-4-37.8M262.2 309.6l-3.3-38.2M264.1 310.2l-4.3-38.5M268.4 311.6l-6-38.3M269.5 312.3l-5.5-38.1M270.4 312.8l-6-37.8M274.8 319.9l-1.8-42.1M275.1 321.2l-1.9-42.9M281.4 324.2l-1-43M283.9 322.9l-2.2-40.9M288.8 319.6l-2.9-35.7M290.4 318.9l-3.2-34.1M292 316.7l-2.2-32M294.8 314.3l-2.7-29.3M296.6 313.1l-2.4-27.8M298.6 310.4l-1.6-25.6M301.1 306.9l-0.9-23M302.3 306.1l-0.4-21.5M302.1 304.2l0.7-19.7M302.9 303.3l0.7-18.5M303.7 302.3l1.9-17M305.8 298.3l2.8-13.1M306.8 296.1l4.4-10.9" stroke="#666043" stroke-width="1.5" fill="none" stroke-linecap="round"/>
<path d="M200.3 37l6.6-1.6M199 37.8l9.1-1.2M198.5 38.8l9.7-0.8M196.1 40.9l13.2-1.1M193.1 42.6l18.2-1.6M189.5 47.2l23 0.5M183.6 49.6l27.2 1.3M184.3 51l24.3 0M181.8 51.8l26.3 0.7M182.4 52.2l25 1.1M182.5 53.4l25.3 1.1M181.3 54.3l24.9 0.5M179.3 56.4l24.4 0.3M175.6 57.4l27.6-0.2M172.5 60.2l27-0.2M174.4 61.3l25.1 0.1M170.6 63l27.3-0.8M170.9 65.3l26.5-0.4M168.2 67.3l29.4-1.5M167.9 68l27.6-1.7M167.4 69.5l28.7-2.2M164.4 73.4l26.3-2.7M162.5 74.6l30-2.8M161.8 76.1l30.1-3.4M160 77.4l31.1-3.5M158.4 77.7l29.7-2.6M160.6 79.2l27-3.4M159.6 80l26.7-3.7M158.1 82l26.1-3.5M157.7 82.9l28.3-3.3M152.3 85.3l29-3.5M153.2 87.3l28.2-3.9M153.4 88.6l29.3-4.5M150.9 92.2l27.7-4.9M150.2 93.2l28.8-4.7M146.9 94.8l32.4-6M146.6 96l32.1-5.6M146.8 98.6l30-6.4M145.6 99.3l29.2-5.8M144 101.1l29.8-6.3M145.7 102l29.7-7.4M145.7 103.2l29-7.5M144.1 107.2l26.3-7.3M142 109.9l29.2-8.5M140.7 113l30.3-9.7M140.3 113.9l27.6-8.3M139.2 117.9l30.3-10.2M139.2 119.1l26.8-9.6M137.9 121.4l30.5-12M138.1 122.2l28.6-10.4M138.7 123.2l29.3-11.6M139 124.7l28.2-11.1M137.9 127.2l26.1-11.2M134.5 129.2l28.5-11.7M135 132.3l28.1-12.1M134.3 133.7l29-12.9M134.2 135.9l27.6-12.9M136.1 136.4l25-12.5M135.5 140.7l27.8-13.9M133.7 147.2l27.4-15.4M134.1 151.4l25.9-15M132 155.8l25.6-15.7M131.7 158.5l27-18.3M133.8 160.6l25.4-18M133.2 163.3l25.4-18.3M133.7 166l24.4-17.6M134 166.6l24.6-17.3M136.2 182.7l22.6-20.2M137 183.5l21.9-19.4M136.5 185l21.5-19.3M139 190.8l21-20.4M138.9 192.4l20.4-20.4M140.3 203.8l19.4-24.3M141.2 204.5l18.1-22.8M140.7 206.3l18-22.9M142.2 206.9l17.4-22.6M142.8 208l17.5-22.5M144.4 207.9l17.5-22.7M143.4 211.3l17.7-23.9M144.9 211.3l17.5-23.8M145.8 216.7l18.2-26.1M149.2 216.8l15.9-23.2M152.1 221.7l16.3-24.4M151.6 224.3l17.1-25.4M154.6 224.8l16.1-24.7M154.4 226.3l17.6-26.5M158.9 230.2l17.1-26.8M159.6 230.6l15.8-25.7M159.5 233.6l19.3-30.1M161.7 238.7l18.3-32.5M164 236.8l18.1-30.2M164 238.8l18.9-31.6M165.6 238.7l18-30.8M165.6 240.7l18.4-31.1M167.1 242.1l16.9-30.6M166.2 245l17.9-33.1M168 245.2l16.4-32.5M169.3 245.2l15.5-31M170.5 244.9l13.4-28.1M170.3 249.3l14.7-32M172.7 251.8l12.8-30.8M174.4 251.6l11.9-28.5M174.7 253.7l12.1-30.6M176.1 255l10.9-30.5M176.1 257.2l12.5-33.6M178.3 254.3l10.3-28.7M179.2 256.5l10.3-28.9M180.4 256.9l10.4-29.4M181.5 260.2l10.4-31.5M188.4 269.5l10.2-32.1M191.4 273.3l9.9-33.3M194.1 273.5l8.5-31.2M195 273l9.2-32.8M199.2 279.5l8.9-36.7M201.5 279.5l8.4-34.4M202.7 280.9l7.6-34.7M208.5 281l6.3-31.4M210.5 284.3l6-34.5M213.7 284.6l5.8-31.7M215 284.9l5.5-30.9M226.2 291.8l3-31.5M227.6 292.1l2.8-32.9M232.1 297.7l2.2-34.2M234.6 297.2l1.7-32.7M236 296.9l1.1-32.4M237.5 296.5l0.8-32.8M238.7 299.1l1.2-35.1M239.4 299.1l1.4-34.3M243.9 302.4l-0.3-35.5M246.3 301.7l-0.2-33.5M247.3 300.4l0-30.9M249.4 300.1l-1.2-32.4M251.9 301.3l-1.9-31.2M253.1 302.3l-1.7-30.9M255.8 303.5l-1.8-31.3M259.7 304.7l-3.2-32.2M260.9 307.7l-3.3-33.9M262.3 308.1l-3-31.8M264.8 305.5l-4.2-29.5M268.4 306.9l-4.3-30.5M270.2 307.7l-4.6-30.4M274.6 310.2l-4.3-29.4M274 312.2l-2.7-30.9M274.6 314.8l-2.8-33.1M275.3 318l-2.9-35.3M275 317.8l-1.6-36.3M278 320.2l-1-39M281.9 318.3l-1.3-33.7M282.9 318.7l-1.7-34.2M284.2 318.4l-2.3-30.9M286.5 317.3l-2-29.2M287.1 317.5l-1.6-29.8M288.6 316.7l-1.5-28.9M290.6 314.2l-2.1-26.7M291.8 314.3l-1.3-27.1M294.2 311.8l-1.6-24.4M296.5 309.8l-1.3-22.2M298.1 308.3l-0.7-21.5M300.4 306l-0.8-19.9M301.8 303.8l0-18.1M303.5 300.7l0-14.2M307.9 294.9l2.9-8.4" stroke="#827957" stroke-width="1.3" fill="none" stroke-linecap="round"/>
<path d="M200.9 36l6-1.4M197.7 39.7l10.3-1.1M196.1 41.7l13.7-1.3M193.9 42.7l17.8-0.2M193.1 43.6l18.7-0.3M190.8 44.6l22.5-0.4M191.3 45.8l20.9-1M189.4 46.5l21.7 0M186.9 47.8l25.2 1M185.7 48.7l26 0.6M178.6 55.5l26.4 0.7M174.2 58.9l29.4-0.6M176.4 59.4l25.6-0.2M171.8 63.8l28.2-0.9M169 64.8l29.1-1.4M168 69.8l24.5-1.1M164.7 71.2l26.8-1.6M163.4 73l28.1-2.7M159.1 80.4l26.8-3.3M154.8 84.1l30.2-3.9M154.2 86.3l30.2-4.5M152.3 89.6l27.9-4M150.4 91.3l29.3-5.5M146.6 97.8l30.1-6.7M145.1 104.6l29.9-7.9M141.7 107.1l31.8-8.8M141.6 109.2l29.7-9M143.4 111.1l29.2-8.5M139.9 116l27.5-9.3M140.7 116.9l26.4-9M136.4 126.5l28-11.5M134.4 130.7l31-12.7M136 133.8l26.7-12.1M135.5 137.2l25-11.2M134.5 139.9l27.1-13.3M134.5 142.4l27.4-13.8M135.3 142.8l24.7-12.7M135 144.2l24.3-12.9M134.8 146.2l25.4-14M132.8 149.9l25.4-15.1M131.8 151.5l28.9-17.3M133.4 153.9l26.4-16.6M132.2 157.3l25.5-17M132.2 160.3l26-18.4M133.6 162.1l23.7-17M133 165.1l24.3-17M132.6 169.7l23.9-18.1M135.3 169.1l22-16.8M135.3 171.2l22.1-17.6M135.9 172.1l21.3-17M134.6 174.7l21.7-18.7M134.1 176.7l24.8-21M135.6 177.2l23-19.6M135.2 178.3l24.2-19.6M135.6 179.8l22-19.5M137.4 179.8l21.9-19.2M135.8 187.8l22.5-21.9M135.5 188.7l23.5-21.2M138.5 188.5l19.5-19M136.2 191.9l22.5-22M137.7 196.2l21.2-22.4M138.1 196.8l22.1-23.5M140 196.2l19-20.5M139.1 199.4l18.9-20.7M141.5 198.4l18.3-20.5M141.5 200.1l17.9-20.6M146.1 213.1l15.7-22.3M146.8 213.5l16.1-22.6M147.1 216.6l17.7-23.5M149.8 217.6l16.6-24M149.2 221.1l17.3-25M149.9 222.6l17-25.8M152.3 224.7l18.7-27.3M155.5 227.6l17.3-26.9M156.1 229.7l18.3-29.1M157.5 230.6l17.7-29.1M161.2 233.7l17.2-29M161.9 234.6l17-27.5M171.7 248.1l13.7-31.2M173.1 248.3l11.6-26.9M181.4 258.6l10.4-31.5M181.8 262.1l10.3-30.4M184.3 260.7l9.6-30.3M183.8 265l10.7-33.5M185.4 263.8l10.2-31.7M185.6 267.1l10.3-33.9M187.8 265.4l9-30.5M188.1 266.3l9.2-29.8M189.4 270.4l10.8-34.5M190.8 270.8l9.7-33.5M192.5 274.4l9.4-33.7M196 277.3l8.5-33.7M197.5 274.6l8.5-31M198.1 277.2l9.1-33.7M200.3 277.3l8.2-31.8M204 280.5l7.8-35.1M205.1 279.8l8-33M207.1 280.5l6.4-33.1M209.5 281.2l5.6-30.5M211.5 284.8l6.1-32.6M212.7 285.7l5.7-32.6M216.3 287.4l5.3-33M217.8 288.1l4.6-33.5M219.2 289.3l3.6-32.3M220.5 288.6l3.5-31.6M221.5 289.3l3.1-32M221.9 291.4l3.9-34.2M223.4 292.2l3.5-33.2M224.6 293.7l4-34.6M228 293.6l3.2-33.3M229.9 294.7l2.3-33.8M230.3 296l2.6-34.1M233.7 294.8l1.4-32.7M241.4 299.7l-0.2-32.2M242.5 301.9l-0.3-35.5M245 301.6l-0.1-31.9M250.7 302.4l-1.9-33.9M253.9 302.6l-1-32.1M257.1 306.1l-2.6-32.8M258 303.8l-2.5-31.6M263.4 307.9l-3.7-32.1M266.1 307.7l-3.4-29.6M267.9 307.5l-4.8-31.9M271 310.7l-4.2-31M273 311.2l-5.6-34.8M273.8 309.9l-4.8-31.1M275.7 318.8l-1.2-36M276.7 318.5l-0.4-32.9M278.5 320.4l-0.5-35.7M280.1 318.8l-1.3-34.4M284.7 316.4l-1.8-28.5M289.4 316l-1.2-29M293.1 314l-2.1-27.7M295.2 312l-1.1-23M296.9 309.3l-1-23.2M299.3 307.3l-1.5-21M300.8 305l-0.5-19M303 302.3l-0.7-16.2M304.2 301l1.1-13.9M305 299.9l1-13.5M305.7 297.7l2.2-10.6M306.1 297l2.5-10M307.2 296l2.9-9.2" stroke="#897f5d" stroke-width="1.3" fill="none" stroke-linecap="round"/>
<path d="M200.9 37.5l5.3-1.3M199 39.4l7.7-0.5M197.7 39.9l11.1-0.1M197.7 41l9.8-1M195.8 41.5l12.3-0.2M193.8 43.5l16.9 0M194 45l15.7-1.3M192.1 45.1l17.5 0.6M192.8 45.9l17.7 0.6M190.2 46.9l20.3 0.1M186.8 50.6l19.6 0.6M187.7 52.1l18.5-0.1M182.6 53.5l22 0.8M184.1 54.2l20.4 0.3M180.7 55.3l20.1 0.8M179 57.2l20.8 0M178.4 59.4l21 0.1M177.1 60.7l22.3 0M175.3 61.6l21.3-0.2M173.7 62l21.3-0.4M175.3 63.9l19.2-0.8M172.3 64.9l21.3-0.7M174.5 65.9l20-0.7M173 66.9l20.6-1.7M170 68.3l21-1.3M170.2 68.5l22.1-1.2M169 71.3l19.4-1.9M167.3 72.1l23.3-2.5M165.9 75.6l21.1-2.2M163.9 76.5l20.3-2.6M160.9 79.8l23.7-3.3M162.5 80.9l22.1-2.9M161.5 81.4l20.9-2.5M158.2 83.9l22-3M156.6 86.5l23.1-4.3M155.4 89.2l23-3.9M152.4 92l22.3-3.8M152.2 95.2l21.1-4.5M152.1 96.3l21.2-4.3M146.5 100.5l25.4-5.9M145.6 105.6l24.6-6.6M146.4 106.6l21.8-6M142 116.4l23.8-8.8M143.1 116.6l21.8-8M143.7 117.6l21.6-7.8M142.3 120.8l22.7-8.3M141.5 122.4l21.8-8.7M141.3 125.5l21.2-8.9M140.3 127.4l22.5-9.4M137.8 133.4l21.5-10.1M137.6 135.5l21.1-9.5M136.7 137.6l20.8-9.8M137.7 138.5l21.4-10.8M137.4 142.4l20.9-10.9M136 143.4l22.6-11.6M136 150.4l19.9-12.1M136.6 153.9l19.5-12.5M136.8 158.3l18.1-12.9M135.4 162l19.5-13.1M138.2 163l16.8-12.4M136.1 166.1l19.1-14.3M137.6 165.4l18.3-13.4M139.6 172.6l15.1-12.8M138 176.2l17.7-14.7M140.1 180.2l15.4-13.3M139.3 185.1l16.4-16.7M138.9 190.8l17.7-17.8M139.8 191.3l16.9-17.6M140.1 193.8l17.3-17.4M141.3 196.7l15.5-17.7M143.2 198.5l13.4-15.5M143.6 200.1l12.7-15.9M144.2 203.7l13-17.5M148.7 210.7l13-17.2M147.9 213.2l15-20M149 215l13.2-19.7M152 216.2l13.7-18.8M155.8 222.1l11.9-17.3M158.1 224.5l12.8-20.5M159.3 227.6l13-21.7M159.1 228.7l15-22.3M162.4 231.1l13.5-21.9M165.2 232l14.3-23M165.1 236l14.5-23M166.7 236.6l13.3-22M171.3 245.1l11-24.4M175.2 246.9l9.1-22.8M176.2 248.4l8-21.8M176.7 250.2l9.1-25.2M177.2 251.5l8.7-24.3M179.2 250.8l8-23.6M181.1 251.7l6.7-20.7M183.5 256.3l7.5-23.6M183.4 258.9l8.2-26M185.3 261l8.3-26.1M186.5 261.1l7.1-23.9M188.3 263.8l6.6-23.5M189.9 268.1l8.1-27.9M191.4 267.1l7.3-24.9M192.3 269.5l7.9-26.4M193.5 269.7l6.5-24.2M196.1 270l6-23M196.7 273l7-26.7M200.5 274.7l6.7-26.3M202.4 275.1l7-27.3M205.1 275.7l5.4-23.5M209.9 277.7l5.6-25.7M211.9 279.7l5.3-26.2M221.3 286l3.7-25.2M222.8 286.9l2.5-25.6M227.3 290.5l2.4-25.8M228.4 288.4l2.4-24.8M230.9 289.6l2.2-23M231.9 293.6l2-28.7M234.5 293.3l1.9-26.7M236 294.6l0.8-27.1M238.3 295.8l0.6-25.5M239.9 294.5l0.1-23.4M244.8 297.6l0.3-26.2M246.4 296.2l-0.8-23.7M247.4 298.4l0.1-24.1M253.6 298.6l-1.2-23.6M255.7 299.2l-1.5-22.3M256.4 301l-1.3-23.7M258.9 300l-2-23.8M263.4 302.1l-3.1-21.1M266 302.7l-3.3-24.6M272.3 306.1l-4.6-23.6M274.2 308.3l-3.5-25.2M274.9 313.6l-1.8-28.6M275.4 314.5l-1.2-29.3M276.1 316.2l-1.4-31.1M276.3 315.2l0-29.7M277.5 314.9l-0.3-28.7M280.2 316.8l-0.9-28.4M283.6 314.3l-1.4-26.1M288.7 310.9l-2-18.3M292.1 311.6l-1.5-20.8M293.1 309l-1.2-18.9M293.9 308.5l-1.2-17M298 304.7l-0.4-14.4M299.1 304.7l-0.3-14.9M299.9 304.1l-0.4-13.7M300.6 302.5l-0.4-14.1M302 302.2l-0.7-14.8M303 300.4l1.2-12.9M304.7 298.3l0.4-10.3M305.3 298.6l0.9-11M305.9 297.1l1.5-9.3M306.9 296.2l1-9M306.8 295.3l2.2-7.9M308.3 294.1l2.1-6.6" stroke="#978d68" stroke-width="1.2" fill="none" stroke-linecap="round"/>
<path d="M201.9 36.1l4.1-0.7M199.9 38l7.1-1.3M199.5 38.9l7.9-0.8M195.2 42.7l14.4-0.2M191.1 48.5l16.8 0.2M187.8 48.7l18.8 0.4M188.7 49.9l18 0.6M186.9 52.7l17.1 0.1M180.9 56.1l20 0.9M180 58.3l20.1 0M170.5 70.1l19.6-2M167.9 73l20.2-1.6M164.9 74.1l22.7-2.3M164.6 77l20.6-1.7M163.7 78.2l19.2-2.5M159.7 83.1l19.8-3.1M157.8 85.3l21.7-3.4M154.9 86.9l23.2-2.8M156.4 87.7l20.1-2.6M154.7 90l21.6-3.5M151.3 93.7l21.9-5M151.4 94.5l24.6-4.5M149 97.5l23.6-4.2M150.9 98.5l19.6-4M148.3 101l22.4-4.9M146.1 103.2l23.1-6.1M146.7 103.7l22.1-5.1M145.5 108.5l24.2-7.4M145.6 108.8l21.4-6.3M145.9 109.9l21.1-6.7M145.9 110.8l21.2-5.9M143 112.9l23.2-6.7M142.8 114.9l21.6-8M142.5 119.9l19.3-7.5M142.6 123.2l18.3-7.1M139.6 125.6l23.8-9.9M138.7 129.6l22-10.2M138.2 130.1l22-9.1M138.6 131.5l21.8-9.7M139.2 134.1l18.3-9.2M137.3 139.8l21.1-11M136.2 141.3l23.3-11.9M135.7 145.3l23-12.7M136.6 145.6l20-10.8M136.3 147.8l21.3-11.9M136.9 148.2l19-11.5M136.8 151.7l19.9-13.3M135.1 153.2l21.4-13.3M135.4 156.5l20.3-13.6M135.8 157.9l18.2-12.1M137.4 159l16.5-11M134.8 163.3l20.8-14.7M138.1 166.9l16.2-12.2M136.6 170.2l18.4-15M138.1 170.6l16.7-14.1M137.3 172.4l17.2-13.9M138.9 174l17.5-14.2M139.4 176.3l15.3-12.9M139.8 177.5l15.4-13M140.1 178.7l14.8-12.7M139.3 182.8l15.6-14.6M140.1 184.4l14.9-13.4M140.3 186.3l16.5-15.1M140.3 188.3l17.3-16.9M140.4 193.4l16-16.8M141.5 194.2l14.1-15.4M141.1 198.7l15.8-18.1M143.1 201.7l14.8-17.7M144.3 203.8l14.2-17.3M144.3 206.5l14.5-19.1M145.9 206.5l11.8-16M146.5 207.6l14.3-18.8M147.7 208.1l12.5-16.7M147.3 210.7l12.8-18.1M150.2 214.6l12.2-16.6M151.4 215.3l13.3-18.6M153.3 217.9l12.3-18.7M152.8 219.9l13.5-19.9M154.8 220.4l11.9-18.8M154.3 222.4l13.8-20.1M156.2 224.6l12.9-20.6M159.1 224.3l12.7-18.7M161.2 229.7l14-24M160.5 231.4l14.9-22.2M164 232l12.4-21.7M165.1 234.6l15-24.2M168.9 235.7l12.6-22.8M168.9 237.8l12.2-22M169 240.9l13.6-25M169.8 240.6l12.8-25M170.9 242.6l10.1-22.4M173.1 243l10.5-23M173.4 244.8l9.6-21.4M174.4 245.5l9.4-22M179.8 251.9l7.3-20.8M181.1 254.8l8.6-25.1M181.6 256.1l8.2-25.1M184.6 259.2l7.8-23.7M187.8 261.5l6.9-23M188 266l8.8-26.3M189.6 265.5l8.2-25.3M194.2 271.3l7.1-25.6M198.6 271l5.9-23.8M199.7 271.5l6.1-23.4M201.6 275.1l6-24.9M203.7 277.5l5.6-27M206.4 275.5l5-24.4M207.7 277.9l5.3-26.3M208.5 276.4l4.9-23.3M210.8 280.9l5.4-28.4M214.1 279.4l2.9-21.6M214.9 279.5l4.2-22.5M216.2 281.5l4-25.1M217.2 281.6l3.7-24.7M218.6 282.3l2.5-22.1M219.8 284.9l2.9-23.6M220.4 283.7l3.2-24.6M224 286.5l2.8-25.2M224.6 289.2l3.6-27.8M226 289.8l2.5-24.5M229.7 290.6l1.7-23.9M233.2 293.7l1.6-26.4M237 292.4l1.5-22.7M241.2 296.9l0.3-24.7M242.6 297.9l-0.2-25.5M244.1 297.2l-0.3-27.3M249 296.6l-0.8-24.8M250.1 296.5l-0.9-23.8M251.6 299.6l-1.3-24.7M252.8 298.2l-1.8-24.9M258.2 301.8l-2.2-26M261 302.8l-2.6-25.6M262.1 302.8l-3.1-23.8M264.5 302.5l-3.6-23.8M266.9 303.8l-3-24.8M267.8 304.9l-2.9-22.6M269.7 304.5l-3.2-22.4M270.9 304.6l-3.8-23.1M273 308.3l-3.8-25.2M273.6 307.4l-3.9-25.6M274.3 311.8l-2.2-26.5M279 315.6l-0.9-28.2M281.7 314l-1-25.2M282.7 315.5l-1.9-28.1M285.2 316.3l-2-24.5M286.5 314l-1.7-25.2M287.4 312.9l-1.3-22.9M289.1 312.6l-0.6-20.5M290.3 310.2l-0.6-18.3M295.2 307.8l-1.5-17.6M295.9 308.9l-0.6-18.2M296.7 306.8l-0.9-17.6M303.1 300.7l-0.6-12.4" stroke="#9d936d" stroke-width="1.2" fill="none" stroke-linecap="round"/>
<path d="M201.9 37.9l3.7-0.4M201.1 39.1l4.9-0.1M198.8 41.2l7.7-0.2M197.7 43.2l10.5 0.1M195.1 44.1l12.9-0.2M196.4 45.3l11.8 0.1M193.5 47.3l13.5 0M192.3 50.3l12.7 0.6M188.6 52.4l13.6 0.9M185.7 55l15.9-0.1M183.2 56l14.1 0.6M184.7 57.6l14.5 0.3M182.8 58l12.8 0.3M179 61.2l16-0.5M178.8 62.7l14.7-0.2M179.7 63.9l14.2-0.8M177.9 64.5l13.2-0.4M174.9 66.6l15.2-0.5M170.6 72.8l13.6-1M169.4 73.6l16.2-1.5M167.5 77.3l14.5-1.6M166 78.9l15.2-2.1M162.8 81.2l14.5-1.4M160.3 85.9l16.5-3M158.7 87l17.3-3.3M157.1 88.7l18.2-2.4M156.5 90.3l16.5-3.4M156.3 93.6l15.6-3.5M154.1 95l14.6-3.6M152.8 95.8l16.1-3.1M151.9 97.7l17.7-4.5M152.9 98.1l15.4-3.4M151.8 102.5l15.1-3.5M148.8 104.7l17.6-5.3M149.4 106.1l16.5-5.4M149.6 108l15-4.5M146.1 113.7l17.1-6.2M147.6 115l13.2-3.7M145 118.7l16.9-6.7M144 123.1l14.3-5.1M142.4 125l16.4-6.1M142.6 126.4l15.8-6.4M143.2 127l13.1-5.4M141.6 132.9l13.8-6.9M140.4 134.6l16.9-8.2M141.6 137.7l14-7.3M139 141.7l13.8-7M139.6 151.1l13.5-8.2M140 160.5l11.1-8.1M139.3 161.9l12.7-9M141.4 166.2l10.2-8.4M140.4 169.7l11.6-9.1M141 172.4l10.8-8.6M142.4 173.3l9.1-8.8M141.4 177.3l10.4-8.9M142.9 181.3l11-11.1M141.2 183.6l11.8-11M143.4 186.2l9.2-9.5M144 187.2l10.9-10.5M142.2 190.7l12.3-12.9M144.3 191.4l10.3-10.7M145.3 195.6l9.6-11.7M147.5 199.1l7.8-10.8M148.1 205.5l9-12.1M149.1 207.9l8.9-11.3M151.1 211.6l9.2-13M153.6 212.6l7.9-12.2M155 213l7.9-12.2M155.5 218.2l9.4-14.9M158.2 219.2l8.5-12.4M158.4 220.7l10-15.2M159.6 221.4l9-12.8M160.1 222.9l9.4-14.3M164 224.7l7.4-12.6M164 226.8l10.3-16.2M165.7 227.2l8.4-15.6M164.7 229.5l9.4-15.7M165.8 231.3l10.4-17.5M167.8 232.9l9.9-16.8M171 235.3l7.8-15.6M171.5 236.7l8.7-17.8M173.3 236.6l8-15.4M174.4 242.8l7.9-17.3M176.7 240.8l5.5-12.8M177.3 243.7l5.6-13.2M177.2 246.8l6.3-16.5M179.3 246l5-14.3M181.3 250.7l6.4-18.1M183.6 250l5-14M185.3 253.3l5.5-16.9M187.9 256l4.2-14.1M189.5 257.9l5.1-17.2M192.2 262.2l5.4-18.6M193.2 262.3l5.2-17.3M195.1 264l4.8-16.1M195.9 266.4l4.9-17.6M200.1 269.6l5.2-19.2M200.5 271.9l5.7-19.6M201.9 271.8l4.5-17.7M208.4 274l3.4-17M209.2 275.7l3.4-18.4M210.6 275.7l3.5-19.4M211.9 275l3-17.4M214.5 277.2l2.7-18M214.7 279.1l3.8-18.2M217.4 278.3l2.4-17.9M221.6 280.3l1.6-15.6M223.3 284.4l1.9-18.1M224 283.7l2.4-17.4M226.6 285.3l1.8-18.5M228.5 287.6l1.8-19.4M229.9 286.6l1.3-16.2M231.7 286.6l0.6-18.2M235.1 288.9l1.2-15.3M236.5 289l0.3-18.3M237.3 290.4l0.5-18.8M239 291.3l0.3-19.2M239.7 293l0.6-20.2M240.9 292.3l0.7-17.7M242.5 292.5l0.1-18.9M247 292.8l-0.3-14.5M249.9 296l-0.3-17.6M252.1 296.5l0-18.2M254.2 297.6l-1.1-19.9M256.5 298.4l-1.8-19.9M257.5 295.7l-0.9-16.4M260.4 299.8l-2.1-19.5M262.9 300.7l-2.2-16.8M263.7 301.2l-1.7-19.4M265.6 301.1l-2.8-16.8M269.5 300.4l-1.9-13M273.2 305.4l-2.8-16.8M274.4 310.7l-0.1-19.1M278.9 310.3l-0.6-17.9M282 311.5l-0.6-19.5M284.4 309.2l-0.7-15.5M290.1 307.8l-0.7-12.7M293.1 305.6l-1.4-11.5M293.3 305.7l-0.3-11.2M295.2 305.4l-0.8-12.2M296.6 304.3l0.1-12.3M297.6 302.7l-0.6-9.5M304.3 298.3l0.4-8.5M307 295.6l1.1-7.3M307.8 294.1l0.9-5.7M307.9 293.7l2.6-4.5" stroke="#ada379" stroke-width="1.0" fill="none" stroke-linecap="round"/>
<path d="M202.5 35.8l3.4-0.3M202.7 36.9l3-0.2M200.9 38.1l5-0.3M198.9 40.4l6.9-0.4M197.2 41.7l10.1-0.4M197 43.1l9.5-0.8M195.2 45.8l13.5 0.3M192.7 48.7l12.6-0.4M192.9 49.2l11.3 0.4M190.3 51.4l13.1 0.4M188.5 51.6l15.2 0.2M186.5 53.7l13.8 0.6M186.6 55.3l13.3 0.4M180.3 59.6l15.4-0.6M181 60l13.1 0.7M175.6 65.8l14.2-0.7M174.8 67.6l13.1-0.6M173.3 68.3l15.3-0.2M172.1 69.8l14.7-1.1M172.5 71.1l12.6-1.3M173 71.9l12.5-1.6M168.1 75l14.9-1.9M167.3 76.3l13.5-1.5M166.7 77.8l12.8-1.7M162.6 80.6l17-2.8M162.4 82l16.4-2.2M162.7 83.1l15.6-1.5M161 84.4l14.9-2.4M157.5 88.4l18-3.3M157.2 91.3l14.8-2.6M154.8 92.7l16.5-3.6M153.4 99.1l13.2-2.7M152 100.7l14-3.7M149.5 102.6l17.2-5M147.8 106.9l17-4.2M147.3 109.4l15.2-4.2M148.8 110.3l14.5-4.9M146.5 112.4l17.7-5.7M147.8 114.7l14.3-5.5M147 116.8l12.5-4.7M144.8 119.8l16.2-6.4M142.9 121.8l14.7-6.2M145.3 122.5l13.4-6M141.1 128.9l17.5-6.7M140.6 130.8l14.9-7M140.3 131.9l16.9-7.4M139.7 135.4l15.2-6.9M141.5 136l14.7-6.5M140.9 139.3l12.2-7.1M139.8 140.4l13.6-6.4M138.4 143.5l14.2-7.9M138.2 145.4l14.8-8.1M140.1 145.6l13.3-8M141.1 146.2l13-7.8M138.6 149.2l14.5-9.1M139.5 149.4l14.5-8.8M138.4 152.6l12.6-7.5M137.5 154.5l14-8.2M138.4 156.1l14.1-10.1M140.6 156.2l12-9.3M138.8 157.9l14.1-10.1M139.7 158.8l13-8.7M139.7 163.5l13.9-10.7M138.9 165.1l13.5-10.6M139.2 166.4l14.2-11M139.8 168.7l13.1-10.6M140.2 170.9l11.6-8.8M140.6 175.7l11.9-10.9M142 175.7l11.7-10.8M142.1 178.4l11.3-10.4M142.7 180.2l8.8-9.3M142.3 184.5l12.3-12.3M143 185.1l11.5-11.5M143.7 190.1l10.8-10.7M145.4 192.4l9.3-10.3M145.1 194.7l9.4-10.8M144.3 198.3l11.3-12.7M145.8 198.9l9.5-12.7M147.4 199.9l9.3-11.8M147.5 201.7l8.4-10.3M147.8 203.8l9.1-12.1M149.1 206.1l8.2-11.6M149.8 208.7l10.4-13.4M151.9 208.8l7.4-10.5M152.6 212.8l8.5-13.7M154.8 215.9l8.6-13.2M155 217.3l10-15.3M157.5 217.9l8.2-13.2M160.1 225.3l9.4-15.4M163 223.2l7.4-11.5M166.7 232l9.9-16.1M168.1 234.4l11.1-18.6M169.1 234.9l9.2-16.2M171.3 238.7l9.4-19M172.8 240.2l7.6-17.2M174.2 240.3l6.5-14.4M176.9 243l5.2-13.3M179.7 249.1l6.5-18.4M180.8 247.8l5.4-14.4M181.7 252.6l5.8-15.8M183.2 254.3l6.3-17.3M186.3 254.6l3.9-14.1M187.2 254.1l5.5-15.7M189.5 256.1l3.7-13.2M190.2 259.8l5-15.9M190.7 260.1l6.4-17.2M193.8 263.8l5.3-17.8M196 268.4l6.8-20.9M198.2 266.1l5.3-17.6M199.4 266.5l3.9-15.8M203.9 269.5l4.6-16.9M204.6 273.4l4.2-18.3M206.4 271.7l3.3-16.3M207.2 272.9l3.5-17.2M212.9 276.7l3-16.9M216.3 276.9l2.4-15.3M218.8 281.5l1.8-18.9M219.8 280.4l2.4-15.5M221.8 281.7l2.1-17.4M225.9 284.6l1.1-18.4M227.4 285.4l2-16.7M232.2 286.8l1-14.3M234.1 290.1l0.3-17.2M243.2 293.9l0.5-18.5M244.8 293.9l0.1-18.3M246.6 293.9l-0.5-16M248.3 293.4l0.5-16.5M251.5 294.5l-0.9-16.3M255 298.5l-0.6-19.8M258.9 299.1l-1-16.4M260.9 297.7l-1.6-17.1M266.3 300l-2.1-15.6M267.8 301.2l-2.5-17M269 302.7l-2.5-19.2M271 302.4l-2.3-16.4M272.8 302.9l-2.1-16.8M274 305.4l-2.7-17.3M273.5 305.4l-1.5-15.8M274.4 307.9l-1.7-18.3M275.7 311.9l-0.9-20.4M276.1 309.1l-0.3-18.3M277.6 313.8l-0.9-20.4M279.6 313.2l-0.6-18.6M281.2 312.6l-0.5-20.5M283.5 311.8l-1.2-18M285.3 308.3l-0.3-13.6M287.3 308.3l-1.1-12.8M288.2 309.7l-0.8-15.2M289.5 309.5l-0.8-15.9M291.8 308.2l-1.2-15.2M295.6 305.2l-0.8-12M298.6 301.7l-0.1-9.5M300.1 301.6l-0.7-11.4M301 300.4l-0.1-8.3M302.1 300.1l-0.8-10M302.4 299.1l0.5-7.5M303.4 298.4l0.7-8.7M305.5 296.7l0.9-6.8M305.6 295.2l1.4-5.5" stroke="#b3a97e" stroke-width="1.0" fill="none" stroke-linecap="round"/>
<path d="M202 39.3l1.8 0M200.3 43.6l5.2 0M198.7 45.6l5.9-0.6M193.8 48.7l9.8 1.2M195.3 49.8l6.9 0.8M193.1 52.6l6 0.3M189.9 54.1l7.8 0.1M183.5 62.1l7.2 0.3M177.6 68l6.3 0.3M175.4 70.1l7.8-0.1M173.1 74.3l6-0.1M168.3 77.9l9.3-1.3M164.1 82.4l9-1.8M164.8 82.7l8.2-0.7M162.4 86.1l8.5-1M162.5 88.1l5.6-1.1M160.5 91.8l6.4-1.8M158.4 92.4l10-2M157.2 98.4l6.5-1.5M152.5 104.8l7.7-2.7M150.4 110.8l8.5-3.1M150.2 117.2l5.5-2.6M147 119.6l8-2.1M149.2 120.2l7.9-3.1M145.6 122.5l7.9-3.4M147.2 122.9l8.6-3.1M145.5 126.5l8.5-3.8M145.2 129.1l7.4-3.8M143.6 135.7l7.3-4.6M144.1 138.5l6.3-3.7M140.9 146.5l7.9-4.9M142.6 146.3l6.5-4.2M141.6 148.3l7.1-4.1M140.6 152l9.3-6.1M142.6 156.9l7.7-5.5M144.6 166.7l5.5-4.4M142.7 170.4l6.1-4.5M143.6 172.8l5.3-4.6M144.6 174.8l7.1-6.1M146.2 183.3l3.5-3.7M146.8 184.5l5.1-4.7M146.3 192.8l5.5-6.1M147.5 193.8l4.3-4.8M148.1 195l4.8-6.7M149.2 197.8l3.4-4.9M150 201.1l3.5-5.4M150.3 203.4l5.3-8.1M151.7 204l4.6-6.1M152.8 205.1l5-6.6M154.7 208.4l5.4-7.3M158.6 212.9l3.1-4.7M159.6 215l3.6-5.5M160.1 216.5l4.4-7.3M171.5 232.2l5.9-11.7M173.3 234l5.4-9M174.3 234.7l3.5-7.6M174.5 236.6l4.3-8.8M175.8 239l4.9-11.7M180.3 245.4l4.4-11.6M186 252.4l3.1-11.6M187.8 252.9l3.2-10.2M189.2 254.1l3.2-9M190.1 257.1l3.4-9.6M191.1 257.8l3.5-11.9M191.5 258.7l4.2-11.7M194.1 260.1l3-10.1M201.6 263.8l2.5-8.4M204.2 268.1l2.4-10.7M209.1 268.7l2-8.7M212.3 272.9l1.6-9.2M216.2 272.9l1.7-8.4M219.1 275.9l1.6-10.9M223.6 278.1l1.6-9.2M230.3 284.8l1.5-13.1M231.5 285l0.5-10M232.3 285.2l1.4-10.8M236.7 288.1l0-13.9M237.7 285.6l0.1-8.1M239.2 288.5l0-9.7M242.4 287.1l0.3-8.9M243.3 287.5l0.4-6.6M247.4 288.7l-0.2-9.2M250.2 289.4l-0.8-5.3M252.6 290.8l-1.1-9.1M253.2 291.4l-0.3-6.3M255.9 293.3l-0.2-8.7M262 297l-1.2-10.6M265.2 298.6l-1.3-10M273.6 302.4l-0.2-8.2M274.9 304.8l-0.7-8.4M275 305.6l0.4-10.6M277.3 307.1l0.1-10.7M279 307.5l-0.4-8.6M280.9 307.7l-0.6-9.8M283.3 308.4l-0.9-12M284.5 305.9l-0.6-9.3M291.4 305.7l-0.7-9.9M291.9 302.7l-0.1-7.4M293.3 302.1l-0.2-4.6M294.3 302.7l-0.4-5.8M297.3 299.6l0.2-3.6M300.2 299.2l-0.7-4.9M301.5 297.8l-0.1-5.4M303.4 295.6l0.8-3.3M304.1 296l0.9-3.9M305.7 294.3l1.3-3.7M307.7 292.9l1.5-3.3M308.9 291.4l0.8-1.6" stroke="#c6bd90" stroke-width="0.9" stroke-opacity="0.8" fill="none" stroke-linecap="round"/>
<path d="M202.7 36.8l2.5-0.8M199.9 42.2l4.6 0.2M199.3 44.5l5.2-0.2M196.6 48.5l6.6-0.5M192.1 51.8l5.9 0.6M187.8 55.5l8.4 0.7M187.3 56.4l7.3 0M187.2 58.4l4.4 0.1M185.7 58.9l7.2 0.3M183.9 60.8l8.7-0.9M182.1 63.6l6.8 0M179 67l5.2-0.2M176.3 71.5l4.3-0.9M171.5 75.9l8.6-1.3M167.5 78.9l10-1.1M166.9 80.3l8.2-0.1M162.8 89.2l6.2-1.3M156.3 95.6l10.7-2.5M157.8 96.3l9-1.8M154.7 102.2l8.2-2.3M151.6 105.8l8.9-2.2M151.8 108.9l6.7-2.2M150.1 109.5l8.2-2.2M148.7 113.5l9.4-2.7M148.3 115.2l8.1-3M148.6 118.2l6.7-2.5M147.2 126.2l6.3-2.3M145.8 130.1l5.6-2M142.4 140.3l9.3-5.1M142.8 141.3l6.5-3M144.1 143.5l4.5-3.3M143.8 148.9l5.6-4.5M143.3 155.3l4.5-3.3M142.5 158.9l7.8-6.2M142.5 160.3l5.4-4.9M143.4 162.2l5.2-4.5M142.9 166.3l6-5.1M143.1 168.9l7.9-6.4M143.1 171.9l7.7-7.1M144.4 173.6l6.4-5.5M145.6 180.3l6.2-5.9M143.5 182.7l8.3-7.8M144.3 183.8l8-7.6M144.8 187.9l7.2-7.2M145 192.7l7.1-7.5M149.1 195.9l5.4-5.8M151.3 203.7l5-7.7M156.2 210.2l5.9-7.1M156.9 211.4l5.4-6.9M168.1 224.7l4.1-5.9M168.4 226.2l5.4-9.6M170.5 225.2l4.8-7.9M171.8 233.2l5.8-10.5M178.8 239.2l2.4-7.5M180.1 241l3.1-8.8M181.5 245.6l3.3-8.2M185.6 247.6l2.5-5.6M187.8 251l2-7.1M189.4 251l1.8-6.3M195.7 258.6l2.4-7.5M196.6 259.8l2.1-6.7M197.8 260.8l2.8-10.8M198.2 261.9l3.3-10.8M199.4 263.9l2.5-10M202 267.3l2.9-11.1M206.1 265.8l1.8-9.1M214 271.1l1.3-7.9M217.6 274l0.5-9.4M220.5 275.1l1.2-7M221.4 279.1l0.7-9.1M225.7 279.4l1-8.7M229.3 283.8l0.8-10.4M235.1 285.2l0.6-8.6M241.4 286.5l-0.3-8.3M245.7 287.8l0.1-7.4M249.2 291.6l-0.8-10.2M250.9 292.7l-0.5-11.3M254.8 294.1l-0.4-10.5M258.4 293.7l-0.8-6.9M263.7 295.9l-1.4-7.3M266.7 296.2l-0.9-10M271.6 298.1l-1.6-8M273 301.5l-1.5-9.4M279.9 309.2l-0.5-12M281.8 306.4l0.1-10.4M296 302.6l-0.9-6.9M299.3 301l-1.2-8.4M300.8 299.8l-0.2-6.4M305.3 296l0.3-4" stroke="#ccc396" stroke-width="0.9" stroke-opacity="0.8" fill="none" stroke-linecap="round"/><path d="M203.4 40.8l3.6-0.2M189.2 49l3.7 0.1M196 53l4.9 0.1M171.5 66.8l3.8-0.2M171 71.9l5.7-0.5M175.4 73.3l4.6-0.4M171 74.7l4.8-0.5M170.5 75.7l5.5-0.6M172.1 81l6.3-0.8M171 82.1l7.5-1.1M167.5 84.5l6.3-1M169.3 86.1l7.8-1.2M153.8 96.9l5.5-1.2M152.1 98.4l8.1-1.8M154.7 105.3l7.8-2.2M145.3 110.3l4.6-1.4M152.1 122.3l5-2.1M148.9 132.6l5.7-2.9M135.7 153.4l6.2-4M136.3 161.3l3.4-2.4M139.8 161.6l4.1-2.9M149 157.5l5.9-4.4M141.9 177.4l5.3-4.7M140.8 184.3l5.1-4.8M149 185.2l2.7-2.9M150.2 191.7l2.5-3.1M145.9 200.5l4.9-6.2M151.5 200.8l5.1-6.8M147.8 209.9l3.2-4.4M156.7 201.6l5-6.9M159.6 210.2l2.1-3.1M159.9 221.1l3.8-6M167.8 215.7l3.3-5.3M170.2 214.1l3.7-5.9M171.3 219.5l2.5-4.2M167 233.7l3.7-6.1M171.4 240.7l2.8-5.6M180.1 231.9l2.6-6.1M177.9 240l2.9-7.1M183.7 234.2l1.4-3.6M185.9 251.2l3-9M191.2 260.3l1.4-4.5M190.5 266.7l2.1-6.8M202 272.8l1.5-6.4M206.5 259.4l1.9-8M209.3 263.2l1.7-7.7M208.1 274.8l2-9.5M212.9 269.9l1.3-6.9M216.1 280.5l0.8-4.8M220.5 285.3l1-8.6M229 272.8l0.7-7.9M231.3 273.1l0.5-7.2M236.5 283.4l0.2-4.7M237.2 294.4l0.3-6.8M243.7 283.5l0.1-8M258.8 296.8l-0.5-5.2M265.4 293.2l-0.5-3.7M267 296.6l-1.2-8.8M272.3 297.9l-0.6-4.7M275.5 308.3l-0.2-7.1M282.6 315.6l-0.3-5.2M293.3 299.4l-0.5-6.7M298.7 298l-0.2-5M304.5 295.7l0.2-2.9" stroke="#ddd5a8" stroke-width="0.8" stroke-opacity="0.7" fill="none" stroke-linecap="round"/>
<path d="M204.8 35.4l1.4-0.4M204.4 38.1l2.1-0.2M199 41.8l2.2-0.1M199.9 46.3l5.3 0.1M189.4 48.1l6.9 0.2M196.5 51.1l5.2 0.2M185.9 57.5l4.6 0M189.9 59.4l4.4 0M192.1 60.3l6.2 0M182.6 61.4l4.7-0.1M189.7 62.2l6.4-0.1M163.3 77.5l4.6-0.6M153.5 95.9l7.5-1.5M159.3 98.8l3.8-0.9M163.1 100.9l6.4-1.7M146.1 111.2l6.2-1.9M145.2 113.8l5.5-1.8M156.8 111l7.2-2.5M143.6 117.9l5.5-2M151.8 118.2l5.4-2.1M151.4 128.1l7.5-3.5M140.6 146.4l5.4-3.1M137.7 153.5l7.4-4.8M146.9 151.3l3.5-2.4M148.2 154.2l3.8-2.7M139.7 170.5l3.7-3.1M149.8 167.6l5.1-4.4M150.7 168.2l6.4-5.7M140.7 187.5l4.5-4.4M141.5 189.9l5.6-5.8M153 196.9l4.4-5.9M153.6 214.7l2-3M159.2 215.2l4.7-7M166.9 229.1l4.1-6.8M173.8 229l4.7-8.4M174 231l2-3.8M183.3 248.4l1.3-3.8M186.6 252.8l2.6-8M190.7 243.6l1.7-5.1M191.9 247.3l1.3-4.4M188.9 264.2l1.8-6M193.2 262l2.5-8.6M200.5 263.1l2.3-8.7M207.7 259.5l1.3-5.5M209.8 273l1.9-9.7M212.2 267l1.1-5.5M214.6 267.4l1-5.5M226.8 271.1l0.9-8.3M232.8 284.4l0.4-5.9M246.2 294.4l-0.1-8.1M247.4 288.4l-0.1-7.2M254 298.4l-0.5-8.8M256.8 286.5l-0.4-4.6M262.5 297.7l-1-8.4M269.3 296.6l-0.8-5.2M272.5 304l-0.7-4.6M274.1 304.9l-0.3-4.5M277.5 311.8l-0.1-5.5M283.3 306.5l-0.3-5.4M284.2 301.5l-0.6-9.4M289.8 299.7l-0.3-5M290.8 296.6l-0.4-4.2M292.9 309.6l-0.4-4.9M299.9 300.3l-0.1-2.5M302.7 294.4l0.1-4.7M303.5 299.1l0.1-2.2M307.9 292.7l0.8-2.6M308.4 293.1l0.6-1.7" stroke="#d3ca9e" stroke-width="0.8" stroke-opacity="0.7" fill="none" stroke-linecap="round"/><path d="M208.2 39.6l1.8-0.1M207.6 41.4l2.9-0.1M207.5 44.3l3.9-0.1M187.2 49l3.6 0.1M200.4 51.2l4.4 0.1M182.4 53.6l4.5 0.1M177.2 57.4l5.7 0.1M199.5 59.4l3.1-0.1M174.7 63.5l4.7-0.1M169.8 72l4.1-0.4M162.3 76.6l4-0.4M178.6 77.5l3.4-0.4M183.1 77.8l5.6-0.7M171.6 87.6l5.7-1M172 88.4l6.2-1.1M151.7 96.3l3-0.6M152.2 97.3l3.6-0.8M168.5 98.5l2.9-0.7M141.8 115l5.5-1.9M143.4 118l5.1-1.9M164 111.5l3.1-1.2M138.8 126.8l3.3-1.4M159.2 124.5l4.4-2.1M151.7 131.2l3-1.5M157.2 129.5l3.8-1.9M155.7 145.3l3.5-2.4M137.2 159.3l3-2.1M149.7 159.6l3.9-3.1M137.6 173.7l4.2-3.5M156.3 165.8l2.2-2M143.7 197.7l3.8-4.4M152.8 190.1l1.9-2.3M159.3 190.3l1.9-2.5M160.9 193.8l2.5-3.4M158.4 201.3l3.1-4.4M149.9 215.6l1.6-2.3M151 218.4l2.3-3.2M154.9 217.3l3.2-4.8M167.2 235.9l3.5-6M168 237l3.2-5.6M180.3 222.8l1.5-3.2M176.3 244l1.8-4.5M177.9 249.6l2.3-6.2M186.4 229.9l1.6-4.3M180.4 253.1l1.2-3.4M189.9 242.5l2-6M192.5 238.1l1.4-4.6M188.5 261.7l1.5-4.9M195.5 242.9l1.3-4.4M190.2 271.9l1.1-3.6M196.1 269.8l0.9-3.2M202.8 254.6l1.5-5.9M213.3 261.7l1.2-6.2M219.9 280.1l0.7-4.9M224.1 265l0.4-3.1M222.3 291.1l0.6-5.7M241.1 294.8l0.1-5.3M274 309.3l-0.5-3.2M273.9 306.2l-0.4-3.9M275.9 286.5l-0.1-7.6M278.2 292.1l-0.1-4.2M288.2 293.3l-0.3-4.1M291.6 307.2l-0.4-4.6M302.6 301.4l0.1-2.6M304.2 300.4l0.1-1.7M305.8 296.9l0.3-1.7" stroke="#696145" stroke-width="0.8" stroke-opacity="0.55" fill="none" stroke-linecap="round"/>
<path d="M200.8 37.8l1.4-0.2M197 41.2l2.2-0.2M207.8 45.3l2.4 0M183.1 51.7l4.2 0.1M169.5 67.9l3.8-0.2M173.3 69.7l3.6-0.2M174.9 80.6l5.5-0.7M160.5 84.5l3-0.4M172.9 85.5l3.5-0.5M149.6 93.5l4.1-0.8M142.3 116l4.3-1.5M149.9 139.8l4.2-2.5M155.3 153.9l3.5-2.6M139.4 179.7l3-2.7M139.7 195.1l3-3.2M142 196.1l3.4-3.8M143.6 205.3l2.5-3.1M148.7 206.7l2.5-3.4M175.8 209.8l2.1-3.4M180.8 220l1.8-3.4M187.1 262.7l1.8-6M197.5 240l1.1-3.7M198.3 249l2-6.8M203.9 275.9l1.5-6.6M210.6 282.5l0.6-3.2M219.9 290.1l0.6-5.4M234.5 297.5l0.3-5.6M257 305.4l-0.3-3.6M260.6 303.1l-0.4-4.3M263 283.3l-0.7-5.8M270.6 305.3l-0.9-6.1M272.5 310l-0.9-5.7M272.4 303.4l-0.8-5.1M281.5 292l-0.2-5M293 310.3l-0.2-2.6" stroke="#5e573e" stroke-width="0.8" stroke-opacity="0.55" fill="none" stroke-linecap="round"/></g>
<path d="M199.5 36l1.7 0.7M197.7 37l3 0.3M198.1 37.7l1.2 0.7M194.2 40.7l1.4-0.4M193.9 41.1l1.8 0.2M185.1 45.6l4.4 0.8M180.5 49.3l3.9 0.8M180.9 50.3l2.1 0.9M179.4 51.2l2.5 0.9M177.5 53.1l2.1 0.3M174.4 57.5l2.8 0.5M170.9 60.7l2.9-0.1M168.3 62.8l4.4-0.2M168.1 63.6l3 0.1M165.6 66l3.1-0.2M164.7 66.7l4.7 0.3M163.6 70.7l0.8 0M161.5 71.4l4 0.1M159.1 74l3.7-0.2M159.1 75l3.2 0.2M152.9 82.8l4.5-0.2M151.1 83.5l2.7 0.1M150.2 84.8l5.2 0.1M147.3 92l2.5-0.4M144.4 95.3l3.1-0.3M141.3 99.4l4.9-0.3M139.3 104.7l5.1-0.9M138.8 107.1l3-0.3M140 108.1l1.6 0.1M138 111l3-0.5M137.3 112.8l3.9-1.1M134.9 119.3l5-0.7M135.9 121.6l2.5-0.4M131 132.1l2.8-1.2M130.2 140.3l3-0.8M129.1 146.1l5-2.2M130.2 150.9l1.5-0.2M130.8 152.4l1.4-0.5M130.6 155.4l1.6-1M129.3 157.5l3.2-1.7M130.1 162.8l3.3-1.8M129 164.4l3.9-2M130.4 165.3l3.5-1.7M131.1 166.4l2.9-1.4M131.6 170.5l2-1.1M131.2 175.5l2.6-1.5M132 181.5l4.3-3.2M134 183.2l1.1-0.8M135 196l2.8-2.1M139.6 206.4l2.7-3M141.1 210.3l1.3-1M145.3 217.4l2.2-1.9M146.6 220.6l2.8-3.4M147.5 221.2l1-1.5M147.1 223.5l3.2-3.3M149.6 226.5l3.7-3.4M151.1 228l1.5-1.8M152 228.4l2.8-3.5M151.6 230.7l2.5-2.2M155.4 232.8l0.6-1M158.7 237.6l1.3-2M163.2 245.6l3.1-5.1M163.7 246.9l2.7-4.1M164.6 248.3l3.4-4.9M167.3 248.4l1.1-0.9M171.3 255l1.8-2.6M173.7 256.7l2.1-4.2M176.2 258l1.5-3.4M178.1 262.2l1.8-3.4M179.9 264.5l2.8-4.7M186.4 272.1l1.5-3.9M187.8 272.3l1-2.7M189.5 277.4l1.9-4.2M191.3 277.1l1.5-3.5M192.3 278.2l1.5-3.5M193.6 278.5l1.3-3.9M194.8 279l1.6-4.2M196 279.7l1.8-4M199.4 283l1.2-3.7M203.3 284.3l1.3-4.1M204.2 285.3l1.6-5.1M205.4 286.7l1.3-4.4M207.2 286.2l0.9-4M215.4 291.8l1-3.9M216.4 292.7l1.5-5.1M224.6 295.6l0.4-4.3M225.2 297.6l0.9-3.1M226.5 298.8l0.8-4M228.9 299.6l1.3-4.8M236.8 302.6l0.5-3.4M243.6 305.1l0.1-2.2M252.9 307.9l0.2-5.5M254.2 308.1l0.7-4.5M257.4 308l-0.3-1.3M258.2 308.9l0.4-2.5M265.1 310.8l0.1-4.3M270.6 313.4l-0.3-2.6M274.3 314.8l-0.2-3.6M275 318l-0.1-2.2M274.6 320l0-3.5M276.3 325.7l0.6-5.7M280.6 324.5l0.2-3.9M283.8 323.7l0.5-3.4M285.2 323.1l0.5-5.5M288.8 320.2l0.2-2.8M290.9 318.1l0.1-2.8M292.1 317.9l0.4-4.1M295.3 313.8l0.2-1.3M299.9 309l0.3-2.3M301.1 307l0-1.4M304.8 300.4l1.6-2.7" stroke="#6e6649" stroke-width="1.1" stroke-opacity="0.85" fill="none" stroke-linecap="round"/>
<path d="M195.1 39.8l3.2 0M188.9 44.2l1.9 0.5M187.3 45.4l2.5 0M184.6 47l2.2 0M182.9 48.4l2 0.6M179.6 52.5l3.2 0.7M176.4 54.4l4.1 0.6M172.1 59.3l2.1 0.1M163.4 67.9l5.2 0.5M163.4 69.3l2.3 0M157.4 77.1l2.9 0.1M156.7 78.1l3.3 0.1M155.6 79.1l1.6 0M154.9 80.3l2.6-0.3M154.3 81.2l2.3 0M151.1 85.9l1.2-0.3M148.5 87.4l4.9-0.7M148.1 88.5l4.1-0.4M146.1 90.7l5.5-0.1M145.7 94.2l3.7-0.4M144.1 96.7l3.6-0.3M140.2 101.9l5.2-0.3M141.3 103.2l2.5-0.4M138 110l4.9-1.2M135.8 114.1l4.7-0.9M137 115.1l2.1-0.4M137.5 116.3l2.8-0.6M134.3 121.2l5.2-1.7M135.6 123.3l3.9-1.1M134 125.1l2.2-0.6M132.8 126.8l3.9-1.6M133.7 127.7l3-0.9M133.2 129.1l3.6-1M132.5 130.2l3.3-1.1M133 132.9l2.5-1.2M131.8 134.2l3.3-0.6M131.4 138.7l3.3-1.5M130.9 142.5l3.1-1.1M129.2 144.7l4.6-1.7M130.2 148.1l2.5-0.8M130.3 149.7l2.8-1.1M129.5 158.6l3.6-2.2M129.9 160l2.5-1.2M130.4 160.8l1.3-0.3M131.4 169.5l2.6-1.9M130.8 172.5l3.2-1.9M131.9 178.3l3.5-2.2M133 182.1l3.3-1.9M133.4 185l2-1.5M132.6 186.9l4.4-3.2M134 187.4l3.4-2.4M132.6 190.3l4.4-3.2M134.5 193.5l1.8-1.3M135.4 194.6l2.9-2.5M136.4 196.8l2.2-1.7M136.5 200.2l2.3-2M137.2 201.9l1.6-2.1M137.8 202.4l1.4-0.8M138.5 203.4l2.8-1.9M139.3 208.5l1.9-2M139.8 209.9l3.1-3.3M142.3 215.3l3.2-3.9M143.8 215.4l1.3-1.2M145.4 219.3l1.9-2.2M148.4 224l3.7-3.6M154 232.6l2.8-3.4M156.6 236.1l2.1-3.4M157.4 236.5l1.7-1.8M161.9 242l0.9-1.1M162.8 243.7l2.3-4.1M168.6 251.4l2-2.5M169.8 253l2.6-4.8M170.6 253.4l1.5-2.4M172.4 256l1.6-3.1M174.9 257.1l1.9-3.2M177.8 260.6l2-4.8M179.5 262.4l2-3.8M182 267l2.3-5.6M185.2 269.3l0.6-1.6M187.8 274.7l2.1-5.7M197.2 280.1l0.7-1.2M198.5 280.6l0.7-0.6M201.6 284.4l2-5.7M209.6 287.1l1.7-4.9M210.5 288.5l1.4-4.7M212.3 288.5l0.9-4.3M219.4 293.6l0.5-4M221.3 296.2l1.5-5.7M222.9 295.9l1.4-5.8M228.2 297.8l0.1-1.6M240.4 304.9l0.9-2.8M242.2 304.5l0.2-2.6M247.5 306.8l0.4-3.1M255.7 307.6l0-1.3M259.9 309.2l0.3-3.2M261.1 309.3l0.3-2.8M263.8 311.5l-0.2-3.2M269.5 312.5l-0.5-3M275.5 322.9l-0.3-2.8M281.8 324.4l-0.1-2M282.6 323l0.7-5.3M286.4 322l0-3.2M287.7 321l0-3.5M290.2 319.6l0.2-5.5M293.5 316.4l0-1.8M299.3 310l0-1.5M301.7 306.3l0.6-1.8M302.3 306.6l0.3-2.9M303.3 304l0.4-2.1M303.5 303.3l0.9-2.5M304.4 301.9l1.1-2.2M305.5 300.2l0.1-0.6M307.1 296.5l0.2-0.7" stroke="#625b41" stroke-width="1.1" stroke-opacity="0.85" fill="none" stroke-linecap="round"/>
<path d="M212.3 42.2l1.2 0.2M212 42.6l2.9 0.6M213.8 43.8l2 0.8M212.7 46.1l2.1 0.6M210.7 49.2l2.7 0.7M204.8 55.4l4.6 0.9M201.8 58.8l4.4 0.8M202.8 60.2l2.2-0.1M202.2 61.1l3.2 0.3M200.5 63l1.7 0M196.9 66l2.6 0.5M189.6 72.4l5.1 0.4M183.5 80l4.3 0M181.3 82.8l5.6 0.2M180.8 83.9l5.6 0M179 89.5l1.2 0.1M178.5 90.7l1.5-0.3M177.2 92.5l2.6-0.3M175 94.8l4.7-0.5M175.9 95.6l2 0.1M173.4 97.2l3.1-0.5M168.5 104.9l4.6-1.4M170.4 105l3.3-0.3M166.4 111.3l4.3-1.1M164.3 116.9l3.8-1.2M165 120.5l1.7-0.3M163.5 122l2.2-0.9M163.5 124.5l2.9-1.5M161.2 126.8l3.6-0.9M161.6 127.7l3.4-1.1M162.6 128.6l1.7-1M158.4 134.1l5-2.3M159.6 136.2l3-2M158.3 143l2.6-1.4M157.3 145l3.4-1.7M156.8 149.5l3.9-1.8M157.5 152.7l3-1.4M158.4 153.5l2.4-1.2M157 159.3l3.1-1.7M158.4 166.8l2.4-1.3M157.7 169.3l4.8-4.2M158.9 169.6l3.7-3.1M158.5 174.4l2.2-1.9M158 178.4l4.2-3.2M159.7 182.5l2.1-1.7M159.5 184l3.1-2.8M161 184l2.7-2.4M162 184.5l1.5-1.3M162.3 187.6l1.4-1.1M168.8 196.2l2.5-2.7M168.7 197.4l2.4-2M177 201.5l0.5-1.2M179.6 205.4l2.4-3.3M181 209.2l3.7-5.2M181.7 211.2l4-5M185.1 219.4l1.5-3.1M188.3 222.1l0.3-1.6M190.4 224.8l0.9-2M190.4 229.1l2.3-4.3M192.2 228.6l0.8-2.1M194.4 230.9l1.8-3.2M194.9 233.1l1.8-4.5M196.1 232.4l1.1-2.1M198.4 236.6l1.5-4.1M202.9 240.1l1.6-4.2M208 243.2l1.3-4.3M209.4 242.7l0.9-2.9M211.8 245l1.2-3.8M212.4 247.4l1.2-3.4M215.2 247.3l0.4-3.3M221.4 253.2l0.5-3.4M222.2 253.4l0.9-3.5M222.4 255.8l1.5-5M227.9 257l1.1-3.3M228.9 259.4l0.8-4.5M230.8 260.3l1.1-4.1M232.7 262.3l1.2-5.3M235.2 261.6l0.5-2.6M235.6 264.1l1.3-4.5M240.9 267.4l0.9-5.6M246.9 268.2l0.6-4.5M248.5 270.1l0.9-3.8M249.6 271.2l0.7-5.8M252.8 272.1l0.4-3.4M254.2 271.2l0.1-3.9M257.2 272.4l0.1-2.6M259.3 273.7l0.4-3.3M260.8 275.4l-0.4-3.5M263.9 275.1l0.3-3M268.4 278.5l0-3.4M280 284.5l0-3.6M281.6 287.5l0.4-5.8M285 285.8l0.2-2.7M287.8 285.8l-0.3-3.2M292.2 288.4l-0.1-5.5M293.2 287.6l0.4-3.6M295.7 287.9l-0.2-3M299.4 286.3l0.1-3.9M300 287.9l0.6-3.3M302.7 287.1l0.6-4.4M306.1 287.7l0.3-2.4M308.3 286.5l0.6-0.8M310.4 287.3l1.1-3.1M311.9 286.8l0.8-1M314.9 287.5l2.1-2.3" stroke="#6e6649" stroke-width="1.1" stroke-opacity="0.85" fill="none" stroke-linecap="round"/>
<path d="M210.2 39.5l3 0.4M210.7 39.9l1.7 0.3M214 45.1l2.6 0.7M212.7 48.4l2.2 0.3M211.3 51.6l2.9 0.4M209.4 52.9l2 0.5M208.6 54.2l1.5 0.1M204.5 56.5l3.1 0.3M203.2 58.3l4.2 0.2M201.9 62l0.3 0.3M198.7 64.4l3.5 0.4M197.5 65.1l3.5 0.4M194.4 67.8l4.1 0.6M193.3 69.8l3.3 0.2M192.6 70.3l2.5 0.3M188.2 75l4.5 0.4M185.1 78l4.4 0M180.7 85.8l3.8-0.1M180.9 86.5l3.3-0.1M178.6 91.7l0.7-0.1M175.8 93.9l3.9-0.4M172 98l4.2-0.3M172.1 100.2l2.2-0.2M172.7 100.9l2.7-0.7M169.8 106.2l2.8-0.6M167.6 111.9l2.6-0.5M165.3 118.5l2.4-0.9M164 123.2l2.2-0.9M163 125.6l2.9-1.1M159.9 130.4l3.2-0.8M161.7 131.1l1.7-1.2M158.1 138.8l3.8-1.6M157.7 141l4.6-1.8M158.8 141.7l2.2-1M158.4 145.3l3-1.7M159.3 149.3l1.2-0.7M157.6 151.4l4.2-2.4M157.8 156.3l4.2-2.7M157.1 158.1l3-2M158.1 162l4-2.4M160 169.8l2.2-2.1M159.1 171.4l3.5-2.3M159.3 172.8l2.6-2M158.5 175.4l4-2.9M159.7 176l1.5-1M160.2 178.1l1.8-1.6M160.4 187.9l3.6-3.5M162.4 190.6l2.5-2.5M164 191.1l1.4-2M165.5 194.4l2.1-2.2M167.4 194.3l2.1-2.1M168.3 194.4l1.7-1.4M169.6 198l3.2-3.1M172 200l2.5-3.4M172.5 202.7l4.1-4.6M177.1 203.2l2.4-3.4M178.3 205.4l2.2-3.4M180.2 206.9l3-4.3M182.1 206.4l1-1.9M183.9 207.5l1.3-2M183.7 214.8l1.6-2.3M184.3 216.8l1.7-2.9M184.7 218.1l2.2-4.4M185.6 219.9l1.5-2.3M186.3 221.5l1.2-3.1M189 222.8l1-1.6M189.7 223.6l0.6-0.7M190.5 227l0.9-2.2M193.5 228.2l1.3-2.6M193.4 230.1l1.2-2.4M197 233.4l1.3-3.3M197.4 235.6l2.1-4.6M202.2 239.3l1.4-3.7M203.4 241.5l1.9-4.4M205.3 242.9l2.3-4.8M210.3 243.4l0.7-2.9M216.1 251.1l1-4.6M218.6 252.6l2.1-5.1M224.2 255.3l0.2-2.1M226.1 255.6l0.7-2.3M227 258.1l0.5-3.6M237.4 263.1l0.6-3.9M238.2 265l0.7-3.5M239 264.4l0.6-2.4M242.1 267l0.5-4.1M244.6 266.2l0.4-3.1M246 267l0.4-2.8M251.8 271.3l0.6-3.6M255.1 270.8l0-0.8M258.6 273.1l0.2-2.6M262.7 276.5l-0.1-3.1M266.3 276.5l-0.1-2.4M270.7 280.5l-0.1-4.4M272.7 278.7l-0.3-0.9M273.8 282.8l-0.5-6.5M278.1 281.7l-0.1-1.6M282.7 287.4l0.6-6.5M289.8 287.6l0.3-3.8M298.1 287.3l-0.2-2.8M303.8 287.5l0.3-4.7M307.2 286.4l0.9-2.9" stroke="#625b41" stroke-width="1.1" stroke-opacity="0.85" fill="none" stroke-linecap="round"/>
<path d="M473.0,91.6C474.8,91.8 475.2,93.5 478.0,95.8C480.8,98.1 485.9,102.3 489.9,105.3C493.9,108.3 497.9,110.7 501.9,113.7C505.9,116.7 509.8,119.7 513.8,123.3C517.8,126.9 522.0,131.2 525.8,135.2C529.6,139.2 533.3,143.6 536.5,147.2C539.7,150.8 542.2,153.9 545.0,157.0C547.8,160.1 550.1,161.9 553.3,165.7C556.5,169.5 561.3,176.1 564.0,180.0C566.7,183.9 567.1,185.7 569.4,189.0C571.7,192.3 580.7,195.8 578.0,200.0C575.3,204.2 557.5,213.3 553.0,214.0C548.5,214.7 551.2,207.3 551.0,204.0C550.8,200.7 552.8,197.7 552.0,194.0C551.2,190.3 549.2,186.2 546.0,181.9C542.8,177.6 536.6,172.0 533.0,168.0C529.4,164.0 527.8,161.7 524.6,158.0C521.4,154.3 517.6,149.8 513.8,146.0C510.0,142.2 505.9,139.0 501.9,135.2C497.9,131.4 493.9,127.1 489.9,123.3C485.9,119.5 482.0,116.0 478.0,112.5C474.0,109.0 467.8,105.0 466.0,102.0C464.2,99.0 465.8,96.2 467.0,94.5C468.2,92.8 471.2,91.4 473.0,91.6Z" fill="#857b5c"/>
<clipPath id="c579909"><path d="M473.0,91.6C474.8,91.8 475.2,93.5 478.0,95.8C480.8,98.1 485.9,102.3 489.9,105.3C493.9,108.3 497.9,110.7 501.9,113.7C505.9,116.7 509.8,119.7 513.8,123.3C517.8,126.9 522.0,131.2 525.8,135.2C529.6,139.2 533.3,143.6 536.5,147.2C539.7,150.8 542.2,153.9 545.0,157.0C547.8,160.1 550.1,161.9 553.3,165.7C556.5,169.5 561.3,176.1 564.0,180.0C566.7,183.9 567.1,185.7 569.4,189.0C571.7,192.3 580.7,195.8 578.0,200.0C575.3,204.2 557.5,213.3 553.0,214.0C548.5,214.7 551.2,207.3 551.0,204.0C550.8,200.7 552.8,197.7 552.0,194.0C551.2,190.3 549.2,186.2 546.0,181.9C542.8,177.6 536.6,172.0 533.0,168.0C529.4,164.0 527.8,161.7 524.6,158.0C521.4,154.3 517.6,149.8 513.8,146.0C510.0,142.2 505.9,139.0 501.9,135.2C497.9,131.4 493.9,127.1 489.9,123.3C485.9,119.5 482.0,116.0 478.0,112.5C474.0,109.0 467.8,105.0 466.0,102.0C464.2,99.0 465.8,96.2 467.0,94.5C468.2,92.8 471.2,91.4 473.0,91.6Z"/></clipPath>
<g clip-path="url(#c579909)"><path d="M472.9 91.8l-4.4-2.4M475.7 93.2l-7.8-1.5M479.9 97l-13.9-0.2M480.8 97.6l-15.2 0.4M482.8 99.5l-17.6 1.6M485.4 101.3l-19.2 2.7M487.1 102.8l-17.9 2.9M490.3 104.7l-19.6 3.2M493 106.8l-19.1 3M494.8 108.8l-17.7 2.5M497.3 110.5l-18.2 3.5M499.7 112.2l-18.5 3.4M506.3 117.2l-18.4 4.1M511.1 120.2l-19.7 5.6M512.9 121.4l-20.4 5.1M512.6 122.4l-18.6 4.9M514.7 123.9l-19.6 5.6M516.2 124.6l-20.1 5.4M519.2 128.1l-19.7 5.2M520.2 128.8l-20.2 5.2M525.1 133.7l-18.9 5.4M525.7 135.2l-18.1 5M526.5 135.6l-18.1 5.8M528.7 137.5l-18.7 5.1M529.8 139.6l-18.3 4.2M532.8 142.5l-18.7 4.4M532.8 143.1l-18 5.2M534 144.1l-18.1 5.3M535.9 145.5l-18.8 4.3M538.8 149.5l-18.1 4.8M539.5 150.8l-17.4 4.2M540.3 151.8l-17 4.7M542.6 153.3l-17.4 5M543 154.5l-17 5.4M545.4 157.1l-18.1 4.6M548.3 160.1l-18.2 5M549 161.3l-18.1 4.9M550.4 161.4l-18.5 5.4M551.5 162.9l-18.1 5.4M553.3 164.9l-18.4 5.6M555.3 168l-17.4 5.4M556.7 168.7l-17.8 6.2M559.1 173l-17.8 4.5M560.8 174.7l-17.1 4.5M563 178.6l-16.9 4.2M565.3 180.8l-17.4 4.5M566.2 182l-17.4 4.9M569.3 187.4l-17.7 6.1M572 192l-21.1 7.3M573.2 193.5l-21.8 6.8M573.9 194.5l-22.7 7.1M575.7 195.9l-25.4 7.2M577.6 199.2l-26.9 7.9M578.7 199.4l-27.9 9.1" stroke="#6e6649" stroke-width="1.5" fill="none" stroke-linecap="round"/>
<path d="M474.3 92.7l-6-2.4M476.3 94l-9.6-1.2M477.2 95.4l-10.2-1.2M479 96.4l-12.6-0.1M482.3 98.8l-17.4 0.7M484.4 100.9l-18.5 1.7M486.7 102.2l-18.9 2.9M488.6 104l-18.4 2.1M490.6 105.5l-18.3 2.7M491.6 106l-17.6 2.7M494.8 108.1l-19.5 3M496.7 110l-19.3 2.6M499 110.7l-19.1 4.2M500.7 113.1l-18.4 3M501.9 113.8l-18.9 4.2M503.4 114.7l-19.2 3.9M504.9 115l-19.9 4.1M505.2 115.6l-19.1 5.1M507.6 117.7l-19 4.8M509.2 118.8l-19.8 4.9M510 119.6l-19.3 4.4M513.9 122.6l-19.2 5.9M517.1 126.4l-20.2 4.9M518.7 127l-19.6 5.5M521 129.9l-18.6 5.7M521.5 131.3l-18.8 4.7M523.4 131.7l-19.9 5.3M524.2 132.7l-19.4 5.7M528.2 137.4l-18.9 4.8M531.5 140.1l-20.1 5M531.8 140.9l-18.2 4.7M536.1 146l-17.7 5M537.4 147.4l-17.8 4.4M538.2 148.7l-17.9 4.3M541.8 152.9l-18.5 4.4M544.8 155.4l-18.5 4.9M546.9 157.8l-18.4 5.3M546.5 159.1l-17.2 4.5M551.4 163.9l-17.5 5.8M553.3 165.7l-17.8 6.1M554.5 166.9l-17.3 5.9M557 170.3l-17 5.1M558.4 171.9l-17.2 4.9M560 173.8l-17.2 5M561.2 175.9l-17.3 4.9M562.7 177.4l-17.3 4.8M564.4 178.9l-17.4 4.8M566.3 182.7l-16.5 5.3M566.2 184.6l-16.7 4.2M567.1 185.8l-17.1 4.9M568.7 186.4l-17.9 4.9M569.8 189l-18.2 6M571 189.7l-19.5 6.7M571.1 191.1l-19 6.2M575.9 196.1l-25.2 8.5M576.1 197.3l-25.1 8.9" stroke="#666043" stroke-width="1.5" fill="none" stroke-linecap="round"/>
<path d="M473.8 92.4l-4.8-2M474.9 93.3l-6.9-1.8M475.4 94l-7.2-0.7M479.8 97.9l-13.8 0.5M481.3 100.7l-13 2.1M484.1 101.9l-16.2 2.1M484 103l-14.3 1.6M485.8 103.7l-15.4 2.1M486.9 104.1l-14.6 2.2M487.7 105l-15.9 2.4M488.9 105.7l-13.9 2.6M494.6 109.7l-15.6 2.9M496.7 110.3l-16.8 2.8M496.6 111.4l-14.8 2.9M500.4 114.9l-13.8 3.4M503 115.1l-16.6 4.3M503.9 116.4l-15.9 3.5M506.4 117.9l-16 3.7M507.6 120.1l-15.1 3.7M511.8 123.6l-15.3 4M513.3 126l-14.8 4M515.6 126.7l-16.3 3.6M516.2 127.8l-14.9 3.6M518.3 128.6l-16.4 4.4M518.6 130.7l-14.7 4.3M521.2 131.3l-15.8 4.6M523.6 135.1l-15.2 4.1M524.8 136.3l-14.1 4.6M527.1 138l-15.7 4.9M527.2 139.7l-13.3 3.2M529.2 140.6l-15.5 3.3M529.1 141.6l-14.4 3.4M531.6 143.9l-14.9 3.3M533.5 145l-15.9 3.6M532.8 145.7l-13.9 3.9M535.7 146.2l-15.1 4M534.4 147.9l-13 3.7M536.1 149.1l-14.7 4.2M537 149.7l-14.7 4.4M537.8 151.8l-13.5 3.7M540 152.9l-14.4 4.1M540.2 153.9l-14.3 3.9M541 155.5l-14.6 4.1M543.5 157l-13.5 4.4M544.9 158.5l-15.3 4.4M553.2 167.2l-13.3 4.6M554.8 169.6l-14.2 4.2M556.5 170.3l-14.5 4M559.9 175.2l-14.2 4.1M561 177.7l-14.1 3.7M561.2 178.8l-14.1 3.8M564.2 180.7l-14.7 4.2M563.7 182.7l-13.1 3.4M565.4 182.7l-13.6 4.2M565.8 185.6l-14.7 4.7M570.5 191.3l-16.7 5.5M573.4 195.7l-19.9 6.1M573.8 200.4l-20.5 5.9" stroke="#827957" stroke-width="1.3" fill="none" stroke-linecap="round"/>
<path d="M472.5 91.3l-3.6-1.8M476.6 95.3l-8.9-0.8M477.3 95.6l-9.9-0.1M478.6 97.4l-11.9 0M480.8 98.7l-14.4 1.5M481.1 99.8l-13.9 1.7M491 106.9l-15.6 1.8M490.3 107.3l-14.4 2.3M491.9 108.7l-13.9 2M493.4 109l-15.1 2.2M498 112.2l-14.9 3.1M499.6 113.2l-16.4 2.9M500.1 113.8l-14.8 3.4M504.8 117.5l-16.1 3.5M507.7 118.9l-15.4 3.7M508.2 121.2l-15.3 3.9M510.5 121.3l-15.8 4.6M512 122.2l-16.3 4.3M512.8 124.5l-15.3 4.5M518.9 129.4l-16.6 4.2M521.5 132.3l-15.8 4.3M522.5 133.1l-16.6 5.2M524.5 134.4l-16.6 3.7M526 137l-14.6 4.1M530.9 142.6l-15.4 4.4M537.3 151l-13.5 3.7M543.9 156.6l-15.8 3.2M545.4 159l-14.2 4.6M546.4 160l-14.1 4.1M546.2 161.3l-12.8 4.1M548.7 161.9l-14.4 4.3M550.1 163.2l-16.6 5.1M549.8 164.8l-13.7 3.9M551.1 166l-14.7 3.4M552.9 166.6l-15.8 4M554.4 168.9l-14.9 3.8M556 172l-13.3 4M557 173.2l-12.3 4M558.6 173.8l-13.9 4.5M559.3 176.3l-11.9 3.6M561.5 179.5l-13.6 4.1M565.2 184.9l-14.4 3.8M566.3 186.9l-13.7 4.8M567.9 188.5l-14.7 3.6M567.7 189.4l-15.2 4.9M568.3 190.3l-13.9 4.9M570.1 193.2l-16.3 4.7M571.9 193.9l-17.9 5.3M571.4 195.7l-18.4 5.8M572.8 197.6l-19.8 6M573.3 198.5l-19.8 6.8M574.3 201.3l-20.8 6.8" stroke="#897f5d" stroke-width="1.3" fill="none" stroke-linecap="round"/>
<path d="M471.9 90.7l-2.4-0.7M473.7 91.9l-3.6-1.2M473.9 93.4l-3.9-1.1M474.5 95.5l-5.6-0.6M478 98.2l-9.7 0.2M479.7 98.9l-11.9 1M481.1 100.5l-11.4 1.1M484.8 104.4l-11.6 1.3M486.7 106.5l-10.6 1.1M489.4 108.7l-9.4 1.7M491.2 109.5l-11.9 1.8M493.3 109.8l-13 2.8M494.4 111.2l-11.2 1.6M499.7 115.2l-12.1 2M501.5 117.3l-12.5 2.4M503.3 118.9l-10.5 2M505.2 120.9l-11.8 3M509.7 123.1l-13.3 3.9M509.5 123.9l-10.4 2.9M511.7 124.9l-12.2 3.3M513.9 127.8l-10.9 3.4M518.6 132.2l-12.3 3M520.5 135.2l-10.4 2.5M522.9 137.4l-10.5 2.7M524.8 137.5l-11.5 3M526.3 139.5l-12.2 3.4M529.3 142.5l-11.8 3.3M531.6 144.6l-11.9 3.4M532 146.3l-11.2 2.9M533.5 147.1l-11.7 3.4M535.6 150.4l-11.7 2.7M537.2 152.2l-10.2 3.5M537.5 153.7l-10.2 3M539.7 156.1l-10.6 2.3M540.4 157l-9.5 2.9M543.7 159.7l-11.3 2.8M543.8 160.6l-11.2 4.1M545.9 161.8l-10.7 2.8M547.1 163l-10.9 3.1M546.7 163.9l-11.4 3.7M549.3 164.2l-12.3 3.9M551.6 168l-12.3 3.8M552.3 169.3l-11.2 2.8M557.2 174.8l-10.1 2.5M557.3 176l-10.1 2.7M559.8 179.2l-11.1 3.5M560.4 182l-10.2 2.4M562.6 184.4l-10.3 2.8M567 191.1l-12.6 3.6M567.9 193.9l-12.4 3.9M569.6 197.5l-13 3.4M569.6 198.1l-13.9 5M572.8 198.7l-15.7 5.2M572.9 200.2l-16.3 5.4M573.1 201.6l-16.2 4.7" stroke="#978d68" stroke-width="1.2" fill="none" stroke-linecap="round"/>
<path d="M474.8 93.8l-6.4-0.1M476.5 96.4l-8.2-0.6M477.3 97.4l-9.8-0.6M480.1 99.4l-10.7 1.1M480.9 101.5l-10.8 1.5M483.2 102.4l-11.3 1.7M484 103l-12 2.5M486.1 105.2l-11.8 1.3M489.3 106.7l-12.6 2.4M488.9 107.5l-10.2 1.9M494.8 111.6l-11.2 1.9M495.6 112.8l-10.9 2.5M497.3 113.9l-12.2 2.5M498.5 114.2l-10.8 2.7M501.2 115.7l-11.7 3.1M502 118l-10.8 2.5M505.1 119.6l-12.3 3.3M507.2 121.2l-11.6 2.7M507.5 123l-10.4 1.7M513 125.9l-12.3 2.8M513.4 127.2l-11.3 3M514.5 129.5l-11.3 2.8M516.1 130.6l-10.9 2.4M516.3 131.5l-11.7 2.8M519.8 133.2l-13.5 3.5M521.1 133.3l-13 4.2M522.3 136.1l-11.5 3.2M525.4 139.2l-11.1 2.5M527.8 141.3l-11.7 2.5M527.8 141.7l-10.8 3M530.8 144.3l-11.4 2.5M533.8 148.6l-11.7 2.3M534.1 149.7l-9.9 2.6M536.9 150.9l-11.4 3.4M538.8 154.4l-9.6 2.7M541.2 158l-9.8 2.7M542.2 158.6l-10.3 2.9M549.1 165.7l-11.5 3.7M551.8 167.1l-12.5 3.3M553.7 170.6l-10.7 3M554.6 171.5l-11.2 3.2M555.2 172.1l-11.1 3.9M554.5 173.5l-9.1 3.3M558.5 176.7l-10.4 3.6M558.5 178.5l-10.2 2.2M561.4 180.1l-10.3 3.1M561.5 182.9l-8.4 3M564 185.2l-9.6 3.1M564.1 186.5l-10.6 3.3M565.4 187.7l-11 3.2M565 188.5l-10 3.7M565.6 190.4l-11.2 3.1M566.8 192.3l-11.7 4.3M569.9 194.1l-14.1 4.2M570.3 196l-15.7 4.6" stroke="#9d936d" stroke-width="1.2" fill="none" stroke-linecap="round"/>
<path d="M472.2 90.7l-1.8-0.4M474.4 94.7l-3.9-0.3M476.2 97.6l-5.5 1.2M477.5 99.5l-7.8 0.5M479 100.2l-8.4 0.7M487.5 107.5l-8.8 0.7M486.5 107.9l-7 1.2M488.7 108.9l-8.5 1.5M491.3 110.4l-7.8 1.8M492.7 111.1l-7.8 1.3M493.4 112.3l-8.9 1.9M494.6 113.2l-7.9 1.4M495.2 113.6l-8.3 2.4M500.8 117.2l-8.6 1.9M501.3 119.8l-7.6 1.2M502.9 120.6l-8.9 1.5M504 121.3l-7.7 1.2M505.2 123.2l-7.2 1.5M506.5 124.3l-8 1.6M508 124.6l-9.1 2M509.8 126.8l-7.6 2.3M511.7 127.3l-8.5 2.1M515.9 131.4l-9.6 2.8M519.3 134.4l-8.9 1.9M522.8 139.1l-7 2.7M524.6 141.5l-7 2.4M528 143.5l-8.3 2.4M527.5 144.5l-7.8 2M529.7 146.3l-7.3 2.8M531.9 149.2l-6.9 1.6M532.7 150.8l-7.1 2.4M533.8 151.7l-7.6 2M536.8 155.2l-7.9 2.2M538.3 156l-7.3 2.6M543.8 162.6l-8.6 2.6M550.6 167.9l-8.5 3.1M550.6 170l-7 1.5M551.1 171.2l-6.9 1.5M554.4 174.1l-7.6 1.7M555.7 175.2l-7.7 1.8M560 182.8l-7.2 2.4M561 184.1l-6.9 2.6M561.7 185.6l-7.6 2.6M562.3 187.2l-7.1 2M564.3 190.5l-7.3 2.8M565.1 193.5l-6.7 2.3M570.7 200.7l-12.1 4M570.4 202.4l-10.7 3.8" stroke="#ada379" stroke-width="1.0" fill="none" stroke-linecap="round"/>
<path d="M472.4 92.2l-2.9-1.5M473.1 92.8l-2.9-0.1M474.5 94l-5-0.4M475.2 96.1l-5.3 0.1M475 97.2l-4.6 0M478.6 101.3l-7.7 1.1M479.7 101.9l-7.2 0.8M482.2 102.9l-9.8 1.2M481.7 104.1l-7.5 0.9M483.1 104.3l-7.4 1.5M484.9 105.3l-7.5 1.3M484.4 106.9l-6.7 0.6M490.5 109.6l-7.7 1.1M496.3 115l-7 1.1M497.8 115.8l-8.6 1.6M498.7 116.6l-8 2M500.4 118.7l-7.4 1.1M505.6 122l-9.4 2.1M509.5 125.9l-7.5 1.4M512.4 129l-8.4 2.1M514.1 129.8l-8.8 1.7M514.9 130.6l-9 2M517.5 131.8l-8.4 2.4M516.4 133.7l-6.8 1.7M519.9 134.7l-8.1 2.4M521.1 136.3l-8.1 2M521.7 137.9l-7.5 1.3M523.8 138.6l-9.2 1.9M525.3 140.6l-9.7 1.9M527.3 142.8l-9.7 1.4M528.8 146.1l-6.8 1.8M530.9 147.8l-7.8 1.8M532 149.8l-7.1 2.1M536.1 153l-8.1 2.4M535.8 153.8l-6.3 2M539.3 157.2l-8.5 1.8M540.6 157.9l-7.2 2.7M540.4 159.8l-7 1.8M541.3 160.8l-6.7 1.2M543.6 161l-8.1 2.3M544.5 163.7l-7.9 1.7M546.1 164.2l-8 2.8M546.8 165.6l-7.4 1.7M547.9 166.5l-8.5 2.2M549.2 167.4l-7.6 1.9M552.4 171.4l-7.5 2.1M553.8 173l-7.9 2.4M556.3 176.4l-6.8 1.7M556.7 176.9l-6.2 2.1M556.6 179.1l-6.5 1.3M558 180l-7.2 2M559.2 181l-7.3 2.2M559.7 182.2l-7.2 2.3M563.9 187.9l-7.6 2.6M563.7 188.8l-7.1 2.6M564.8 192.2l-7.3 2.1M566.8 194.1l-9.5 3.4M566.1 195.2l-8.3 2.8M568.1 196.8l-10.7 2.6M567.9 197.9l-11.6 2.9M568.1 199.2l-9.6 3M568.2 200l-10.1 3.5" stroke="#b3a97e" stroke-width="1.0" fill="none" stroke-linecap="round"/>
<path d="M472.4 93.1l-1.8-0.2M475.5 98.8l-4.3 0.8M476.9 101.3l-4 0.9M480.6 105.3l-3 0.4M483.5 106.4l-4.8 0.5M487.9 108.7l-4.9 1.2M488.3 110.2l-5 0.1M490.1 111.7l-4.3 0.8M494.9 115.5l-5.3 1.1M497.6 117.9l-3.3 1.2M500.5 119.3l-4.9 1.5M503.7 122.3l-5.2 0.8M505.9 124.1l-3.6 1.4M508 125.5l-3.6 1.6M509.4 127.8l-4.9 2.1M519.7 139.5l-3 0.1M522.8 141l-4.2 1M526 145.5l-3.6 0.7M527.6 146.4l-3.7 0.6M528.9 147.3l-4.8 1M528.6 148.2l-3.8 1.1M530.5 148.7l-4.6 1.7M534.8 155l-4.8 0.5M543.1 163.7l-4.2 1.7M548.7 168.6l-4.5 1.9M548.3 169.9l-2.6 1.6M550.5 171l-5.5 1.5M550.7 172.9l-3.7 0.9M552.8 174.2l-3.8 1.3M554 176.4l-3.3 1.3M555.1 177.3l-4.1 1.2M556.1 180.5l-3.7 0.7M558 182.7l-4.3 1.2M559.2 185.1l-2.7 0.5M562.7 190.7l-4.4 1.7M562.7 192.3l-4.4 1.5M566 199.8l-6.8 1.8" stroke="#c6bd90" stroke-width="0.9" stroke-opacity="0.8" fill="none" stroke-linecap="round"/>
<path d="M471.8 91.7l-1.3-0.9M473.2 93.7l-3-0.3M473.7 95.5l-3.7-0.7M474.3 95.6l-3.5 0.7M474.9 96.8l-3.1 0.5M476.1 100.3l-4.1 0.9M482.7 105.8l-4.1 0.5M485.2 107.5l-4.3 0.4M493 113.2l-4.9 0.8M494.6 114l-5.8 1.6M496 117.4l-2.5 0.7M499.1 119.1l-4.9 1.1M502.5 121.7l-3.2 0.9M504.7 122.9l-5.9 1.8M511.4 130.3l-4.8 1.6M513.4 132.2l-4.2 0.5M514.8 134.1l-3.1 1M516.4 135.3l-5.1 1.1M517.6 135.6l-4.1 1.9M519.4 136.4l-4.9 1.2M518.7 138l-2.3 0.5M521.7 140.3l-5.1 1.1M525.9 143.8l-5.5 0.9M530.2 150.9l-2.6 0.7M531.4 151.8l-2.4 0.7M533.2 151.7l-3.9 1.6M534 153.6l-3.5 0.7M535.9 155.2l-3.7 1M538 159.1l-2.9 0.6M539.5 160.1l-4 0.7M540.3 160.5l-4.4 1.9M544.6 164.7l-4.1 1.8M545.4 166.3l-5.7 1.5M545.8 166.8l-3.5 1.2M552.3 173.3l-5.1 0.8M558.6 181.4l-5.2 1.3M559.3 183.3l-3.5 1.6M560.6 185.7l-4.5 1.7M562.6 188.9l-5 1.2M561.8 190.1l-4.3 0.9M565.8 195.6l-5.2 1.5M564.5 196.9l-3.6 1.9M566 198.3l-5.8 1.6M566.6 200.8l-6 1.7M567.4 201.7l-6.7 2.3" stroke="#ccc396" stroke-width="0.9" stroke-opacity="0.8" fill="none" stroke-linecap="round"/><path d="M472.7 92l-1.3-0.4M476.2 99.1l-3.1 0.2M474.4 101.6l-2.3 0.2M478.9 102.1l-4.1 0.5M480 103l-4.3 0.6M478.6 105.3l-4.4 0.6M487.3 111.1l-3.2 0.6M493.1 111.1l-3.4 0.7M494.7 112.9l-1.9 0.4M498.3 117.7l-3.6 0.8M502.4 117.9l-3.4 0.8M511.5 131.3l-3.2 0.9M520.9 145.1l-2.4 0.7M524.4 146.8l-3.5 0.9M528.2 151l-3.6 0.9M532.5 151.2l-2.6 0.7M535.9 152.9l-2.1 0.6M538.6 162.7l-3 0.8M538.6 164l-2.5 0.7M547.7 163.9l-2.3 0.7M551.1 169.5l-4.2 1.3M554.5 175.2l-2.8 0.8M556.3 181.6l-3.5 0.9M559.7 182l-3.7 1M568.5 197.5l-4 1.2" stroke="#ddd5a8" stroke-width="0.8" stroke-opacity="0.7" fill="none" stroke-linecap="round"/>
<path d="M496.4 117l-3.9 0.8M501.3 119.3l-3.2 0.7M507.2 124.9l-4.5 1.3M507.5 126.1l-3.6 1M508 127.2l-4.5 1.3M508 131l-4.1 1.2M514.8 132.9l-2.9 0.8M514.7 134.2l-2.4 0.7M514 135.7l-2.5 0.6M523.3 139.4l-4.2 1.1M525.3 140.2l-4.2 1.1M526.8 141.1l-2 0.5M531.2 152.8l-2.6 0.7M545.3 167.3l-4 1.2M550.9 166.9l-3.3 1M546.7 169.5l-3.5 1M545.4 172.5l-4.1 1.2M551.2 173.5l-3.2 0.9M555.3 179.1l-2.5 0.7M559 187.9l-3 0.9M561.8 190l-2 0.5M568 194.9l-3.2 1" stroke="#d3ca9e" stroke-width="0.8" stroke-opacity="0.7" fill="none" stroke-linecap="round"/><path d="M473.4 93l-1.1-0.2M475.4 96l-1.6 0M475.3 104.7l-1.9 0.3M475.5 107.8l-3.2 0.5M500.9 130.4l-1.6 0.5M506.8 133.9l-3.2 0.9M524.4 148.1l-1.8 0.5M532.3 159.1l-1.7 0.5M541.9 159.1l-1.7 0.5M534.8 163.8l-1.6 0.4M535.4 164.9l-2 0.6M551.5 181.5l-1.7 0.5M569.8 191.7l-2.5 0.7M558.9 200.4l-4.2 1.3" stroke="#696145" stroke-width="0.8" stroke-opacity="0.55" fill="none" stroke-linecap="round"/>
<path d="M475.4 97l-1.3 0M481.5 101.8l-2.5 0.3M491.6 108.4l-1.5 0.2M498 112.3l-3.3 0.6M504 117.5l-2.4 0.6M505.5 118.3l-3.2 0.8M492.9 122.5l-2.7 0.6M504.3 120.9l-2 0.5M505.7 121.7l-3 0.8M506.9 122.6l-3.3 0.8M510.2 123l-2.2 0.5M513.2 129.6l-2.8 0.8M515.9 130.1l-3.2 0.9M513.7 142l-2.4 0.6M520.1 144.1l-3 0.7M544.2 175.5l-2.3 0.7M556.5 173.3l-2.1 0.6M549.7 179.3l-2.6 0.7M554.7 184.8l-2.2 0.7M564.1 186.4l-1.9 0.6M558.3 191l-2.9 0.9M568.4 196.1l-3.1 1" stroke="#5e573e" stroke-width="0.8" stroke-opacity="0.55" fill="none" stroke-linecap="round"/></g>
<path d="M473.8 91.1l-1.5 0.7M474.5 92.4l-1 0.4M481.2 96l-2.1 1M481.1 97.4l-1.8 0.8M485.8 99.6l-3.7 1.2M487 100.5l-2.5 1M489.1 104.9l-1.1 0.3M499.6 112.2l-1.5 0.7M511.6 118.5l-3.6 2M516.7 123.1l-2.6 1.5M521.1 129.7l-1.7 0.9M530.4 136.7l-3.4 2M535.3 145.3l-1.8 0.8M541.9 152.2l-1.2 0.7M546.2 155.9l-2.8 2.3M546.5 157.5l-1.5 0.7M550.2 161.6l-1.6 1.1M553.4 163.1l-2.5 1.3M553.5 166l-0.6 0.7M555.4 166.1l-1.5 1.1M556.6 168.9l-1.7 1.7M559.4 171.9l-1.7 1.4M560.5 173.1l-1.2 1.2M567.3 180.5l-3.5 2.4M568.1 185.3l-2.1 0.8M568.6 188.1l-2 1.2M569.6 188.8l-0.7 0.5M571.8 191.3l-1.2 0.5M572.7 193.2l-1.9 1.3M576.2 194.6l-2.9 1.6M578.8 197.6l-3.3 2.3" stroke="#6e6649" stroke-width="1.1" stroke-opacity="0.85" fill="none" stroke-linecap="round"/>
<path d="M476.4 92.6l-1.9 1M477.6 93.6l-2.7 1M479 94.5l-2 0.8M483.7 98l-3 1.1M491.9 106.3l-0.6 0.3M493 106.7l-1.2 0.9M494.7 107.5l-2.3 0.9M497.5 108.6l-1.7 1.5M499.3 110.4l-2.4 1.3M501.9 113.8l-1.5 0.3M505.4 114.1l-2.4 2M505.8 115.9l-1.8 1M507.7 116.3l-2.1 1.1M509.8 118.1l-2.2 1M514.3 121.2l-3.5 2.4M516.2 124.9l-1.3 0.7M518.5 124.9l-2.4 1.8M519.6 127.4l-2.3 1.6M520.2 128.4l-1 0.8M523.5 130.3l-2.7 1.6M525.6 133.6l-2.4 1.2M526.7 134l-2.5 2M531.2 138l-3 2.2M532 140.8l-1.3 0.4M536.2 146l-0.9 0.5M537.5 146.7l-1.1 1.2M540.2 148.3l-2.7 2.1M539.7 150.6l-1.3 0.7M540.5 151.4l-0.7 0.6M543.6 154.7l-0.9 0.7M544.6 155.8l-2.2 1M549.4 159l-2.5 1.6M549.3 160.6l-1.6 1.4M551.7 162.3l-1.3 1.1M558.4 171.2l-2 1.5M560.9 174.5l-2.1 1.1M561.6 176.1l-1.2 0.6M563.1 176.4l-2.7 1.6M567.3 181.6l-1.8 1.5M567.6 183.3l-1.8 1.6M574.2 194.3l-1.2 1M577.2 195.6l-3.3 2.2M578.6 199.8l-1.7 0.6" stroke="#625b41" stroke-width="1.1" stroke-opacity="0.85" fill="none" stroke-linecap="round"/>
<path d="M467.5 94.3l-0.7 0.4M472.4 106.8l-1.4 1M476.7 110.5l-1.2 0.5M479.1 112.5l-2 0.8M479.5 113.2l-1.4 1M482.4 114.6l-1.4 0.9M485.2 116.8l-3.5 1.6M487 118.5l-3.2 2M493 124.9l-1.9 0.9M495.5 126.4l-1.7 0.8M501.1 132.6l-3 1.4M501.4 134.2l-1.2 0.4M503.1 134.3l-3.1 2M504.8 135.4l-2.8 1.5M511.8 142.1l-2.1 1.1M513 143l-2 1.1M514.8 146.4l-1.4 0.9M519.7 150.3l-2.9 1.7M521.3 152.2l-1 0.7M522.4 153.3l-1.8 1M523.1 154.8l-2.3 1.1M527.2 160.6l-1.3 0.6M529.9 163.5l-1.3 1M531.3 164.7l-1.5 0.7M534.3 167.7l-1.9 1.2M535.6 168.4l-1.9 1.5M535.4 170.1l-1.7 1.1M536.3 171.1l-1.8 1.6M538.9 172.5l-2.5 2.3M540.7 174.6l-1.5 1.2M541.8 176.4l-1.9 1M542.7 176.9l-2.2 1.7M549.1 184.6l-1.1 1M551.2 190.2l-1.1 0.8M552.8 192.7l-2.2 1M553.3 193.4l-1.9 1.5M553.7 196.4l-3.5 2M552.4 201l-1.1 0.8M551.9 208.2l-1.7 0.7M552.6 209.6l-2.9 1.3" stroke="#6e6649" stroke-width="1.1" stroke-opacity="0.85" fill="none" stroke-linecap="round"/>
<path d="M466.8 96.9l-1.5 0.3M466.5 99.3l-1.6 0.6M466.7 101.2l-1.3 0M467.5 101.7l-1.4 0.6M467.6 103.2l-2.3 1.1M470.6 105.1l-1.8 1M474.6 108.8l-1.9 1.1M476.2 109.5l-2.7 1M481.2 114.1l-2.4 1.3M483.1 116l-2.6 1.6M484.9 118l-0.5 0.2M488 119.9l-1.9 0.9M490.1 121.4l-2.5 1.4M490.3 122.9l-0.5 0.3M491.6 123.8l-2.2 1.1M493.1 126l-2.2 1.5M495.6 128l-2.6 1.3M496.2 129.2l-0.8 0.4M505.5 136.5l-2.2 0.9M505.8 137.5l-2.6 1.7M510.4 141.4l-2.6 1.4M514.2 145.4l-1.8 1.1M516.5 147l-2.7 1.8M518 148.2l-1.3 0.5M519.5 151.6l-0.2 0.4M525.4 158.3l-0.9 0.4M527.6 158.3l-3.6 2.1M529.2 160.7l-2.9 1.9M529.7 162.1l-2.7 1.9M531.8 165.9l-2.5 1.3M532.8 166.7l-0.5 0.7M543.8 177.7l-1.7 1.4M545 178.8l-1.1 1.2M545.1 180.7l-0.9 0.5M546.6 181.2l-1 0.4M547.8 182l-1.2 1M547.8 183.9l-1.2 0.6M550.9 186.8l-2 1.6M551.6 187.8l-2.8 2.3M552.9 195.2l-2.3 1.9M552.3 198.4l-0.5 0.4M553.2 199.1l-2 1M551.8 202.2l-1.2 0.9M551.7 203.8l-2.5 1.5M552.1 206.3l-2.6 1.6" stroke="#625b41" stroke-width="1.1" stroke-opacity="0.85" fill="none" stroke-linecap="round"/>
<path d="M441.0,234.0C439.3,235.2 438.2,238.2 437.6,240.0C437.0,241.8 436.9,242.4 437.6,245.0C438.3,247.6 440.7,251.7 441.8,255.5C442.9,259.3 444.0,263.3 444.4,268.0C444.8,272.7 444.1,278.8 444.4,283.8C444.7,288.8 441.6,296.1 446.0,298.0C450.4,299.9 467.3,298.8 471.0,295.0C474.7,291.2 469.0,280.9 468.0,275.4C467.0,269.9 466.0,266.3 464.8,261.8C463.6,257.3 462.2,252.4 460.6,248.2C459.0,244.0 457.5,239.3 455.4,236.7C453.3,234.1 450.4,232.9 448.0,232.5C445.6,232.1 442.7,232.8 441.0,234.0Z" fill="#857b5c"/>
<clipPath id="c606786"><path d="M441.0,234.0C439.3,235.2 438.2,238.2 437.6,240.0C437.0,241.8 436.9,242.4 437.6,245.0C438.3,247.6 440.7,251.7 441.8,255.5C442.9,259.3 444.0,263.3 444.4,268.0C444.8,272.7 444.1,278.8 444.4,283.8C444.7,288.8 441.6,296.1 446.0,298.0C450.4,299.9 467.3,298.8 471.0,295.0C474.7,291.2 469.0,280.9 468.0,275.4C467.0,269.9 466.0,266.3 464.8,261.8C463.6,257.3 462.2,252.4 460.6,248.2C459.0,244.0 457.5,239.3 455.4,236.7C453.3,234.1 450.4,232.9 448.0,232.5C445.6,232.1 442.7,232.8 441.0,234.0Z"/></clipPath>
<g clip-path="url(#c606786)"><path d="M440.8 234.3l6.7-2.2M439 236.7l11.2-3.6M437.6 239.4l14.5-5.4M436.7 240.6l17.7-5.7M436.8 244.4l20-6.4M437.4 247.2l20.6-6.8M438.6 249l20.5-5.4M439.4 250.2l20.6-5.4M440.5 253l19.8-5.8M442.2 259.9l21.3-6.2M444.4 268.9l21.2-5.6M444.5 270.7l22.2-5.9M444 274.9l23.8-6.1M443.7 275.8l24-4.8M443.9 277.9l23.9-6M444.5 280.5l23.7-5.2M443.7 282l24.5-5.5M443.9 285.8l25.2-5M444.1 287.2l25.5-4.7M444.1 289.7l25.4-5.1M445.6 292.1l24.4-4.1" stroke="#6e6649" stroke-width="1.5" fill="none" stroke-linecap="round"/>
<path d="M439.5 235.1l9.1-2.8M438.7 238.1l11.7-4.8M436.6 241.1l17.9-5.4M436.7 243l19.5-6.7M437.2 245.5l19.8-6.9M438.5 248.1l20.2-6.6M439.5 252.1l21.3-6.8M440.7 254.5l20.9-6.6M441.5 255.3l20.6-5.9M441.2 256.8l20.5-5.6M442.4 258.5l19.4-5.7M443 261.4l20.3-6.4M442.9 262.5l20.9-5.8M443.1 264.1l21.4-5.6M443.4 265.3l21.6-5.5M444 266.7l21.4-6.2M443.3 267.7l21.7-5.6M443.5 271.6l22.3-4.8M443.9 273l22.8-4.6M444 279.2l24-5.2M443.9 282.7l24.4-4.6M443.9 284.6l24.6-5.1M444.9 288.1l24.6-4.4M445 291.5l25.3-4.7M444.5 293.6l26.5-4M445.7 295.7l25.1-5.2M445.9 296.3l25.6-3.8M445.3 298.5l25.7-5.4" stroke="#666043" stroke-width="1.5" fill="none" stroke-linecap="round"/>
<path d="M438.1 240.7l15.2-4.4M439.4 244.8l15-5.1M440.9 248.3l15.6-4.6M441.7 249.4l17.2-5M444.6 258l16.4-4.8M444.8 259.5l16.8-5.2M444.4 262.1l18.6-5M445.2 264.3l17-4.4M446.3 266l16.2-4.4M446.1 268.7l16.8-4.5M447.2 271.2l17.6-4.6M446.6 273.9l19.2-3.8M447.7 275.1l18-4.3M445.1 278.9l21.1-5.4M445.5 280.4l20.9-5.5M446.9 282.3l19.2-4.2M445.1 285.2l21.3-3.8M447.2 287.7l19.8-3.4M446.9 289.8l19.6-4.4M447.9 290.8l19.5-4" stroke="#827957" stroke-width="1.3" fill="none" stroke-linecap="round"/>
<path d="M441.6 233.7l4.3-1.9M440.9 235.1l6.6-2.7M440.2 235.9l8.4-2.2M439.5 237.8l10.1-4.3M438.8 238.2l12.4-4.4M438.8 239.2l13.8-4.4M439 241.9l15.7-5M439.9 243.5l15.3-5.2M439.6 246.4l15.6-5.1M440.3 247.4l16.3-5M442.6 250.8l15.5-4.8M442.7 252.5l17.2-4.6M442.5 254.4l16.7-4.9M443.6 255.1l16.6-4.6M444.2 256.7l17.2-5.1M445.8 260.3l15.3-4.3M446.1 263.2l16.1-4.6M445.2 267.9l17.2-4.8M446.3 270.5l17.8-5.1M446.6 273l18-4.8M445.4 277.3l20.7-4.6M445.9 281.3l18.9-3.9M445.6 283.8l22.7-4.1M446.6 287.1l21.5-4.8M448.3 291.8l20-3.3M446.3 293.5l20.6-3.5M446.7 294.9l22-3.4M449 296.1l18.2-3.2M448.6 297.5l20-3.9" stroke="#897f5d" stroke-width="1.3" fill="none" stroke-linecap="round"/>
<path d="M442.2 233.1l3.4-0.4M441.7 234.9l4.8-2.2M440.4 235.9l7.3-2.2M440.5 238.3l8.8-3.7M440.7 238.7l10.5-3M440 240.5l11.8-3.6M439.5 242.1l12.4-3.9M440.9 243.5l11.7-4.2M442 244.5l11.1-3.9M443 249.2l13.9-3.9M444.2 254l13.5-4.3M445.8 254.8l11.7-3.4M445.1 257.1l14-4M447.6 259.2l12.1-2.3M447.8 260.8l11.9-3.3M446.1 262.8l13.8-3.9M446.5 264.1l13.7-3.5M447.2 265.5l13.2-3.8M448.5 273.2l14-3M448.4 274.8l13.8-3.2M448.4 279.6l14.2-3M447.6 282.6l16.6-3.7M448.2 285.2l16.3-3.4M448.3 286.5l17-3.6M449.8 287.8l13.5-2.8M450.3 289.3l14.8-3.7M449.2 290.9l15-3.8M449.7 292l15.8-3.2M450.1 293.1l15-2.7M449.8 296l15.3-2.5" stroke="#978d68" stroke-width="1.2" fill="none" stroke-linecap="round"/>
<path d="M440.9 236.3l8.2-2.3M441 246l12.7-4.2M443.1 247l10.8-3.9M443.2 248.1l11-4M443.5 250.7l11.6-3.5M445.4 251.5l12.4-3.6M445.2 255.7l13.7-3.1M446.9 258.3l12.3-2.9M447.9 267.4l13.9-4.4M448.2 268.1l13.2-2.9M448.3 269.9l14-3.8M447.8 270.8l14.9-3.8M448.2 271.8l15.4-2.6M448.9 276.3l14.2-2.8M448.3 278.1l15.8-3.6M449 280.2l14.2-2.3M448.3 283.8l16.5-3.9M449.4 294.7l15.7-3.3M449.9 296.9l16.3-2.7" stroke="#9d936d" stroke-width="1.2" fill="none" stroke-linecap="round"/>
<path d="M443 233.2l2.1-0.3M441.8 235.4l5.5-1.8M441.3 236.6l5.6-1.6M442 237.6l5.8-1.8M442.9 238.4l5.5-1.9M441.6 241.4l9.5-3.1M443.1 245.6l10.4-3.2M443.4 245.9l10.3-2.8M444.5 248.6l8.4-2.7M446.7 250.2l7.3-2.3M446.9 250.9l7.3-1.9M449.1 256.5l7.7-2.6M450 264.6l9.1-2.6M450.1 267.5l10-2.9M451.1 270.2l8.5-2.2M450.7 272.9l10.8-1.8M451.8 274.8l9-2.5M449.9 276.4l11.2-2.6M451.6 285.8l9.7-2.1M451.7 289.6l11.3-1.7M451.9 292.5l11.2-2" stroke="#ada379" stroke-width="1.0" fill="none" stroke-linecap="round"/>
<path d="M442.9 234.5l2.1-1.2M442.4 240.1l8.1-2.9M442.8 242.1l7.6-2.3M442.4 244.2l8.7-3.3M444.9 247.1l8.5-2.5M447.9 252.8l7.7-3.2M447.3 253.9l9-2.9M446.5 255.5l9.1-2.2M449.2 257.8l7.6-1.7M447.8 260l9.9-2.9M448.5 260.6l8.6-1.6M450.1 261.6l8.3-1.6M449.2 263.5l8.7-2.4M450.4 265.8l8.8-1.5M450.6 268.7l9.1-1.7M450.4 271.7l10.8-2.8M451.1 276.7l10.1-1.6M450.1 278.8l12.5-2M450.8 280.3l10.2-2.1M450.8 281l11-2.2M451.4 283l11.7-2.6M452.1 283.9l10.9-2.4M451.6 287l11.6-2M451.2 288.9l12.7-3M452.4 291.1l11.9-2.1M452.5 294.6l11.4-3.1M452.3 295.7l11.1-1.9M451.9 297.2l12.3-2.8" stroke="#b3a97e" stroke-width="1.0" fill="none" stroke-linecap="round"/>
<path d="M443.6 233.9l0.9 0M442.7 234.8l2.9-0.3M444.2 236l2.6-0.6M445.1 240.4l4.4-1.8M445.1 243l5-2M445.2 244.7l4.7-2M447 247.2l4.9-1.8M448.3 248.9l5-1.2M448.7 250.8l3.1-0.8M449.6 253.7l4.2-1.6M448.8 254.9l6.3-1.6M451.9 258.3l2.8-0.1M452.4 261.8l4.5-1.5M451 263.1l5.5-1.6M452.1 267.3l4.3-1.6M453.1 271.2l4-0.7M454.1 274.3l5.7-2M453.9 278.4l6.4-1.9M452.7 279.3l6-1.1M454.8 283.8l3.7-1.4M455.1 286.9l5.2-1.8M454.1 289.5l4.9-0.9M455.9 293.5l5.9-1.7" stroke="#c6bd90" stroke-width="0.9" stroke-opacity="0.8" fill="none" stroke-linecap="round"/>
<path d="M442.9 233.6l1.7-1.2M444.9 238.9l2.4-1.4M446.9 248.3l4.3-1.2M448.8 251.8l3.9-1.2M450.3 257l5.2-0.5M450.9 265.5l6.5-0.6M452.1 268.8l6.3-1.3M452.5 275.8l5.5-1.1M452.1 276.8l8.3-1.3M452.2 283.1l7.7-1.9M453.9 287.9l6.8-1.7M455.7 291.8l5.1-0.3" stroke="#ccc396" stroke-width="0.9" stroke-opacity="0.8" fill="none" stroke-linecap="round"/><path d="M445.2 233.5l1.5-0.5M445.6 236.3l2.7-0.9M446.3 237.2l3.8-1.3M447.2 242.3l4.8-1.5M451.5 245.4l2.5-0.8M443.5 250.8l2.3-0.7M451.9 249.7l2.7-0.8M449.2 262.2l2.1-0.6M452 264.3l3.1-0.8M447.9 266.8l3.7-0.9M448.5 268.1l3.1-0.8M457 268.8l3.6-0.9M451.8 289.9l5.2-1M452.3 294l5.2-0.9M450.3 297.2l3.4-0.6" stroke="#ddd5a8" stroke-width="0.8" stroke-opacity="0.7" fill="none" stroke-linecap="round"/>
<path d="M445.3 234.4l1.7-0.6M448 239.2l3.5-1.2M445.5 241.4l3.2-1M449.6 244.5l4.1-1.3M447.1 248.2l4.6-1.4M453.2 250.8l2-0.6M449.1 253.5l4-1.2M449.5 257.7l2.7-0.7M446.9 261.4l2.6-0.8M454.9 272.2l4.3-1M450.1 276.1l2.6-0.6M451.3 278.6l2.7-0.6M456.6 278.9l5-1.1M455.3 282l6-1.2M453.8 286.6l2.9-0.5M460 289.7l5.8-1.1" stroke="#d3ca9e" stroke-width="0.8" stroke-opacity="0.7" fill="none" stroke-linecap="round"/><path d="M446.8 235.9l2.1-0.7M441 244.3l3.4-1.1M454.1 252l3.2-0.9M445.1 257.6l2.6-0.8M462.3 277.7l3.4-0.7M450.7 292.9l3.4-0.6" stroke="#696145" stroke-width="0.8" stroke-opacity="0.55" fill="none" stroke-linecap="round"/>
<path d="M441.7 235.6l1.3-0.4M440 239.2l2.5-0.8M450.8 236.9l1.8-0.6M438.8 243.6l2.2-0.7M454.3 243l2.2-0.7M448.5 258l3.5-1M446.6 260l3.5-1M460.2 259.2l2.8-0.8M458.8 261l1.9-0.5M446.3 289.5l2.8-0.5" stroke="#5e573e" stroke-width="0.8" stroke-opacity="0.55" fill="none" stroke-linecap="round"/></g>
<path d="M435.2 245.9l3.1-1M437.2 247.2l1.8-1M438.1 251l3-0.6M438.9 251.9l3-0.3M441.5 258.8l2.7-0.5M441.9 262.3l3.8-0.7M442.3 268.2l3.6-0.7M443.5 269.1l1.8-0.1M443.1 276.1l3.8-0.7M444.3 295.7l4.2-1M444.2 296.6l2.3 0.1M444.3 298.2l2.3-0.5" stroke="#6e6649" stroke-width="1.1" stroke-opacity="0.85" fill="none" stroke-linecap="round"/>
<path d="M440.2 234l1 0M438.9 236.4l1-0.1M436.6 237.7l3.3-0.4M437.4 240.1l0.8-0.1M436.1 241.7l2.2-0.7M436.7 243l1.5-0.3M439.6 253.5l2.8-1.1M439.6 254.9l3.1-1M440 256.1l2.5-0.4M440.6 257.3l3.4-0.6M441.9 260l2.7-0.6M442.6 263.7l3.4-0.3M443 266.8l1.5-0.2M443.8 270.7l1.4-0.2M443.7 273.2l3.1-0.4M442.3 279.2l2.8-0.6M443.2 280.4l3.3-0.6M443.4 281.7l2.2-0.6M442.8 284.7l2.6-0.6M444.9 291.1l1.5-0.1M443.4 293l4.1-0.5M444.4 294l3.2-0.1" stroke="#625b41" stroke-width="1.1" stroke-opacity="0.85" fill="none" stroke-linecap="round"/>
<path d="M452.7 234.9l2.3-0.5M455.3 239.3l3.5-0.4M455.9 241l3.9-1.1M455.6 242.2l4.1-0.5M458.6 247.6l2.4-0.7M459.9 250.3l2.7-0.6M461 255.8l3-0.5M461.2 257l3.7-0.6M464 261.2l1.1-0.3M464.5 262.8l2.1-0.8M463.9 265.3l3-0.5M465.3 266.6l1.2 0.1M467.8 277.8l2.8-0.5M466.1 279.8l4.3-1M467.8 282.4l2.9-0.3M468.2 283.6l2.3-0.4M468.8 291.2l3.4-0.7" stroke="#6e6649" stroke-width="1.1" stroke-opacity="0.85" fill="none" stroke-linecap="round"/>
<path d="M448.5 233l2.4-0.4M449.8 233.7l2.7-0.7M453.5 236.2l1.7-0.5M454.5 238.5l1.9-0.6M458.2 243.1l1.1-0.1M456.9 244.8l3-0.2M458.4 246.3l3.8-0.8M458.5 248.9l2.4-0.5M460.5 253.3l3.3-0.8M462.1 254.2l1.1-0.2M462.3 258.5l2.9-0.5M462 260.1l2.3-0.5M465.1 270.9l3.6-0.5M466.4 280.9l4.8-0.6M468.8 285.1l1.3-0.3M469.4 288.1l0.7 0M469.1 295.3l4.1-0.5" stroke="#625b41" stroke-width="1.1" stroke-opacity="0.85" fill="none" stroke-linecap="round"/>
<path d="M531.0,36.0C533.5,36.6 535.2,38.2 538.0,40.5C540.8,42.8 544.8,46.6 548.0,50.0C551.2,53.4 554.0,57.2 557.0,60.6C560.0,64.0 563.0,67.0 566.0,70.5C569.0,74.0 571.9,77.2 575.0,81.3C578.1,85.4 581.7,90.8 584.5,95.0C587.3,99.2 590.0,102.7 591.9,106.5C593.8,110.3 594.8,114.0 596.0,118.0C597.2,122.0 598.4,126.4 599.2,130.6C600.0,134.8 600.3,138.8 600.7,143.0C601.1,147.2 601.6,152.0 601.8,155.7C602.0,159.4 602.2,162.6 602.0,165.0C601.8,167.4 601.0,167.0 600.6,170.0C600.2,173.0 600.0,178.8 599.4,183.2C598.8,187.6 598.2,192.1 597.0,196.3C595.8,200.5 594.0,204.3 592.2,208.3C590.4,212.3 588.2,216.4 586.2,220.2C584.2,224.0 582.4,227.6 580.2,231.0C578.0,234.4 575.4,237.5 573.0,240.6C570.6,243.7 568.9,245.4 565.7,249.4C562.5,253.4 557.7,260.7 553.7,264.9C549.7,269.1 545.8,271.3 541.8,274.5C537.8,277.7 533.8,281.2 529.8,284.0C525.8,286.8 521.8,289.0 517.8,291.2C513.8,293.4 509.9,295.2 505.9,297.2C501.9,299.2 497.9,301.4 493.9,303.2C489.9,305.0 485.6,306.7 482.0,308.0C478.4,309.3 475.7,309.8 472.0,311.0C468.3,312.2 462.4,313.1 460.0,315.0C457.6,316.9 459.2,321.9 457.6,322.5C456.0,323.1 453.2,320.7 450.4,318.6C447.6,316.6 444.5,313.4 440.9,310.2C437.3,307.0 433.1,303.6 428.9,299.5C424.7,295.4 415.6,287.7 415.8,285.3C416.0,282.9 425.2,285.2 430.0,285.0C434.8,284.8 439.8,284.9 444.5,283.9C449.2,282.9 453.8,280.6 458.0,279.0C462.2,277.4 466.0,276.1 470.0,274.5C474.0,272.9 478.0,271.7 482.0,269.7C486.0,267.7 489.9,264.9 493.9,262.5C497.9,260.1 501.9,258.1 505.9,255.3C509.9,252.5 513.8,249.2 517.8,245.8C521.8,242.4 526.6,237.9 529.8,235.0C533.0,232.1 534.8,231.1 537.2,228.6C539.6,226.1 542.5,223.2 544.3,220.2C546.1,217.2 547.2,213.5 548.0,210.7C548.8,207.9 547.8,205.9 549.1,203.5C550.4,201.1 553.4,198.2 556.0,196.0C558.6,193.8 562.6,192.3 565.0,190.0C567.4,187.7 568.7,186.2 570.1,182.0C571.5,177.8 573.1,170.4 573.5,165.0C573.9,159.6 572.9,154.1 572.5,149.4C572.1,144.7 571.7,141.0 570.9,137.0C570.1,133.0 569.0,129.3 567.8,125.3C566.6,121.3 565.7,117.8 563.6,112.8C561.5,107.8 557.6,100.0 555.2,95.0C552.8,90.0 551.5,87.2 549.0,83.0C546.5,78.8 543.3,73.3 540.0,69.5C536.7,65.7 532.6,64.1 529.0,60.0C525.4,55.9 519.5,48.8 518.5,45.0C517.5,41.2 520.9,38.5 523.0,37.0C525.1,35.5 528.5,35.4 531.0,36.0Z" fill="#857b5c"/>
<clipPath id="c810565"><path d="M531.0,36.0C533.5,36.6 535.2,38.2 538.0,40.5C540.8,42.8 544.8,46.6 548.0,50.0C551.2,53.4 554.0,57.2 557.0,60.6C560.0,64.0 563.0,67.0 566.0,70.5C569.0,74.0 571.9,77.2 575.0,81.3C578.1,85.4 581.7,90.8 584.5,95.0C587.3,99.2 590.0,102.7 591.9,106.5C593.8,110.3 594.8,114.0 596.0,118.0C597.2,122.0 598.4,126.4 599.2,130.6C600.0,134.8 600.3,138.8 600.7,143.0C601.1,147.2 601.6,152.0 601.8,155.7C602.0,159.4 602.2,162.6 602.0,165.0C601.8,167.4 601.0,167.0 600.6,170.0C600.2,173.0 600.0,178.8 599.4,183.2C598.8,187.6 598.2,192.1 597.0,196.3C595.8,200.5 594.0,204.3 592.2,208.3C590.4,212.3 588.2,216.4 586.2,220.2C584.2,224.0 582.4,227.6 580.2,231.0C578.0,234.4 575.4,237.5 573.0,240.6C570.6,243.7 568.9,245.4 565.7,249.4C562.5,253.4 557.7,260.7 553.7,264.9C549.7,269.1 545.8,271.3 541.8,274.5C537.8,277.7 533.8,281.2 529.8,284.0C525.8,286.8 521.8,289.0 517.8,291.2C513.8,293.4 509.9,295.2 505.9,297.2C501.9,299.2 497.9,301.4 493.9,303.2C489.9,305.0 485.6,306.7 482.0,308.0C478.4,309.3 475.7,309.8 472.0,311.0C468.3,312.2 462.4,313.1 460.0,315.0C457.6,316.9 459.2,321.9 457.6,322.5C456.0,323.1 453.2,320.7 450.4,318.6C447.6,316.6 444.5,313.4 440.9,310.2C437.3,307.0 433.1,303.6 428.9,299.5C424.7,295.4 415.6,287.7 415.8,285.3C416.0,282.9 425.2,285.2 430.0,285.0C434.8,284.8 439.8,284.9 444.5,283.9C449.2,282.9 453.8,280.6 458.0,279.0C462.2,277.4 466.0,276.1 470.0,274.5C474.0,272.9 478.0,271.7 482.0,269.7C486.0,267.7 489.9,264.9 493.9,262.5C497.9,260.1 501.9,258.1 505.9,255.3C509.9,252.5 513.8,249.2 517.8,245.8C521.8,242.4 526.6,237.9 529.8,235.0C533.0,232.1 534.8,231.1 537.2,228.6C539.6,226.1 542.5,223.2 544.3,220.2C546.1,217.2 547.2,213.5 548.0,210.7C548.8,207.9 547.8,205.9 549.1,203.5C550.4,201.1 553.4,198.2 556.0,196.0C558.6,193.8 562.6,192.3 565.0,190.0C567.4,187.7 568.7,186.2 570.1,182.0C571.5,177.8 573.1,170.4 573.5,165.0C573.9,159.6 572.9,154.1 572.5,149.4C572.1,144.7 571.7,141.0 570.9,137.0C570.1,133.0 569.0,129.3 567.8,125.3C566.6,121.3 565.7,117.8 563.6,112.8C561.5,107.8 557.6,100.0 555.2,95.0C552.8,90.0 551.5,87.2 549.0,83.0C546.5,78.8 543.3,73.3 540.0,69.5C536.7,65.7 532.6,64.1 529.0,60.0C525.4,55.9 519.5,48.8 518.5,45.0C517.5,41.2 520.9,38.5 523.0,37.0C525.1,35.5 528.5,35.4 531.0,36.0Z"/></clipPath>
<g clip-path="url(#c810565)"><path d="M533.4 38l-9.3-3.1M535.6 38.1l-12.9-2.4M541.1 43.2l-22.2-1.4M542.5 44.5l-24.2-1.4M543.5 45l-24.8-1M546.7 48.8l-27.2-1.5M550.1 50.9l-29-0.9M553.2 54.3l-30.5-0.9M553 55.5l-29.1-1M558.5 60.7l-31-2M560.8 64.4l-29.9-3.3M561.6 64.8l-30.2-2.2M563.7 66.9l-30.9-2.8M563.9 68.4l-30.6-4.2M565.7 69.4l-31-3.7M566.7 70.1l-30.2-3.8M566.8 71.2l-30.4-5M567.8 72.4l-30.6-4.9M568.7 73.8l-30.1-5.4M570.1 74.9l-31.1-5.5M571.2 76.3l-30.8-6.4M571.9 77l-30.4-5.8M572.6 77.5l-31-5.8M573.6 78.9l-30.7-6.2M574.1 80.6l-30.4-6.1M575.1 81.1l-31.2-6.3M576.3 82.2l-31.8-6.1M576.8 83.9l-32.1-6.6M578.4 86.2l-32-7M579.6 88l-32.3-6.5M581 89.8l-33.1-7.6M583.1 93.1l-33.5-7.5M589.5 102.2l-35.5-8.2M590.8 103.4l-36-8.7M591.4 104.4l-35.7-8M592.4 105.4l-36.4-8.1M594.7 110.9l-36.4-9.4M594.3 112.4l-35.6-9.4M596.1 115.1l-36.2-9.9M595.4 116.5l-34.5-10.4M596.5 119.3l-35.7-11.6M596.7 120.6l-35.5-11.3M598 123.5l-35.8-11.6M599.2 127.7l-35.1-12.7M599.6 131.2l-34.4-12.6M600.1 133l-34-13.5M600.6 134.8l-34.3-14.6M600.1 135.9l-34-14.5M601.3 140l-34.1-15.1M600.3 142.2l-32.1-14.7M600.5 143.4l-32.3-15.1M602 149.7l-32.8-16.6M601.6 151.6l-31.8-17.6M601.5 155.2l-31.2-17.3M602 156.8l-30.3-17.2M602.7 158l-31.2-17.4M602.3 164.8l-30.5-18.3M601.9 166.8l-30-19.7M602.2 168.4l-29.9-19.3M601.1 169l-28.7-19.6M601 170.6l-28.8-20M600.8 173.5l-28.2-20.5M599.9 177.7l-26.8-20.9M600.5 179.6l-27.3-21.2M600.2 183l-26.6-20.6M598.6 187.4l-25.5-21.4M598.9 188.9l-26.2-22.3M598.5 190.6l-25.9-23.4M598.6 191.8l-26-22.6M598.4 192.7l-25.8-22.5M597.4 196.1l-25.6-23.6M597.4 196.6l-25.4-23M596.9 197.9l-25.1-23.3M594.5 203l-23.8-23.5M593.9 204.5l-24.1-23.5M591.3 210.9l-23.7-24.5M589.9 213.8l-24-25.9M588.4 216.3l-23.9-26.5M588.5 218.3l-25.2-27.8M586.9 220.2l-25.6-28.1M584.1 226.9l-27.1-31.2M577.9 235.8l-28.4-34.4M572.1 242.3l-24.1-33.3M571.2 242.8l-23.3-32.8M569.9 245.6l-22.2-33.4M568.4 247.2l-22-33.9M564.6 251.3l-19.6-32.5M563.9 252.6l-19.8-33.8M563 253.3l-18.6-33M561.9 254.2l-18.8-32.9M560.6 257l-19.2-33.7M559.2 258.1l-18.4-34.5M558.3 260.9l-18.4-34.7M556.7 262.8l-18.6-35.5M554.3 263.8l-18.7-34.3M550.2 268l-17.7-36.1M547.8 270.9l-16.9-36.6M545 272.2l-17.1-35.9M537.7 278.1l-14.9-36.9M537.1 279.1l-15-36.7M536.1 279.4l-15.1-36.3M534 281.3l-15.5-36.4M532.5 282.5l-14.1-37.3M525.9 286.7l-13.4-37M523.6 288.6l-13-37.8M522 289.5l-12.4-37.4M521.1 289.6l-12.7-37.2M517.5 291.4l-11.9-36.4M515.6 293.4l-11.2-37.5M514.8 292.9l-11-36.7M511.7 294.2l-9.9-36.6M510.6 294.8l-9.9-36.3M508.2 296.9l-9.7-36.8M505.9 297.5l-9.7-36.9M504.5 297.8l-9.2-36.6M501.5 300.3l-8.4-37.7M501.1 300.8l-9.2-37.3M498.1 301.5l-7.6-37.5M494.6 302.8l-7.4-36.5M489.9 304.6l-6.3-36.8M487.9 306.2l-6.1-37.1M484.8 306.8l-5-36.3M483.1 308.6l-5.6-37.9M480.3 309.3l-5.4-37.4M477.2 309.9l-3.8-36.5M476.1 310.3l-4.1-37.7M464.6 313.1l-2.1-37M455.2 322.6l-4.5-41M453.3 321l-5.1-38.5M452 319.8l-5.1-36.3M450.2 318.1l-5.6-34.9M449 317.3l-5.5-33.2M447.7 317.4l-5.6-33.6M446.7 315.5l-5.9-32M446 314.6l-6-30.3M444.9 313.7l-6.8-29.8M443.6 313.2l-6.2-29.1M442.7 312.2l-6.5-27.4M432.9 303.8l-7.2-19.1M432.4 302.3l-8-17.3M428.8 299.1l-8.4-13.7" stroke="#6e6649" stroke-width="1.5" fill="none" stroke-linecap="round"/>
<path d="M531.3 36.3l-5.8-3M532.5 36.7l-7.6-2.2M535.9 38.9l-12.7-1.5M537.4 39.7l-15.8-1.6M538 40.7l-17.6-2.3M540.1 41.7l-20.2-1.7M540.7 42.5l-20.7-2.3M544.7 46.7l-26.4-1.2M545.5 47.3l-27.2-1.6M547 49.6l-27.5-1.6M548.6 49.9l-28-0.2M550.7 51.9l-29.7-0.2M552.3 53.2l-29.2-1.2M554.7 56.5l-30.1-0.9M555.6 57.4l-29.6-0.9M555.9 58.8l-29.5-2M556.5 60.1l-29.1-1.8M558.4 62l-30.1-2.2M559.9 63.7l-31-3.1M562.4 66l-30.4-2.6M577.9 84.5l-32.1-6.7M580.1 86.6l-33.3-6M581.7 90.3l-33-6.6M582 92l-32.8-8.1M584.3 93.9l-34.4-7.1M585.1 95l-33.4-7M586 96l-34.6-7.8M586.9 97.6l-34.8-7.8M586.8 98.8l-34.4-8M588.6 99.7l-35.1-7.9M588.7 101.1l-34.6-8.5M593.2 106.7l-36.7-8.2M593.2 108.2l-36.3-9M593.8 110.1l-35.5-10M594.8 113.2l-35.6-9.7M596.6 118l-35.8-11.3M598.3 121.4l-36.6-11.4M598.2 124.9l-35.1-12.5M598.4 125.5l-35.5-12.4M599.2 128.9l-34.7-12.8M600 129.8l-35.3-12.9M600.1 137.1l-33.2-14M600.5 137.8l-33.4-14.3M600.8 141.4l-33-15.6M601.3 145.8l-32.5-15.7M600.9 146.6l-31.8-15.9M600.8 147.7l-31.1-15.6M601.8 152.6l-31.8-17.4M601.6 154l-30.7-17.4M602 159.2l-30.6-17.2M603.1 160.8l-31.7-17.9M602.9 162.5l-31.5-18.7M602.2 163.2l-30.5-18.5M601.3 172.1l-29.2-19.7M601.1 175l-28.4-20.1M600.6 175.9l-28.1-19.9M599.8 179.9l-26.3-20.9M600.4 181.5l-27.4-21M599.3 184.6l-25.9-21.3M599 185.5l-25.4-20.5M597.2 194l-24.6-22.1M596.4 199.7l-25.1-23.2M595.3 200.3l-24.1-23.4M594.9 202.6l-23.8-24.1M593.5 205.9l-23.4-23.3M592.4 207.1l-23.2-24.3M592.2 209.3l-23.4-25M591.9 210.5l-23.5-25.5M590.9 212.9l-24.3-25.8M589.5 214.8l-24.2-25.2M586.8 219l-24.2-27.2M586.1 221.6l-25.8-28.9M585.8 222.7l-26.4-29.4M584.8 224.4l-26.6-29.9M583.7 224.6l-26.4-29.8M582.7 227.6l-27.1-31.5M582.1 228.9l-27.4-32.7M580.6 229.5l-27.1-31.7M580.8 231.4l-28-32.4M579.1 231.9l-27-32.7M578.4 233.4l-27.5-32.9M578.6 235.1l-28.7-33.9M576.6 237.4l-27.3-34.8M575 238.1l-26.1-34.1M574.9 239.6l-27-34.6M573.3 240.4l-24.6-33.7M573.2 241l-25.4-33M569.8 244.1l-22.7-32.6M567.8 248.1l-21.3-34M566.8 248.9l-21-33.1M566 250l-20.1-33.5M561.2 255.5l-18.8-33M558.7 258.8l-18.8-33.7M557 261.5l-18.7-34.4M555.8 264.1l-18.5-35.7M553.2 265.6l-18.2-35.6M553 267.2l-19-36.1M551.2 267.4l-18.4-35.9M549.5 269.9l-18.5-37.1M547.1 270.7l-17.2-35.9M545.9 271.5l-17.1-36M543.3 273.7l-16.5-36.6M542.3 274.4l-16.6-36.1M541.9 275.5l-16.3-36.7M539.9 275.9l-16-35.9M538.9 277.6l-15.4-37.2M534.4 280.7l-14.8-37.4M531.8 283l-15-37.5M530.3 283.9l-13.8-36.8M529.8 285l-14.5-37.9M527.7 286l-13.3-38.2M526.6 286.8l-13.1-37.7M524.3 287.6l-13.3-36.8M519.4 290l-12.2-36.5M518 291.7l-11.7-37.3M513.4 294.2l-10.6-37.2M509 295.7l-9.9-36.9M507.4 297.2l-9.7-37.5M503.5 298.7l-9.1-36.9M499.7 300.9l-8.8-37.1M497.2 302.4l-8.2-37.6M495.3 302.5l-7.1-36.5M493.5 303.5l-7.1-36.3M491.6 305.2l-6.8-37.6M489.3 305.5l-5.9-37.1M486.5 307.3l-5.2-37.4M484.3 308.4l-5.4-37.5M481.3 309.3l-5.2-37.5M478.2 309.4l-3.8-37.5M474.4 310.4l-3.4-36.6M473.2 311l-3.4-37M471.7 311.4l-3.5-37.2M470.1 311.2l-2.8-35.9M469.2 311.7l-3.1-35.5M467.9 312.1l-2.5-36.2M466.1 312.8l-2-37.2M463.6 313.4l-1.4-36.1M462.4 313.6l-1.5-35.8M460.6 314.7l-1.5-36.9M460 315.2l-1.7-36.8M459.2 316.9l-1.7-37.6M459.1 317.7l-2.8-38.1M458.4 319.6l-3.1-39.6M458.1 320.7l-4.4-39.9M458 321.7l-5.3-41.4M457.3 322.6l-5.9-41.4M454.4 321.6l-5.3-40.2M451 319.8l-5-35.9M441.7 311.4l-7.1-26.7M440.1 310.4l-5.9-26.4M439.4 309.7l-6.4-25.3M438 308.4l-6.3-23.9M437.9 308l-7.5-23.7M436.6 306.1l-7.8-21.6M435.3 305.2l-7.7-20.5M434.7 304.9l-8.2-20.3M431.8 302.3l-9-17.8M430.5 300.7l-8.3-15.6" stroke="#666043" stroke-width="1.5" fill="none" stroke-linecap="round"/>
<path d="M531.3 35.5l-5.2-1.8M531.8 36.5l-5.8-2.4M533 37.2l-8.3-1.9M533.9 38.4l-9.5-1.3M536.8 41.2l-14.3-1.4M538.7 41.8l-18.1-0.9M541.1 44.3l-21.2-1.4M540.5 45.3l-21.2-1.8M541.2 46.5l-19.9-1.7M545 47.9l-22.7-0.1M546.2 49.1l-24.5-1.2M545 49.9l-22.2-0.2M547.6 51.6l-24.6-0.7M546.5 52.4l-21.5-1.2M548.7 54.2l-24.6-0.6M550.6 55.1l-24.1-0.9M552.1 56.7l-23.6-1.2M554.9 60.7l-25.4-2M558 62.9l-24.6-1.6M562.5 67.6l-26-2.5M563.1 70.3l-25.5-3.8M564.7 71.3l-26.5-4M564.5 71.7l-23.5-3.9M568.8 77.1l-23.3-4M569.4 78.2l-23.2-3.9M574.2 81.7l-27.8-5.2M573.3 83.5l-23.5-5.1M577.3 87.1l-27.5-6.3M579.5 89.7l-28.8-5.7M579.8 91.9l-26.5-5.4M582.9 93.9l-29.7-6.6M581.7 94.2l-28.1-6.7M585.1 96.9l-28.1-5.7M584.6 97.9l-29.2-6.5M585.4 99.9l-29.4-6.4M588 102.4l-29.2-6.7M589.6 103.8l-31.8-7.3M590.5 106.1l-30.7-6.8M591.3 108.1l-30.8-7.5M592 109.5l-32-8.3M589.8 109.5l-27.4-7M590.3 111.2l-27.1-7.4M594.2 115l-32.8-9.2M593.6 116.9l-28.1-8.3M593 117.9l-28.5-8.8M592.8 119.3l-26.4-8.1M595.2 122.1l-29.8-9.7M597 128l-29.6-11.1M596.3 130.5l-29.6-11.7M598.7 134.6l-30.1-11.9M598.2 136.4l-29.4-12.9M597.6 136.7l-26.7-11.2M599.3 142.5l-28.4-12.6M600.4 147.5l-26.5-12.9M598.1 148.9l-25.4-13.3M599.3 151.9l-26-13.4M600.5 154l-25.5-13.4M598.5 155.7l-25.9-15M598.5 158.9l-26-16M600 163l-25.6-16.2M599.6 164l-25.8-16.4M600.1 165.6l-25.3-16M597.3 172.2l-21.5-15.3M598.2 174.5l-22-15.8M599.4 176.4l-23.3-16.7M596 178.5l-19.9-15.3M597 182.6l-21.1-17.2M596.5 191.1l-20.2-17.7M596.3 192.2l-23-20M593.8 196l-20.3-19.1M594 198l-21.8-21.1M594.5 200.4l-21.3-20.6M592.8 200.1l-18.5-18.9M592.7 203.6l-21.1-21.6M591.4 206.2l-19.3-20.2M589.4 208.1l-18.4-20.9M587.7 208l-18.6-20.8M588.6 210.4l-20.3-21.4M585.6 211.5l-18.4-20.3M585.2 213.5l-18.6-21.2M581.9 219.2l-18.7-22.4M581.4 221.5l-21.7-24M580.2 225.6l-24.7-27.5M576.8 229.1l-22.1-27.4M575.1 229.4l-21.4-25.5M577 232.4l-25-29.9M573.6 231.5l-22.3-27.2M573 233l-21.5-26.5M573.9 235.8l-23-28.7M573.2 236.9l-21.7-27.8M567.7 239.7l-18.1-26.7M567.2 240.8l-16.5-24.9M568 244.2l-19.4-29.5M566.4 243.3l-18.4-27.9M565.5 247l-16.9-27.1M562.7 246.9l-16.2-26.5M561.8 251.6l-15.7-28.7M561.3 252.7l-16.2-27.8M559 252.2l-15.3-27.7M554.9 259.4l-15.5-27.9M552.8 259.2l-15-29.4M551.6 260.1l-14.1-28.3M552.5 263.8l-16.5-31.3M545.9 266l-14.5-29.5M543.1 268.4l-14.4-30.3M537.1 272.8l-12.5-29.1M533.6 278.3l-12.6-30.8M530.5 277.6l-12.2-30M530 282.1l-12.8-31.6M528.7 282.6l-12.3-32.3M526 281l-10.3-28.4M525.6 282l-11.1-28.8M525.1 284.7l-12.1-31.4M523.2 283.5l-10-28.3M523 286.6l-10.8-30.2M521.3 286.5l-10.6-32.1M519.9 287l-9.9-29.5M516.1 288.8l-9.5-31.7M515.7 291.4l-10.9-34.2M511.1 290.4l-8.6-31.2M509.8 292.1l-8.7-32M508.5 292.1l-8.3-30.3M507.4 293.8l-7.9-31.4M502.6 295.4l-7.6-31.3M501.6 296l-7.5-28.9M500.3 298.6l-7.7-33M498.5 299.1l-6.8-33.7M493.2 299.8l-5.3-31.1M491.8 298.9l-4.7-29.1M491.4 301.5l-5.4-30.7M489.2 302.8l-5.7-31.3M487.4 301.5l-4.6-29.5M484.4 303.7l-4.3-31.4M483.6 305.2l-4.4-31.4M478.7 307.4l-3.8-33.1M477.1 305.5l-3.8-28.8M474.3 308l-3.2-31.5M473.2 309.1l-2.9-32.4M471.3 309l-2.2-32.9M470.1 309.2l-2.2-30.6M466 308.8l-1.5-30.8M461.9 310.2l-1-30.1M460.6 310.8l-0.8-31M459.7 311.8l-1.7-30M457.9 313.4l-1.7-31.6M458.4 318.2l-4.1-34.5M455.4 318.3l-5-34.3M452.8 318.4l-4.6-33.6M451.8 318.1l-3.7-30.5M451.2 317.5l-5.1-31.2M440.8 309l-5.4-22.6M440.1 307.1l-5.7-20.4M438.7 306.5l-5.4-19.9M436.4 305l-4.9-17.5M434.7 303.3l-6.8-16.9" stroke="#827957" stroke-width="1.3" fill="none" stroke-linecap="round"/>
<path d="M534.1 37.6l-9-1M536.6 39.5l-13.4-1M537.1 40.1l-15-0.9M539.1 43.4l-19.3-1.6M544.2 47.7l-22.1-1.3M549.2 53.5l-25.6-1.1M550.7 57.7l-23.5-1.7M552.4 58.4l-24.3-1.1M552.7 59.7l-22.3-2M557.6 62.1l-25.7-1.8M557.4 63.5l-25.1-2.1M558.9 64.5l-26-1.5M559.3 65.7l-25.9-2.4M559.6 66.5l-23.5-2.2M561.8 68.7l-22.9-2.6M565.5 72.9l-24.2-4M566.5 73.7l-25.5-4.1M567 75.1l-24.4-4.8M568.6 76.6l-25.6-5.6M570.7 79.2l-24.7-4.9M571.1 80.7l-25.3-5.2M574.6 83.6l-28.1-6.5M576.1 85.1l-27.5-5.1M577.3 87.6l-28.2-6.3M579.2 89.1l-29-6.1M581.3 91.2l-29.8-6.4M583.2 96.3l-28.7-7.6M586.3 99.8l-30.8-7.9M585.8 100.9l-29.2-6.8M587.9 104.5l-27.8-6.4M591.6 113.2l-30-8.8M594.7 116.2l-30.1-8.7M595.2 120.8l-28.6-9.3M594.1 122.6l-28-8.9M595.9 124.6l-28.4-9.9M594.7 125.6l-27.7-9.6M597.5 129.4l-28-11.2M595.5 131.3l-25-9.8M598.8 133.2l-30.3-11.5M599 138.4l-28-11.4M599.4 139.9l-28.4-12.4M598.1 141.4l-27.4-13.2M597.6 144.1l-26.2-12.7M597.8 144.8l-24.7-12.1M598.4 147.7l-27.7-13.6M598.1 150.6l-24.4-13.2M598.8 155.3l-26.5-15.2M600.5 158.7l-26.3-15M598.9 160.4l-25.6-15.4M597.6 165.1l-23.3-14.8M599.2 168.5l-24.7-17M599.1 169.2l-25.5-17.4M597.5 170.3l-22.6-16.6M599.5 172.3l-25.6-17.5M598.3 177.7l-21.4-16.9M598.5 179.3l-23.3-17.9M597.4 180.6l-21.4-16.3M596.7 183.6l-21-16.6M597 186.2l-21.9-19.2M595.8 186.4l-21.7-18.6M597.2 188.3l-21.8-18M595 188.9l-19.5-17.7M595.5 193.2l-22.2-19.7M595.2 194.9l-20.9-18.9M592 201.4l-18.2-18.5M590.5 203.5l-19.5-19.9M590.9 207.4l-20.6-21.7M588.2 211.8l-20.8-22.5M585.7 215.6l-19.2-21.7M584.4 216.3l-19.8-22.6M585.3 218.4l-21.4-23.9M582.6 217.7l-18.6-21.8M582.3 221.8l-23.1-26.9M579.8 223.2l-21.1-26M578.9 224l-20.7-25M577.7 225.8l-22.9-27.2M578.6 229.1l-22.4-26.4M571.4 237.5l-22.2-29.7M569.8 237.2l-19.2-25.8M569.6 239.7l-19.5-27.8M565.8 244.7l-17.6-27.3M564 247.9l-16.6-28.4M562.7 249.4l-16.4-26.9M558.7 252.5l-15.2-26.9M558.3 254.5l-15.1-26.5M556.1 255l-14.8-28.6M556 255.5l-15.4-26.5M556.3 259.4l-15.3-28.3M551.3 263.2l-14.9-27.9M550.3 265.9l-16-31M549.5 267l-14.9-30.3M547.9 266.3l-15.3-30.3M545.7 267.3l-15-30.5M543.4 267.6l-13.6-30.1M541.7 268.7l-13.8-30.4M541.8 273.3l-14.4-32.5M539.9 270.6l-13.3-29.2M539.4 273.8l-14.7-33.1M536.3 272.8l-12.4-27.8M535.9 275.6l-12.9-30.3M534.7 277.5l-13-32.1M531.8 278l-10.8-28.8M529.9 280.2l-11.6-32.2M518 285.9l-8.6-27.4M517.3 287.3l-9.6-30.8M513.4 289.6l-8.9-29.9M512.7 292.2l-9.5-33.2M506.9 295.2l-8.3-31.8M504.8 293.2l-8-29.5M503.8 295.2l-7.6-31.8M497.3 299.1l-6.1-31.9M495.8 297.8l-6.5-30.8M495.2 300.6l-6.4-31.4M489.2 299.9l-4.6-29.6M485.7 302.2l-4.6-29.8M482.5 306l-4.5-29.9M481.3 304.9l-4.2-28.7M479.1 306.1l-3.5-28.6M474.9 306.2l-2.7-28.4M469.3 309.4l-2.3-29.1M467.3 308.7l-2.3-29.3M464.6 310.9l-1.3-30M463.5 308.8l-1.3-28.5M459.1 311.7l-1.8-29.5M457.9 317.2l-2.3-35.3M457.7 318.5l-4.3-33.3M456 318.6l-4.2-35.7M453.5 316.7l-4.2-31.9M449.8 315.8l-4.8-30.6M448.6 314.7l-4.4-29.2M447.8 314.5l-5.1-26.7M446 312.2l-4.1-24M444.9 313.1l-4.7-24.7M444.4 313l-5.3-25.2M443.5 310.4l-5.3-23.4M441.6 308.8l-4.5-21.4M438.5 307l-7.1-21.3M435.7 305.3l-6.4-19.2M433 302.2l-5.7-15.7M433.2 302.8l-7-15.4M431.4 301.8l-6.3-15.9M430.9 300.1l-7.7-14M428.9 298.8l-6.8-12.5M428.4 298.2l-7.1-11.7" stroke="#897f5d" stroke-width="1.3" fill="none" stroke-linecap="round"/>
<path d="M530.3 35.9l-3.3-1.6M531.5 36.5l-5.1-1.7M534 39.5l-8.1-1.5M534.4 40.2l-9.7-1M535.3 41.4l-12.4-1.7M537 41.9l-14-1.5M537.5 42.9l-13.6-1.5M538.1 45.2l-14.5-1M541 45.7l-19.6-0.1M543.6 49.9l-17.3-0.1M545.3 52.9l-16.4-0.6M547.6 54l-19.8-0.1M547 55.2l-18.8-0.3M549.1 56.1l-19.4-0.2M552 59.6l-20.1-1.5M554.9 62.7l-19.1-1M554.1 64l-17.9-1.6M556.8 64.4l-18.8-1.7M558.2 68.1l-15.9-1.7M560.5 69.8l-19-3.3M562.2 70.6l-20.1-3.4M561.7 71.5l-19.6-3.5M563.7 72.4l-18.4-2.8M564 74.7l-16.3-3.3M566.2 76.4l-20.2-4.6M565.9 77.4l-16.5-2.9M568.8 79.5l-20.2-4.8M571.2 80.4l-20.6-4.1M569.9 81.5l-18.9-4M571.8 82.4l-21.3-4.2M572.7 84.2l-20.4-3.6M572.7 85.6l-20.7-4.8M574.9 89l-19.9-4.2M575.5 89.5l-21.9-4.3M575.7 91l-20.8-4.1M579.1 94l-21.5-4.8M580.3 95.2l-21.3-4.5M580.7 97.4l-21.2-4.9M582.6 99.5l-24-5.1M583.6 101.1l-23.7-5.4M584.5 102.5l-22.1-5.7M585.4 102.9l-22.4-4.9M585.6 104.6l-22-5.7M588 109l-23.6-6.3M587.4 110.2l-20.9-5.7M588.4 111.6l-23.7-6.7M590.6 114.5l-24.5-7M589.9 115.9l-21.6-7M590.6 121.2l-20.1-7.6M591.6 124.5l-21.1-7.7M592.5 127.4l-21.3-7.8M594.9 130.6l-22.4-8.3M592.8 131.7l-20.9-9.2M595.9 137.8l-20.7-9.3M595.9 139.5l-21.3-10.2M596.2 140l-22.8-10.5M596.7 143.3l-20.2-9.8M595.1 144l-19.9-10.6M596.3 146.8l-18.7-9.5M596.6 151.4l-19.2-10.8M595.8 152.2l-17.9-10.4M595.8 153.1l-19-10.4M595.2 153.9l-17.8-10.1M595.5 159l-17.5-10.1M596.5 161.7l-18.7-11.8M597.1 163.6l-20.7-13.4M594.3 164.6l-16.1-10.7M594.3 167.4l-16.9-11.9M595.4 170.7l-17.9-12.9M594.5 174.3l-16.7-13M595.7 177.6l-16.1-13.6M594.9 178.9l-17.9-14M593.3 179.9l-15.9-13.3M595.3 182.7l-17.4-14.5M595.1 184l-17.7-15.4M592.7 193.4l-16.5-15.8M590.2 198.7l-14.5-13.1M588.5 199.6l-13.1-13.5M589.9 202.7l-16.5-17.1M587.9 202.7l-13.1-13.6M588.6 206.3l-15.9-16.7M585.1 209.4l-13.6-15.6M584.4 209.5l-13.2-14.7M583.7 210.7l-14.2-15.4M581.5 212.1l-14.7-16.3M582 216.7l-16.6-18.3M578.3 220.6l-18-20.6M575.9 220.2l-15.4-18.1M576.7 226.9l-20.2-23.6M574 224.9l-16.7-19.1M572.4 227.6l-16.6-19.2M571 228l-17.3-20.7M572.6 231.9l-17.7-20.9M568.6 231.5l-14.3-18.4M568.2 235.6l-15.2-21.5M567.8 237.1l-14.5-20.2M567.2 239.7l-15-21.5M564.9 239l-13.2-18.7M562.2 242.3l-12.1-20.8M562.4 246.2l-13.7-21.4M559.2 245.8l-11.2-18.5M556.1 249.9l-11.6-21.9M555.7 251.5l-11.3-21.7M556.4 254.7l-12.7-24.2M554.4 252.6l-12.1-21.1M553.4 255.6l-11.1-22.4M551.4 258.5l-11.8-21.9M549.5 258.6l-10.2-20.6M549.5 260.5l-11.9-23.6M546.8 260.8l-11.5-22.4M543.1 262.2l-10.1-21M542.2 265.9l-11.4-22.9M540.6 266.9l-9.5-21.6M540.5 269.3l-11.2-24.6M538.5 269.3l-10.5-23.4M535 270.3l-8.5-21M532.5 272l-9.5-23.6M531.5 272.7l-8.7-22M531.2 275l-9.6-23.6M528.6 278.7l-9.2-24.7M526.4 277.8l-8.5-24.4M518.1 281.9l-6.6-21.4M513 284.1l-6.7-23M511.2 288.2l-7-26.3M509.7 287.6l-6.2-24.7M506.7 289.3l-6.7-23.9M504.1 289.4l-6-22.7M502.9 290.8l-5.7-21.6M501.2 292l-5.7-24.1M500.4 293.6l-5.7-25.3M499.4 294l-5.4-24.7M492.9 295.3l-4.5-23M489.8 298.1l-3.9-21.7M486.4 298.4l-3.7-21.7M485.8 299.5l-3.7-24.3M482.5 300.3l-3.1-24.3M476.7 304.1l-2.7-24.2M472.1 303.6l-2-23.1M471.3 302.8l-2.1-20M467.4 307.7l-2.3-25.4M465.8 304.3l-1.2-19.6M464.5 305l-1.1-22.7M460.3 306.1l-0.9-19.4M457.6 310.4l-2.2-22.9M457.8 313.6l-3.4-25M457.3 315.9l-3.3-28.2M454.9 314l-3-23.2M452.4 315.7l-3.7-27.6M451.6 313.7l-3.6-25M449.1 313l-3.1-22.5M446.5 310.1l-3.2-19.4M445.6 310.7l-3.3-19.9M443.7 308l-3.5-19M442.2 307.4l-3.3-18.1M438.6 304.6l-3.6-16.1M437.2 304.6l-4.2-15.2M431.8 301.2l-4.9-12.7M430.7 299.5l-4.5-11.4M428.1 297.9l-5.1-10.8" stroke="#978d68" stroke-width="1.2" fill="none" stroke-linecap="round"/>
<path d="M532.1 36.6l-5.7-1.3M532.9 38.3l-7.1-2.2M533.3 39l-7.8-1.7M538.5 44l-14.3-0.6M542.1 47.2l-17.7-0.4M541 48.3l-14.9-1.3M542.9 49.3l-19-1M544.7 51.3l-17.7-1.1M544.4 52l-16.1 0M548.5 57.4l-17.2-0.7M549.8 58.6l-18.5-0.9M552.9 60.5l-20.1-0.8M553.4 61.9l-17.6-1.7M555.7 66l-17.7-1.8M556.7 66.7l-17.6-2.2M557.3 67.7l-17.7-2.5M565.8 73.6l-19.4-2.7M566.5 76.8l-17.3-3M571.2 83.1l-20.6-4.2M572.7 86.5l-19.4-4.1M574.2 88l-19.3-4.2M578.2 92.3l-23-5M581.6 96.3l-24.9-5.9M582.6 98.5l-24.3-5.7M586.2 105.9l-21.7-5.4M586.3 106.8l-22.7-5.8M588.2 108.3l-25.2-6.6M590.7 113.9l-23.1-7.4M590.9 117.1l-22.8-6.8M588.9 118.1l-18.9-5.9M591.2 119.8l-23.4-8.3M592.4 122.6l-22.6-7.9M591.5 123.5l-22.3-8.3M592 125.8l-20-7M592 128.8l-21.8-8.6M593.6 133.4l-20.9-8.9M592.8 134.2l-20.5-9M593.3 134.9l-19-7.8M595.8 141.9l-20.7-9.9M596 145.4l-21.1-10.8M594.7 147.2l-18.6-9.6M597.6 150.1l-19.7-10.5M598 156.7l-20.5-11.5M595.1 157.3l-18.8-11.5M595.7 158l-19.2-11.3M596.1 164.6l-17.9-12M594.9 166.3l-18.5-11.8M595.7 169.4l-17.6-12M594.4 172.3l-16-11.9M594.6 173.2l-15-11.4M595.6 178.6l-16.4-13.1M593.4 184.3l-15.3-13.7M593.2 185.3l-14.4-12.8M593.1 186.8l-15.3-13M594.5 189.3l-17.9-15.3M593.7 190.3l-16.1-14.3M593.6 192.3l-16.3-15.1M592.2 194.3l-15.6-14.5M590.7 193.9l-15.7-14.2M591.9 197.9l-16.6-16.6M590.1 197.1l-16-15.3M587.2 203.4l-14-14M587.4 207.3l-14.7-16.2M586 208.1l-14-14.5M582.7 211.6l-14.7-16.7M581.3 213.5l-16.2-17.2M579.3 216.3l-16.5-19.4M578.9 217.4l-13.9-16.5M578.4 219.1l-16.5-18.9M576.2 221.8l-17.4-19.6M576.8 225.4l-18.5-23.3M574.7 229.2l-17.6-21.6M569.8 230.4l-15.9-19.2M569.1 233.8l-17.7-22.2M566.9 238.3l-14.5-21.3M564.2 240.2l-12.8-19.9M563.4 242l-12.7-20M560.8 242.4l-12.2-20M561.5 247l-14.5-23.1M558.3 247.4l-11.2-18.7M558.2 249.6l-12.2-22.3M553.3 256.2l-13.1-24.1M552.6 257.2l-12.4-22.8M548.1 261.5l-12.1-24M546.3 263.2l-10.8-22.3M545.5 264.7l-10.8-22.8M543.1 265.7l-11.1-24.3M537.2 268.6l-10.2-23.1M537.1 272.4l-11.6-26M534.1 271.2l-10.4-24.3M529.5 275.6l-8.1-21.8M528.3 274.5l-7.4-19.7M525.6 278.8l-8.9-23.3M524.5 279.1l-8.6-22.4M523.3 278.7l-8.3-21.5M522.6 281.9l-8.9-25.2M521.4 282.9l-8.4-22.8M519.9 283.8l-8.4-25.1M517.8 285l-7.8-23.4M516.2 284.1l-7.4-22.5M515.5 286.4l-7.2-23.3M511.9 284.5l-6.1-20.7M509.1 288.1l-6.9-24.1M507.8 289.8l-6-24.1M504.9 289.6l-5.7-23.5M497.8 293.7l-4.8-21.3M496.8 296.6l-5.8-26.5M495.2 294.5l-4.3-22.5M494.8 296.7l-5-23.1M491.9 297.3l-5.1-23.9M491.3 298.7l-5.2-25.5M487.8 299l-3.7-24.9M484 300.8l-3.6-22.9M481.8 300.3l-3.4-23.8M480 301.1l-2.2-21.7M478.9 301.3l-2.7-21.6M477.7 301l-2.3-21.4M474.9 303l-2-21.4M473.7 303.2l-2.8-24.1M469.5 304.3l-1.9-23M468.4 306.2l-1.9-23.1M463 306.3l-0.9-21.6M461.6 305.9l-0.4-22.8M459.8 309.6l-1.1-22.8M458.6 311.9l-0.8-25.4M458.4 310.4l-2-24.6M456.8 317.4l-4.1-27.3M453.8 313.7l-4-24.2M449.9 313.1l-3.1-23.9M447.7 312.2l-2.8-20.6M444.4 309.6l-2.8-18.5M441.3 307.3l-3.9-18.8M440.8 306.9l-4.5-17.4M437.9 304.1l-3.9-13.6M435.5 302.5l-4-12.6M435 301.6l-4.8-14M434.1 300.8l-4.7-11.6M432.9 301.5l-4.9-12.2M429.2 297.7l-4.1-8.8M427.5 297l-6.2-9.6" stroke="#9d936d" stroke-width="1.2" fill="none" stroke-linecap="round"/>
<path d="M529.2 35l-1.4-0.4M531.8 37.3l-4.2-1.5M532.4 38.5l-6.5-1.5M533.9 39.9l-7.1-0.5M534.2 41.2l-8-1M536.1 42.7l-11.1-0.2M536.8 45.6l-11-0.6M541 50.1l-13.7-0.7M542.4 51.4l-13.8-0.9M544.3 52.9l-14.8-0.1M545.2 53.8l-13.6-0.5M543.1 55.4l-10.8-0.8M547.1 56.2l-13.1-0.6M547.9 58.7l-12.7-1.2M549.4 59.9l-14-1M548.8 60.5l-12.2-1.5M552.1 62.3l-13.7-1.3M558.9 69l-15.4-1.5M558.6 71.4l-10.8-2.1M561.7 72.7l-14.8-2.5M560.3 72.5l-12.9-1.9M563.3 75.7l-15-3.5M562 75.7l-11.6-1.6M565 77l-13.8-2.5M565.3 78.4l-12.9-2M564.7 79.4l-13.7-2.6M565.3 80.4l-11.7-2.6M567.8 82.9l-13.2-3.1M568.8 83.5l-11.9-2.3M571.5 86.5l-15.2-3.3M572.3 87.5l-14.7-3.1M575 90.7l-14.8-3.2M577.5 96.9l-15.5-3.8M578.4 99.9l-14-4.1M580.2 101.7l-16.2-4M581.6 103.1l-16-3.7M581.3 107.1l-13.8-3.9M584.6 108.8l-18.1-5.2M583.7 109.1l-15.4-3.5M584 112.2l-12.4-4.3M585.8 113l-14.6-4.2M587 117.3l-13.3-4.3M587.3 118.9l-14.9-5.5M588.1 120.8l-14.2-4.8M589.1 124.5l-15.8-5M589.7 128l-15.3-6.1M589.1 128.2l-12.7-5M591.5 139.2l-15.2-6.5M592.3 141.9l-15.8-6.9M592.5 143.4l-15-7.7M592 148.7l-13-7.4M593.1 150.2l-12.8-6.7M592.3 151.4l-13.9-8.1M593.6 155.4l-15.1-8.4M592.5 157.6l-13.1-7.5M594.8 162.8l-15.5-9M592.4 162.7l-10.8-6.7M593.3 167.9l-12.9-8.2M592.5 170.7l-10.8-9.1M593 172.4l-13.2-10.3M592.8 173.3l-10.9-8.2M591.9 175.3l-10.3-8M593.2 178.1l-11.5-9.7M591.5 177.4l-10.7-8.2M591.9 179.9l-11.5-9.7M590.2 182.6l-9.9-8.5M591.2 185.8l-12-11M591.5 186.5l-11.9-10.2M589.5 189.8l-9.4-9.2M589.3 190.7l-12-10.4M590 195.4l-10.7-10.2M588.1 196.8l-10.7-10.2M585.9 198.9l-9.2-9.9M585.3 200.3l-7.9-8.8M584.4 201.1l-8.2-8.6M584.1 207.5l-10.6-11.2M581.7 206.9l-9.9-10.9M580.8 207.7l-10.2-10.3M582 210.8l-12.4-13.4M580.9 211.6l-11.7-13M580.3 212.3l-11.7-12.7M577.6 217.5l-13.2-15.6M576 217.6l-10.9-13M572.8 218.3l-10.6-13.2M574.1 221.5l-12.5-15.3M567.9 228.2l-10.4-13.3M567.7 230.3l-12.5-16.5M566.7 231.6l-12.4-16.7M564.6 232.3l-9.8-14.4M565.1 236.5l-11.8-16.1M561.7 238.6l-9.6-14.6M561.4 240.6l-9.5-15.1M559.7 243.6l-9.1-15.7M557.3 243.7l-8-13.3M556 248.6l-8.6-15.9M554.2 247.7l-8.6-15.4M551.9 248.3l-7-12.2M553.2 253.3l-9.6-16.9M551.4 252.6l-9.1-15.8M547.9 253.9l-8.1-15.3M543.4 257.7l-6.5-14.3M538.5 261.4l-7.1-13.4M538.2 265.2l-7.3-17.1M536.5 263.6l-5.7-13.3M535.6 267.8l-7.6-17.1M531.2 267.9l-5.8-14.1M530.7 269.8l-6.3-15.8M530.4 271.7l-6.7-15.6M529.3 273.6l-7.7-19.3M525.2 274.5l-6.1-16.8M523.9 275.3l-5.7-16.9M523 275.3l-5.5-14.6M517.1 279.2l-5.8-17.1M516.2 278.8l-5.2-13.7M515.4 281.5l-4.6-16M509 284l-4.6-15.7M508.1 285.6l-5.1-18.3M503.9 285.3l-4.5-16.2M503.4 286.4l-3.7-13.7M500 287.2l-3-16.2M499.1 288.3l-2.8-14.1M498.8 290.7l-3.4-15.3M496.9 291l-3.5-17M496.4 291.5l-3.8-16.3M494.8 293.1l-3.7-18.2M492.8 294.3l-3.6-16.8M491.3 293l-2.9-13.5M489.6 292.4l-2.8-13M486.4 294.6l-2.4-13.8M482.1 296.4l-2.2-14.6M481.1 298.3l-2.2-17.9M478.8 297.7l-2.6-15M477.6 299.4l-2.3-15.8M475.5 298.7l-1.2-15.7M474.1 297.8l-1.1-12.4M473.7 301.6l-2.1-15.3M467.3 302.7l-1.4-15.4M464.6 302.1l-1.6-13.8M463.2 302.3l-0.6-15.3M460.2 305.8l-0.3-17.7M459.4 306.2l-0.1-16.9M457.9 308.3l-2.5-17.7M456.8 309.2l-1.4-18.8M451.8 310.2l-2.2-14.9M449.1 308.3l-1.8-15.6M448.7 308.3l-2.8-15.4M445.2 305.7l-2.9-13.5M437.9 301.8l-2.4-11M433.4 300.5l-3.3-9.6M431.4 299.1l-3.9-8.7M427.5 296.7l-3.6-7.9M426.1 295.4l-3.3-5.5" stroke="#ada379" stroke-width="1.0" fill="none" stroke-linecap="round"/>
<path d="M530.5 36l-2.9-0.4M531 37.5l-3.7-0.3M532.8 39.4l-7-1.3M534.3 42l-8.6-1.2M536.2 44.3l-11.4-1.2M537.6 45.2l-11.8-0.8M539 46.8l-14.1-0.3M539.8 47.5l-12.2-0.3M539.4 48.7l-12.2 0.1M541.1 52l-12-0.3M546.9 57.5l-13.5-0.6M549.7 61l-11-0.6M551.7 63.8l-14.7-1.7M552.2 64.3l-14-1.8M552.7 65.6l-11.2-1.7M555.5 66.6l-14.5-2.1M555.2 67.4l-13-1.6M557.3 68.5l-14.8-1.8M558.8 70.6l-14-2.4M562.5 74.7l-14.7-3.6M568.3 82.3l-14.1-3.6M571.2 84.9l-13.9-3M572.8 89l-14.5-4M574.5 89.9l-16-3.1M575.5 92.1l-16.1-4.1M574.7 93l-13.8-3M575 93.6l-13.7-2.7M576.6 94.8l-14.6-3M578.4 97.8l-13.7-3.8M579.7 98.6l-15.8-3.5M581 101.4l-17.3-4.4M582.2 104.5l-16.8-3.8M582.3 105.3l-15.8-4.1M583.8 111l-13.6-4.2M586.1 114.9l-13.8-4.9M585 115.3l-14.7-4.9M587.2 120l-14.1-5.2M586.5 122l-13.2-4.4M587 123.4l-14.1-5.3M588.1 125.8l-11.8-4.9M590.3 130l-15.4-6.3M589.4 131.6l-11.6-5.6M589.8 132.6l-13.1-5.6M590.1 134l-12.3-5.5M590.7 135.8l-12.7-6.3M592.2 136.6l-13.8-6.1M591.9 138.1l-15.9-6.9M590.3 140.6l-11.3-6.2M591.2 144.2l-12.5-6.4M592 145.7l-13-6.6M592.6 147.3l-12-6M592.9 153l-14.2-8.6M592.7 153.4l-11.5-5.8M593.3 156.7l-12.5-7.6M594.7 160.7l-14.1-8.9M593.2 161.4l-13.7-9.4M592.9 164.3l-14.2-8.4M593 166.8l-13.2-9.9M591.3 168.6l-9.6-7.4M592.8 174.4l-10.7-8M591.3 180.8l-9.5-8.3M590.9 182l-11.1-8.7M590.8 188.1l-11.4-10.1M589.3 188.1l-8.9-8.4M589.7 193.3l-11.1-10.7M588.3 195l-11.9-10.5M588.8 199l-10.9-10.5M584.3 202.5l-9-10.3M583.4 203.1l-8.5-8.4M584.3 205.9l-10.2-10.6M578.6 213.5l-11.6-13.1M578.2 214.2l-10.2-11.7M577.9 215.2l-13.2-14M574.1 217.2l-9.8-11.5M571.3 220.5l-10.2-12.9M572.5 223.1l-13.7-15.6M570.5 222.6l-12.2-14.5M571.3 225.8l-12.3-14.6M569.1 226l-12.1-15.4M569.5 228.7l-13.3-17.6M566.8 232.6l-10.9-14.6M564.9 234.5l-9.4-13M561.7 235.3l-7.2-12.7M562.3 237l-10.3-15.2M560.6 242.1l-8.7-13.8M558.1 242.1l-8.8-14.3M557.3 245.7l-8-14.4M555.8 245.8l-6.7-12.5M553.5 248.8l-8.7-14.9M549.2 252.3l-6.7-12.5M549.5 255.4l-8.2-15.5M547.7 257.4l-7.8-15.5M545.9 256.2l-7.8-13.9M545.5 258.9l-6.9-14.4M543.3 259.5l-6.6-13.9M541.8 261.2l-7.1-15.3M541.1 262.7l-7-14.8M539.7 262.1l-7.5-16.7M535.3 264.8l-7.3-16.9M534.2 268.9l-7.1-16.6M532.2 267.6l-5.9-14.4M526.6 271.6l-5.7-16.9M526.5 274.7l-5.8-17M522.7 278.3l-7.2-18.3M520.4 277.2l-5.8-17.5M519.9 278l-6.2-16.2M517.9 277.3l-3.9-12.7M514.3 281.7l-5.7-17.4M512 281.4l-4.2-14.7M511.4 282.1l-4.6-16.6M510.3 283.7l-4-15.1M505.9 283.6l-4.1-15.7M505.8 287l-4.2-16M501.2 285.7l-3-13.9M494 293.2l-3.2-16.6M489.2 295.6l-2.8-15.6M487.1 296.6l-2.5-16.7M484.7 297.3l-1.7-15.9M483.2 295.2l-1.6-14.6M480.1 298.9l-2.6-16.5M472.2 300.3l-1.2-15.4M471.2 301.3l-1.9-14.8M470 301.1l-1.2-14.8M467.9 300.8l-1.1-15.3M465.5 303.3l-1-15.3M462.2 304.4l-1.6-16.6M458.9 305.9l-1.2-15.9M458.2 308.2l-1.2-16M456.6 310.7l-2.4-18.8M455.6 310l-2.6-18M453.6 309.3l-1.3-16.8M452.6 310.9l-1.9-17.8M451.3 311l-2.5-16.6M447.7 309.4l-2.8-14.1M446.2 308.3l-2.5-15.1M444.1 306.5l-2.3-14.9M443.2 304.3l-2.6-11.9M442.3 305.5l-3.5-12.9M440.4 303.8l-1.9-10.7M439.6 304.7l-2.6-13.5M438 303.7l-3.8-11.9M436.4 302.9l-2.9-11M434.9 299.7l-2.7-9.2M434.4 299.7l-2.7-7.7M431.8 299.3l-2.5-7.7M429.8 297.6l-3.6-7.7M428.6 296.8l-2.9-7.4" stroke="#b3a97e" stroke-width="1.0" fill="none" stroke-linecap="round"/>
<path d="M529.2 35.6l-1-0.8M531.1 38.5l-3.5-0.1M533.7 43.3l-5.5 0.5M538.9 52.8l-6.3 0.1M544 57.2l-8-0.2M543.3 58l-4.5-0.6M547.2 63.4l-6.5-1.2M551.4 64.3l-8.4-0.8M553.3 66.8l-7.1-0.7M553.1 68.4l-6.4-0.8M558.7 72.1l-9-1.4M557.4 72.9l-6-1.6M564.2 79.9l-9.1-1.3M571.7 91.2l-6.5-1.1M573 93.7l-7.8-2M572.4 94.6l-6.6-1.3M574.3 96.8l-6.3-1.8M579.6 102.8l-11.2-2.2M582.2 114.9l-6.5-2.1M586.3 121.6l-7.6-2.5M587.1 128.2l-7-3.1M588.3 130.5l-7.3-3.2M586.7 131.4l-5.4-2.5M590.2 135.8l-9.9-3.3M590.8 145l-7.9-4.1M591.3 150.5l-9.7-5.6M590.2 151.3l-7.6-5M590.6 155.5l-7.1-5M590.7 165.2l-7.8-5.4M589.4 166.2l-5.2-3.3M590.1 172.1l-5.8-4.1M590.2 174.7l-6.5-5.8M589.2 186.9l-8.2-7.6M588.4 187.6l-6.9-6.3M586.8 191.9l-5.8-5.2M585.8 194.2l-7.3-6.3M583.8 199.5l-6.9-6.5M583.2 200.9l-5.5-6.3M583.3 202.7l-7-7.2M575.9 210.2l-5.4-6.3M575.1 211.2l-5.5-7M572.8 217.5l-6.5-7.6M571.2 218.3l-8.8-10.2M562.7 226.7l-5.5-7.4M564 231.2l-6.6-9.6M558.9 235.7l-4.9-7.1M557.8 237.4l-4.2-7.4M554.6 239.5l-3.7-6.5M553.5 245.2l-3.6-8.1M550.6 247.9l-4.9-8M547.9 252l-4.1-8.6M545.9 253.7l-4.6-8.5M544 254l-3.6-7.6M544 254.9l-5.2-8.8M537.3 260.9l-3.7-8.2M532.3 264.8l-4.2-11.4M529.7 267.6l-4.4-9.9M524.2 271.7l-3.4-8.8M522.3 270.4l-3.4-9.2M521.8 271.6l-2.7-7.6M520.2 272l-3.3-9.6M519.5 274.7l-2.3-8.5M517.9 273.2l-2.5-7.5M512.1 277l-1.7-7.7M511.3 278.4l-1.7-7.5M509.3 280.8l-2.4-8M508.5 281.5l-3.7-11.1M505.5 283l-2.1-8.7M503.6 283.7l-3.2-11.7M502 282l-1.9-8.6M500.2 282.4l-0.8-6.4M500.2 284.3l-2.2-8.8M496.4 286.3l-1.7-7.4M484.1 293.7l-1.5-9.8M482.2 295.7l-2.2-11.8M478.2 295.5l-1-10.9M475.8 295.3l-0.8-6.3M469.2 299.2l-0.4-9.2M468.1 297.5l-1-7.4M462.2 302.2l-1-10.9M459.6 301.4l-0.9-7.7M458.1 301.1l0.2-7M451.2 307.3l-1.5-11.4M450.3 307.5l-1-9.8M449.1 304.2l-1.3-8.1M448.1 304.1l-0.9-6.6M441.8 303l-2.2-7.4M439 301.3l-1.2-5.2M436.6 300.4l-0.6-5.3M431.3 296.1l-1.2-2.7" stroke="#c6bd90" stroke-width="0.9" stroke-opacity="0.8" fill="none" stroke-linecap="round"/>
<path d="M530.5 37.6l-2.8-0.7M533 42.2l-5.9-1.3M533.6 42.4l-6.4 0.2M534.8 46.2l-6.6-0.6M534.4 47.2l-5.9-0.4M535.2 47.5l-6.3 0.1M536.6 49.2l-6.1-0.3M536.8 49.5l-5.8 0.4M543.5 54.9l-8.9 0.3M545.6 58.9l-6.5 0.2M544.6 60.3l-5-0.2M549.8 64.7l-5.3-0.3M552.8 65.7l-9.5-0.9M553.8 67.5l-6.2-0.8M555.7 69.6l-8-1.6M556 70.3l-5.3-0.8M560.7 74.2l-10.4-1.8M558.8 75l-6.2-1.6M563.4 78l-8.5-2M564.7 79.1l-9.7-1.8M565.9 81.6l-7.7-2.3M568.9 86.1l-8.6-2.1M569.3 87.6l-8.1-2M569.6 88.6l-7.9-1.2M575.3 95.6l-9-1.9M574.5 97.7l-7.1-1.8M575.5 98.8l-7.1-2M579 103.5l-10.2-1.8M577.3 105l-7.1-1.8M580.6 107.5l-9.5-2.4M582.1 109.3l-11-2.8M584.2 113.1l-9.1-2.3M582.5 118.6l-7.3-2.7M585.9 123.6l-7-2.3M587.5 127.1l-8.2-3M586.5 128.8l-7.9-3M587.8 133.3l-7.5-3.9M588.1 133.9l-8.7-3M589.6 137.2l-8.2-3.3M589.9 140.1l-7.8-3.7M588.2 139.7l-7.1-3.2M590.4 147.4l-8-4.3M589.9 152.6l-7.4-5.1M591.2 156.9l-8.5-5.3M590.2 157.7l-5.8-3.5M590.6 159l-6.2-4.2M590.4 160.8l-7.6-5.1M591.1 162.7l-7.1-4.8M589.6 162.9l-6.2-4.5M589.5 165l-6.9-4.7M588.9 167.3l-5.3-3.1M589.7 171.5l-7.3-6M590 175.5l-7.2-6.3M588.1 175.5l-3.4-3.7M590.9 178.8l-7.1-5.8M588.5 182.3l-5.9-4.3M587.1 188.2l-5.5-5.6M586.7 189.4l-6.4-6.3M587.1 194.5l-8.2-7.7M585 199l-7.2-7.4M582.4 203.5l-6.7-7.4M580 207.2l-5.8-6.1M577.7 206.5l-5.4-6.2M577.7 208.7l-5.3-6.5M577 209.6l-6.5-7.4M574.1 211.4l-6.4-7.1M573.7 213.5l-5.5-6.8M571.5 213.2l-3.3-4.6M566.8 219.6l-4.6-5.4M564.8 222.3l-5.3-6M565 224.8l-5.2-6.7M564.9 226.7l-7-9.6M565 228.5l-8.1-10.5M562.2 233.1l-6.6-9.6M561.9 234.9l-5.9-9.8M558.9 233.1l-4.4-7.8M559.2 234.5l-4.6-7.7M556.3 237.2l-4.8-7.5M556.7 239.9l-4.3-7.5M553.6 241.6l-4.3-8.2M552 246.9l-5-10.5M550.2 250.3l-6.1-9.8M545.9 250.6l-3.7-6.2M542.3 255.3l-3.1-7M540.9 258.4l-4.6-11.1M540.3 259l-4.7-9.5M536.2 260l-4.1-7.8M534.4 260.6l-3.7-8.9M530.9 264.7l-3.3-8.1M526.4 269.2l-3.5-8.9M514.7 278.5l-3.6-10.4M503.9 281.9l-1.4-7.6M498.1 287l-1.9-8.2M493.7 286.3l-1.5-6.9M492.5 287.3l-1-7.2M490.1 289l-1.9-9.8M489.9 291.4l-2.6-10.4M485.6 291l-1.5-8.9M480.8 294.8l-1.6-9.1M479.6 293.8l-1.8-8.3M476.8 295.5l-1-8.7M474.6 298.1l-1.1-11.3M470.8 296.7l-0.7-7M465 299.3l0.2-10.2M460.9 302l-1.1-11M457.4 303.9l-0.3-8.4M456.2 303l-0.7-8.4M456.4 308l-1.9-11.4M455 308.7l-1.3-9.4M452.4 305.5l-1.2-6.3M446.9 305.8l-1.5-9.6M444.8 303.3l-1.9-7.7M438 299.7l-1.4-5.6M434.1 299l-2.2-7.2M430 296.4l-1.6-4.4M429.8 296.5l-2.8-4.7M427.6 294.2l-0.9-2.4M426.5 295.2l-1.1-3.5" stroke="#ccc396" stroke-width="0.9" stroke-opacity="0.8" fill="none" stroke-linecap="round"/><path d="M529.7 35.8l-0.8-0.3M532.2 37.7l-2.1-0.4M531 39l-1.9-0.3M533.7 40.1l-2.2-0.2M532.6 48.8l-5-0.2M541.6 52.1l-6-0.2M534.9 53.8l-6.6-0.3M541.4 56.1l-4.3-0.3M548.4 61.3l-4.3-0.3M548.9 62.3l-6-0.5M547.8 63.1l-3.8-0.4M548 68.5l-6-0.9M554.6 76.3l-7.4-1.5M557 79.5l-3.3-0.7M564.8 82l-4-0.8M568.8 85.7l-7.2-1.5M573.8 94.6l-7-1.6M580.9 101.1l-7.4-1.7M582.1 102.4l-7.4-1.7M580.4 105.2l-6-1.5M574 104.7l-5.6-1.5M581 112l-4.9-1.4M590.9 117.3l-4.8-1.5M578.9 114.6l-8.1-2.5M587.2 120.7l-6.2-2.1M580.1 121.6l-5.1-1.9M591.2 136.8l-6.6-3M588.5 138l-4.7-2.2M589.5 140.9l-7.9-3.9M589.3 145.7l-4.1-2.2M583.3 144.8l-5.8-3.2M587.4 152.1l-4.4-2.7M589 154.3l-4-2.4M588.5 160.7l-6.3-4.2M592.7 169.1l-4.8-3.5M589.3 169.3l-4-3M586.7 175.5l-4.4-3.7M588.3 182.7l-6-5.2M580.7 203.9l-3.3-3.6M574.4 206.4l-3.5-3.9M570.2 215l-5.6-6.5M572.3 223.6l-4.4-5.3M557.7 222.4l-4.8-6.7M553.5 227.9l-3.6-5.8M549.4 239.1l-3.2-5.8M540 250.6l-2.1-4.2M536.6 249.4l-2.3-4.8M537.2 253.4l-2.1-4.2M532.1 260.6l-2.4-5.5M528.1 278l-3.5-8.9M519.9 271l-3-8.4M517.1 278.8l-2.3-6.9M514.5 279.2l-2.8-9M510.3 279l-1.5-5.3M507 276.7l-1.2-4.2M504.3 276.4l-2.3-8.4M502.9 286.7l-1-3.9M500.2 292.2l-1.7-7.2M493.7 293.2l-1.4-6.8M493.1 296.9l-1-5.3M484.2 291.2l-1.3-8.2M478.2 295.5l-0.5-3.7M473.8 291.7l-0.5-5.4M473.2 298.4l-0.4-4.1M464.3 301.2l-0.3-4.5M459.4 303.3l-0.3-5.2M456.6 310.1l-0.9-6.8M455 306.9l-0.6-4.2M451.2 312.7l-1.3-9M448.1 298.9l-0.5-3.8M443.8 299l-1.2-6.4M442.3 302.3l-0.9-4.7M442.2 306.1l-1-4.4M440 300.4l-0.7-2.8" stroke="#ddd5a8" stroke-width="0.8" stroke-opacity="0.7" fill="none" stroke-linecap="round"/>
<path d="M530.9 36.8l-1.7-0.5M527.7 37.7l-1.7-0.3M531.4 41.6l-2.3-0.2M536.1 43.9l-3.7-0.3M542 48.1l-6.6-0.2M543.6 53.2l-3.6-0.2M546 58.3l-3.9-0.2M556.9 68.3l-7.1-1M551.3 72.2l-4.2-0.8M552.9 73.3l-7-1.3M577.5 93.5l-7.5-1.7M565.9 93.7l-7.7-1.7M578.9 97.7l-3.5-0.8M572.1 107.3l-7.2-2M580.5 126.3l-7.6-3.1M587.5 132.7l-3.6-1.5M586.7 133.6l-4-1.8M590 139.9l-7.4-3.5M588.4 144l-5.4-2.8M590.7 147.7l-5.1-2.8M584.7 159.5l-6.4-4.4M582.2 174.5l-5.1-4.3M594.4 186.5l-2.8-2.5M579.5 191.9l-3.6-3.6M586.4 200.8l-2.7-2.8M571.7 201.5l-2.6-2.8M580.3 214.9l-3.7-4.1M574.3 223.9l-3.8-4.6M568 234.7l-4.1-5.5M556.3 234.6l-2.8-4.5M554.4 250.8l-4.3-7.8M550.1 250.7l-3.9-7.2M551.4 258.7l-2-3.8M529.2 263.4l-2.3-5.6M527.6 273.1l-2.4-5.9M522.6 271l-1.5-4.2M517.6 268.4l-1.4-4.2M515.3 265.3l-2.6-7.4M511.6 274.1l-1.9-6.1M502.1 273.2l-1.9-7.4M500.9 289.3l-1.8-7.4M494.8 292.3l-1.3-6.6M487 292.6l-1-6.1M470 291.3l-0.8-8.6M462.5 292.6l-0.3-7M460.7 307.8l-0.3-8.6M447.2 306.9l-1.2-7.1M442.4 297.4l-0.7-3.9M436.5 298.5l-1.5-5.3M436.7 302.2l-1.7-5.4M433.7 301.1l-1.2-3.4M426.2 293.4l-1.5-2.8M425 292.7l-1.3-2.2" stroke="#d3ca9e" stroke-width="0.8" stroke-opacity="0.7" fill="none" stroke-linecap="round"/><path d="M527.4 35.9l-1.4-0.4M534 38.6l-2-0.3M547.7 56.4l-3.2-0.2M558.7 64l-3.1-0.2M542.7 67l-2.6-0.4M546.2 68.9l-3.6-0.6M574.6 87l-3.3-0.7M572.3 88.4l-4.7-1M576 94.1l-3.3-0.7M584.7 103.1l-5.3-1.3M569.5 108.6l-3.1-0.9M577.1 124.9l-4.5-1.8M591.2 136.8l-5.3-2.4M579.3 154.6l-3.1-2.1M577.5 162.8l-4.4-3.5M598.2 180.4l-3-2.4M592.2 177.1l-4.2-3.4M579.3 172l-2.4-2.1M580.6 176l-3.7-3.3M589.2 194.7l-3.1-2.9M576.3 187l-2.1-2M584.6 204.3l-2.4-2.5M570.9 195.2l-4.1-4.5M580.9 219.6l-4-4.6M560 203.1l-2.5-2.9M561.1 208.3l-2.3-2.8M573.3 235.2l-4-4.9M563 245.7l-2.5-4.1M542 238.1l-1.6-3M546.2 257.2l-1.8-3.5M537.9 267.5l-1.9-4.3M532 270.3l-1.8-4.3M525.4 257.4l-2-4.9M514.4 266.6l-1.7-5.1M499.7 273.7l-1.6-6.1M501.8 293.2l-1.5-6.5M490.3 276.5l-0.9-4.9M491.1 293.6l-1.2-6.5M483.4 304.1l-0.6-3.9M468.5 305.1l-0.3-3.8M464.8 288.6l-0.3-3.5M460.1 292.1l-0.3-5.8M447.4 314.4l-0.6-3.9M428.7 290.3l-0.8-2.2" stroke="#696145" stroke-width="0.8" stroke-opacity="0.55" fill="none" stroke-linecap="round"/>
<path d="M528.1 36.9l-1.5-0.3M535.6 39.5l-2.3-0.2M525.3 39.2l-2.3-0.3M543.2 48.1l-2.2 0M541.2 50.1l-5-0.2M530.9 56.4l-3.1-0.1M550.5 70.4l-4.9-0.8M567.2 76l-4.8-0.9M573.1 81.8l-5.4-1.1M556.1 85.8l-3.7-0.8M562.9 88.2l-4.6-1M562.5 90.1l-2.9-0.7M565.1 95.5l-4.9-1.1M589 105.1l-3.7-0.9M582.3 105.7l-4.4-1.1M575.9 115.8l-3.9-1.3M593.4 124.1l-3.7-1.3M594.9 128.3l-5.1-1.9M579.1 132.4l-3.1-1.4M595.5 141.3l-5.7-2.7M577.4 138.2l-4-2.1M576.3 138.7l-5.3-2.8M593.3 152.9l-4-2.3M595.8 158.3l-4.8-2.9M597.6 162.2l-3.7-2.3M579.1 156.8l-2.8-1.9M579.9 158.6l-2.8-2M597.9 183.3l-4-3.4M578.6 177.1l-2.6-2.4M594.9 195l-4.4-4M575.8 180.3l-4-3.7M577.8 190.2l-3.3-3.4M588.3 204.5l-2.3-2.4M580.4 217l-2.5-2.8M580.8 225.4l-4.4-5.1M569.2 240.9l-3.4-5M548.9 228.9l-1.7-3M543.1 242.8l-1.7-3.2M531.7 241.9l-2.2-4.7M526.9 248.6l-1.5-3.5M526.9 251.7l-2.5-5.9M534.1 271.8l-2-4.8M510.2 261.6l-2-6.1M515.1 285.8l-0.9-3M513.4 289.4l-1.6-5.5M498.2 273l-1.5-6.1M477.4 279.3l-0.7-5.1M478.6 298.9l-0.4-3.5M474 305.8l-0.3-3M469.9 305.9l-0.4-4.6M467.2 305.9l-0.4-5.7M462.2 312l-0.3-6.4M457.1 293.9l-0.4-5.4M452.5 314.5l-0.6-4.2M451.2 312.8l-0.8-5.6M436 292.7l-0.6-2.1M422.5 288.4l-0.9-1.4" stroke="#5e573e" stroke-width="0.8" stroke-opacity="0.55" fill="none" stroke-linecap="round"/></g>
<path d="M531.4 35.6l-1 0.2M535.3 37.4l-3.5 0.4M540.3 40.4l-4.2 0.3M539.5 41.5l-1.9 0.2M543.8 43l-3.8 0.3M543.4 44l-2.6 0.4M548.7 50.4l-2.6 0.4M550.7 51.3l-3.1 0.1M554.2 54.1l-3.5 0.5M555.5 58.8l-0.4-0.1M558.5 59.7l-4.8 0.2M560.2 62.2l-2.9 0M568.2 71.8l-4.2-0.8M569.3 72.8l-3.1-0.3M575.6 80.4l-3.6-0.5M577.5 81.2l-3.2 0M577.9 82.5l-4-0.1M577.9 83.7l-3.6-0.4M581.8 88.3l-3.6-0.4M582.5 89.2l-5-0.4M584.2 93.8l-1.5 0M587.5 97.7l-2.2-0.3M588.8 99.8l-4.1-0.5M591.6 102.5l-6-1.1M594.6 108.7l-3.4-0.7M593.3 109.4l-1.2 0.2M595.2 112.5l-3.2-0.4M598.3 123l-3-0.4M599.4 124.6l-5.1-1.3M599.8 131.3l-0.9-0.4M602.2 134.7l-4.8-1.1M601.4 143.9l-1.3-0.3M602.1 147.2l-2.7-1.1M602.2 149.8l-2.3-0.7M602.8 151.2l-2.5-0.8M603.6 152.8l-4.5-1.8M603.3 155.8l-4.3-2M602.5 156.6l-1.6-0.4M603.9 158.7l-5.2-2.2M603.7 163l-2.1-1M603.3 164.2l-2.1-1.2M602.7 165l-3.3-1.3M602.2 166.7l-1.5-1.3M602 169.6l-3.6-2.3M601.3 170.5l-3.7-1.9M602.4 174.1l-3.4-1.7M601.6 181.6l-4.9-3M601.3 186.9l-2.8-1.6M598.5 198l-2.6-1.7M597.1 200l-2.8-2.1M596.2 201.4l-1.4-1.4M590.1 214l-1.2-1.2M590.4 215.8l-4-3.5M585.8 224.8l-3.6-3.5M583.8 228.4l-3.7-3.1M579.4 236l-5.1-5M576.8 238.9l-2.9-2.4M575.1 239.8l-1.8-1.6M573.8 242.3l-3.5-4.4M571.7 242.7l-0.6-1.1M570.6 245l-3.6-4.2M570 246.6l-3.1-3.9M566.5 249.1l-3.1-3.7M566.9 251.3l-4-4.6M564.4 250.7l-0.3-0.7M564.7 253.4l-1.5-2.2M564.4 254.8l-3.5-4.4M559.6 258l-1.7-2.8M557 262.9l-1.5-1.4M556 264.9l-2.4-3.8M553.5 265.7l-1.1-1.4M548 269.9l-0.9-1.3M545.5 274.2l-3.4-5.4M536.1 279.6l-0.8-1.1M535.2 281l-1.3-2.8M533.8 282l-0.7-1.4M533.1 283.5l-1.1-2.4M525.9 288.2l-1.1-2.7M521 289.8l-1.9-2.9M518.6 292.5l-1.8-4.6M517.7 293.8l-1.2-2.9M515 294.9l-2.2-5.5M510.8 295.5l-0.9-2.1M500.4 300.1l-0.5-2.5M499.7 301.2l-0.6-1.5M497.4 304l-1.4-4M491.9 304.3l-0.7-2.3M474.3 310.6l-0.1-2.6M471.7 311.5l-0.9-3.7M470.7 312.2l-0.7-3.4M468 312.7l-0.6-2.1M466.7 314.1l-0.6-3.1M462.6 314.7l-0.8-4.7M459.4 318.2l-1-4.9M458.8 320.9l-0.7-2.6M458.4 323.6l-0.3-3M455.7 322.3l-0.1-0.8M455 323.2l-1.1-4.4M452 320.1l0.2-0.9M448.3 318.1l-0.8-3.4M447.5 317.6l-1.9-4.9M446 315.6l-1.6-4.3M442.9 312.1l-0.6-1.2M436.4 306.6l-0.8-1.3M436.4 307.2l-2.1-4.1M430.6 301.7l-2.2-2.8" stroke="#6e6649" stroke-width="1.1" stroke-opacity="0.85" fill="none" stroke-linecap="round"/>
<path d="M534.6 36.3l-2.6 0.6M537.6 38.8l-3.5 0.2M539.1 39.3l-4 0.9M546.7 46.8l-4 0.9M548.4 47.7l-3.5 1M551.1 52l-3.2 0.4M552.9 53.4l-4.8 0.3M553.5 55.8l-3.3 0M554.4 56.7l-2.7 0.4M559.4 61l-3.6 0M562.8 65.1l-3.4 0.2M562.9 66.3l-1.7-0.3M566.1 69.3l-4-0.1M570 73.8l-2.6-0.4M571.3 75.7l-1.6 0.1M573.5 77.9l-4.1-0.2M573.3 78.9l-2.7 0.2M578.9 84.8l-2.2 0M579.9 86.2l-2.1-0.5M580.1 86.8l-3.1-0.2M583.8 90.5l-3.2 0M584.8 92.9l-4.1-0.2M585.9 96.4l-1.7-0.5M588.9 98.9l-3.5-0.2M589.7 100.8l-3.8-0.4M592.6 106.1l-3.5-0.5M594.4 107.6l-4.4-0.6M595.9 111.1l-5.2-0.7M596.5 115.1l-4.4-0.7M596.3 116.2l-4.2-0.8M598.7 122.1l-4.4-1.1M598.8 127.1l-2.9-0.9M600.1 128.8l-4.5-1.4M601.7 133.5l-5.6-1.6M600 138.1l-1-0.4M602.9 141.9l-4.1-1.4M601 142.8l-1.1-0.4M601.5 145.2l-3.6-1.1M604.5 161.4l-3.3-1.2M602.7 168.4l-4.8-2.2M602.2 175.9l-4.7-2.7M600.4 179l-2.6-1.3M600.3 183.2l-2.6-1.3M600.1 187.7l-1.9-0.9M599.5 192.2l-3.7-2.5M599 193.7l-2.8-2.3M597.5 195.7l-2.3-1.7M596.4 198.5l-3.2-2.7M595.7 204.4l-2.6-2.2M594.3 205.3l-3.3-2.7M594 208.3l-4.4-3.4M591.4 209.9l-1.9-1.6M590.9 212.7l-2.9-2.1M588.6 218.3l-3.9-3.8M587.8 219.6l-1.6-1.9M587.2 222l-4-2.7M584.4 225.1l-2.2-1.7M584.7 227l-5.2-3.9M580 232.6l-3.1-2.8M580.5 234.8l-5.2-4.9M573.6 240.1l-1.1-1.7M571.4 244.2l-1.5-2M567.2 247.6l-1.4-1.7M562.8 257.3l-2.3-2.6M561.6 258.1l-2.6-3.4M558.9 261.2l-1.7-2.6M552.6 266.9l-2.3-3.9M551.8 268.1l-2.3-4M550.1 270.3l-1.8-2.6M540.4 276.4l-2.3-4M532.3 284.7l-2.1-4M531.3 285.8l-2.6-4.3M529.4 285.7l-0.8-2.3M527.1 286.7l-2-4.1M524.5 287.8l-1.7-3.7M524.2 290.4l-2.5-5M522.6 290.3l-1.7-4M519.6 291.5l-1.4-4.6M516.5 294.2l-1.6-3.6M510 297.1l-1.7-4.3M507.9 299l-1.5-3.2M505.9 298.4l-0.9-2.2M503.3 299.8l-0.5-1.9M496.1 303.8l-1.4-4.1M494.1 302.8l0-1.3M494 305.9l-1.4-3.9M491.1 306.2l-1.7-5.3M489.8 307l-1.9-5.7M488.2 307.1l-1.6-4.6M485.1 307.3l-0.3-1.4M484.2 308.9l-1-4.5M481.2 309.5l-0.8-4.6M480.3 310.4l-0.7-3.7M478.5 309.7l-0.6-2.5M476.3 312.2l-0.9-4.6M473.3 311.2l-1-3.2M459.1 319.4l-1-5.5M459.2 321.2l-1.4-5.9M457.3 324.4l-0.6-3.4M449.5 319.4l-1.5-5.3M442 311.1l-1.5-2.5M440.4 310.2l-1.6-2.4M437.6 307.5l-1.2-2M429.2 300.2l-1.4-1.4" stroke="#625b41" stroke-width="1.1" stroke-opacity="0.85" fill="none" stroke-linecap="round"/>
<path d="M519.2 42.6l-1 0.2M521.6 46l-4.4 0.4M521.4 46.9l-3.8 0.3M522.6 50.4l-2.1 0M523.8 51.9l-2.7 0.5M525.8 55l-1.4 0.3M528.4 56.8l-2.6 0.4M531.4 59.6l-3.1 0.3M532.5 60.4l-5.3 0.7M532.5 61.3l-2.6 0.3M534.9 62.9l-4.5 0.5M534.2 63.8l-2.5 0.1M534.7 64.4l-1.5 0.4M537.2 66.3l-1.1-0.5M542.7 70.1l-3.7-0.1M544.3 72.5l-4.7-0.5M545.7 73l-3.5 0M544.8 74l-2.4-0.2M546.3 77.3l-3-0.1M547 78.3l-1.5-0.4M548.2 79.4l-3.6-0.5M552.8 85.4l-3.3 0.1M556.8 91.3l-6.2-1M558.6 95.2l-3.9-0.1M559.8 97.5l-4.2 0M560.4 99.9l-5-0.5M561.9 105.2l-2.7-0.7M564.5 106.4l-5.8-0.9M563.6 110.7l-1.9-0.3M566 111.8l-5.2-0.6M566.9 113.5l-4.3-1.2M566.7 117.7l-2.2-0.9M568.4 118.7l-3.3-0.4M569.5 122.2l-2.9-0.5M569 123.5l-3.9-1.3M569.6 127.8l-1.3-0.4M570.7 129.5l-2.4-1.1M572.9 131.9l-3.6-1.1M571.2 132.9l-2-1M571.6 133.8l-2.2-0.7M572.5 135.5l-3.1-1.3M574.1 136.8l-4-1.4M572.5 137.5l-3.6-1.4M572.8 138.7l-2.2-0.8M573.6 148.4l-2.4-1.1M574.9 150l-4.1-2.1M575.4 151.4l-5.3-2.5M575.8 152.4l-4.7-1.7M573.6 154.4l-2.4-1.5M574.9 159.5l-1.8-0.8M574.6 161.6l-2.9-1.5M574.5 162.7l-3.1-1.9M576.1 165.9l-3.9-2.3M574.9 166.5l-2.4-1.2M575.9 171.1l-4.4-2.8M575.2 173.3l-2.7-1.4M575.2 176.3l-3.5-2.5M572.6 177.3l-1.8-1.3M572.7 183l-3.7-3.3M572.5 183.9l-2.6-1.8M571.9 185.2l-3.7-2.8M569.5 189.2l-3.3-2.4M567.4 189.5l-1.6-1.4M566.7 190.4l-2.8-2.5M564.3 193l-3-2.5M561.1 194.5l-2.4-1.8M558.3 198.6l-2.9-2.3M556.8 198.9l-3.7-3.2M556.7 200.8l-3-2.8M554.7 203.5l-3.4-3.3M553.9 204.7l-4.5-4.7M549.2 207.7l-2.1-2.2M548.9 209.8l-2.4-2.5M549.6 217.1l-3.6-4.7M547.1 216.9l-1.6-1.4M546.3 221.5l-1.9-2M543.2 225.1l-2.4-3M542.6 226l-2.1-2.7M538.3 232l-2.3-3.2M534.2 235.1l-2.5-3.4M528.4 239.7l-1.8-2.9M526.5 241.1l-2.1-3.3M522.9 244.4l-1.9-2.9M522.7 246.3l-2.2-3.8M522.1 247.4l-3.2-4.6M517.7 249.9l-2.1-4.2M516.6 250.5l-1.7-3.9M515.3 250.2l-1.7-2.7M512.7 252.6l-2.2-3.1M512.6 255.4l-3-5.3M510 256.1l-1.6-4.2M507.3 256l-1.1-2.8M504.7 258.3l-1.7-3.7M500.5 263.7l-3-5.8M498.7 263.3l-1.7-4.2M497.1 262.4l-0.6-1.8M494.7 263.1l-0.9-2.4M494.1 264.4l-0.5-1.7M491.9 265.3l-1.2-2.5M485.5 269l-1-2.7M480.7 273.9l-1.3-5.3M479.6 273.5l-1.4-3.6M474.7 275.3l-0.9-2.9M466.6 277.2l-0.7-2.8M465.2 277.4l-0.4-1.6M461.9 278.6l-0.5-2M461 278.7l-1-2.6M457.6 281.6l-0.2-2.8M456.3 280.7l-0.7-1.9M454.7 284.3l-1.3-4.4M451.9 284.7l-0.7-4.4M447.8 285.1l-1-3.6M444.1 286.6l-0.6-3.4M440.7 287.5l-1-3.8M440 288l-2.1-5.6M438.9 288.4l-1.5-4.8M434 287.8l-1.6-3.5M432.4 286.6l-1.6-3.5M430.7 286.4l-0.9-2.6M426 286.5l-0.7-1.5M424 286.9l-1.9-3.6M419 286.2l-2.1-2.4M416.3 286l-1.8-2.4" stroke="#6e6649" stroke-width="1.1" stroke-opacity="0.85" fill="none" stroke-linecap="round"/>
<path d="M522.8 37.8l-1.8 0.3M519.7 43.9l-1.1 0.1M520.1 45l-1.7 0.4M525.6 53.3l-2.3 0.3M526.9 53.8l-2.8 0.3M527.8 56l-2.5 0.3M529.6 57.5l-4.5 0.8M529.7 59l-2.3-0.2M534.2 62.5l-4-0.2M538.3 65.6l-2.8-0.4M540 66.9l-4.5-0.1M540.8 67.7l-4.3-0.4M541.3 68.5l-4.5-0.1M543.4 71.2l-3.9-0.4M546.1 76.4l-2.5-0.7M548.6 81.3l-1.8-0.2M549.3 82.1l-1.8 0.2M552.6 83.9l-5.8-0.5M550.3 84.5l-2.9-0.5M553.5 89l-2.6-0.7M555 89.8l-2.7 0M555.4 91.8l-2.3 0.1M557.1 94.6l-2.2-0.3M559.4 98.6l-4.8-0.5M561 101l-3.4-0.6M560.3 101.7l-1.6 0M563.7 104.2l-5.9-0.6M563.6 108.5l-3.1-0.4M565.4 109.8l-3.7-0.5M568 116.5l-4.9-0.9M567.1 119.8l-2.1-0.3M569.6 121.3l-5-1.4M571.3 125l-5.8-1.6M570.7 126l-3.6-0.8M569.3 126.9l-1.6-0.6M571 130.7l-3-1.2M573.7 142.7l-2.5-1.6M574.2 145l-4-1.7M573 145.4l-1.2-0.2M575.1 147.6l-3-1.1M573.9 153.3l-1.9-1.1M575.4 157.2l-2.5-1.6M576.3 158.6l-4.4-2.1M575.6 160.9l-2.7-1.4M575.1 164.5l-2.9-1.7M575.3 168.3l-2.7-1.7M574.3 169.1l-3.2-2.4M575.5 172.1l-3.8-2.1M575 174.5l-4.6-3M573.1 178.9l-2.9-2.1M572.3 179.5l-1.8-1M570.1 185.2l-1.3-1.1M569.3 186.2l-2.5-1.9M568.7 187.3l-2-1.4M564.3 194l-4.2-3M558.9 197.4l-3.8-3.1M556.3 201.6l-3.1-3.1M550.9 204.7l-3-3.2M549.5 205.2l-2-1.8M549.6 206.6l-1.7-1.9M551.1 211l-3-3.6M549.5 211.9l-1.5-1.7M548.7 214.2l-3-3.2M549.6 218.5l-2.9-3.3M547.8 221l-2.8-3.4M546.6 223.4l-2.7-3M545.6 224.3l-3.3-4.3M541.7 227.5l-1.5-2.7M539.3 227.9l-1.3-1.4M539.5 230.4l-2.3-3.6M536.6 234.1l-3.4-4.5M534.9 234.1l-1.8-2.6M532.8 234.6l-1.8-1.8M532 237.7l-2.2-2.8M530.3 238.3l-2.1-3.8M528.2 241.9l-2.9-5.2M525.2 241.4l-1.3-2.8M524.6 242.5l-1.9-2.8M520.7 247.4l-2.5-4M520 249.1l-2.2-3.6M518.8 248.8l-2-2.6M514.7 252.1l-1.6-3.6M514.7 254.1l-2.7-5.5M511.2 255.1l-2.1-3.1M508.3 254.8l-1.2-1.7M506.8 258l-1.4-3.4M506.3 259.9l-2.5-5.8M502.4 260l-0.9-2.1M502.4 262.5l-2-4.8M488.5 266.9l-0.5-1.3M488.6 269.8l-1.7-4.6M483.5 271.1l-0.9-2.6M483.2 273.8l-1.5-4.7M481.4 272.1l-0.9-3M478.4 274.3l-1.5-4.5M477 274.1l-0.8-2.4M472.7 275.6l-1.4-4.2M471.4 276.7l-0.6-3M469.9 275.9l-0.9-3.5M469.1 276.5l-0.8-2.1M463.6 281.3l-0.9-5.7M449.5 284.4l-0.4-2.1M448.7 284.3l-0.7-2.4M436.9 286.7l-1.5-4M435.2 285.9l-0.6-2.3M430.1 287.2l-1.7-3.3M426.8 286l-0.5-1.9M424.7 285.5l-0.5-0.7M422.7 286.9l-2-3.1M421.6 286.2l-2.3-3M417.9 286l-2.5-2.2" stroke="#625b41" stroke-width="1.1" stroke-opacity="0.85" fill="none" stroke-linecap="round"/>
<path d="M309.0,378.0C311.1,376.7 317.2,376.8 321.0,377.0C324.8,377.2 330.2,377.5 332.0,379.0C333.8,380.5 332.5,383.8 332.0,386.0C331.5,388.2 330.5,390.2 329.0,392.0C327.5,393.8 325.3,395.9 323.0,396.5C320.7,397.1 317.2,396.4 315.0,395.5C312.8,394.6 311.1,392.8 310.0,391.0C308.9,389.2 308.7,387.2 308.5,385.0C308.3,382.8 306.9,379.3 309.0,378.0Z" fill="#2b2b29"/>
<path d="M402.0,378.0C403.9,376.6 409.3,376.5 413.0,376.5C416.7,376.5 422.2,376.6 424.0,378.0C425.8,379.4 424.5,382.7 424.0,385.0C423.5,387.3 422.7,390.0 421.0,392.0C419.3,394.0 416.3,396.4 414.0,397.0C411.7,397.6 408.8,396.5 407.0,395.5C405.2,394.5 403.9,392.8 403.0,391.0C402.1,389.2 401.7,387.2 401.5,385.0C401.3,382.8 400.1,379.4 402.0,378.0Z" fill="#2b2b29"/>
<path d="M299.4,372.0C300.3,370.2 303.9,367.5 306.8,366.0C309.7,364.5 313.5,363.3 316.9,363.0C320.3,362.7 323.6,363.2 327.0,364.2C330.4,365.2 334.4,366.9 337.0,369.0C339.6,371.1 341.3,374.1 342.6,376.5C343.9,378.9 344.9,381.0 344.6,383.2C344.4,385.4 342.3,388.7 341.1,389.5C339.9,390.3 338.7,389.2 337.5,388.0C336.3,386.8 336.0,384.2 333.7,382.5C331.4,380.8 327.5,379.0 323.6,378.0C319.7,377.0 313.9,376.8 310.2,376.5C306.5,376.2 303.2,377.2 301.4,376.5C299.6,375.8 298.5,373.8 299.4,372.0Z" fill="#2b2b29"/>
<path d="M389.0,385.5C388.0,384.0 389.0,380.0 390.3,377.2C391.6,374.4 394.0,371.0 396.8,368.8C399.6,366.6 403.0,364.8 406.9,364.2C410.8,363.6 416.4,364.5 420.3,365.5C424.2,366.5 428.0,368.4 430.4,370.0C432.8,371.6 434.0,373.8 434.6,375.0C435.2,376.2 435.8,376.8 434.0,377.0C432.2,377.2 427.6,376.6 423.7,376.5C419.8,376.4 414.2,375.8 410.3,376.5C406.4,377.2 402.5,379.4 400.2,381.0C397.9,382.6 398.2,385.2 396.3,386.0C394.4,386.8 390.0,387.0 389.0,385.5Z" fill="#2b2b29"/>
<clipPath id="eye0"><path d="M299.4,372.0C300.3,370.2 303.9,367.5 306.8,366.0C309.7,364.5 313.5,363.3 316.9,363.0C320.3,362.7 323.6,363.2 327.0,364.2C330.4,365.2 334.4,366.9 337.0,369.0C339.6,371.1 341.3,374.1 342.6,376.5C343.9,378.9 344.9,381.0 344.6,383.2C344.4,385.4 342.3,388.7 341.1,389.5C339.9,390.3 338.7,389.2 337.5,388.0C336.3,386.8 336.0,384.2 333.7,382.5C331.4,380.8 327.5,379.0 323.6,378.0C319.7,377.0 313.9,376.8 310.2,376.5C306.5,376.2 303.2,377.2 301.4,376.5C299.6,375.8 298.5,373.8 299.4,372.0Z"/></clipPath>
<g clip-path="url(#eye0)"><path d="M343.8 363.4l2.1 5.7M340.9 359.7l2.3 6.4M343.4 366.6l2.5 6.8M343.5 371.4l2.5 6.9M337.1 358.2l2.1 5.6M342.1 371.8l2 5.7M344.5 378.3l1.7 4.9M339.5 369l1.7 4.7M344.6 383.2l2.6 7M335.3 361.8l1.7 4.8M337.6 368.3l1.9 5.2M340.1 375.2l1.5 4.1M332.8 359.5l1.8 4.9M343.9 389.8l1.4 4.1M338.7 379.9l2.6 7.3M341.9 388.9l2.3 6.1M329.7 359.8l2 5.4M337.7 381.7l2.3 6.4M340.5 389.4l2.2 5.9M327.2 357.1l1.9 5.4M329.5 363.6l2.1 5.8M332 370.4l2.7 7.5M335 378.7l1.7 4.6M325.8 357.6l1.7 4.7M327.9 363.6l2.1 5.7M332.6 376.5l2.2 5.8M332.4 380.4l1.7 4.6M334.7 386.7l1.9 5.2M323.7 360.7l2.6 7.2M326.6 368.6l1.6 4.4M328.7 374.5l1.9 5.3M333.1 386.7l2.7 7.2M329.6 381.4l2.2 6.1M324.5 371.6l1.5 4.3M321.2 371.5l1.4 3.9M317.3 365l1.6 4.6M319.4 370.8l1.7 4.7M321.7 377.2l2.5 7M324.7 385.5l2 5.4M320.8 379.1l2.6 7.2M323.9 387.5l2.4 6.7M321.6 385.6l2.6 7.1M310.5 359.4l2.4 6.8M313.6 368l2.2 6M318.4 381.2l2.5 6.9M321.4 389.6l1.7 4.5M309.3 360.7l1.9 5.2M311.4 366.5l2.4 6.4M319.1 387.6l2.4 6.6M307.3 359.4l2.1 6M309.9 366.7l2.3 6.4M306.2 361l2.6 7.2M309.4 369.7l1.4 3.8M311.5 375.4l1.5 4.1M315.3 390.2l1.4 4M303.8 363l2.1 5.9M308.8 376.7l2.3 6.6M311.6 384.5l2.5 6.9M302.1 362.9l2.3 6.1M307 376.3l2.6 7M299.5 360.1l1.4 3.9M306 378l2.1 5.8M301.8 370.7l1.6 4.5M303.8 376.3l1.9 5.2M308.7 389.8l2.6 7.2M297.6 363.6l2.5 6.9M300.6 371.8l1.8 5.1M303.1 378.6l2.6 7.1M306.1 386.9l2.4 6.8M297.3 367.2l2 5.4M303.6 384.3l1.9 5.3M296.9 370.4l1.5 4.2M298.6 375.2l1.5 4.1M299.2 381.2l2.2 6M301.8 388.4l1.5 4.1M299.8 387.1l2.5 7M297.3 384.7l1.8 4.9" stroke="#555551" stroke-width="0.8" stroke-opacity="0.85" fill="none" stroke-linecap="round"/>
<path d="M343.5 358l1.4 4.1M345.2 362.8l2.1 5.6M338.3 356.9l2 5.7M340.8 363.7l2.2 6.2M339.8 365.4l2 5.6M337.5 363.5l1.5 4.3M341.6 374.9l2.7 7.3M341.8 379.9l2.2 5.9M344.6 387.4l2.5 6.9M335.1 365.7l2.7 7.4M338 373.7l2.5 7M341 381.9l2.6 7.3M330.6 357.9l2.3 6.1M333.4 365.4l1.9 5.3M335.5 371.3l2.8 7.6M332 365.9l1.5 4.2M333.7 370.7l1.4 3.8M335.3 375l1.9 5.3M337.3 384.9l2 5.6M330.2 369.9l2.1 5.7M335.2 383.5l2.1 5.8M337.5 389.8l1.4 3.9M325.6 361.7l1.8 4.8M327.8 367.7l1.5 4.1M329.8 373.1l2.3 6.3M331.1 381.2l1.6 4.3M322.2 360.9l2.5 7M325.4 369.7l1.4 3.8M327 374.1l2.3 6.5M332 388l2.5 6.9M320.3 360.1l1.8 5M322.6 366.4l1.6 4.5M326.6 377.5l1.6 4.4M328.4 382.5l1.9 5.1M330.9 389.4l2 5.4M318.6 359.8l2.4 6.8M321.6 368.1l2.5 6.8M324.7 376.6l2.1 5.7M327.3 383.9l1.9 5.1M317.9 362.4l1.4 3.8M319.5 366.9l1.5 4M323.3 377.1l1.6 4.4M325.2 382.4l2.4 6.5M314.4 357.2l2.4 6.5M312.7 356.7l2.4 6.8M315.6 364.8l2.3 6.3M318.3 372.3l2 5.3M310.7 355.6l2.7 7.5M313.8 364.3l2.4 6.5M316.4 371.4l1.5 4.1M318.3 376.7l2.6 7.2M316.1 374.9l1.8 4.9M314 373.5l2.2 6.2M316.6 380.7l1.9 5.2M312.5 373.7l2.1 6M314.8 380.2l1.4 3.9M316.7 385.4l2.1 5.7M313.4 380.8l2.5 6.9M316.2 388.3l1.5 4.3M304.8 361.5l2.4 6.5M307.4 368.6l1.9 5.3M309.8 375.3l2.3 6.1M312.7 383.1l2.4 6.6M306.2 369.6l2 5.5M304.9 370.5l1.6 4.4M310 384.4l1.7 4.8M312 390.1l2.1 5.6M301.2 364.7l2.2 6M303.8 371.9l2.1 5.6M308.8 385.5l1.7 4.7M298.9 362.7l2.3 6.3M306.1 382.6l2.2 6M299.9 374.4l1.4 3.8M301.9 379.7l1.4 4M305.6 390.1l2.1 5.5M300.6 380.5l2.5 7M303.5 388.7l2.6 7.2M296.6 373.9l2.2 6.2M296.6 378.4l2.6 7" stroke="#40403d" stroke-width="0.8" stroke-opacity="0.85" fill="none" stroke-linecap="round"/></g>
<clipPath id="eye1"><path d="M389.0,385.5C388.0,384.0 389.0,380.0 390.3,377.2C391.6,374.4 394.0,371.0 396.8,368.8C399.6,366.6 403.0,364.8 406.9,364.2C410.8,363.6 416.4,364.5 420.3,365.5C424.2,366.5 428.0,368.4 430.4,370.0C432.8,371.6 434.0,373.8 434.6,375.0C435.2,376.2 435.8,376.8 434.0,377.0C432.2,377.2 427.6,376.6 423.7,376.5C419.8,376.4 414.2,375.8 410.3,376.5C406.4,377.2 402.5,379.4 400.2,381.0C397.9,382.6 398.2,385.2 396.3,386.0C394.4,386.8 390.0,387.0 389.0,385.5Z"/></clipPath>
<g clip-path="url(#eye1)"><path d="M435.6 383.3l-1.8 5.2M436.1 377.6l-2.1 5.7M433 381.6l-2.2 6.1M430.6 384l-2.2 6M435.6 365.7l-2.3 6.3M428.3 385.9l-1.5 4M434.8 363.7l-1.9 5.3M430.6 375.1l-2.2 6.2M432.5 365.5l-2.4 6.7M429.6 369.2l-1.6 4.5M425.2 381.4l-2.1 5.5M431.4 359.8l-1.5 4.1M429.8 364.3l-2.4 6.7M427.2 371.5l-2 5.3M422 385.7l-2.7 7.3M424.9 373.2l-2.6 7.3M422 381.2l-2.5 7M423.7 372.3l-2.5 6.8M418.8 385.6l-1.5 4.2M419.2 380.1l-1.6 4.4M417.2 385.6l-2.1 5.9M418.8 376.9l-1.6 4.4M420 369.1l-1.4 3.9M418.8 368.1l-2.1 5.8M416.1 375.5l-2.6 7.2M420.2 359.8l-2.6 7.3M417.1 368.4l-2.7 7.4M411.5 383.8l-2.2 5.9M414.8 370.5l-2.7 7.3M409.3 385.4l-2.1 5.7M411.3 375.7l-2 5.5M413.8 364.2l-1.4 3.9M411.8 369.8l-1.7 4.7M407 383.1l-2.7 7.4M413.6 360.5l-2.3 6.3M410.9 367.9l-2.5 6.8M405.7 382.2l-1.9 5.1M411.3 362.4l-2.7 7.3M408.1 371.2l-2.3 6.3M405.1 379.3l-2.3 6.5M411.1 358.7l-2.4 6.5M402.5 382.2l-1.7 4.7M402.2 378.6l-2.3 6.4M407.4 360l-1.7 4.8M405 366.5l-2.4 6.6M397.7 386.6l-2 5.5M399.9 371.8l-1.5 4.1M397.8 377.7l-2.1 5.6M395.2 384.8l-1.9 5.1M393.9 383.8l-2 5.5M394.4 378.3l-2.2 5.8M391.7 385.6l-2.6 7M398.9 361.5l-2 5.4M394.3 374.1l-2.5 6.9M398.7 357.5l-2.1 5.9M393.2 372.7l-2.6 7.1M393.1 368.5l-1.6 4.5M391.1 374l-1.9 5.3M388.7 380.6l-1.5 4.2M395.2 358.6l-2.4 6.5M390.2 372.2l-2.2 6" stroke="#555551" stroke-width="0.8" stroke-opacity="0.85" fill="none" stroke-linecap="round"/>
<path d="M433.6 384.5l-1.7 4.6M435.8 374l-2.3 6.3M436.1 368.9l-2.2 6M433.3 376.5l-2.5 6.8M432.8 373.5l-1.4 3.8M430.9 378.7l-2 5.5M432.7 369.5l-1.7 4.7M428.2 381.9l-2.1 5.8M434.9 359.1l-2.1 5.5M429.8 372.9l-2.3 6.5M427.2 380l-2.5 7M431.5 363.9l-1.7 4.7M427.7 374.4l-2.1 5.7M424.6 378.6l-2 5.5M429.8 359.9l-1.6 4.3M427.7 365.5l-2.1 6M426.6 364.3l-2.3 6.2M420.6 380.7l-1.3 3.8M426.2 361.1l-1.5 3.9M424.4 365.8l-2.3 6.6M421.7 373.5l-1.8 4.8M423.8 363.3l-2.2 5.9M421.1 370.6l-2.1 5.8M417 382l-2.5 6.6M422.7 361.8l-2.4 6.7M418.2 374.1l-1.6 4.5M416.2 379.6l-2.3 6.5M421.7 360.3l-2.2 6M413.1 383.8l-2.6 7.1M414.2 376.3l-2 5.6M419.5 357.3l-2.5 7.1M416.5 365.6l-1.5 4.1M411.9 378.4l-2 5.4M416.2 362.2l-2.4 6.6M413.4 369.7l-1.5 4.3M408.9 382.1l-2.2 6.1M409.8 375.4l-2.2 6M408.1 375.6l-1.9 5.1M408.1 366.9l-1.7 4.6M405.9 373l-2.8 7.5M407.7 363.4l-2.5 6.9M404.8 371.6l-2.2 5.9M399.6 385.9l-1.7 4.5M402 374.7l-1.8 5.1M399.8 380.9l-1.7 4.6M404.4 363.9l-1.7 4.7M402.4 369.4l-2.2 5.9M399.6 377l-1.6 4.5M397.4 383.2l-2.2 5.9M404.7 358.6l-1.7 4.7M402.7 364.2l-2.6 7M401.7 362.6l-2.3 6.2M398.9 370.3l-1.5 4.1M396.9 375.6l-2.6 7.3M401.3 359.3l-1.7 4.6M399.4 364.4l-2.3 6.2M396.9 371.2l-2.1 5.9M396.3 368.5l-1.8 5.1M391.2 382.6l-2.7 7.3M396.1 364.8l-2.5 6.8M390.2 380.9l-2.3 6.4M395.1 363l-1.5 4.3M392.4 366.2l-1.6 4.4M394.4 356.1l-2.5 7.1M391.6 364l-2.4 6.5M389 371l-2 5.7M391.5 359.8l-1.7 4.6M389.2 366.2l-1.8 4.9" stroke="#40403d" stroke-width="0.8" stroke-opacity="0.85" fill="none" stroke-linecap="round"/></g>
<clipPath id="pup0"><path d="M309.0,378.0C311.1,376.7 317.2,376.8 321.0,377.0C324.8,377.2 330.2,377.5 332.0,379.0C333.8,380.5 332.5,383.8 332.0,386.0C331.5,388.2 330.5,390.2 329.0,392.0C327.5,393.8 325.3,395.9 323.0,396.5C320.7,397.1 317.2,396.4 315.0,395.5C312.8,394.6 311.1,392.8 310.0,391.0C308.9,389.2 308.7,387.2 308.5,385.0C308.3,382.8 306.9,379.3 309.0,378.0Z"/></clipPath>
<g clip-path="url(#pup0)"><path d="M315.7 376.3l7.7 0M325.3 376.3l6.1 0M304.4 378.1l5.1 0M319.1 378.1l8.1 0M300.2 379.9l9.6 0M310.8 379.9l6.6 0M300.5 383.5l9.3 0M320.6 383.5l8.6 0M330.9 383.5l9.7 0M311.8 385.3l5.6 0M304.3 387.1l7 0M328.3 387.1l9.7 0M302.9 388.9l6.6 0M320.7 388.9l5.2 0M308.2 390.7l7.5 0M317.2 390.7l6.5 0M332.1 390.7l7.3 0M305.9 392.5l6.1 0M322.2 392.5l5.4 0M301.1 394.3l6.6 0M320.2 394.3l5.3 0M304.9 396.1l7.5 0M320.2 396.1l6.6 0" stroke="#4e4e4b" stroke-width="0.8" stroke-opacity="0.7" fill="none" stroke-linecap="round"/>
<path d="M308.4 376.3l6.2 0M332 376.3l8.3 0M310.6 378.1l7.6 0M328.3 378.1l6.6 0M318.9 379.9l8.7 0M329.5 379.9l6.4 0M307.4 381.7l6.5 0M315.4 381.7l6 0M323.4 381.7l9.1 0M310.7 383.5l8.5 0M301 385.3l9.5 0M318.4 385.3l9 0M327.9 385.3l9.1 0M312.1 387.1l5.7 0M319.2 387.1l8.3 0M311.5 388.9l7.5 0M327.5 388.9l7.4 0M324.8 390.7l5.5 0M313.7 392.5l7.9 0M328.9 392.5l9.2 0M309.4 394.3l9.5 0M326.5 394.3l6 0M314.1 396.1l5.2 0M328.8 396.1l7.1 0" stroke="#383836" stroke-width="0.8" stroke-opacity="0.7" fill="none" stroke-linecap="round"/></g>
<clipPath id="pup1"><path d="M402.0,378.0C403.9,376.6 409.3,376.5 413.0,376.5C416.7,376.5 422.2,376.6 424.0,378.0C425.8,379.4 424.5,382.7 424.0,385.0C423.5,387.3 422.7,390.0 421.0,392.0C419.3,394.0 416.3,396.4 414.0,397.0C411.7,397.6 408.8,396.5 407.0,395.5C405.2,394.5 403.9,392.8 403.0,391.0C402.1,389.2 401.7,387.2 401.5,385.0C401.3,382.8 400.1,379.4 402.0,378.0Z"/></clipPath>
<g clip-path="url(#pup1)"><path d="M407.4 377.1l7.9 0M411.8 378.9l6.4 0M419.8 378.9l7.6 0M399.7 380.7l6.4 0M408.1 380.7l5.9 0M422 384.3l8.1 0M401.7 386.1l7 0M402.6 391.5l5.3 0M415 391.5l5.7 0M414.7 393.3l7.3 0M423.9 393.3l7.3 0M396.2 395.1l6 0M414.6 395.1l9.4 0M394.4 396.9l8.4 0M404.4 396.9l6.9 0" stroke="#4e4e4b" stroke-width="0.8" stroke-opacity="0.7" fill="none" stroke-linecap="round"/>
<path d="M400.6 377.1l5.2 0M416.6 377.1l5.4 0M424 377.1l8.3 0M401.8 378.9l8.3 0M415.3 380.7l5 0M421.3 380.7l6.9 0M395.4 382.5l7.3 0M403.3 382.5l5.6 0M409.8 382.5l5.5 0M416.9 382.5l9.9 0M397.3 384.3l6.9 0M405.8 384.3l5.8 0M413 384.3l8.1 0M391 386.1l9.8 0M410.6 386.1l8.9 0M420.4 386.1l5 0M399.8 387.9l8.8 0M410.6 387.9l8.5 0M420.4 387.9l7.2 0M400.3 389.7l9.2 0M410.8 389.7l9.8 0M421.5 389.7l7.9 0M392.2 391.5l8.4 0M408.5 391.5l5 0M421.6 391.5l9.3 0M395.3 393.3l8.1 0M404.9 393.3l7.8 0M403.7 395.1l9.7 0M412.4 396.9l9.6 0M423.5 396.9l5.6 0" stroke="#383836" stroke-width="0.8" stroke-opacity="0.7" fill="none" stroke-linecap="round"/></g>
<clipPath id="nwc"><path d="M361.0,428.5C371.1,427.9 384.6,430.1 393.0,433.0C401.4,435.9 408.1,440.8 411.6,446.0C415.1,451.2 416.2,457.9 414.0,464.5C411.8,471.1 406.7,481.2 398.4,485.6C390.1,490.0 371.9,490.6 364.0,491.0C356.1,491.4 357.2,490.7 351.0,488.0C344.8,485.3 332.5,480.2 327.0,475.0C321.5,469.8 317.1,463.0 318.0,456.6C318.9,450.2 325.2,441.5 332.4,436.8C339.6,432.1 350.9,429.1 361.0,428.5Z"/></clipPath>
<path d="M361.0,428.5C371.1,427.9 384.6,430.1 393.0,433.0C401.4,435.9 408.1,440.8 411.6,446.0C415.1,451.2 416.2,457.9 414.0,464.5C411.8,471.1 406.7,481.2 398.4,485.6C390.1,490.0 371.9,490.6 364.0,491.0C356.1,491.4 357.2,490.7 351.0,488.0C344.8,485.3 332.5,480.2 327.0,475.0C321.5,469.8 317.1,463.0 318.0,456.6C318.9,450.2 325.2,441.5 332.4,436.8C339.6,432.1 350.9,429.1 361.0,428.5Z" fill="#dfe6de"/>
<g clip-path="url(#nwc)"><path d="M361.0,428.5C371.1,427.9 384.6,430.1 393.0,433.0C401.4,435.9 408.1,440.8 411.6,446.0C415.1,451.2 416.2,457.9 414.0,464.5C411.8,471.1 406.7,481.2 398.4,485.6C390.1,490.0 371.9,490.6 364.0,491.0C356.1,491.4 357.2,490.7 351.0,488.0C344.8,485.3 332.5,480.2 327.0,475.0C321.5,469.8 317.1,463.0 318.0,456.6C318.9,450.2 325.2,441.5 332.4,436.8C339.6,432.1 350.9,429.1 361.0,428.5Z" fill="none" stroke="#8d978d" stroke-width="10" filter="url(#blur3)" opacity="0.7"/></g>
<g clip-path="url(#nwc)"><path d="M405.6 425.2l5.7 4M403.8 425.7l5 3.5M402.4 426.4l9.2 6.4M411.5 434.5l8 5.6M392 424.2l5.3 3.7M389.1 427.4l8.2 5.7M398.8 435.8l7.8 5.5M381.3 425.3l8.4 5.9M390.5 431.7l7.8 5.5M398.8 437.5l8 5.7M403.7 442.7l8.8 6.1M378.3 426.6l6.8 4.8M403.4 444.2l7.8 5.5M372.8 424.5l5.7 3.9M411.7 451.7l5 3.5M385.5 435.1l6.4 4.4M401.5 446.3l6.3 4.4M381.7 434.1l9.6 6.8M408.6 452.9l5.3 3.8M387.5 439.9l4.9 3.4M401.8 453.3l5.7 4M408.5 458l5.4 3.8M414.4 462.1l5.5 3.9M356.2 423.1l7.1 5M363.8 428.4l7.2 5M372.2 434.3l6.4 4.5M395.1 450.4l6.2 4.3M369.2 433.9l8.1 5.7M360.9 429.8l6.6 4.6M384.9 446.6l9.3 6.6M395 453.7l7.9 5.5M378.4 443.8l9.7 6.8M389.1 451.3l7.2 5M364.5 435.7l7.8 5.5M373.9 442.3l8.7 6.1M400 462.3l9.3 6.5M376.5 447.5l9.2 6.5M403.3 466.3l8.6 6.1M369.8 444.6l6.2 4.3M413.5 475.2l7.4 5.2M339.4 425l5.7 4M355.7 436.4l5.1 3.6M370.1 446.5l9.1 6.4M343.2 429.4l8.1 5.7M387 461.8l7.7 5.4M396.3 468.3l5.2 3.6M411.4 478.8l5.8 4.1M359.1 443.9l5.3 3.8M380.6 459l8.3 5.8M388.3 466.1l7.9 5.5M372.1 456.4l6.2 4.4M387.9 467.5l6.8 4.8M413.8 485.7l5.3 3.7M376.6 461.3l5.1 3.6M382.4 465.4l5.3 3.7M412.9 486.7l8.1 5.7M396.3 476.8l6.3 4.4M412.5 488.2l8 5.6M344.1 441.9l6.4 4.6M389 473.4l7.6 5.4M348.7 446.9l9.1 6.4M403.8 485.5l5.7 4M355.5 453.4l7.3 5.1M363.9 459.3l8.7 6.1M397.4 482.7l5.2 3.7M409.6 491.3l5.5 3.8M322.5 431.9l7.9 5.6M363.2 460.5l8.8 6.1M373.1 467.4l6.6 4.6M388.5 478.2l6 4.2M395 482.7l7.9 5.6M343.6 448.4l6.3 4.4M405.7 492l8.4 5.8M318.8 432.8l5.4 3.8M325.6 437.6l9.4 6.5M335.8 444.7l9.5 6.6M356.2 459l9.4 6.6M366.1 465.9l5.4 3.8M368.5 469.3l8 5.6M328.1 442.7l6.7 4.7M369.1 471.4l9.2 6.5M384.6 484l6.4 4.5M359.7 468.3l6.5 4.5M367.5 473.7l8.2 5.8M384.3 485.5l9.2 6.4M337.2 454.3l9.2 6.3M347.7 461.6l8.2 5.7M356.6 467.8l5.9 4.2M363.7 472.8l5.1 3.6M376.7 481.9l6.5 4.5M325.8 447.9l6.4 4.6M332.6 452.8l5 3.4M339 457.2l9.1 6.4M345.2 463.3l6.1 4.3M352.6 468.4l6.2 4.3M359.4 473.2l8.8 6.2M367.4 480.5l8.4 5.9M338.2 461.8l6.6 4.6M353.4 472.4l5.3 3.7M378.8 490.2l8.9 6.3M310.7 444.2l9.3 6.5M356.6 476.4l8.9 6.2M313.1 447.6l5 3.5M361.5 481.5l7.8 5.4M376.3 491.9l6.2 4.3M337.1 467.8l8 5.6M315.6 454.5l6.2 4.4M322.5 459.3l9.8 6.9M333.4 467l7.4 5.1M341.4 472.6l9.6 6.7M362.7 487.4l8.9 6.3M327.4 464.5l6.7 4.7M355.5 484.1l7.1 5M315.7 458l5 3.5M332.1 469.4l8.2 5.8M350.2 482.1l7.1 5M317.6 461l7.5 5.3M313.7 460l9.6 6.7M324.7 467.7l6.8 4.8M356.1 489.7l9.2 6.4M334.8 478.2l7.6 5.3M320.5 469.9l8.9 6.2M340.7 484.1l5.5 3.8M312 467.4l5.9 4.1M335 483.4l7.2 5.1M314.4 470.7l6.1 4.3M329.3 481.2l9.6 6.7M338.6 491.1l6.8 4.8M327.5 485l8.9 6.3M337 491.7l9.6 6.7M313.2 476.7l5.9 4.2M315.8 482l9.2 6.4M311.3 480.5l6.8 4.8M325.9 490.7l6 4.3" stroke="#eef2ec" stroke-width="1.0" stroke-opacity="0.8" fill="none" stroke-linecap="round"/>
<path d="M410 430l8.5 6M396.9 424.3l5.7 3.9M399.5 427.8l5.8 4.1M406.1 432.4l7.8 5.5M407.2 434.9l7.7 5.4M398.2 430.3l7.7 5.4M410 440.3l7.8 5.4M394.8 436.5l8.2 5.7M385.8 431.9l9.5 6.6M394.6 439.8l6.2 4.3M376.1 428.5l7.8 5.5M371.4 428.6l6.7 4.7M393.6 444.2l5.1 3.5M386.5 440.9l7.4 5.2M400.3 450.5l6.2 4.4M408.1 456l7.9 5.6M372 432.4l8.3 5.8M381.8 439.3l9.5 6.7M392.1 446.5l9.2 6.5M401.9 455.1l7.5 5.3M378.3 440.3l6.4 4.4M377.2 441.2l6.5 4.6M404.3 460.2l9.4 6.6M404.8 462.2l6.4 4.5M345.4 422.4l7.4 5.1M353.3 427.9l9.7 6.8M383.2 448.9l7.9 5.5M402.4 462.3l9.3 6.5M412.7 469.5l6.6 4.6M353.1 429.5l9 6.3M363.3 436.7l9.2 6.4M381.8 449.6l9.6 6.7M392.8 457.3l6.5 4.5M360.2 436.2l6.1 4.2M395.4 460.8l7.4 5.2M362 439.1l6.9 4.9M377.2 449.8l8.5 5.9M403.1 467.9l9.8 6.8M362.4 441.1l6.2 4.4M413.8 477.1l7.5 5.3M352.5 435.9l5.1 3.5M365.9 445.3l7.7 5.4M383.3 457.5l5 3.5M405.4 472.9l6.4 4.5M412.5 477.9l6.9 4.8M335.9 426l6.9 4.8M344.3 431.9l9.5 6.6M368.8 449l6.1 4.3M375.9 454l9.8 6.8M327.1 423.2l7.1 5M380 460.2l7.7 5.5M403.5 476.8l6.2 4.3M361.4 449l9.1 6.4M355.3 446.4l5 3.5M361.1 450.5l5 3.5M367.2 454.7l8.3 5.9M398.6 476.7l5.8 4.1M317.9 421.9l8.4 5.9M327.7 428.8l7 4.9M373.7 461l6.8 4.8M381.6 466.5l7.9 5.5M390.5 472.8l5 3.4M334.1 435l8.6 6M360.7 453.6l6.6 4.6M383.5 469.6l5 3.5M405.9 485.2l8.9 6.3M373.9 466.2l5.1 3.6M380.1 470.6l9.3 6.5M314.3 426.2l7.5 5.3M380.4 472.5l7.5 5.3M358.7 459l9.5 6.7M309.7 426.5l8 5.5M373.1 470.8l9.8 6.9M384.4 478.7l9.3 6.5M394.4 485.8l8.5 5.9M324.9 438.8l6.4 4.5M377.7 475.7l5.8 4.1M309.3 429.6l9.7 6.8M335.6 448l9.4 6.6M359.5 464.7l9.1 6.4M319 438.1l5.5 3.8M336.2 450.1l9.7 6.8M354.4 462.9l5.2 3.6M392.2 489.3l5.2 3.6M310.6 433.9l8.9 6.2M320.5 440.8l9.7 6.8M330.6 447.9l9.3 6.5M315.7 439.2l5.8 4.1M383.6 486.7l8.5 6M317.6 442.3l7.4 5.1M348.6 463.9l9 6.3M381.8 487.2l5.4 3.8M315.7 442.6l7.1 5M369.1 480l6.7 4.7M376.4 485.1l7.5 5.3M384.8 491l6.9 4.8M341.6 462.4l8.9 6.3M357.8 473.8l8.1 5.7M313.8 444.7l6.5 4.6M327.2 454.1l9.6 6.7M359.7 476.8l7.5 5.3M368 482.7l9.6 6.7M327.1 455.7l8.4 5.9M337 462.6l9.6 6.8M367 483.6l9.7 6.8M310.9 447.8l9 6.3M321.2 455l7.8 5.5M341.1 468.9l7.5 5.3M350 475.1l7.7 5.5M358.5 481.1l6.7 4.7M356.2 481.2l4.9 3.5M362.1 485.4l8.8 6.1M352.6 480.4l8.8 6.2M341.3 475.9l7.7 5.4M340.9 477.3l5.9 4.2M356.7 488.4l6.3 4.4M349.1 484.8l6.2 4.3M317.4 464.3l7.5 5.3M325.6 470l8.3 5.9M334.4 476.2l8.1 5.7M310.3 461l7.5 5.3M353 491l5.4 3.7M310.9 463.2l8.2 5.7M348.5 491.2l5.5 3.8M318.8 472.1l6.5 4.6M343.3 489.3l8.4 5.8M319.3 477.6l9.5 6.7M319.7 481.3l8.8 6.2M331.4 491.2l7.9 5.5" stroke="#f6f8f4" stroke-width="1.0" stroke-opacity="0.8" fill="none" stroke-linecap="round"/>
<path d="M408.5 425.5l9.4 6.6M412.4 433.4l5.3 3.7M403 428.5l7.5 5.3M398.8 429l6.8 4.8M414.1 441.5l9.1 6.3M391.7 427.5l7 4.9M399.7 433l9.4 6.7M379.2 425.5l6.2 4.4M396.5 439.4l6.2 4.3M401.4 444.5l9 6.3M368.2 422.9l6.6 4.7M414.5 457.1l8.3 5.8M399.9 448.6l5.5 3.8M367.8 427.8l8.1 5.7M389.2 446.2l5.3 3.7M410.6 461.2l5.3 3.7M393.3 450.8l6.1 4.3M400.5 455.8l6.9 4.9M352.4 423.8l7.2 5.1M369 435.5l7.7 5.4M414.4 467.3l7.5 5.3M397.6 457.2l6.7 4.7M391.8 454.9l9.6 6.7M410.5 469.7l9.1 6.3M387 454.9l7.2 5.1M386.7 456.4l6.7 4.7M386.6 458l9.3 6.6M396.5 465l6.2 4.3M336.7 424.8l5.1 3.6M389.6 461.9l6 4.2M396.8 466.9l7.2 5.1M354.7 439.1l5 3.6M360.3 443.1l7.3 5.1M326.7 421.2l9.4 6.6M336.9 428.4l7.9 5.5M345.9 434.7l6.4 4.5M389.9 465.5l7.5 5.3M398 471.1l9 6.4M408.6 478.6l5.9 4.1M334.9 428.7l5.9 4.1M341.6 433.4l9.4 6.6M352.2 440.8l7 4.9M359.8 446.1l9.7 6.8M397 472.2l5 3.5M337.7 432.4l7.1 5M354.5 444.1l6 4.2M379.7 461.8l6.7 4.7M396.1 473.2l8.3 5.9M337 433.6l6.8 4.8M344.6 438.9l9.1 6.4M388.1 469.4l9.3 6.5M346.2 441.8l5.7 3.9M352.5 446.2l9.5 6.6M321.3 426l6.2 4.4M328 430.7l5 3.5M398 479.7l7 4.9M326.2 431.1l8.3 5.9M342.5 442.6l5.5 3.8M368.9 461l7.4 5.2M376.8 466.6l8.5 6M386.7 473.5l7.9 5.5M395.5 479.7l6.8 4.8M318.9 427.8l5.3 3.6M324.9 432l9.2 6.4M335.2 439.1l9.5 6.7M391 478.2l5.2 3.6M403 486.7l6.1 4.2M339.9 444.1l6.1 4.3M346.8 449l9.2 6.5M337.2 443.9l5.4 3.9M395.9 485.1l9.4 6.6M317.6 433.7l5.8 4M349.5 456l8.1 5.7M358.3 462.2l8.7 6.1M385 480.8l7.1 5M393.5 486.8l6 4.2M379.3 478.6l7.3 5.1M396.5 490.7l7.5 5.1M347.5 458.1l5.8 4M375.9 477.9l7.7 5.4M351.6 462.6l7.2 5.1M322.8 444.1l5.8 4.1M329.9 449.1l6.6 4.7M367 476.8l6.6 4.6M335.4 456.4l8.6 6M315.6 444.2l8.8 6.2M351.6 469.4l5.3 3.8M347.5 470l8.3 5.8M327 457.4l6 4.2M344.3 469.5l5.9 4.1M351.4 474.5l8.7 6M370.4 487.7l5 3.6M311.8 450.1l6.2 4.4M327.1 460.8l8.7 6.1M346.4 474.3l8.6 6M309.9 452.2l7.2 5M335.3 470l9.1 6.4M321.2 461.8l9.6 6.8M325.6 466.7l5.3 3.6M331.9 471l7.8 5.5M349.9 487l8.5 6M318.5 466.7l8.2 5.8M327.7 473.2l6.1 4.3M344 484.6l8.3 5.8M347 488.4l7.4 5.2M308.8 463.4l8.3 5.8M340.1 485.3l7.6 5.3M326.4 477.4l7.8 5.5M316.4 473.8l6 4.2M313.6 475.3l5.1 3.6M319.7 479.6l7.4 5.1M329.2 487.9l8.6 6.1M316.7 480.9l5.7 4M319.1 486l5.4 3.8" stroke="#d5ddd4" stroke-width="1.0" stroke-opacity="0.8" fill="none" stroke-linecap="round"/>
<path d="M411.7 429.5l7.4 5.2M390.6 424.9l6.2 4.4M406.5 436.1l6.7 4.7M398.7 434.1l7.6 5.3M407.5 440.2l7.3 5.1M383.7 425.2l7.8 5.5M392.4 431.4l5.4 3.8M407.9 442.2l7.9 5.6M407.3 443.5l7.7 5.4M387 431l6.6 4.6M413 449.2l8.6 6M412 450.2l9.7 6.8M379 428.8l5.1 3.6M385.6 433.4l7.8 5.5M393.2 440.5l7.7 5.3M408.8 451.4l7.4 5.2M371.4 426.9l9.6 6.7M393 442l7.8 5.5M401.8 448.2l5.3 3.7M365.3 424.4l5.6 3.8M378.5 433.6l8.5 5.9M406 452.9l9.7 6.8M377.3 434.5l8.4 5.8M394.4 446.5l5 3.4M364.5 427.2l6.1 4.2M380.1 439.8l8.2 5.8M360.5 427.8l8.1 5.7M386.2 445.8l6.4 4.5M408.2 461.2l6.2 4.3M356 428.1l5.3 3.7M362 432.3l5.5 3.8M368.8 437.1l8.9 6.2M412.6 467.7l5.5 3.9M342.7 422.2l9 6.3M373.4 443.7l7.8 5.4M345.6 425.9l5.2 3.7M351.7 430.2l8.1 5.7M367.8 441.5l8.2 5.7M413 473.1l8.7 6.1M344.2 426.7l8.7 6M353.9 433.4l6.6 4.7M394.5 461.9l7.9 5.5M345.8 429.5l8.3 5.8M379.8 453.3l6.1 4.3M403.7 470l8.7 6.1M358 439.7l7.5 5.3M374 451l8.9 6.2M402.4 472.6l8.2 5.7M352.9 439.6l5.5 3.8M364.9 448l6.8 4.7M372.6 453.4l7.3 5.1M370 453.2l8.4 5.9M410.8 481.9l7.8 5.4M329.4 426.5l7.5 5.3M345.6 437.9l7.9 5.5M405.8 480.1l7.4 5.2M326.2 426l9.7 6.8M405.5 481.6l5.9 4.1M336.1 434.7l9.3 6.5M363.4 453.8l9.3 6.5M403.7 482l8 5.6M351.2 447l8.6 5.9M368 458.7l8.6 6.1M377.8 465.5l4.9 3.5M317.4 425l7.5 5.2M335.2 437.5l6.5 4.5M358.8 454l9.2 6.4M410.7 490.3l6.7 4.7M345.8 446.6l9.3 6.5M331.3 438.2l7.5 5.2M356.7 456l5.6 3.9M404.1 489.1l8.2 5.8M311.3 425.9l5.9 4.1M318.6 431l9.2 6.4M328.7 438.1l7.2 5M351.2 453.8l6.4 4.5M368.7 466l6.8 4.8M377 471.8l7.4 5.2M385.4 477.7l9.1 6.4M346.1 451.9l9.3 6.5M331.9 443.7l7.1 5M339.9 449.3l9 6.3M400.1 491.5l5 3.5M319.8 436.9l7.1 5M345.8 455.1l5.6 3.9M352.9 460.1l5.9 4.1M387.6 484.4l7.7 5.4M312.3 433.4l5.8 4.1M325.4 442.5l9.4 6.6M360.2 466.9l6.6 4.6M367.5 472.1l7.7 5.3M341.4 455.5l8.9 6.2M376.2 479.8l6.9 4.8M370.3 477.4l5.6 3.9M358.9 471.1l7.4 5.2M374.6 482.2l6.3 4.4M388.4 491.8l7.3 5.1M324.3 448.6l9.7 6.8M325.8 451.4l6.6 4.6M333.3 456.6l7.4 5.2M377 487.3l7.7 5.3M321 449.7l5.4 3.8M346 467.2l6.4 4.5M320.5 451.1l6.1 4.3M377.7 491.1l8.8 6.2M319.5 452.1l6.3 4.4M334.6 462.7l8.4 5.9M329.9 461.1l9.8 6.9M366.5 486.7l8.1 5.7M319.5 455.5l6.1 4.3M318.4 458.2l7.9 5.5M345.2 476.9l9.7 6.8M363.9 490l9.6 6.8M358.2 487.7l6 4.2M348.2 482.4l7.6 5.4M333.1 473.6l5 3.4M339.4 478l9 6.3M343.7 482.7l5.2 3.6M330.6 477l8.6 6M317.6 469.6l7.3 5.1M326.1 475.5l5.6 4M333 480.3l6 4.2M321.2 475.5l7.4 5.2M340.2 488.8l8.1 5.7M322.8 478.3l9.7 6.8M334 486.2l9.5 6.6M312.7 473l5.7 4M329.9 485l8.3 5.8M323.1 485.4l6.8 4.7M326.3 489.3l6.9 4.8M310.8 481.9l7.6 5.3M319.9 488.3l8 5.6M309.8 482.9l7.9 5.5M318.4 488.9l7.7 5.4M308.8 483.9l8.4 5.9M318 490.3l9.2 6.5" stroke="#c4cdc4" stroke-width="1.0" stroke-opacity="0.8" fill="none" stroke-linecap="round"/></g>
<path d="M336.5,458.0C336.7,455.2 339.4,452.4 342.0,450.0C344.6,447.6 347.9,445.0 352.0,443.5C356.1,442.0 361.5,440.9 366.5,441.0C371.5,441.1 377.6,442.2 382.0,444.0C386.4,445.8 390.2,449.3 393.0,452.0C395.8,454.7 399.0,457.2 398.5,460.0C398.0,462.8 393.8,466.2 390.0,469.0C386.2,471.8 380.4,474.8 376.0,476.5C371.6,478.2 367.9,479.2 363.6,479.0C359.3,478.8 353.8,477.0 350.0,475.0C346.2,473.0 343.2,469.8 341.0,467.0C338.8,464.2 336.3,460.8 336.5,458.0Z" fill="#262624"/>
<clipPath id="nbc"><path d="M336.5,458.0C336.7,455.2 339.4,452.4 342.0,450.0C344.6,447.6 347.9,445.0 352.0,443.5C356.1,442.0 361.5,440.9 366.5,441.0C371.5,441.1 377.6,442.2 382.0,444.0C386.4,445.8 390.2,449.3 393.0,452.0C395.8,454.7 399.0,457.2 398.5,460.0C398.0,462.8 393.8,466.2 390.0,469.0C386.2,471.8 380.4,474.8 376.0,476.5C371.6,478.2 367.9,479.2 363.6,479.0C359.3,478.8 353.8,477.0 350.0,475.0C346.2,473.0 343.2,469.8 341.0,467.0C338.8,464.2 336.3,460.8 336.5,458.0Z"/></clipPath>
<g clip-path="url(#nbc)"><path d="M396.5 444.1l0.6 16.9M394.7 441.9l0.4 11.4M393.3 450.9l0.3 9.6M391.2 440.7l0.6 16.3M389.9 450.3l0.5 16.2M389 474.2l0.6 16M387.4 475.7l0.5 15.4M384.8 450.4l0.6 17M385.4 468.4l0.4 10.6M382.6 438.1l0.6 15.7M383.9 473.6l0.5 14.8M382.2 474.9l0.4 11.6M377.3 430.4l0.4 13M367.3 436l0.4 12.2M364.6 457.3l0.6 17.8M357 434.9l0.3 9.4M357.4 446.2l0.6 17.8M355.9 452.6l0.7 17.7M356.6 471.2l0.4 12.5M354.1 448.9l0.4 10.7M354.5 460.8l0.5 14.2M355 475.6l0.6 16.7M352 438l0.6 15.7M353 465.6l0.5 15.6M349 447.7l0.5 16.7M344.1 454.3l0.4 11.8M341.7 434.6l0.6 17.1M342.3 452.9l0.4 11.6M338.9 451.2l0.5 13.9M337 446.2l0.4 11.8M335.7 457.5l0.5 14.2" stroke="#4b4b48" stroke-width="0.8" stroke-opacity="0.8" fill="none" stroke-linecap="round"/>
<path d="M398.4 451.3l0.5 14.4M399.4 479.1l0.6 17.5M395.9 427.3l0.5 15.5M395.1 454l0.6 16.9M395.7 472.3l0.6 16.6M392.8 437.3l0.5 12.3M394.1 475.2l0.6 15.1M389.4 437.9l0.4 11.3M390.5 467.4l0.4 12.5M387.4 428.1l0.5 14.4M388.4 455.7l0.6 16.9M380.7 431.8l0.4 12.2M381.2 445.9l0.6 17.3M381.9 464.4l0.3 9.6M379.7 451.3l0.6 17.9M380.4 471.2l0.6 16.4M377.8 445.2l0.6 17M378.4 462.8l0.4 12.6M375.7 433.8l0.4 12.5M376.2 447.3l0.4 11.4M376.6 460.7l0.6 15.8M374.8 457.2l0.4 11.4M372.9 450.4l0.3 9.4M373.2 460.9l0.7 17.7M370.6 433.7l0.5 15.6M369 437.2l0.6 17.2M368.4 467.5l0.5 15.8M362.8 453.7l0.3 9M363.1 463.2l0.4 10.7M363.5 475.3l0.3 9M361.1 454.7l0.4 12.5M361.6 468.8l0.4 12M359.4 455.6l0.6 16M358.1 464.8l0.3 10.6M358.5 476.9l0.4 10.8M353.5 432.6l0.6 15.1M352.6 455.6l0.4 9.5M350.5 443l0.5 14.5M349.6 466l0.6 17.3M346.9 438.6l0.4 9.5M347.3 449l0.5 13.4M345 431.8l0.4 10.7M345.8 455.9l0.6 17.4M346.5 475.2l0.6 16.9M344.5 466.7l0.6 15.7M342.8 466.2l0.4 12.3M343.2 479l0.5 13.9M338.4 437.8l0.4 12.5M337.9 472.8l0.3 9M336.2 472.6l0.4 12.1" stroke="#3a3a38" stroke-width="0.8" stroke-opacity="0.8" fill="none" stroke-linecap="round"/>
<path d="M398.1 441l0.3 9.4M399 467l0.3 10.2M397.1 462.7l0.6 16.1M394.2 427.9l0.4 12.8M393.7 462.2l0.4 11.8M391.8 458.1l0.6 14.4M392.4 473.5l0.5 14.6M387.9 443.1l0.4 12.1M385.9 435l0.6 14.8M386.5 450.7l0.3 9.5M386.9 461.9l0.4 12.5M384.3 436.1l0.5 13.7M385.8 479.6l0.6 17M383.2 454.7l0.6 17.2M379.2 437.8l0.5 12.8M378.9 477.2l0.4 11.9M377.2 477.2l0.5 12.8M374.2 440.3l0.5 15.1M375.2 469.6l0.7 17.9M372.3 433.4l0.5 15.6M371.2 450.2l0.5 16.3M371.8 467.2l0.4 12.9M369.7 455.9l0.3 9.2M370 465.8l0.5 14.5M367.7 449l0.6 16.8M365.6 436l0.5 14.5M366.1 452.2l0.5 12.2M366.6 465.6l0.5 14.6M363.6 428.9l0.5 15.1M364.2 445.8l0.4 10M365.3 476.3l0.5 14.8M362.2 437.1l0.5 15.2M360.6 438.8l0.5 14.8M358.9 441.3l0.5 13.5M360 472.8l0.6 15.5M355.4 436.8l0.5 14.4M350 429.9l0.5 12.3M351.1 459.1l0.5 15.9M351.7 476.3l0.4 12.9M348.6 437.4l0.3 9.4M347.8 463l0.6 17.2M345.4 444.2l0.4 10.4M343.4 434.6l0.6 17.9M339.8 430.4l0.6 14.9M340.4 445.8l0.6 16.8M341 463.4l0.6 16M339.4 466l0.6 16.1M336.4 429.5l0.5 15.2M337.4 458.8l0.5 12.5M335.1 439.5l0.6 16.9" stroke="#5a5a56" stroke-width="0.8" stroke-opacity="0.8" fill="none" stroke-linecap="round"/></g>
<path d="M344,498 L357,487" stroke="#e8eee6" stroke-width="2" stroke-linecap="round"/>
<clipPath id="bc"><path d="M307.6,479.0C308.8,477.5 309.1,476.0 313.0,479.0C316.9,482.0 325.2,492.3 331.0,497.0C336.8,501.7 342.2,504.8 348.0,507.0C353.8,509.2 360.0,510.2 366.0,510.0C372.0,509.8 377.9,508.7 384.0,506.0C390.1,503.3 396.6,498.8 402.7,494.0C408.8,489.2 417.0,479.8 420.6,477.0C424.2,474.2 423.3,475.2 424.2,477.0C425.1,478.8 425.4,478.7 426.0,488.0C426.6,497.3 428.4,523.8 427.8,532.8C427.2,541.8 425.4,538.5 422.4,541.8C419.4,545.1 414.4,549.0 409.9,552.6C405.4,556.2 399.7,559.7 395.5,563.3C391.3,566.9 389.5,571.3 384.7,574.0C379.9,576.7 372.8,580.1 366.8,579.5C360.8,578.9 353.9,573.2 348.8,570.5C343.7,567.8 340.8,567.2 336.3,563.3C331.8,559.4 326.5,551.4 322.0,547.2C317.5,543.0 312.1,542.7 309.4,538.2C306.7,533.7 306.4,528.4 305.8,520.0C305.2,511.6 305.5,494.8 305.8,488.0C306.1,481.2 306.4,480.5 307.6,479.0Z"/></clipPath>
<path d="M307.6,479.0C308.8,477.5 309.1,476.0 313.0,479.0C316.9,482.0 325.2,492.3 331.0,497.0C336.8,501.7 342.2,504.8 348.0,507.0C353.8,509.2 360.0,510.2 366.0,510.0C372.0,509.8 377.9,508.7 384.0,506.0C390.1,503.3 396.6,498.8 402.7,494.0C408.8,489.2 417.0,479.8 420.6,477.0C424.2,474.2 423.3,475.2 424.2,477.0C425.1,478.8 425.4,478.7 426.0,488.0C426.6,497.3 428.4,523.8 427.8,532.8C427.2,541.8 425.4,538.5 422.4,541.8C419.4,545.1 414.4,549.0 409.9,552.6C405.4,556.2 399.7,559.7 395.5,563.3C391.3,566.9 389.5,571.3 384.7,574.0C379.9,576.7 372.8,580.1 366.8,579.5C360.8,578.9 353.9,573.2 348.8,570.5C343.7,567.8 340.8,567.2 336.3,563.3C331.8,559.4 326.5,551.4 322.0,547.2C317.5,543.0 312.1,542.7 309.4,538.2C306.7,533.7 306.4,528.4 305.8,520.0C305.2,511.6 305.5,494.8 305.8,488.0C306.1,481.2 306.4,480.5 307.6,479.0Z" fill="#e0e6df"/>
<g clip-path="url(#bc)"><path d="M307.6,479.0C308.8,477.5 309.1,476.0 313.0,479.0C316.9,482.0 325.2,492.3 331.0,497.0C336.8,501.7 342.2,504.8 348.0,507.0C353.8,509.2 360.0,510.2 366.0,510.0C372.0,509.8 377.9,508.7 384.0,506.0C390.1,503.3 396.6,498.8 402.7,494.0C408.8,489.2 417.0,479.8 420.6,477.0C424.2,474.2 423.3,475.2 424.2,477.0C425.1,478.8 425.4,478.7 426.0,488.0C426.6,497.3 428.4,523.8 427.8,532.8C427.2,541.8 425.4,538.5 422.4,541.8C419.4,545.1 414.4,549.0 409.9,552.6C405.4,556.2 399.7,559.7 395.5,563.3C391.3,566.9 389.5,571.3 384.7,574.0C379.9,576.7 372.8,580.1 366.8,579.5C360.8,578.9 353.9,573.2 348.8,570.5C343.7,567.8 340.8,567.2 336.3,563.3C331.8,559.4 326.5,551.4 322.0,547.2C317.5,543.0 312.1,542.7 309.4,538.2C306.7,533.7 306.4,528.4 305.8,520.0C305.2,511.6 305.5,494.8 305.8,488.0C306.1,481.2 306.4,480.5 307.6,479.0Z" fill="none" stroke="#8f9b92" stroke-width="8" filter="url(#blur3)" opacity="0.45"/></g>
<g clip-path="url(#bc)"><path d="M427.2 562l-0.4 10.3M423.2 545.6l-0.5 14.7M422.3 572.9l-0.6 15.6M421.6 549.9l-0.4 10.7M421.2 561.6l-0.4 10.7M422.9 468.9l-0.4 10.6M420.9 482.1l-0.5 15.5M418.9 541l-0.5 14.1M414.1 548.3l-0.4 12.3M412.4 555.1l-0.3 8.2M412.3 514.6l-0.5 14.3M411.8 530l-0.4 11M409.2 560.4l-0.5 15.4M410.8 472.6l-0.4 11.7M409.4 512l-0.4 11.5M407.4 525.1l-0.5 15.8M408.1 461.9l-0.5 15M404.9 556.1l-0.5 13.7M406.1 476.2l-0.2 8M404.2 530.4l-0.4 11.6M403.3 557.3l-0.3 8.4M404.2 488.7l-0.5 15M403.3 515l-0.5 12.6M402.8 528.3l-0.5 14.3M400.6 547.7l-0.5 15.9M400.6 506.7l-0.6 15.7M398.7 559.2l-0.4 12.9M398.3 572.6l-0.4 11.2M399.1 505.1l-0.4 13.1M397.7 545.2l-0.4 12.6M398.3 485.1l-0.3 9.4M396.2 544.6l-0.3 9.8M396.9 484.2l-0.5 11.9M396.4 496.9l-0.4 12.3M395.6 520.1l-0.5 14.9M393.3 543.4l-0.4 11.8M392.8 515.7l-0.5 11.6M390.5 580.2l-0.3 8.2M391.4 511l-0.3 9.8M390.5 538.1l-0.6 15.1M390.5 495.1l-0.5 14.9M389.9 511.9l-0.3 8.8M387.8 571.7l-0.4 10.2M388.1 519.3l-0.4 10.8M387.3 542.3l-0.5 15.2M388.2 474l-0.5 14.6M386.8 472.5l-0.4 8.8M385.6 506.5l-0.4 9.4M383.8 557.2l-0.3 9.6M384.9 482.6l-0.4 12.7M383.8 513.2l-0.4 12.6M383.8 470.5l-0.4 12M381.7 530.4l-0.5 14.2M380.3 571.7l-0.5 12.9M381.9 481.9l-0.4 11.6M381.5 494.5l-0.5 13.6M379.2 561.2l-0.5 11.8M380 493.7l-0.5 14.4M377.3 570.8l-0.4 11.9M377.1 534.5l-0.4 12.4M376 565.1l-0.4 12.7M375.5 579.2l-0.4 12M377.2 487.5l-0.4 13.1M375.8 529.3l-0.4 11.6M374.9 511.2l-0.4 10.8M373.5 549.9l-0.4 11.9M373.8 499.6l-0.5 15.3M372.6 490.3l-0.3 8.1M371 538.2l-0.5 12.5M371.8 470.5l-0.4 12.3M370.4 511.5l-0.5 13.9M369.9 526.8l-0.4 11M369.8 484.1l-0.5 15.1M369.3 500.6l-0.5 14.2M365.7 517.6l-0.6 15.6M364.1 562l-0.3 10.3M363.8 528.4l-0.5 15.4M363.2 544.7l-0.5 15.1M363.4 497.7l-0.3 8.2M361.4 552.6l-0.3 9.5M360.5 580.1l-0.4 10M358.8 542.8l-0.4 10.1M358.4 554.4l-0.5 13.9M359.6 475.6l-0.3 9.3M356.9 555l-0.4 11.2M357.3 498l-0.3 10.4M357 509.1l-0.6 15.5M355.2 473.4l-0.5 14.6M354.6 489.5l-0.5 14.8M353.5 521.5l-0.3 8.6M352.2 560.3l-0.5 13.1M351.9 524.2l-0.4 12.8M351.1 549l-0.4 10M350.1 575.9l-0.4 12.5M352.2 472.8l-0.5 15.1M348.7 574.7l-0.4 11.3M347.4 568.3l-0.5 15.4M349.4 466.4l-0.5 14.5M348.4 496.6l-0.5 14.7M347.9 468.7l-0.5 14.8M345.6 533.5l-0.5 15.2M345 550.6l-0.3 9.9M345.5 494.2l-0.4 9.6M342.5 537.4l-0.4 11.8M342 549.8l-0.3 9.2M341.6 560.8l-0.5 14.8M341.2 487.8l-0.3 8.1M340.9 497.1l-0.6 15.6M337.5 550l-0.5 15.7M336.9 566.9l-0.4 11.3M336.5 579.8l-0.3 9.4M338.4 481.7l-0.3 9.5M337.1 475.2l-0.3 10.5M336.2 501.1l-0.4 11.6M334.4 553.6l-0.4 12.6M334.1 476.5l-0.5 14.3M333.1 504.1l-0.4 13M331.7 544.9l-0.5 12.8M331.2 558.9l-0.3 9.6M330.8 570.4l-0.5 14.1M330.5 493.7l-0.5 13.9M329.4 526.1l-0.3 8.2M328.5 508.1l-0.5 14.5M326.8 513.5l-0.3 9M325.2 557.8l-0.5 14.6M324.7 573.1l-0.4 12.9M324.4 538.8l-0.5 14.1M322.4 551.9l-0.5 15.6M321.8 569l-0.3 9.9M321.5 535.5l-0.4 12.1M320.9 509.2l-0.4 13.4M317.7 557.5l-0.3 9.1M317 580.4l-0.4 8.8M315.9 567l-0.5 14.2M317.8 470.6l-0.3 8.3M315.2 545l-0.4 11.3M316 477.8l-0.4 13.6M315.1 505.8l-0.5 13M313.5 550.2l-0.5 13.9M314.7 473.5l-0.3 9M312.6 490.2l-0.4 11M310.2 559.5l-0.4 9.4M310 478.1l-0.5 13.5M309 505.8l-0.4 12.1M307.4 510.4l-0.5 13.2M305.6 562.1l-0.3 8.9" stroke="#eef2ed" stroke-width="1.1" stroke-opacity="0.9" fill="none" stroke-linecap="round"/>
<path d="M428.4 526.3l-0.3 8.1M426 551.1l-0.5 14.6M427.1 478.3l-0.4 11M425.6 519.4l-0.4 13.8M424.6 549.3l-0.4 10.4M424.1 520.6l-0.4 11.4M424.5 465.7l-0.5 14M424 481l-0.5 12.6M422.8 514.5l-0.3 8.4M421.9 540.5l-0.3 8.1M420.7 573.7l-0.2 8.4M422 493.5l-0.5 15.9M421.4 510.9l-0.4 12.8M420.9 525.7l-0.5 14.6M420.4 541.3l-0.4 11.3M419.8 514.6l-0.3 9.8M419.4 525.3l-0.5 14.1M419.4 481.9l-0.3 10M418.5 508.1l-0.4 11.4M418.3 470.8l-0.5 15.1M416.7 516.9l-0.4 11.4M416.3 529.8l-0.6 15.9M415.7 547.6l-0.4 10.5M415 524.3l-0.3 8.2M415.1 476.3l-0.4 13.9M413.3 529.4l-0.4 12.3M412.8 543.5l-0.4 10.8M412.9 497.8l-0.5 14.8M411.3 542.1l-0.3 9.9M411 553.4l-0.6 14.9M410.5 523.6l-0.4 10.1M409.7 546.6l-0.4 12.4M407.9 555l-0.5 15M408.4 497.9l-0.5 14.1M407.5 478.8l-0.3 10.9M406.3 514.9l-0.5 15.2M405.7 532l-0.4 11.3M403.7 504.4l-0.3 8.7M401.8 556.6l-0.3 9.8M401.9 469l-0.5 12.6M401.4 482.2l-0.5 14.7M399.6 534.7l-0.4 11.8M399.1 547.7l-0.3 9.6M400.5 465.9l-0.4 10.1M400.1 477.6l-0.5 13.2M398.1 534.6l-0.3 9.7M397.2 559.4l-0.4 12.9M397.5 508l-0.3 8.4M397.2 518.4l-0.4 10.5M394.3 513.6l-0.4 13.7M393.8 528.1l-0.5 14.3M393.2 501.5l-0.4 12.9M391.9 497.2l-0.4 12.3M391 522.6l-0.5 14.6M389.4 569.4l-0.5 14.5M389.3 486.6l-0.6 15.5M387.7 530.9l-0.3 9.7M386.4 570l-0.4 11.3M385.7 545.7l-0.4 10.4M386.4 481.9l-0.3 10.4M384.2 546.3l-0.3 9M383.4 568l-0.4 12.8M385.5 465.7l-0.5 15.3M383.4 527l-0.6 15.9M383.4 483.8l-0.5 13M382.4 510.5l-0.3 8.3M380.6 562.2l-0.3 8.2M380.1 534.2l-0.4 10.3M378 509.7l-0.5 12.1M376.6 548.1l-0.5 15.6M374.9 554.8l-0.5 13.8M374.4 569.7l-0.6 14.7M376.2 475l-0.4 11.8M374.1 534.1l-0.5 14.2M374.4 482.4l-0.5 15.7M372.3 543.1l-0.4 10.8M371.3 484.5l-0.3 9.7M369 550.8l-0.5 15.9M367.8 542.5l-0.4 10.8M366.5 579.5l-0.3 8.2M367.3 513.5l-0.5 14.3M366.7 529.8l-0.4 12.7M365.3 570.1l-0.4 13.1M367.5 465.4l-0.5 15M366 507l-0.3 8.7M364.5 551.4l-0.3 9.5M364.7 503.2l-0.4 10.7M364.3 515.3l-0.5 12.5M361.9 539.6l-0.4 11.9M361.1 563.3l-0.6 15.5M362.1 490.4l-0.5 15.2M361 521.8l-0.5 14.8M360.5 537.5l-0.5 14.6M357.9 569.3l-0.3 8.4M357.5 579.2l-0.3 10M356.4 567.9l-0.4 10.7M356 579.6l-0.4 10.9M356.4 526.3l-0.5 14.2M355.2 559l-0.5 15.9M356.7 472.5l-0.3 8.4M353.4 567.9l-0.4 11.7M352.6 546.6l-0.4 13.2M353.7 473.6l-0.3 9.9M350.7 560.6l-0.5 14.3M351.7 489.1l-0.5 13M348.9 524.4l-0.5 15.8M347.8 512.7l-0.5 13.9M347.3 528.5l-0.5 13.1M345.6 577l-0.5 13.5M346.4 510.7l-0.3 8.2M343.4 510.2l-0.3 8.7M343.1 520.4l-0.6 15.4M343.1 476.6l-0.5 12.6M341.7 517.5l-0.4 11.1M340.7 546.2l-0.3 8M340.3 514.5l-0.4 10.9M339.8 526.7l-0.3 9.6M339.5 537.7l-0.6 15M335.8 513.4l-0.4 12.4M335.3 527l-0.4 12M335.7 472.1l-0.5 14.4M335.2 487.7l-0.3 8.5M334.8 498l-0.3 9.2M332.7 560.3l-0.4 10.4M332.1 533.9l-0.4 10.3M331.7 503.2l-0.6 15.1M331.1 520.2l-0.5 13.2M329.8 557.6l-0.6 15.8M327.5 579.8l-0.4 9.8M328 523.2l-0.5 12.7M325.8 500.1l-0.5 11.8M325.3 513.6l-0.4 11.4M323.4 483l-0.4 9.9M322.4 509.3l-0.3 9.9M322 520.6l-0.4 13.7M321.4 494.8l-0.4 13.3M320.4 524.3l-0.3 9.4M319.2 516l-0.3 8.7M318.9 525.5l-0.4 10.4M318.5 537l-0.4 9.5M319 477.3l-0.4 13.7M317.2 531.4l-0.4 10.7M316.7 543.2l-0.3 9.8M316.1 519.2l-0.4 11.1M314.7 558.2l-0.3 8.4M314.4 567.5l-0.5 13.5M312.6 576l-0.5 13.2M314.3 483.4l-0.3 9.9M312.9 523.5l-0.4 11.4M311.1 576.3l-0.4 10M309.8 570l-0.5 14.4M309.3 541.9l-0.3 9.2M309.5 493.1l-0.4 11.2M308.6 519l-0.4 10.9M307.6 546.1l-0.3 11M308.3 484.1l-0.5 14.1M305.2 572.1l-0.5 15.5M307.3 471.2l-0.5 13.2M306.7 486.2l-0.3 8.9M306.4 495.7l-0.5 15.3M305.5 522l-0.4 10.3" stroke="#f6f8f4" stroke-width="1.1" stroke-opacity="0.9" fill="none" stroke-linecap="round"/>
<path d="M428.4 570.1l-0.4 10.8M427 524.8l-0.4 10.6M425.5 479.5l-0.3 10.8M423.2 504.2l-0.4 9.7M418.4 556l-0.4 11.1M417.9 569.1l-0.5 13.6M417.6 534.3l-0.4 13.4M417.1 548.3l-0.4 11.7M416.7 561.9l-0.6 14.8M416.1 577.9l-0.5 13.7M417.3 500.8l-0.5 14.5M416.6 477.1l-0.4 11.9M413.6 562.2l-0.5 15.9M413.1 578.7l-0.5 13.1M414.6 491.5l-0.3 10.3M413.7 474.9l-0.4 12.2M413.2 487.7l-0.3 8.6M408.6 577.7l-0.5 14.6M408.9 525l-0.4 11.3M408.9 482.7l-0.5 13.8M407.9 513.1l-0.4 10.4M404.3 570.9l-0.4 11.4M402.3 543.7l-0.4 12.2M398.6 519.3l-0.4 13.7M396.7 573.7l-0.3 9.2M395.9 555.4l-0.5 13.5M396 510l-0.3 8.2M394.6 549.6l-0.4 10.9M394.1 561.8l-0.5 14.8M395.7 473.4l-0.3 9.9M395.4 483.8l-0.5 14.7M392.5 567.2l-0.6 14.7M391.4 555.8l-0.4 10.7M392.7 473.2l-0.3 8.2M392.4 483.1l-0.4 12.2M389.9 554.9l-0.5 13.8M390.8 484.8l-0.3 9.8M388.7 547.2l-0.4 11.3M388.7 503.9l-0.5 14.3M386.8 558.2l-0.4 10M387.2 502.9l-0.4 11.7M386 493.1l-0.4 12M384.8 529.9l-0.6 15.2M384.4 497.3l-0.5 13.9M382.5 466.9l-0.5 14.2M380.5 522.4l-0.4 10.5M379.7 546l-0.5 14.5M378.7 573.6l-0.4 11.9M378.8 527.3l-0.4 12.5M377.8 556.9l-0.5 13.3M378.5 494.1l-0.5 13.9M377.6 476.6l-0.3 9M376.3 513.3l-0.5 14.9M375.7 487.3l-0.4 12.3M373.2 516l-0.4 12M372.8 529.1l-0.4 12.1M371.3 528.4l-0.3 8.2M370.5 552.4l-0.4 11.1M368.4 568.3l-0.5 15.1M370.3 471.7l-0.4 10.8M368.3 527.5l-0.5 14.5M368.9 469.1l-0.6 14.9M365.7 560.4l-0.3 9.1M365.1 534.2l-0.6 15.6M363.7 573.5l-0.5 13.6M365.4 483.6l-0.3 8.3M365 493.5l-0.3 9M363.8 486.4l-0.4 9.8M363 506.9l-0.3 10.6M362.6 518.7l-0.3 10.3M359.9 553.7l-0.5 13.1M359 580.3l-0.3 8.8M357.3 543.6l-0.4 10.6M358.4 469.2l-0.5 13.1M356.4 481.9l-0.5 13.9M355.9 496.7l-0.5 13.2M355.4 510.4l-0.4 10.9M355 522.8l-0.5 13.2M354.1 505.5l-0.5 15.3M351.4 538.6l-0.3 8.6M349.2 560.1l-0.5 13.7M349.7 503.6l-0.3 8.3M348.3 540.8l-0.3 10.9M346.8 543.4l-0.6 15.5M346.2 560.7l-0.6 15.5M346.1 520.6l-0.4 11.4M343 565l-0.5 13M344.6 477.7l-0.6 15.6M341.6 477.5l-0.4 9.1M338.9 554.7l-0.3 8.2M338.5 522.1l-0.4 11.6M338 535.4l-0.4 13M338.8 470.5l-0.4 10.5M336.6 533.1l-0.3 8.4M336.3 542.5l-0.4 11.8M335.3 570.6l-0.3 9.3M333.9 567.6l-0.5 15.6M333.2 544.5l-0.5 14.9M333.6 491.7l-0.4 11.1M332.7 473.8l-0.5 12.9M329.1 575l-0.5 14.7M331.5 463.7l-0.5 14.3M329.9 509.4l-0.5 15.2M329 536.1l-0.5 14.7M329.8 468.9l-0.4 12.2M329.4 482l-0.3 8.7M327.1 548.2l-0.4 9.6M327.8 485.1l-0.5 13.6M327.3 499.6l-0.4 12.2M326.7 472.4l-0.3 9.5M324.8 526.7l-0.3 10.6M323.9 553.7l-0.5 13.6M325.4 467.6l-0.6 15.8M324.4 496.2l-0.5 13M323.9 510.4l-0.4 11M323.7 473.1l-0.3 9.2M323 493.6l-0.5 14M322.2 471.8l-0.3 8.9M321.9 481.3l-0.4 12.8M319.1 562.2l-0.3 9.2M316.9 497.1l-0.5 11.7M315.5 492.6l-0.4 11.5M313 565.1l-0.3 9.2M312.5 536.6l-0.4 10M312.1 547.4l-0.4 12.4M311.6 560.4l-0.5 14.8M313.1 475.5l-0.5 14.2M312.2 502.3l-0.5 12.9M311.8 470.9l-0.3 9M310.9 497l-0.5 12.6M310.4 510.8l-0.6 15.7M309.8 528.2l-0.5 12.7M308.5 564.1l-0.5 15.7" stroke="#e2e8e1" stroke-width="1.1" stroke-opacity="0.9" fill="none" stroke-linecap="round"/>
<path d="M428.5 481.4l-0.6 15.7M426.5 537.3l-0.4 12.6M425.5 567.7l-0.5 14.3M426.7 490.3l-0.6 15.4M425.1 534.9l-0.5 13.9M424.2 560.3l-0.5 14.7M425.1 491.9l-0.4 12.1M423.7 533.2l-0.4 11.4M422.7 562.1l-0.4 9.5M423.5 494.7l-0.3 8.8M422.5 523.7l-0.6 15.7M419.6 564.1l-0.6 15.3M421.4 469.2l-0.4 12.2M420.4 498.6l-0.6 15.1M420 464.9l-0.5 15.9M419 493.5l-0.4 13.9M418.1 520.4l-0.4 12.4M415.2 559.9l-0.4 12.3M414.7 573.6l-0.3 9.2M414.2 502.5l-0.5 13.7M410.4 570.2l-0.4 9.2M411.3 500l-0.3 9.3M410.9 510.9l-0.4 11.6M410.1 534.6l-0.4 10.4M410.3 486.2l-0.5 12.9M407.3 571.4l-0.5 13.6M409.3 471.4l-0.4 10.4M406.3 558.4l-0.5 14.5M407.1 490.7l-0.4 11.1M405.8 485.6l-0.5 14M404.8 515.1l-0.5 14.2M403 567.4l-0.5 14.2M404.5 478.9l-0.2 8.2M403.1 476.8l-0.3 9.5M402.8 487.2l-0.4 10.7M402.4 498.7l-0.4 9.8M401 538.2l-0.3 8.5M398 495l-0.5 12.5M396.7 530.6l-0.4 13M395.4 569.9l-0.5 13.5M393.6 577.9l-0.3 9M392.3 528.2l-0.5 13.5M388.2 560.1l-0.4 10.3M390.1 462.5l-0.5 14.3M387.7 489.9l-0.5 11.9M385.2 517.9l-0.4 10.6M381.8 571.4l-0.5 14.3M381.2 545.9l-0.5 14.6M380.9 509.9l-0.3 10.8M379.4 510l-0.5 15.9M378.3 541.6l-0.4 13.4M379.5 465.3l-0.4 11.4M379.1 478.1l-0.6 14.9M375.3 500.6l-0.3 8.7M374.5 523.4l-0.4 9.6M372.7 574.1l-0.3 9.1M371.4 567.2l-0.5 14.7M373.2 474.7l-0.5 14.7M372.3 499l-0.5 15.4M371.8 515.3l-0.5 12.1M370 564.9l-0.3 10.4M369.6 577.1l-0.3 9.4M369.4 539.3l-0.3 9.7M368.7 515.5l-0.3 11M366.9 567.1l-0.4 11.9M367.8 500.1l-0.4 11.7M366.9 481.2l-0.3 9M365.7 472.9l-0.3 9.5M364.1 477.3l-0.3 8.4M362.6 476.4l-0.5 13.4M361.5 506.8l-0.4 13.4M359.4 568.4l-0.4 10.3M361.2 472.5l-0.4 12.9M360.8 486l-0.5 14.6M360.2 502.5l-0.3 9.8M357.8 527.9l-0.5 14.4M357.8 484l-0.4 12.5M355.8 541.7l-0.5 15.7M354.6 575.5l-0.4 12.1M354.5 537.6l-0.4 11.8M354 550.6l-0.5 15.5M351.7 574.1l-0.3 9.2M353.3 484.7l-0.3 9.9M352.9 495.9l-0.4 12.5M351.2 503.3l-0.4 11.1M350.1 533.6l-0.4 10.8M349.7 546l-0.5 13.2M350.6 475.3l-0.4 13M349.3 513.5l-0.3 9.5M348.9 482.8l-0.5 13.2M346.3 469.4l-0.3 8.8M344.6 520.5l-0.6 15.4M343.5 551.2l-0.4 12.3M344 493.9l-0.6 15.5M342.6 490.4l-0.5 13.4M341.2 529.7l-0.5 15.3M340.3 556l-0.5 14.2M339.8 485l-0.4 9.9M339.4 496l-0.4 12.6M338.9 509.5l-0.3 10.6M334.4 509.1l-0.2 8.4M334.1 519.4l-0.3 9.1M332.2 572.2l-0.3 9.6M331 479l-0.5 13.3M328.4 552.6l-0.4 12.1M329 492.3l-0.5 14.9M327.5 537.6l-0.4 9.6M326.2 573.7l-0.4 11.4M328.4 468.3l-0.6 15.2M326.4 523.3l-0.3 9.3M325.7 543.9l-0.4 13.3M323.4 567.9l-0.5 14M324.8 484.4l-0.4 10.6M323.5 523.1l-0.5 11.6M321.5 579.6l-0.5 14.5M320.3 570.7l-0.4 9.8M319.5 549.4l-0.4 11.6M320.6 474.5l-0.3 11M320.2 486.9l-0.5 14.3M317.4 567.6l-0.4 11.8M318.5 492.8l-0.3 10.1M317.5 520.5l-0.3 10M316.4 554l-0.5 12.4M317.5 480.1l-0.6 15.6M316.4 509.6l-0.3 8.4M313.9 495.1l-0.4 11M313.5 507.3l-0.5 14.3M311.2 531.5l-0.6 14.5M311.4 480.4l-0.5 15.6M308.9 552.6l-0.3 9.5M308.1 531.6l-0.4 13.6M307.2 558.5l-0.4 12.1M308.8 469.7l-0.4 12.9M307.8 499.1l-0.4 9.7M306.4 537.5l-0.4 11.8M306 549.9l-0.4 10.3M305.8 512l-0.3 8.4M305.1 533.5l-0.5 13.1M305.7 472.4l-0.3 9.5" stroke="#ffffff" stroke-width="1.1" stroke-opacity="0.9" fill="none" stroke-linecap="round"/>
<path d="M429.2 546.8l-0.5 12.7M428.7 560.2l-0.3 9.1M428.9 512.9l-0.5 12.6M428.1 536.1l-0.5 12.9M427.5 550.9l-0.3 9.1M426.8 573.5l-0.5 13.8M429 466.1l-0.5 14.7M427.9 499l-0.5 12.5M427.4 513.4l-0.4 9.9M427.5 466.8l-0.4 9.7M426.1 506.6l-0.4 10.9M423.6 576.7l-0.5 15.6M425.9 468.6l-0.3 9.3M424.6 505.8l-0.5 14.2M422.5 480.1l-0.4 12.4M419.9 554.5l-0.3 8.1M417.8 487.1l-0.5 12.8M416.2 489.5l-0.5 13.9M415.7 504.1l-0.3 8.2M415.4 513.1l-0.4 10.3M414.6 534.2l-0.4 13.4M413.7 517.3l-0.4 11.1M412.1 564.9l-0.4 10.9M411.6 577.4l-0.3 9M412.4 468.2l-0.5 15.3M411.8 484.9l-0.4 13.3M409.8 499.9l-0.4 10.9M408.5 537.7l-0.6 15.6M406.8 542.6l-0.5 14.5M405.7 573.6l-0.4 12.8M406.7 503.1l-0.4 10.1M405.3 544.2l-0.4 11.3M405.3 500.9l-0.5 12.8M403.8 542.7l-0.4 13.1M405.1 463.5l-0.5 14.7M401.4 568.2l-0.3 9.1M401.1 578.3l-0.5 14.7M402 509l-0.5 13.3M401.5 523.9l-0.5 13.4M400.1 564.3l-0.4 10.3M399.6 576.1l-0.3 9.7M400.9 498l-0.3 8M400 523.1l-0.4 11.1M399.6 492.1l-0.4 11.7M398.9 468l-0.5 15.3M397.3 470.5l-0.4 12.3M395 536.1l-0.4 12.4M394.8 499.1l-0.4 12.8M392.8 556l-0.3 9.4M394.3 471.5l-0.5 14.3M393.7 487.2l-0.4 13M391.8 543.1l-0.4 11.3M390.9 567.4l-0.4 11.6M391.2 473.9l-0.3 10.1M389.6 521.2l-0.6 15.8M389 538l-0.3 8.1M389.6 477.4l-0.3 8.7M386.7 516.4l-0.4 13.4M386.2 531l-0.5 13.8M385.3 556.7l-0.4 12.6M384.8 570.2l-0.5 14.5M382.8 543.8l-0.5 14.5M382.2 560.2l-0.4 10.6M382.9 497.5l-0.4 12M382.1 520.2l-0.3 8.4M381 466.6l-0.4 10.6M380.5 478.9l-0.4 13M377.5 523.4l-0.4 9.9M376.7 501.6l-0.3 10.2M375.3 541.9l-0.4 12.1M373.1 563.1l-0.4 10.1M374.8 470l-0.4 11.8M371.9 554.7l-0.4 11.5M370.9 495.7l-0.5 15.1M367.4 554.9l-0.4 10.7M368.3 485.5l-0.5 12.9M366.3 543.2l-0.6 15.9M366.6 491.7l-0.5 14.2M362.6 561.4l-0.5 15.5M362.1 578l-0.5 11.9M362.2 529.7l-0.3 8.8M359.8 513.3l-0.4 12M359.3 526.7l-0.4 14.1M359.3 486.1l-0.4 10.1M358.9 497.1l-0.5 14M358.4 512.2l-0.6 15M353.2 531.1l-0.5 13.8M352.5 509.3l-0.5 13.8M350.7 516.4l-0.6 16M350.1 490.1l-0.4 12.8M347.9 553.5l-0.5 13.7M347.3 484l-0.4 11M346.9 496.4l-0.5 13.7M344.6 562l-0.3 8.1M344.3 571.1l-0.4 10.1M346 479l-0.5 14.6M345.1 505.5l-0.5 14M344 536.9l-0.5 12.5M342.5 579.1l-0.4 12.1M341.1 576.3l-0.5 15.7M342.1 505.1l-0.4 11.2M339.8 571.5l-0.5 13.6M338.5 564.2l-0.5 15.9M340.4 468.3l-0.6 15.9M338 493.1l-0.4 11.4M337.5 506.3l-0.5 15M337 522l-0.4 10.3M335.8 555.3l-0.5 14.6M336.7 487.4l-0.4 13M334.8 540.9l-0.4 11.2M333.7 530.3l-0.5 13.7M332.6 518.5l-0.4 13.4M332.2 488.3l-0.5 13M330.6 534l-0.4 9.8M330.2 544.8l-0.4 11.7M328 565.6l-0.5 12.5M326.7 559.2l-0.5 13.4M326.1 534.3l-0.3 8M326.3 483.4l-0.5 15.5M323 536l-0.5 14.3M321 549.5l-0.3 9M320.7 559.2l-0.4 10M320.1 534.3l-0.5 14.3M318.7 572.5l-0.5 15.1M319.7 502.8l-0.4 11.2M318.1 547.5l-0.3 8.2M319.4 466.8l-0.3 9.7M318.1 503.9l-0.5 14.9M315.7 531.1l-0.5 13.4M316.6 462.5l-0.5 14.1M314.5 520.2l-0.4 12.9M314 534.8l-0.5 14.3M311.7 516.8l-0.5 13.1M310.6 547l-0.4 10.8M310.4 465.8l-0.3 10.8M306.7 572.1l-0.3 9.3M306.9 524.8l-0.4 10.7M305.3 483.6l-0.5 15.7" stroke="#c2cbc3" stroke-width="1.1" stroke-opacity="0.9" fill="none" stroke-linecap="round"/></g>
<g clip-path="url(#bc)"><path d="M427.5 494.3l0 6.3M427.5 523.1l0 7M427.5 550.2l0 4.4M424.7 471.5l0 5.7M424.7 482.2l0 6.2M424.7 492.5l0 5M424.7 510.5l0 5.4M424.7 530.5l0 6.1M424.7 538.9l0 3.8M424.7 571.9l0 3.9M421.9 495.2l0 5.5M421.9 503.7l0 4M421.9 533.4l0 5M419.1 558.5l0 5.2M419.1 567.8l0 6.1M419.1 577.4l0 6.6M416.3 483l0 5.7M416.3 495.2l0 4.7M416.3 516.1l0 6.9M416.3 529.3l0 6.6M413.5 477.6l0 4.9M413.5 493.6l0 6.3M413.5 515.1l0 4.8M413.5 549.8l0 4.4M413.5 577.6l0 4.5M410.7 488.4l0 5.7M410.7 517l0 3.7M410.7 554.4l0 3.5M410.7 562.2l0 5.4M407.9 481.9l0 5.4M407.9 545.5l0 4.8M407.9 578.5l0 6.1M405.1 484.9l0 5.3M405.1 516.1l0 4M405.1 544l0 6.6M402.3 481.1l0 4.2M402.3 488.3l0 4.9M402.3 528l0 5.9M402.3 561.3l0 5.8M399.5 479.8l0 4.3M396.7 476.1l0 5.2M396.7 519.8l0 3.7M396.7 543.4l0 5.2M393.9 472.6l0 4.2M393.9 488.8l0 4.9M393.9 504.6l0 3.6M393.9 510.5l0 3.8M393.9 547.7l0 4.8M391.1 482.7l0 5M391.1 501.6l0 6.1M391.1 580.3l0 4.1M388.3 487.3l0 5.7M388.3 498.6l0 4.5M388.3 515.6l0 6M388.3 575.5l0 4.8M385.5 477.7l0 6.8M385.5 572.8l0 5.9M382.7 513.1l0 4.3M382.7 569.2l0 4.4M379.9 482.8l0 6.6M379.9 545.6l0 6.7M379.9 555.2l0 6.8M377.1 483.3l0 6.2M377.1 495.9l0 5.5M377.1 540.5l0 6.4M377.1 572.3l0 3.8M374.3 539.5l0 3.6M374.3 570.7l0 6.2M374.3 579.6l0 5.9M371.5 502.5l0 5.5M371.5 523.4l0 3.6M371.5 531l0 3.5M371.5 553l0 7M371.5 563l0 6.3M371.5 574.9l0 6.5M368.7 471.9l0 5.3M368.7 480.3l0 6.6M368.7 491l0 3.8M368.7 497.4l0 4.9M368.7 506.6l0 4.6M368.7 525.8l0 3.8M368.7 534.6l0 3.6M365.9 507.4l0 7M365.9 558.5l0 6.5M363.1 490.6l0 3.6M363.1 506.7l0 4.2M363.1 544.1l0 5.9M363.1 554.8l0 4.7M360.3 488.1l0 5.2M360.3 500.1l0 5.1M360.3 560.8l0 6.1M360.3 572.9l0 4.4M360.3 580.4l0 3.5M357.5 475.2l0 6M357.5 513.7l0 6.9M357.5 541.7l0 6.9M357.5 561.4l0 6.2M354.7 474.3l0 6.9M354.7 483.8l0 6.4M354.7 495.2l0 5.4M354.7 531.8l0 5.3M354.7 543.5l0 4.3M354.7 578.3l0 5.2M351.9 483.8l0 4.9M351.9 514.8l0 3.7M351.9 544.3l0 5.7M351.9 571.1l0 4.5M349.1 476.3l0 4.8M349.1 562.5l0 6.1M349.1 579l0 4.7M346.3 511.8l0 6M346.3 531.4l0 4.1M346.3 541.9l0 3.6M343.5 490.6l0 6M343.5 499.2l0 5.3M343.5 508.6l0 4.4M343.5 551.3l0 5.7M343.5 568.4l0 6.1M340.7 475.3l0 4M340.7 485.8l0 5.4M340.7 540.8l0 6.1M340.7 553.3l0 4.9M340.7 573.3l0 6.8M337.9 489l0 4.1M337.9 510.6l0 5.8M337.9 521l0 6.2M337.9 541.9l0 5.4M337.9 562l0 6.9M335.1 532.6l0 3.8M332.3 478.2l0 6.8M332.3 515.2l0 5.1M332.3 529.7l0 6.3M332.3 545.9l0 4.6M329.5 529.1l0 6.4M329.5 550.1l0 6.9M329.5 563.6l0 4M326.7 488.9l0 5.5M326.7 535.5l0 5M326.7 562.5l0 4M323.9 476.3l0 5.2M323.9 487l0 4.1M323.9 495.2l0 6.1M323.9 527.5l0 4M323.9 534l0 6.2M323.9 553.8l0 6.1M323.9 563.8l0 6.5M321.1 483.3l0 4.3M321.1 509.6l0 4.1M321.1 577l0 4M318.3 484l0 5.5M318.3 506.1l0 5.7M318.3 514.6l0 5.4M318.3 543.7l0 6.2M315.5 486.8l0 5.2M315.5 513.1l0 6.6M315.5 573.5l0 5.2M312.7 493.3l0 5.7M312.7 513.2l0 5.4M312.7 524.6l0 4.4M312.7 546.3l0 5.4M312.7 557.6l0 3.6M312.7 567.2l0 6.4M309.9 471.3l0 6.4M309.9 522.9l0 6.7M309.9 562l0 4.9M309.9 570l0 4.3M307.1 481.5l0 3.7M307.1 570.5l0 6" stroke="#9aa69d" stroke-width="0.9" stroke-opacity="0.5" fill="none" stroke-linecap="round"/>
<path d="M427.5 515.2l0 4.7M427.5 533l0 4.6M427.5 540.7l0 6.8M424.7 555.6l0 4.4M421.9 473.9l0 5.6M421.9 486l0 5M421.9 513.2l0 4.8M421.9 540.8l0 6.1M421.9 564.4l0 3.9M419.1 493l0 5.1M419.1 502.6l0 4.4M419.1 512.2l0 6.6M419.1 521.3l0 5.8M419.1 532.3l0 5.8M419.1 552l0 3.6M416.3 476l0 3.6M416.3 506.4l0 4.7M416.3 542.9l0 6.6M416.3 565.8l0 4.3M416.3 572.6l0 6.8M413.5 485.6l0 5.7M413.5 536.9l0 6.1M413.5 560.2l0 4.3M410.7 479.9l0 3.7M410.7 499.4l0 5.7M410.7 509.2l0 5.3M410.7 524.9l0 4.2M410.7 534.4l0 5.4M410.7 541.8l0 5.6M410.7 570l0 3.5M407.9 493.1l0 4.9M407.9 503.9l0 4.6M407.9 533.4l0 6.9M405.1 494.5l0 6.3M405.1 505.6l0 5.5M405.1 524l0 3.9M405.1 553.8l0 3.9M405.1 564.1l0 6.7M405.1 573.9l0 4.9M402.3 499.1l0 6.9M402.3 509.2l0 6.7M402.3 519.3l0 4.2M402.3 539.7l0 6.2M399.5 499.2l0 3.8M399.5 509.6l0 6.3M399.5 520.7l0 5.8M399.5 543.3l0 5.7M399.5 555.8l0 6.3M399.5 573.6l0 7M396.7 486.6l0 6.5M396.7 551l0 6.9M393.9 479.7l0 5.9M393.9 516.5l0 4.7M393.9 528.1l0 5.5M393.9 539l0 5.6M393.9 557l0 4M393.9 567.1l0 5.8M393.9 575.9l0 6.3M391.1 550.9l0 4.3M391.1 569.8l0 5M388.3 477.4l0 5.5M388.3 506.2l0 3.9M388.3 531.4l0 5.1M385.5 487.5l0 4.4M385.5 495.8l0 4.3M385.5 506.9l0 6M385.5 534.4l0 6.8M385.5 547.8l0 5.5M382.7 477.7l0 6.2M382.7 488.5l0 6.3M382.7 501.5l0 5.3M382.7 520.2l0 6.4M382.7 579.9l0 5.1M379.9 472.5l0 5.1M379.9 492.8l0 5.4M379.9 502.4l0 4.5M379.9 512.3l0 5.8M379.9 534.3l0 5.1M379.9 567.9l0 3.6M377.1 473.9l0 5M377.1 579.4l0 5.6M374.3 473.4l0 4.1M374.3 489.4l0 6.2M374.3 512.5l0 6M374.3 530.8l0 6.5M374.3 548.4l0 4.8M374.3 560.1l0 4.4M371.5 471.4l0 6.7M371.5 481.3l0 6.5M371.5 514.2l0 4.4M371.5 541.4l0 6.5M368.7 518.1l0 3.7M368.7 551.4l0 6.1M368.7 562.7l0 6.6M368.7 571.7l0 5M365.9 497l0 3.7M365.9 527.7l0 5.7M365.9 538.7l0 4.1M365.9 571.5l0 6.6M363.1 497.4l0 5.2M363.1 561.9l0 5.8M363.1 570.2l0 5.6M360.3 476.7l0 6M360.3 519.1l0 5.5M360.3 530.9l0 6M357.5 484.9l0 6.2M357.5 494.8l0 6M357.5 504.7l0 5.2M357.5 525.3l0 4.4M354.7 505.7l0 3.9M354.7 568.9l0 6.8M351.9 472.4l0 4.8M351.9 503.9l0 5M351.9 533.1l0 5.9M351.9 552.8l0 3.8M351.9 562l0 4.3M349.1 485.8l0 4.6M349.1 512.2l0 5.9M349.1 530.1l0 4.8M349.1 540.4l0 5.9M349.1 548.3l0 4.7M346.3 483.1l0 3.7M346.3 492.7l0 4.2M346.3 523.2l0 5.2M343.5 480.2l0 6.3M343.5 524.7l0 6M343.5 536.9l0 4.6M343.5 543.6l0 4.3M343.5 559l0 4.9M343.5 578.7l0 5M340.7 507.6l0 5M340.7 530.5l0 4.8M340.7 564.6l0 5.4M337.9 499.3l0 4.3M337.9 552.3l0 4.7M335.1 490.4l0 3.8M335.1 499.6l0 4.9M335.1 511.4l0 6M335.1 569.9l0 3.6M332.3 487.6l0 3.8M332.3 497.7l0 6.5M332.3 509.2l0 3.7M332.3 572.4l0 5.3M329.5 485.1l0 4.6M329.5 496.1l0 5M329.5 515.9l0 6.2M329.5 540.1l0 3.6M329.5 571.7l0 6.7M326.7 471.8l0 5.5M326.7 506.2l0 5.4M326.7 516.8l0 5.2M326.7 524l0 4.7M326.7 544.8l0 3.7M326.7 553.6l0 3.9M323.9 503.9l0 5.3M321.1 473.1l0 3.8M321.1 500.3l0 6.3M321.1 526.2l0 3.8M321.1 545.7l0 4.9M318.3 474.5l0 6.1M318.3 494.4l0 4.9M318.3 534.2l0 3.8M318.3 553.9l0 4.6M318.3 573.2l0 5.6M315.5 477.1l0 6M315.5 504l0 3.8M315.5 538.2l0 4.8M315.5 545.5l0 5.6M312.7 484.6l0 6M312.7 503l0 5.3M312.7 533.7l0 6.2M312.7 580.4l0 7M309.9 482l0 3.7M309.9 504.2l0 6.6M309.9 514.1l0 5.8M309.9 535.6l0 3.6M309.9 550.5l0 5M307.1 470.1l0 6M307.1 489.8l0 4.7M307.1 497.8l0 6.9M307.1 511.3l0 4M307.1 521.8l0 4.4M307.1 542.5l0 5.8M307.1 550.4l0 5.7" stroke="#aab5ac" stroke-width="0.9" stroke-opacity="0.5" fill="none" stroke-linecap="round"/>
<path d="M427.5 477.6l0 3.7M427.5 484.5l0 5.4M427.5 507.5l0 3.9M427.5 557.3l0 3.8M427.5 567.8l0 4.9M427.5 579.6l0 6.5M424.7 500.1l0 4.8M424.7 519.1l0 6.5M424.7 547.3l0 4.2M424.7 564l0 4M421.9 523l0 5.5M421.9 552.3l0 7M421.9 571.4l0 5.6M419.1 473.6l0 5.1M419.1 481.6l0 6.7M419.1 542l0 6.1M416.3 553.3l0 6.6M413.5 505.8l0 4.6M413.5 525.1l0 5.4M413.5 568.2l0 5.7M410.7 579.6l0 5.5M407.9 513.5l0 4.4M407.9 523.8l0 6.5M407.9 556.4l0 3.8M407.9 567.2l0 4.7M405.1 474.8l0 3.9M405.1 533l0 4.3M402.3 548.2l0 6.8M402.3 571.7l0 6.7M399.5 488.6l0 4.5M399.5 532.1l0 5.3M399.5 567.1l0 3.6M396.7 497.8l0 6.1M396.7 509l0 6.6M396.7 525.8l0 5.3M396.7 536.8l0 4.4M396.7 561.4l0 6M396.7 570.5l0 4.3M396.7 579.2l0 5.2M393.9 496.1l0 6.4M391.1 490.5l0 5.7M391.1 512.4l0 4.4M391.1 521.8l0 3.9M391.1 529l0 3.8M391.1 539l0 5.7M391.1 559.4l0 4.8M388.3 524l0 3.5M388.3 543.4l0 5M388.3 553.7l0 5.7M388.3 565.9l0 4.1M385.5 519.8l0 4.9M385.5 528.5l0 3.6M385.5 560.2l0 5.7M382.7 531l0 5.6M382.7 542.9l0 5.5M382.7 550.5l0 6.3M382.7 561.8l0 5.2M379.9 520.8l0 6.9M379.9 574.2l0 6.2M377.1 507l0 4.2M377.1 517l0 6.1M377.1 528.9l0 5.1M377.1 549.3l0 5.6M377.1 556.9l0 4.3M377.1 565.1l0 3.5M374.3 479.8l0 5.9M374.3 500.7l0 5M374.3 522l0 3.9M371.5 490.7l0 6.7M368.7 541.1l0 6.8M365.9 478.9l0 4.6M365.9 486.8l0 3.6M365.9 518.5l0 4.1M365.9 548.1l0 4.6M363.1 474.2l0 4.6M363.1 481.2l0 5.5M363.1 516l0 6M363.1 527.8l0 3.9M363.1 536.2l0 5.9M360.3 508l0 5.8M360.3 543.4l0 5.7M360.3 553.6l0 5.2M357.5 534.1l0 3.8M357.5 552.2l0 3.8M357.5 572.3l0 3.8M354.7 515.3l0 4.5M354.7 523l0 6.2M354.7 553.7l0 4.3M354.7 560.2l0 4.3M351.9 493.9l0 6.1M351.9 523.6l0 4.8M349.1 497.1l0 4.4M349.1 504.3l0 5.8M349.1 521.3l0 3.9M349.1 556.2l0 3.7M349.1 571.5l0 5M346.3 473l0 5.1M346.3 502l0 5.2M346.3 547.6l0 6.6M346.3 560.3l0 5.5M346.3 568.8l0 6.6M346.3 580.1l0 5.5M343.5 471.1l0 5.8M343.5 515.5l0 3.5M340.7 498l0 6.5M340.7 519l0 6.4M337.9 478.7l0 5.4M337.9 533.9l0 5.9M337.9 571.9l0 6.1M337.9 580.4l0 6.5M335.1 478.5l0 5.9M335.1 523l0 6.8M335.1 541.1l0 5.5M335.1 553.3l0 5.3M335.1 561.7l0 5M335.1 576.2l0 4.5M332.3 523.6l0 3.7M332.3 538l0 4.7M332.3 554.4l0 4.2M332.3 563.4l0 5.7M329.5 476.3l0 3.9M329.5 507.3l0 4.5M326.7 482.7l0 3.9M326.7 496.9l0 4.7M326.7 572.4l0 4.2M323.9 515.1l0 6.5M323.9 545.1l0 4.2M323.9 576.7l0 4.4M321.1 490.2l0 6.2M321.1 518l0 5.2M321.1 535l0 5.3M321.1 556.4l0 5.2M321.1 564.8l0 7M318.3 524.7l0 4.9M318.3 564.5l0 5.2M315.5 495.4l0 4.7M315.5 526.5l0 6.5M315.5 554.7l0 6M315.5 564.1l0 5.3M312.7 475.8l0 6.2M309.9 489.6l0 4M309.9 496.1l0 4.6M309.9 542.5l0 3.7M309.9 577.5l0 3.6M307.1 531.9l0 6.4M307.1 561.3l0 4.7" stroke="#b8c3ba" stroke-width="0.9" stroke-opacity="0.5" fill="none" stroke-linecap="round"/></g>
<path d="M324.1 534.8l-0.5 15.4M328.5 542.7l0 8.3M329.6 547.7l-0.1 3.8M346 557.7l0 14.9M347.1 558.2l-0.5 13.1M364.5 566.1l0.5 14.7M366.2 566.6l-0.2 13.8M369.4 568l-0.5 11.5M378.8 566.5l-0.1 3.9M385 559.2l-0.1 18.3M405.7 543.9l0.3 7.6M407.3 544.9l-0.2 14.2M423.7 527.5l-0.4 9" stroke="#e8ede7" stroke-width="1.2" fill="none" stroke-linecap="round"/>
<path d="M308.3 517.4l0.2 13M311.2 525.4l-0.1 17.1M315.7 533.8l-0.4 9.6M317.2 534.3l-0.1 10.4M318.6 535.3l-0.5 5.3M335.9 549.9l0.2 7M340.8 551.4l0 17.2M342.3 554.3l0.4 10.8M348.9 560.5l-0.4 5.5M351.7 559.1l-0.2 16.2M355.5 564.3l0.4 13.7M358.2 559.9l0.2 15.1M362.3 568.3l0.1 6.2M370.8 562.8l0.4 12.3M375.8 566.2l0.4 6.2M377.6 560.5l0.4 10.7M381.6 566.9l0.2 10.7M388.4 558.9l-0.2 12.9M389.8 559.2l-0.4 12.2M392.8 550.6l0 20M394.5 552.7l-0.2 13.4M395.9 549.2l-0.4 10.9M398.6 548l0.5 17.3M399.8 546.2l0 15.1M401.6 547.2l0.2 10M404.4 548.6l0.4 4.7M408.9 540.9l-0.2 16.8M410.2 539.2l0.1 12.7M413.2 538.3l0.2 13.5M414.8 537.9l0.3 8.6M417.7 535.4l-0.2 15.4M420.6 534.6l-0.2 10.2M422.1 527.7l-0.3 12.9" stroke="#f4f6f2" stroke-width="1.2" fill="none" stroke-linecap="round"/>
<path d="M307 512.2l-0.1 13M309.4 529.7l0 12M320.3 532.7l-0.4 16.1M321.4 534.3l-0.3 7.5M325.6 538.7l-0.1 11M330.9 548.2l-0.1 10.6M334.3 545.3l0 16.8M338.5 549.8l-0.4 19.3M356.7 563.3l0.2 8.9M361 561.8l0.4 15.4M363.4 569.2l0.3 11.2M374.2 563.2l0.1 13.1M380.5 562.4l0.4 7.5M386.7 563.6l0 7.2M391.2 556l-0.2 11.9M397.6 552.7l-0.3 6.4M402.8 546.4l0.3 14.6M419.3 531.5l0.4 9.4M426.7 518.7l-0.4 16.4" stroke="#b9c3bb" stroke-width="1.2" fill="none" stroke-linecap="round"/>
<path d="M312.7 532.1l0.1 11.3M314.4 532l0.4 11.5M322.8 537.4l0.2 9.2M327 541.4l0.4 11.4M332.7 546.5l-0.4 15.8M337.4 551.2l0 15.8M339.7 554l0.1 13.6M343.3 554.4l0.4 10.7M344.8 553.4l0.1 15.6M350.1 556.7l-0.1 11.9M353 556.7l0.1 11.1M354.4 561.9l-0.1 12.9M359.9 560.5l0.1 14.3M367.7 566.3l0.3 15.8M372.5 568.2l0.2 10.2M383.3 565.7l0.2 6.8M411.9 534.9l0.5 10.9M416.4 534.9l-0.3 16.3M425.2 522.3l0.2 18.3" stroke="#a3aea5" stroke-width="1.2" fill="none" stroke-linecap="round"/>
</g>
</svg>
</body></html>
